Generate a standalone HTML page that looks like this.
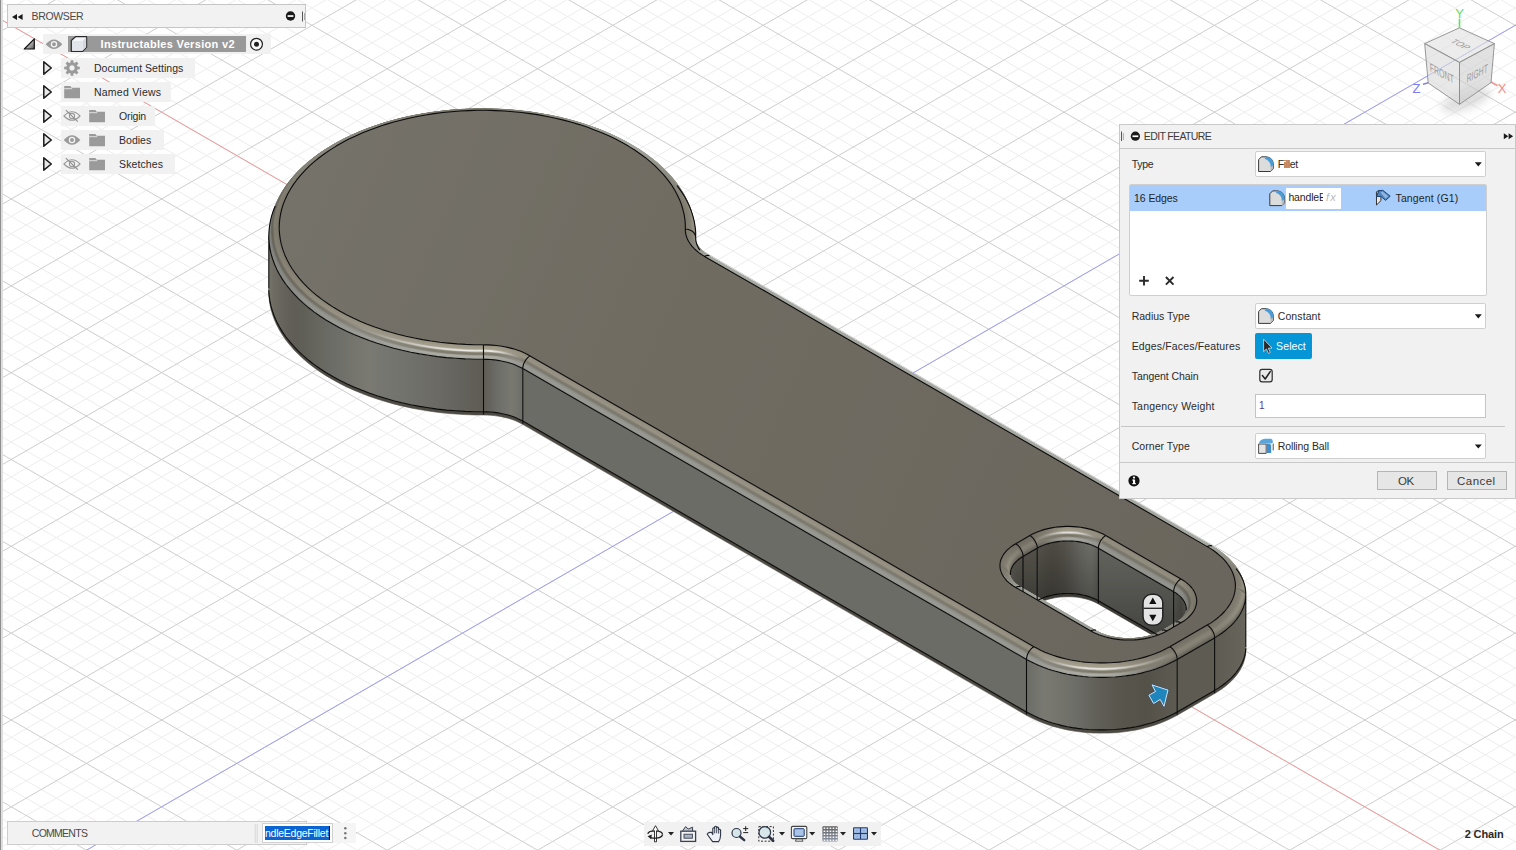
<!DOCTYPE html>
<html><head><meta charset="utf-8"><title>Fusion 360</title>
<style>
html,body{margin:0;padding:0;background:#fff;}
body{width:1516px;height:850px;overflow:hidden;position:relative;font-family:"Liberation Sans",sans-serif;font-size:12px;color:#333;}

.b{position:absolute;box-sizing:border-box;}
.t{position:absolute;white-space:nowrap;font-family:"Liberation Sans",sans-serif;}
svg.ic{position:absolute;left:0;top:0;overflow:visible;}

</style></head><body>
<svg width="1516" height="850" viewBox="0 0 1516 850" style="position:absolute;left:0;top:0"><path d="M-2909.0,579.6L555.1,2579.6M-2909.0,339.4L555.1,-1660.6M-2894.0,570.9L570.1,2570.9M-2894.0,348.1L570.1,-1651.9M-2878.9,562.2L585.2,2562.2M-2878.9,356.8L585.2,-1643.2M-2863.9,553.6L600.2,2553.6M-2863.9,365.4L600.2,-1634.6M-2833.8,536.2L630.3,2536.2M-2833.8,382.8L630.3,-1617.2M-2818.8,527.5L645.3,2527.5M-2818.8,391.5L645.3,-1608.5M-2803.7,518.8L660.4,2518.8M-2803.7,400.2L660.4,-1599.8M-2788.7,510.1L675.4,2510.1M-2788.7,408.9L675.4,-1591.1M-2758.6,492.8L705.5,2492.8M-2758.6,426.2L705.5,-1573.8M-2743.6,484.1L720.5,2484.1M-2743.6,434.9L720.5,-1565.1M-2728.5,475.4L735.6,2475.4M-2728.5,443.6L735.6,-1556.4M-2713.5,466.7L750.6,2466.7M-2713.5,452.3L750.6,-1547.7M-2683.4,449.4L780.7,2449.4M-2683.4,469.6L780.7,-1530.4M-2668.4,440.7L795.7,2440.7M-2668.4,478.3L795.7,-1521.7M-2653.3,432.0L810.8,2432.0M-2653.3,487.0L810.8,-1513.0M-2638.3,423.3L825.8,2423.3M-2638.3,495.7L825.8,-1504.3M-2608.2,405.9L855.9,2405.9M-2608.2,513.1L855.9,-1486.9M-2593.2,397.3L870.9,2397.3M-2593.2,521.7L870.9,-1478.3M-2578.1,388.6L886.0,2388.6M-2578.1,530.4L886.0,-1469.6M-2563.1,379.9L901.0,2379.9M-2563.1,539.1L901.0,-1460.9M-2533.0,362.5L931.1,2362.5M-2533.0,556.5L931.1,-1443.5M-2518.0,353.8L946.1,2353.8M-2518.0,565.2L946.1,-1434.8M-2502.9,345.2L961.2,2345.2M-2502.9,573.8L961.2,-1426.2M-2487.9,336.5L976.2,2336.5M-2487.9,582.5L976.2,-1417.5M-2457.8,319.1L1006.3,2319.1M-2457.8,599.9L1006.3,-1400.1M-2442.8,310.4L1021.3,2310.4M-2442.8,608.6L1021.3,-1391.4M-2427.7,301.8L1036.4,2301.8M-2427.7,617.2L1036.4,-1382.8M-2412.7,293.1L1051.4,2293.1M-2412.7,625.9L1051.4,-1374.1M-2382.6,275.7L1081.5,2275.7M-2382.6,643.3L1081.5,-1356.7M-2367.6,267.0L1096.5,2267.0M-2367.6,652.0L1096.5,-1348.0M-2352.5,258.3L1111.6,2258.3M-2352.5,660.7L1111.6,-1339.3M-2337.5,249.7L1126.6,2249.7M-2337.5,669.3L1126.6,-1330.7M-2307.4,232.3L1156.7,2232.3M-2307.4,686.7L1156.7,-1313.3M-2292.4,223.6L1171.7,2223.6M-2292.4,695.4L1171.7,-1304.6M-2277.3,214.9L1186.8,2214.9M-2277.3,704.1L1186.8,-1295.9M-2262.3,206.2L1201.8,2206.2M-2262.3,712.8L1201.8,-1287.2M-2232.2,188.9L1231.9,2188.9M-2232.2,730.1L1231.9,-1269.9M-2217.2,180.2L1246.9,2180.2M-2217.2,738.8L1246.9,-1261.2M-2202.1,171.5L1262.0,2171.5M-2202.1,747.5L1262.0,-1252.5M-2187.1,162.8L1277.0,2162.8M-2187.1,756.2L1277.0,-1243.8M-2157.0,145.5L1307.1,2145.5M-2157.0,773.5L1307.1,-1226.5M-2142.0,136.8L1322.1,2136.8M-2142.0,782.2L1322.1,-1217.8M-2126.9,128.1L1337.2,2128.1M-2126.9,790.9L1337.2,-1209.1M-2111.9,119.4L1352.2,2119.4M-2111.9,799.6L1352.2,-1200.4M-2081.8,102.0L1382.3,2102.0M-2081.8,817.0L1382.3,-1183.0M-2066.8,93.4L1397.3,2093.4M-2066.8,825.6L1397.3,-1174.4M-2051.7,84.7L1412.4,2084.7M-2051.7,834.3L1412.4,-1165.7M-2036.7,76.0L1427.4,2076.0M-2036.7,843.0L1427.4,-1157.0M-2006.6,58.6L1457.5,2058.6M-2006.6,860.4L1457.5,-1139.6M-1991.6,49.9L1472.5,2049.9M-1991.6,869.1L1472.5,-1130.9M-1976.5,41.3L1487.6,2041.3M-1976.5,877.7L1487.6,-1122.3M-1961.5,32.6L1502.6,2032.6M-1961.5,886.4L1502.6,-1113.6M-1931.4,15.2L1532.7,2015.2M-1931.4,903.8L1532.7,-1096.2M-1916.4,6.5L1547.7,2006.5M-1916.4,912.5L1547.7,-1087.5M-1901.3,-2.2L1562.8,1997.8M-1901.3,921.2L1562.8,-1078.8M-1886.3,-10.8L1577.8,1989.2M-1886.3,929.8L1577.8,-1070.2M-1856.2,-28.2L1607.9,1971.8M-1856.2,947.2L1607.9,-1052.8M-1841.2,-36.9L1622.9,1963.1M-1841.2,955.9L1622.9,-1044.1M-1826.1,-45.6L1638.0,1954.4M-1826.1,964.6L1638.0,-1035.4M-1811.1,-54.3L1653.0,1945.7M-1811.1,973.3L1653.0,-1026.7M-1781.0,-71.6L1683.1,1928.4M-1781.0,990.6L1683.1,-1009.4M-1766.0,-80.3L1698.1,1919.7M-1766.0,999.3L1698.1,-1000.7M-1750.9,-89.0L1713.2,1911.0M-1750.9,1008.0L1713.2,-992.0M-1735.9,-97.7L1728.2,1902.3M-1735.9,1016.7L1728.2,-983.3M-1705.8,-115.0L1758.3,1885.0M-1705.8,1034.0L1758.3,-966.0M-1690.8,-123.7L1773.3,1876.3M-1690.8,1042.7L1773.3,-957.3M-1675.7,-132.4L1788.4,1867.6M-1675.7,1051.4L1788.4,-948.6M-1660.7,-141.1L1803.4,1858.9M-1660.7,1060.1L1803.4,-939.9M-1630.6,-158.4L1833.5,1841.6M-1630.6,1077.4L1833.5,-922.6M-1615.6,-167.1L1848.5,1832.9M-1615.6,1086.1L1848.5,-913.9M-1600.5,-175.8L1863.6,1824.2M-1600.5,1094.8L1863.6,-905.2M-1585.5,-184.5L1878.6,1815.5M-1585.5,1103.5L1878.6,-896.5M-1555.4,-201.9L1908.7,1798.1M-1555.4,1120.9L1908.7,-879.1M-1540.4,-210.5L1923.7,1789.5M-1540.4,1129.5L1923.7,-870.5M-1525.3,-219.2L1938.8,1780.8M-1525.3,1138.2L1938.8,-861.8M-1510.3,-227.9L1953.8,1772.1M-1510.3,1146.9L1953.8,-853.1M-1480.2,-245.3L1983.9,1754.7M-1480.2,1164.3L1983.9,-835.7M-1465.2,-254.0L1998.9,1746.0M-1465.2,1173.0L1998.9,-827.0M-1450.1,-262.6L2014.0,1737.4M-1450.1,1181.6L2014.0,-818.4M-1435.1,-271.3L2029.0,1728.7M-1435.1,1190.3L2029.0,-809.7M-1405.0,-288.7L2059.1,1711.3M-1405.0,1207.7L2059.1,-792.3M-1390.0,-297.4L2074.1,1702.6M-1390.0,1216.4L2074.1,-783.6M-1374.9,-306.1L2089.2,1693.9M-1374.9,1225.1L2089.2,-774.9M-1359.9,-314.7L2104.2,1685.3M-1359.9,1233.7L2104.2,-766.3M-1329.8,-332.1L2134.3,1667.9M-1329.8,1251.1L2134.3,-748.9M-1314.8,-340.8L2149.3,1659.2M-1314.8,1259.8L2149.3,-740.2M-1299.7,-349.5L2164.4,1650.5M-1299.7,1268.5L2164.4,-731.5M-1284.7,-358.2L2179.4,1641.8M-1284.7,1277.2L2179.4,-722.8M-1254.6,-375.5L2209.5,1624.5M-1254.6,1294.5L2209.5,-705.5M-1239.6,-384.2L2224.5,1615.8M-1239.6,1303.2L2224.5,-696.8M-1224.5,-392.9L2239.6,1607.1M-1224.5,1311.9L2239.6,-688.1M-1209.5,-401.6L2254.6,1598.4M-1209.5,1320.6L2254.6,-679.4M-1179.4,-418.9L2284.7,1581.1M-1179.4,1337.9L2284.7,-662.1M-1164.4,-427.6L2299.7,1572.4M-1164.4,1346.6L2299.7,-653.4M-1149.3,-436.3L2314.8,1563.7M-1149.3,1355.3L2314.8,-644.7M-1134.3,-445.0L2329.8,1555.0M-1134.3,1364.0L2329.8,-636.0M-1104.2,-462.4L2359.9,1537.6M-1104.2,1381.4L2359.9,-618.6M-1089.2,-471.0L2374.9,1529.0M-1089.2,1390.0L2374.9,-610.0M-1074.1,-479.7L2390.0,1520.3M-1074.1,1398.7L2390.0,-601.3M-1059.1,-488.4L2405.0,1511.6M-1059.1,1407.4L2405.0,-592.6M-1029.0,-505.8L2435.1,1494.2M-1029.0,1424.8L2435.1,-575.2M-1014.0,-514.5L2450.1,1485.5M-1014.0,1433.5L2450.1,-566.5M-998.9,-523.1L2465.2,1476.9M-998.9,1442.1L2465.2,-557.9M-983.9,-531.8L2480.2,1468.2M-983.9,1450.8L2480.2,-549.2M-953.8,-549.2L2510.3,1450.8M-953.8,1468.2L2510.3,-531.8M-938.8,-557.9L2525.3,1442.1M-938.8,1476.9L2525.3,-523.1M-923.7,-566.5L2540.4,1433.5M-923.7,1485.5L2540.4,-514.5M-908.7,-575.2L2555.4,1424.8M-908.7,1494.2L2555.4,-505.8M-878.6,-592.6L2585.5,1407.4M-878.6,1511.6L2585.5,-488.4M-863.6,-601.3L2600.5,1398.7M-863.6,1520.3L2600.5,-479.7M-848.5,-610.0L2615.6,1390.0M-848.5,1529.0L2615.6,-471.0M-833.5,-618.6L2630.6,1381.4M-833.5,1537.6L2630.6,-462.4M-803.4,-636.0L2660.7,1364.0M-803.4,1555.0L2660.7,-445.0M-788.4,-644.7L2675.7,1355.3M-788.4,1563.7L2675.7,-436.3M-773.3,-653.4L2690.8,1346.6M-773.3,1572.4L2690.8,-427.6M-758.3,-662.1L2705.8,1337.9M-758.3,1581.1L2705.8,-418.9M-728.2,-679.4L2735.9,1320.6M-728.2,1598.4L2735.9,-401.6M-713.2,-688.1L2750.9,1311.9M-713.2,1607.1L2750.9,-392.9M-698.1,-696.8L2766.0,1303.2M-698.1,1615.8L2766.0,-384.2M-683.1,-705.5L2781.0,1294.5M-683.1,1624.5L2781.0,-375.5M-653.0,-722.8L2811.1,1277.2M-653.0,1641.8L2811.1,-358.2M-638.0,-731.5L2826.1,1268.5M-638.0,1650.5L2826.1,-349.5M-622.9,-740.2L2841.2,1259.8M-622.9,1659.2L2841.2,-340.8M-607.9,-748.9L2856.2,1251.1M-607.9,1667.9L2856.2,-332.1M-577.8,-766.3L2886.3,1233.7M-577.8,1685.3L2886.3,-314.7M-562.8,-774.9L2901.3,1225.1M-562.8,1693.9L2901.3,-306.1M-547.7,-783.6L2916.4,1216.4M-547.7,1702.6L2916.4,-297.4M-532.7,-792.3L2931.4,1207.7M-532.7,1711.3L2931.4,-288.7M-502.6,-809.7L2961.5,1190.3M-502.6,1728.7L2961.5,-271.3M-487.6,-818.4L2976.5,1181.6M-487.6,1737.4L2976.5,-262.6M-472.5,-827.0L2991.6,1173.0M-472.5,1746.0L2991.6,-254.0M-457.5,-835.7L3006.6,1164.3M-457.5,1754.7L3006.6,-245.3M-427.4,-853.1L3036.7,1146.9M-427.4,1772.1L3036.7,-227.9M-412.4,-861.8L3051.7,1138.2M-412.4,1780.8L3051.7,-219.2M-397.3,-870.5L3066.8,1129.5M-397.3,1789.5L3066.8,-210.5M-382.3,-879.1L3081.8,1120.9M-382.3,1798.1L3081.8,-201.9M-352.2,-896.5L3111.9,1103.5M-352.2,1815.5L3111.9,-184.5M-337.2,-905.2L3126.9,1094.8M-337.2,1824.2L3126.9,-175.8M-322.1,-913.9L3142.0,1086.1M-322.1,1832.9L3142.0,-167.1M-307.1,-922.6L3157.0,1077.4M-307.1,1841.6L3157.0,-158.4M-277.0,-939.9L3187.1,1060.1M-277.0,1858.9L3187.1,-141.1M-262.0,-948.6L3202.1,1051.4M-262.0,1867.6L3202.1,-132.4M-246.9,-957.3L3217.2,1042.7M-246.9,1876.3L3217.2,-123.7M-231.9,-966.0L3232.2,1034.0M-231.9,1885.0L3232.2,-115.0M-201.8,-983.3L3262.3,1016.7M-201.8,1902.3L3262.3,-97.7M-186.8,-992.0L3277.3,1008.0M-186.8,1911.0L3277.3,-89.0M-171.7,-1000.7L3292.4,999.3M-171.7,1919.7L3292.4,-80.3M-156.7,-1009.4L3307.4,990.6M-156.7,1928.4L3307.4,-71.6M-126.6,-1026.7L3337.5,973.3M-126.6,1945.7L3337.5,-54.3M-111.6,-1035.4L3352.5,964.6M-111.6,1954.4L3352.5,-45.6M-96.5,-1044.1L3367.6,955.9M-96.5,1963.1L3367.6,-36.9M-81.5,-1052.8L3382.6,947.2M-81.5,1971.8L3382.6,-28.2M-51.4,-1070.2L3412.7,929.8M-51.4,1989.2L3412.7,-10.8M-36.4,-1078.8L3427.7,921.2M-36.4,1997.8L3427.7,-2.2M-21.3,-1087.5L3442.8,912.5M-21.3,2006.5L3442.8,6.5M-6.3,-1096.2L3457.8,903.8M-6.3,2015.2L3457.8,15.2M23.8,-1113.6L3487.9,886.4M23.8,2032.6L3487.9,32.6M38.8,-1122.3L3502.9,877.7M38.8,2041.3L3502.9,41.3M53.9,-1130.9L3518.0,869.1M53.9,2049.9L3518.0,49.9M68.9,-1139.6L3533.0,860.4M68.9,2058.6L3533.0,58.6M99.0,-1157.0L3563.1,843.0M99.0,2076.0L3563.1,76.0M114.0,-1165.7L3578.1,834.3M114.0,2084.7L3578.1,84.7M129.1,-1174.4L3593.2,825.6M129.1,2093.4L3593.2,93.4M144.1,-1183.0L3608.2,817.0M144.1,2102.0L3608.2,102.0M174.2,-1200.4L3638.3,799.6M174.2,2119.4L3638.3,119.4M189.2,-1209.1L3653.3,790.9M189.2,2128.1L3653.3,128.1M204.3,-1217.8L3668.4,782.2M204.3,2136.8L3668.4,136.8M219.3,-1226.5L3683.4,773.5M219.3,2145.5L3683.4,145.5M249.4,-1243.8L3713.5,756.2M249.4,2162.8L3713.5,162.8M264.4,-1252.5L3728.5,747.5M264.4,2171.5L3728.5,171.5M279.5,-1261.2L3743.6,738.8M279.5,2180.2L3743.6,180.2M294.5,-1269.9L3758.6,730.1M294.5,2188.9L3758.6,188.9M324.6,-1287.2L3788.7,712.8M324.6,2206.2L3788.7,206.2M339.6,-1295.9L3803.7,704.1M339.6,2214.9L3803.7,214.9M354.7,-1304.6L3818.8,695.4M354.7,2223.6L3818.8,223.6M369.7,-1313.3L3833.8,686.7M369.7,2232.3L3833.8,232.3M399.8,-1330.7L3863.9,669.3M399.8,2249.7L3863.9,249.7M414.8,-1339.3L3878.9,660.7M414.8,2258.3L3878.9,258.3M429.9,-1348.0L3894.0,652.0M429.9,2267.0L3894.0,267.0M444.9,-1356.7L3909.0,643.3M444.9,2275.7L3909.0,275.7M475.0,-1374.1L3939.1,625.9M475.0,2293.1L3939.1,293.1M490.0,-1382.8L3954.1,617.2M490.0,2301.8L3954.1,301.8M505.1,-1391.4L3969.2,608.6M505.1,2310.4L3969.2,310.4M520.1,-1400.1L3984.2,599.9M520.1,2319.1L3984.2,319.1M550.2,-1417.5L4014.3,582.5M550.2,2336.5L4014.3,336.5M565.2,-1426.2L4029.3,573.8M565.2,2345.2L4029.3,345.2M580.3,-1434.8L4044.4,565.2M580.3,2353.8L4044.4,353.8M595.3,-1443.5L4059.4,556.5M595.3,2362.5L4059.4,362.5M625.4,-1460.9L4089.5,539.1M625.4,2379.9L4089.5,379.9M640.4,-1469.6L4104.5,530.4M640.4,2388.6L4104.5,388.6M655.5,-1478.3L4119.6,521.7M655.5,2397.3L4119.6,397.3M670.5,-1486.9L4134.6,513.1M670.5,2405.9L4134.6,405.9M700.6,-1504.3L4164.7,495.7M700.6,2423.3L4164.7,423.3M715.6,-1513.0L4179.7,487.0M715.6,2432.0L4179.7,432.0M730.7,-1521.7L4194.8,478.3M730.7,2440.7L4194.8,440.7M745.7,-1530.4L4209.8,469.6M745.7,2449.4L4209.8,449.4M775.8,-1547.7L4239.9,452.3M775.8,2466.7L4239.9,466.7M790.8,-1556.4L4254.9,443.6M790.8,2475.4L4254.9,475.4M805.9,-1565.1L4270.0,434.9M805.9,2484.1L4270.0,484.1M820.9,-1573.8L4285.0,426.2M820.9,2492.8L4285.0,492.8M851.0,-1591.1L4315.1,408.9M851.0,2510.1L4315.1,510.1M866.0,-1599.8L4330.1,400.2M866.0,2518.8L4330.1,518.8M881.1,-1608.5L4345.2,391.5M881.1,2527.5L4345.2,527.5M896.1,-1617.2L4360.2,382.8M896.1,2536.2L4360.2,536.2M926.2,-1634.6L4390.3,365.4M926.2,2553.6L4390.3,553.6M941.2,-1643.2L4405.3,356.8M941.2,2562.2L4405.3,562.2M956.3,-1651.9L4420.4,348.1M956.3,2570.9L4420.4,570.9M971.3,-1660.6L4435.4,339.4M971.3,2579.6L4435.4,579.6" stroke="#ededed" stroke-width="1" fill="none"/><path d="M-2924.1,588.3L540.1,2588.3M-2924.1,330.7L540.1,-1669.3M-2848.9,544.9L615.3,2544.9M-2848.9,374.1L615.3,-1625.9M-2773.7,501.5L690.5,2501.5M-2773.7,417.5L690.5,-1582.5M-2698.5,458.0L765.7,2458.0M-2698.5,461.0L765.7,-1539.0M-2623.3,414.6L840.9,2414.6M-2623.3,504.4L840.9,-1495.6M-2548.1,371.2L916.1,2371.2M-2548.1,547.8L916.1,-1452.2M-2472.9,327.8L991.3,2327.8M-2472.9,591.2L991.3,-1408.8M-2397.7,284.4L1066.5,2284.4M-2397.7,634.6L1066.5,-1365.4M-2322.5,241.0L1141.7,2241.0M-2322.5,678.0L1141.7,-1322.0M-2247.3,197.6L1216.9,2197.6M-2247.3,721.4L1216.9,-1278.6M-2172.1,154.1L1292.1,2154.1M-2172.1,764.9L1292.1,-1235.1M-2096.9,110.7L1367.3,2110.7M-2096.9,808.3L1367.3,-1191.7M-2021.7,67.3L1442.5,2067.3M-2021.7,851.7L1442.5,-1148.3M-1946.5,23.9L1517.7,2023.9M-1946.5,895.1L1517.7,-1104.9M-1871.3,-19.5L1592.9,1980.5M-1871.3,938.5L1592.9,-1061.5M-1796.1,-62.9L1668.1,1937.1M-1796.1,981.9L1668.1,-1018.1M-1720.9,-106.4L1743.3,1893.7M-1720.9,1025.3L1743.3,-974.6M-1645.7,-149.8L1818.5,1850.2M-1645.7,1068.8L1818.5,-931.2M-1570.5,-193.2L1893.7,1806.8M-1570.5,1112.2L1893.7,-887.8M-1495.3,-236.6L1968.9,1763.4M-1495.3,1155.6L1968.9,-844.4M-1420.1,-280.0L2044.1,1720.0M-1420.1,1199.0L2044.1,-801.0M-1344.9,-323.4L2119.3,1676.6M-1344.9,1242.4L2119.3,-757.6M-1269.7,-366.8L2194.5,1633.2M-1269.7,1285.8L2194.5,-714.2M-1194.5,-410.3L2269.7,1589.7M-1194.5,1329.3L2269.7,-670.7M-1119.3,-453.7L2344.9,1546.3M-1119.3,1372.7L2344.9,-627.3M-1044.1,-497.1L2420.1,1502.9M-1044.1,1416.1L2420.1,-583.9M-968.9,-540.5L2495.3,1459.5M-968.9,1459.5L2495.3,-540.5M-893.7,-583.9L2570.5,1416.1M-893.7,1502.9L2570.5,-497.1M-818.5,-627.3L2645.7,1372.7M-818.5,1546.3L2645.7,-453.7M-743.3,-670.7L2720.9,1329.3M-743.3,1589.7L2720.9,-410.3M-668.1,-714.2L2796.1,1285.8M-668.1,1633.2L2796.1,-366.8M-592.9,-757.6L2871.3,1242.4M-592.9,1676.6L2871.3,-323.4M-517.7,-801.0L2946.5,1199.0M-517.7,1720.0L2946.5,-280.0M-442.5,-844.4L3021.7,1155.6M-442.5,1763.4L3021.7,-236.6M-367.3,-887.8L3096.9,1112.2M-367.3,1806.8L3096.9,-193.2M-292.1,-931.2L3172.1,1068.8M-292.1,1850.2L3172.1,-149.8M-216.9,-974.6L3247.3,1025.3M-216.9,1893.7L3247.3,-106.4M-141.7,-1018.1L3322.5,981.9M-141.7,1937.1L3322.5,-62.9M-66.5,-1061.5L3397.7,938.5M-66.5,1980.5L3397.7,-19.5M8.7,-1104.9L3472.9,895.1M8.7,2023.9L3472.9,23.9M83.9,-1148.3L3548.1,851.7M83.9,2067.3L3548.1,67.3M159.1,-1191.7L3623.3,808.3M159.1,2110.7L3623.3,110.7M234.3,-1235.1L3698.5,764.9M234.3,2154.1L3698.5,154.1M309.5,-1278.6L3773.7,721.4M309.5,2197.6L3773.7,197.6M384.7,-1322.0L3848.9,678.0M384.7,2241.0L3848.9,241.0M459.9,-1365.4L3924.1,634.6M459.9,2284.4L3924.1,284.4M535.1,-1408.8L3999.3,591.2M535.1,2327.8L3999.3,327.8M610.3,-1452.2L4074.5,547.8M610.3,2371.2L4074.5,371.2M685.5,-1495.6L4149.7,504.4M685.5,2414.6L4149.7,414.6M760.7,-1539.0L4224.9,461.0M760.7,2458.0L4224.9,458.0M835.9,-1582.5L4300.1,417.5M835.9,2501.5L4300.1,501.5M911.1,-1625.9L4375.3,374.1M911.1,2544.9L4375.3,544.9M986.3,-1669.3L4450.5,330.7M986.3,2588.3L4450.5,588.3" stroke="#cdcdcd" stroke-width="1" fill="none"/><path d="M-968.9,-540.5L2495.3,1459.5" stroke="#f59c9c" stroke-width="1" fill="none"/><path d="M-968.9,1459.5L2495.3,-540.5" stroke="#a0a0f6" stroke-width="1" fill="none"/><defs><clipPath id="slotclip"><path d="M1105.7,535.5 L1130.8,550.0 L1155.9,564.5 L1181.0,579.0 L1183.5,580.5 L1185.8,582.1 L1187.9,583.9 L1189.8,585.7 L1191.5,587.5 L1193.0,589.5 L1194.2,591.5 L1195.2,593.5 L1195.9,595.6 L1196.4,597.7 L1196.7,599.8 L1196.7,601.9 L1196.4,604.0 L1195.9,606.1 L1195.2,608.2 L1194.2,610.2 L1193.0,612.2 L1191.5,614.2 L1189.8,616.0 L1187.9,617.8 L1185.8,619.6 L1183.5,621.2 L1181.0,622.8 L1166.8,631.0 L1164.1,632.4 L1161.3,633.7 L1158.3,634.9 L1155.2,636.0 L1151.9,637.0 L1148.5,637.9 L1145.1,638.6 L1141.6,639.1 L1138.0,639.6 L1134.3,639.9 L1130.7,640.0 L1127.0,640.0 L1123.4,639.9 L1119.7,639.6 L1116.2,639.1 L1112.6,638.6 L1109.2,637.9 L1105.8,637.0 L1102.6,636.0 L1099.4,634.9 L1096.5,633.7 L1093.6,632.4 L1090.9,631.0 L1065.8,616.5 L1040.8,602.0 L1015.7,587.5 L1013.2,586.0 L1010.9,584.3 L1008.8,582.6 L1006.8,580.8 L1005.2,578.9 L1003.7,577.0 L1002.5,575.0 L1001.5,572.9 L1000.7,570.9 L1000.2,568.8 L1000.0,566.7 L1000.0,564.5 L1000.2,562.4 L1000.7,560.3 L1001.5,558.3 L1002.5,556.2 L1003.7,554.2 L1005.2,552.3 L1006.8,550.4 L1008.8,548.6 L1010.9,546.9 L1013.2,545.2 L1015.7,543.7 L1029.9,535.5 L1032.6,534.1 L1035.4,532.7 L1038.4,531.5 L1041.5,530.4 L1044.8,529.4 L1048.1,528.6 L1051.6,527.9 L1055.1,527.3 L1058.7,526.9 L1062.3,526.6 L1066.0,526.4 L1069.6,526.4 L1073.3,526.6 L1076.9,526.9 L1080.5,527.3 L1084.0,527.9 L1087.5,528.6 L1090.8,529.4 L1094.1,530.4 L1097.2,531.5 L1100.2,532.7 L1103.1,534.1Z"/></clipPath><linearGradient id="topg" gradientUnits="userSpaceOnUse" x1="280" y1="200" x2="1240" y2="620"><stop offset="0" stop-color="#75726a"/><stop offset="0.35" stop-color="#706c62"/><stop offset="1" stop-color="#6b665d"/></linearGradient><linearGradient id="slotsh" x1="0" y1="0" x2="0" y2="1"><stop offset="0" stop-color="#000" stop-opacity="0"/><stop offset="1" stop-color="#000" stop-opacity="0.42"/></linearGradient><linearGradient id="g1" gradientUnits="userSpaceOnUse" x1="268.9" y1="0" x2="695.7" y2="0"><stop offset="0.000" stop-color="#7e7e79"/><stop offset="0.000" stop-color="#7e7e79"/><stop offset="0.003" stop-color="#7d7d79"/><stop offset="0.010" stop-color="#7d7d79"/><stop offset="0.021" stop-color="#7f7f79"/><stop offset="0.035" stop-color="#81807a"/><stop offset="0.053" stop-color="#83827b"/><stop offset="0.074" stop-color="#85847c"/><stop offset="0.098" stop-color="#88867e"/><stop offset="0.125" stop-color="#8a887f"/><stop offset="0.156" stop-color="#8b897f"/><stop offset="0.188" stop-color="#89877d"/><stop offset="0.223" stop-color="#87857b"/><stop offset="0.260" stop-color="#858378"/><stop offset="0.299" stop-color="#838176"/><stop offset="0.340" stop-color="#817f74"/><stop offset="0.382" stop-color="#7f7d71"/><stop offset="0.424" stop-color="#7d7b6f"/><stop offset="0.467" stop-color="#7b796d"/><stop offset="0.511" stop-color="#7b786c"/><stop offset="0.554" stop-color="#807e72"/><stop offset="0.597" stop-color="#858378"/><stop offset="0.639" stop-color="#89897e"/><stop offset="0.680" stop-color="#8e8e84"/><stop offset="0.720" stop-color="#93938a"/><stop offset="0.758" stop-color="#989990"/><stop offset="0.794" stop-color="#9c9e95"/><stop offset="0.828" stop-color="#a1a49b"/><stop offset="0.860" stop-color="#a3a69e"/><stop offset="0.888" stop-color="#9a9b93"/><stop offset="0.914" stop-color="#909189"/><stop offset="0.937" stop-color="#87877e"/><stop offset="0.956" stop-color="#7f7e75"/><stop offset="0.972" stop-color="#77756c"/><stop offset="0.985" stop-color="#706d63"/><stop offset="0.994" stop-color="#6a675d"/><stop offset="0.999" stop-color="#6c695f"/><stop offset="1.000" stop-color="#6e6b60"/></linearGradient><linearGradient id="g2" gradientUnits="userSpaceOnUse" x1="269.2" y1="0" x2="695.3" y2="0"><stop offset="0.000" stop-color="#82827e"/><stop offset="0.000" stop-color="#82827e"/><stop offset="0.003" stop-color="#82827d"/><stop offset="0.010" stop-color="#82827d"/><stop offset="0.021" stop-color="#83827d"/><stop offset="0.035" stop-color="#84837d"/><stop offset="0.053" stop-color="#86857e"/><stop offset="0.074" stop-color="#87867e"/><stop offset="0.098" stop-color="#89877f"/><stop offset="0.125" stop-color="#8b897f"/><stop offset="0.156" stop-color="#8b897f"/><stop offset="0.188" stop-color="#89877d"/><stop offset="0.223" stop-color="#87857b"/><stop offset="0.260" stop-color="#858378"/><stop offset="0.299" stop-color="#838176"/><stop offset="0.340" stop-color="#817f74"/><stop offset="0.382" stop-color="#7f7d71"/><stop offset="0.424" stop-color="#7d7b6f"/><stop offset="0.467" stop-color="#7b796d"/><stop offset="0.511" stop-color="#7b786c"/><stop offset="0.554" stop-color="#807e72"/><stop offset="0.597" stop-color="#858378"/><stop offset="0.639" stop-color="#89897e"/><stop offset="0.680" stop-color="#8e8e84"/><stop offset="0.720" stop-color="#93938a"/><stop offset="0.758" stop-color="#989990"/><stop offset="0.794" stop-color="#9c9e95"/><stop offset="0.828" stop-color="#a1a49b"/><stop offset="0.860" stop-color="#a3a69e"/><stop offset="0.888" stop-color="#9b9d95"/><stop offset="0.914" stop-color="#94958c"/><stop offset="0.937" stop-color="#8c8c83"/><stop offset="0.956" stop-color="#86857b"/><stop offset="0.972" stop-color="#807e74"/><stop offset="0.985" stop-color="#7a786d"/><stop offset="0.994" stop-color="#777368"/><stop offset="0.999" stop-color="#79756a"/><stop offset="1.000" stop-color="#7b776b"/></linearGradient><linearGradient id="g3" gradientUnits="userSpaceOnUse" x1="269.7" y1="0" x2="694.9" y2="0"><stop offset="0.000" stop-color="#83837f"/><stop offset="0.000" stop-color="#83837f"/><stop offset="0.003" stop-color="#82827e"/><stop offset="0.010" stop-color="#82827e"/><stop offset="0.021" stop-color="#83837e"/><stop offset="0.035" stop-color="#85847e"/><stop offset="0.053" stop-color="#86857e"/><stop offset="0.074" stop-color="#87867e"/><stop offset="0.098" stop-color="#89877f"/><stop offset="0.125" stop-color="#8b897f"/><stop offset="0.156" stop-color="#8b897f"/><stop offset="0.188" stop-color="#89877d"/><stop offset="0.223" stop-color="#87857b"/><stop offset="0.260" stop-color="#858378"/><stop offset="0.299" stop-color="#838176"/><stop offset="0.340" stop-color="#817f74"/><stop offset="0.382" stop-color="#7f7d71"/><stop offset="0.424" stop-color="#7d7b6f"/><stop offset="0.467" stop-color="#7b796d"/><stop offset="0.511" stop-color="#7b786c"/><stop offset="0.554" stop-color="#807e72"/><stop offset="0.597" stop-color="#858378"/><stop offset="0.639" stop-color="#89897e"/><stop offset="0.680" stop-color="#8e8e84"/><stop offset="0.720" stop-color="#93938a"/><stop offset="0.758" stop-color="#989990"/><stop offset="0.794" stop-color="#9c9e95"/><stop offset="0.828" stop-color="#a1a49b"/><stop offset="0.860" stop-color="#a4a79e"/><stop offset="0.888" stop-color="#9d9f97"/><stop offset="0.914" stop-color="#97988f"/><stop offset="0.937" stop-color="#919187"/><stop offset="0.956" stop-color="#8c8b81"/><stop offset="0.972" stop-color="#88867b"/><stop offset="0.985" stop-color="#858276"/><stop offset="0.994" stop-color="#837f72"/><stop offset="0.999" stop-color="#858174"/><stop offset="1.000" stop-color="#888376"/></linearGradient><linearGradient id="g4" gradientUnits="userSpaceOnUse" x1="270.0" y1="0" x2="694.5" y2="0"><stop offset="0.000" stop-color="#80807c"/><stop offset="0.000" stop-color="#80807c"/><stop offset="0.003" stop-color="#80807c"/><stop offset="0.010" stop-color="#80807b"/><stop offset="0.021" stop-color="#81817c"/><stop offset="0.035" stop-color="#83827c"/><stop offset="0.053" stop-color="#85847d"/><stop offset="0.074" stop-color="#86857d"/><stop offset="0.098" stop-color="#88877e"/><stop offset="0.125" stop-color="#8a897f"/><stop offset="0.156" stop-color="#8b897f"/><stop offset="0.188" stop-color="#89877d"/><stop offset="0.223" stop-color="#87857b"/><stop offset="0.260" stop-color="#858378"/><stop offset="0.299" stop-color="#838176"/><stop offset="0.340" stop-color="#817f74"/><stop offset="0.382" stop-color="#7f7d71"/><stop offset="0.424" stop-color="#7d7b6f"/><stop offset="0.467" stop-color="#7b796d"/><stop offset="0.511" stop-color="#7b786c"/><stop offset="0.554" stop-color="#807e72"/><stop offset="0.597" stop-color="#858378"/><stop offset="0.639" stop-color="#89897e"/><stop offset="0.680" stop-color="#8e8e84"/><stop offset="0.720" stop-color="#93938a"/><stop offset="0.758" stop-color="#989990"/><stop offset="0.794" stop-color="#9c9e95"/><stop offset="0.828" stop-color="#a1a49b"/><stop offset="0.860" stop-color="#a4a79f"/><stop offset="0.888" stop-color="#9ea097"/><stop offset="0.914" stop-color="#999a90"/><stop offset="0.937" stop-color="#94948a"/><stop offset="0.956" stop-color="#908f84"/><stop offset="0.972" stop-color="#8d8b7f"/><stop offset="0.985" stop-color="#8a877b"/><stop offset="0.994" stop-color="#898578"/><stop offset="0.999" stop-color="#8c887a"/><stop offset="1.000" stop-color="#8e8a7c"/></linearGradient><linearGradient id="g5" gradientUnits="userSpaceOnUse" x1="270.5" y1="0" x2="694.0" y2="0"><stop offset="0.000" stop-color="#7e7e79"/><stop offset="0.000" stop-color="#7d7d79"/><stop offset="0.003" stop-color="#7d7d79"/><stop offset="0.010" stop-color="#7d7d79"/><stop offset="0.021" stop-color="#7f7f79"/><stop offset="0.035" stop-color="#81807a"/><stop offset="0.053" stop-color="#83827b"/><stop offset="0.074" stop-color="#85847c"/><stop offset="0.098" stop-color="#88867e"/><stop offset="0.125" stop-color="#8a887f"/><stop offset="0.156" stop-color="#8b897f"/><stop offset="0.188" stop-color="#89877d"/><stop offset="0.223" stop-color="#87857b"/><stop offset="0.260" stop-color="#858378"/><stop offset="0.299" stop-color="#838176"/><stop offset="0.340" stop-color="#817f74"/><stop offset="0.382" stop-color="#7f7d71"/><stop offset="0.424" stop-color="#7d7b6f"/><stop offset="0.467" stop-color="#7b796d"/><stop offset="0.511" stop-color="#7b786c"/><stop offset="0.554" stop-color="#807e72"/><stop offset="0.597" stop-color="#858378"/><stop offset="0.639" stop-color="#89897e"/><stop offset="0.680" stop-color="#8e8e84"/><stop offset="0.720" stop-color="#93938a"/><stop offset="0.758" stop-color="#989990"/><stop offset="0.794" stop-color="#9c9e95"/><stop offset="0.828" stop-color="#a1a49b"/><stop offset="0.860" stop-color="#a4a79f"/><stop offset="0.888" stop-color="#9fa198"/><stop offset="0.914" stop-color="#9a9b92"/><stop offset="0.937" stop-color="#96968b"/><stop offset="0.956" stop-color="#929186"/><stop offset="0.972" stop-color="#908e82"/><stop offset="0.985" stop-color="#8e8b7e"/><stop offset="0.994" stop-color="#8e897c"/><stop offset="0.999" stop-color="#908c7e"/><stop offset="1.000" stop-color="#938e80"/></linearGradient><linearGradient id="g6" gradientUnits="userSpaceOnUse" x1="271.1" y1="0" x2="693.5" y2="0"><stop offset="0.000" stop-color="#706f67"/><stop offset="0.000" stop-color="#706f67"/><stop offset="0.003" stop-color="#706f67"/><stop offset="0.010" stop-color="#717068"/><stop offset="0.021" stop-color="#74736b"/><stop offset="0.035" stop-color="#78776e"/><stop offset="0.053" stop-color="#7c7b72"/><stop offset="0.074" stop-color="#807f76"/><stop offset="0.098" stop-color="#858379"/><stop offset="0.125" stop-color="#89877d"/><stop offset="0.156" stop-color="#8b897f"/><stop offset="0.188" stop-color="#89877d"/><stop offset="0.223" stop-color="#87857b"/><stop offset="0.260" stop-color="#858378"/><stop offset="0.299" stop-color="#838176"/><stop offset="0.340" stop-color="#817f74"/><stop offset="0.382" stop-color="#7f7d71"/><stop offset="0.424" stop-color="#7d7b6f"/><stop offset="0.467" stop-color="#7b796d"/><stop offset="0.511" stop-color="#7b786c"/><stop offset="0.554" stop-color="#807e72"/><stop offset="0.597" stop-color="#858378"/><stop offset="0.639" stop-color="#89897e"/><stop offset="0.680" stop-color="#8e8e84"/><stop offset="0.720" stop-color="#93938a"/><stop offset="0.758" stop-color="#989990"/><stop offset="0.794" stop-color="#9c9e95"/><stop offset="0.828" stop-color="#a1a49b"/><stop offset="0.860" stop-color="#a4a79f"/><stop offset="0.888" stop-color="#a0a299"/><stop offset="0.914" stop-color="#9b9c93"/><stop offset="0.937" stop-color="#98978d"/><stop offset="0.956" stop-color="#959489"/><stop offset="0.972" stop-color="#939185"/><stop offset="0.985" stop-color="#928f82"/><stop offset="0.994" stop-color="#928e80"/><stop offset="0.999" stop-color="#959082"/><stop offset="1.000" stop-color="#979384"/></linearGradient><linearGradient id="g7" gradientUnits="userSpaceOnUse" x1="271.6" y1="0" x2="693.0" y2="0"><stop offset="0.000" stop-color="#676459"/><stop offset="0.000" stop-color="#676359"/><stop offset="0.003" stop-color="#666359"/><stop offset="0.010" stop-color="#68655a"/><stop offset="0.021" stop-color="#6d6a60"/><stop offset="0.035" stop-color="#726f65"/><stop offset="0.053" stop-color="#77756b"/><stop offset="0.074" stop-color="#7d7a70"/><stop offset="0.098" stop-color="#828076"/><stop offset="0.125" stop-color="#88867c"/><stop offset="0.156" stop-color="#8b897f"/><stop offset="0.188" stop-color="#89877d"/><stop offset="0.223" stop-color="#87857b"/><stop offset="0.260" stop-color="#858378"/><stop offset="0.299" stop-color="#838176"/><stop offset="0.340" stop-color="#817f74"/><stop offset="0.382" stop-color="#7f7d71"/><stop offset="0.424" stop-color="#7d7b6f"/><stop offset="0.467" stop-color="#7b796d"/><stop offset="0.511" stop-color="#7b786c"/><stop offset="0.554" stop-color="#807e72"/><stop offset="0.597" stop-color="#858378"/><stop offset="0.639" stop-color="#89897e"/><stop offset="0.680" stop-color="#8e8e84"/><stop offset="0.720" stop-color="#93938a"/><stop offset="0.758" stop-color="#989990"/><stop offset="0.794" stop-color="#9c9e95"/><stop offset="0.828" stop-color="#a1a49b"/><stop offset="0.860" stop-color="#a4a79f"/><stop offset="0.888" stop-color="#a0a199"/><stop offset="0.914" stop-color="#9b9c92"/><stop offset="0.937" stop-color="#97978d"/><stop offset="0.956" stop-color="#949388"/><stop offset="0.972" stop-color="#929084"/><stop offset="0.985" stop-color="#918e81"/><stop offset="0.994" stop-color="#918d7f"/><stop offset="0.999" stop-color="#948f81"/><stop offset="1.000" stop-color="#969283"/></linearGradient><linearGradient id="g8" gradientUnits="userSpaceOnUse" x1="272.1" y1="0" x2="692.5" y2="0"><stop offset="0.000" stop-color="#676459"/><stop offset="0.000" stop-color="#676359"/><stop offset="0.003" stop-color="#666359"/><stop offset="0.010" stop-color="#68645a"/><stop offset="0.021" stop-color="#6d6a60"/><stop offset="0.035" stop-color="#726f65"/><stop offset="0.053" stop-color="#77756b"/><stop offset="0.074" stop-color="#7d7a70"/><stop offset="0.098" stop-color="#828076"/><stop offset="0.125" stop-color="#88867c"/><stop offset="0.156" stop-color="#8b897f"/><stop offset="0.188" stop-color="#89877d"/><stop offset="0.223" stop-color="#87857b"/><stop offset="0.260" stop-color="#858378"/><stop offset="0.299" stop-color="#838176"/><stop offset="0.340" stop-color="#817f74"/><stop offset="0.382" stop-color="#7f7d71"/><stop offset="0.424" stop-color="#7d7b6f"/><stop offset="0.467" stop-color="#7b796d"/><stop offset="0.511" stop-color="#7b786c"/><stop offset="0.554" stop-color="#807e72"/><stop offset="0.597" stop-color="#858378"/><stop offset="0.639" stop-color="#89897e"/><stop offset="0.680" stop-color="#8e8e84"/><stop offset="0.720" stop-color="#93938a"/><stop offset="0.758" stop-color="#989990"/><stop offset="0.794" stop-color="#9c9e95"/><stop offset="0.828" stop-color="#a1a49b"/><stop offset="0.860" stop-color="#a4a79f"/><stop offset="0.888" stop-color="#9fa198"/><stop offset="0.914" stop-color="#9a9b92"/><stop offset="0.937" stop-color="#96968c"/><stop offset="0.956" stop-color="#939287"/><stop offset="0.972" stop-color="#908e82"/><stop offset="0.985" stop-color="#8f8b7e"/><stop offset="0.994" stop-color="#8e8a7c"/><stop offset="0.999" stop-color="#918c7e"/><stop offset="1.000" stop-color="#938f80"/></linearGradient><linearGradient id="g9" gradientUnits="userSpaceOnUse" x1="272.5" y1="0" x2="692.0" y2="0"><stop offset="0.000" stop-color="#68645a"/><stop offset="0.000" stop-color="#67645a"/><stop offset="0.003" stop-color="#676459"/><stop offset="0.010" stop-color="#68655b"/><stop offset="0.021" stop-color="#6d6a60"/><stop offset="0.035" stop-color="#737065"/><stop offset="0.053" stop-color="#78756b"/><stop offset="0.074" stop-color="#7d7b70"/><stop offset="0.098" stop-color="#828076"/><stop offset="0.125" stop-color="#88867c"/><stop offset="0.156" stop-color="#8b897f"/><stop offset="0.188" stop-color="#89877d"/><stop offset="0.223" stop-color="#87857b"/><stop offset="0.260" stop-color="#858378"/><stop offset="0.299" stop-color="#838176"/><stop offset="0.340" stop-color="#817f74"/><stop offset="0.382" stop-color="#7f7d71"/><stop offset="0.424" stop-color="#7d7b6f"/><stop offset="0.467" stop-color="#7b796d"/><stop offset="0.511" stop-color="#7b786c"/><stop offset="0.554" stop-color="#807e72"/><stop offset="0.597" stop-color="#858378"/><stop offset="0.639" stop-color="#89897e"/><stop offset="0.680" stop-color="#8e8e84"/><stop offset="0.720" stop-color="#93938a"/><stop offset="0.758" stop-color="#989990"/><stop offset="0.794" stop-color="#9c9e95"/><stop offset="0.828" stop-color="#a1a49b"/><stop offset="0.860" stop-color="#a4a79f"/><stop offset="0.888" stop-color="#9fa098"/><stop offset="0.914" stop-color="#9a9a91"/><stop offset="0.937" stop-color="#95958a"/><stop offset="0.956" stop-color="#919085"/><stop offset="0.972" stop-color="#8e8c80"/><stop offset="0.985" stop-color="#8c897c"/><stop offset="0.994" stop-color="#8b877a"/><stop offset="0.999" stop-color="#8e8a7c"/><stop offset="1.000" stop-color="#908c7e"/></linearGradient><linearGradient id="g10" gradientUnits="userSpaceOnUse" x1="273.0" y1="0" x2="691.5" y2="0"><stop offset="0.000" stop-color="#6d695e"/><stop offset="0.000" stop-color="#6c695e"/><stop offset="0.003" stop-color="#6c695e"/><stop offset="0.010" stop-color="#6d6a5f"/><stop offset="0.021" stop-color="#716e64"/><stop offset="0.035" stop-color="#767368"/><stop offset="0.053" stop-color="#7a786d"/><stop offset="0.074" stop-color="#7f7c72"/><stop offset="0.098" stop-color="#848177"/><stop offset="0.125" stop-color="#88867c"/><stop offset="0.156" stop-color="#8b897f"/><stop offset="0.188" stop-color="#89877d"/><stop offset="0.223" stop-color="#87857b"/><stop offset="0.260" stop-color="#858378"/><stop offset="0.299" stop-color="#838176"/><stop offset="0.340" stop-color="#817f74"/><stop offset="0.382" stop-color="#7f7d71"/><stop offset="0.424" stop-color="#7d7b6f"/><stop offset="0.467" stop-color="#7b796d"/><stop offset="0.511" stop-color="#7b786c"/><stop offset="0.554" stop-color="#807e72"/><stop offset="0.597" stop-color="#858378"/><stop offset="0.639" stop-color="#89897e"/><stop offset="0.680" stop-color="#8e8e84"/><stop offset="0.720" stop-color="#93938a"/><stop offset="0.758" stop-color="#989990"/><stop offset="0.794" stop-color="#9c9e95"/><stop offset="0.828" stop-color="#a1a49b"/><stop offset="0.860" stop-color="#a4a79f"/><stop offset="0.888" stop-color="#9ea097"/><stop offset="0.914" stop-color="#999a90"/><stop offset="0.937" stop-color="#949389"/><stop offset="0.956" stop-color="#908e84"/><stop offset="0.972" stop-color="#8c8a7e"/><stop offset="0.985" stop-color="#8a867a"/><stop offset="0.994" stop-color="#898477"/><stop offset="0.999" stop-color="#8b8779"/><stop offset="1.000" stop-color="#8d897b"/></linearGradient><linearGradient id="g11" gradientUnits="userSpaceOnUse" x1="273.6" y1="0" x2="691.0" y2="0"><stop offset="0.000" stop-color="#7a776b"/><stop offset="0.000" stop-color="#7a776a"/><stop offset="0.003" stop-color="#79766a"/><stop offset="0.010" stop-color="#7a776b"/><stop offset="0.021" stop-color="#7c796e"/><stop offset="0.035" stop-color="#7f7c71"/><stop offset="0.053" stop-color="#817f74"/><stop offset="0.074" stop-color="#848177"/><stop offset="0.098" stop-color="#87857a"/><stop offset="0.125" stop-color="#8a887e"/><stop offset="0.156" stop-color="#8b897f"/><stop offset="0.188" stop-color="#89877d"/><stop offset="0.223" stop-color="#87857b"/><stop offset="0.260" stop-color="#858378"/><stop offset="0.299" stop-color="#838176"/><stop offset="0.340" stop-color="#817f74"/><stop offset="0.382" stop-color="#7f7d71"/><stop offset="0.424" stop-color="#7d7b6f"/><stop offset="0.467" stop-color="#7b796d"/><stop offset="0.511" stop-color="#7b786c"/><stop offset="0.554" stop-color="#807e72"/><stop offset="0.597" stop-color="#858378"/><stop offset="0.639" stop-color="#89897e"/><stop offset="0.680" stop-color="#8e8e84"/><stop offset="0.720" stop-color="#93938a"/><stop offset="0.758" stop-color="#989990"/><stop offset="0.794" stop-color="#9c9e95"/><stop offset="0.828" stop-color="#a1a49b"/><stop offset="0.860" stop-color="#a4a79e"/><stop offset="0.888" stop-color="#9ea097"/><stop offset="0.914" stop-color="#98998f"/><stop offset="0.937" stop-color="#929288"/><stop offset="0.956" stop-color="#8e8d82"/><stop offset="0.972" stop-color="#8a887c"/><stop offset="0.985" stop-color="#878477"/><stop offset="0.994" stop-color="#868174"/><stop offset="0.999" stop-color="#888476"/><stop offset="1.000" stop-color="#8a8678"/></linearGradient><linearGradient id="g12" gradientUnits="userSpaceOnUse" x1="274.6" y1="0" x2="690.0" y2="0"><stop offset="0.000" stop-color="#817d70"/><stop offset="0.000" stop-color="#817d70"/><stop offset="0.003" stop-color="#807c70"/><stop offset="0.010" stop-color="#817d70"/><stop offset="0.021" stop-color="#827e72"/><stop offset="0.035" stop-color="#838074"/><stop offset="0.053" stop-color="#858276"/><stop offset="0.074" stop-color="#878479"/><stop offset="0.098" stop-color="#88867b"/><stop offset="0.125" stop-color="#8a887e"/><stop offset="0.156" stop-color="#8b897f"/><stop offset="0.188" stop-color="#89877d"/><stop offset="0.223" stop-color="#87857b"/><stop offset="0.260" stop-color="#858378"/><stop offset="0.299" stop-color="#838176"/><stop offset="0.340" stop-color="#817f74"/><stop offset="0.382" stop-color="#7f7d71"/><stop offset="0.424" stop-color="#7d7b6f"/><stop offset="0.467" stop-color="#7b796d"/><stop offset="0.511" stop-color="#7b786c"/><stop offset="0.554" stop-color="#807e72"/><stop offset="0.597" stop-color="#858378"/><stop offset="0.639" stop-color="#89897e"/><stop offset="0.680" stop-color="#8e8e84"/><stop offset="0.720" stop-color="#93938a"/><stop offset="0.758" stop-color="#989990"/><stop offset="0.794" stop-color="#9c9e95"/><stop offset="0.828" stop-color="#a1a49b"/><stop offset="0.860" stop-color="#a4a69e"/><stop offset="0.888" stop-color="#9d9f96"/><stop offset="0.914" stop-color="#97988e"/><stop offset="0.937" stop-color="#919187"/><stop offset="0.956" stop-color="#8c8b80"/><stop offset="0.972" stop-color="#88857a"/><stop offset="0.985" stop-color="#848175"/><stop offset="0.994" stop-color="#827e71"/><stop offset="0.999" stop-color="#848073"/><stop offset="1.000" stop-color="#868275"/></linearGradient><linearGradient id="g13" gradientUnits="userSpaceOnUse" x1="276.3" y1="0" x2="688.3" y2="0"><stop offset="0.000" stop-color="#7f7b6e"/><stop offset="0.000" stop-color="#7f7b6e"/><stop offset="0.003" stop-color="#7f7a6d"/><stop offset="0.010" stop-color="#7f7b6e"/><stop offset="0.021" stop-color="#807c70"/><stop offset="0.035" stop-color="#827f73"/><stop offset="0.053" stop-color="#848175"/><stop offset="0.074" stop-color="#868378"/><stop offset="0.098" stop-color="#88857b"/><stop offset="0.125" stop-color="#8a887e"/><stop offset="0.156" stop-color="#8b897f"/><stop offset="0.188" stop-color="#89877d"/><stop offset="0.223" stop-color="#87857b"/><stop offset="0.260" stop-color="#858378"/><stop offset="0.299" stop-color="#838176"/><stop offset="0.340" stop-color="#817f74"/><stop offset="0.382" stop-color="#7f7d71"/><stop offset="0.424" stop-color="#7d7b6f"/><stop offset="0.467" stop-color="#7b796d"/><stop offset="0.511" stop-color="#7b786c"/><stop offset="0.554" stop-color="#807e72"/><stop offset="0.597" stop-color="#858378"/><stop offset="0.639" stop-color="#89897e"/><stop offset="0.680" stop-color="#8e8e84"/><stop offset="0.720" stop-color="#93938a"/><stop offset="0.758" stop-color="#989990"/><stop offset="0.794" stop-color="#9c9e95"/><stop offset="0.828" stop-color="#a1a49b"/><stop offset="0.860" stop-color="#a4a69e"/><stop offset="0.888" stop-color="#9d9f96"/><stop offset="0.914" stop-color="#96978e"/><stop offset="0.937" stop-color="#908f86"/><stop offset="0.956" stop-color="#8a897f"/><stop offset="0.972" stop-color="#868379"/><stop offset="0.985" stop-color="#827e73"/><stop offset="0.994" stop-color="#7f7b6f"/><stop offset="0.999" stop-color="#827d71"/><stop offset="1.000" stop-color="#837f73"/></linearGradient><linearGradient id="g14" gradientUnits="userSpaceOnUse" x1="278.3" y1="0" x2="686.3" y2="0"><stop offset="0.000" stop-color="#7b7669"/><stop offset="0.000" stop-color="#7b7669"/><stop offset="0.003" stop-color="#7a7669"/><stop offset="0.010" stop-color="#7a766a"/><stop offset="0.021" stop-color="#7d796d"/><stop offset="0.035" stop-color="#7f7c70"/><stop offset="0.053" stop-color="#827e73"/><stop offset="0.074" stop-color="#848176"/><stop offset="0.098" stop-color="#87847a"/><stop offset="0.125" stop-color="#8a887d"/><stop offset="0.156" stop-color="#8b897f"/><stop offset="0.188" stop-color="#89877d"/><stop offset="0.223" stop-color="#87857b"/><stop offset="0.260" stop-color="#858378"/><stop offset="0.299" stop-color="#838176"/><stop offset="0.340" stop-color="#817f74"/><stop offset="0.382" stop-color="#7f7d71"/><stop offset="0.424" stop-color="#7d7b6f"/><stop offset="0.467" stop-color="#7b796d"/><stop offset="0.511" stop-color="#7b786c"/><stop offset="0.554" stop-color="#807e72"/><stop offset="0.597" stop-color="#858378"/><stop offset="0.639" stop-color="#89897e"/><stop offset="0.680" stop-color="#8e8e84"/><stop offset="0.720" stop-color="#93938a"/><stop offset="0.758" stop-color="#989990"/><stop offset="0.794" stop-color="#9c9e95"/><stop offset="0.828" stop-color="#a1a49b"/><stop offset="0.860" stop-color="#a4a69e"/><stop offset="0.888" stop-color="#9c9e96"/><stop offset="0.914" stop-color="#95968d"/><stop offset="0.937" stop-color="#8e8e85"/><stop offset="0.956" stop-color="#88877e"/><stop offset="0.972" stop-color="#838177"/><stop offset="0.985" stop-color="#7f7b71"/><stop offset="0.994" stop-color="#7c786c"/><stop offset="0.999" stop-color="#7e7a6e"/><stop offset="1.000" stop-color="#807c70"/></linearGradient><linearGradient id="g15" gradientUnits="userSpaceOnUse" x1="268.9" y1="0" x2="483.5" y2="0"><stop offset="0.000" stop-color="#7e7c72"/><stop offset="0.001" stop-color="#79776e"/><stop offset="0.010" stop-color="#727067"/><stop offset="0.026" stop-color="#6d6b62"/><stop offset="0.050" stop-color="#68665e"/><stop offset="0.080" stop-color="#636159"/><stop offset="0.117" stop-color="#5f5d55"/><stop offset="0.161" stop-color="#605f57"/><stop offset="0.212" stop-color="#65645d"/><stop offset="0.268" stop-color="#6a6a64"/><stop offset="0.329" stop-color="#6f6f69"/><stop offset="0.396" stop-color="#75756e"/><stop offset="0.467" stop-color="#7a7a73"/><stop offset="0.542" stop-color="#767670"/><stop offset="0.621" stop-color="#73736d"/><stop offset="0.702" stop-color="#6f6f69"/><stop offset="0.786" stop-color="#6b6a64"/><stop offset="0.871" stop-color="#65645e"/><stop offset="0.957" stop-color="#605e57"/><stop offset="1.000" stop-color="#5f5c55"/></linearGradient><linearGradient id="g16" gradientUnits="userSpaceOnUse" x1="278.2" y1="0" x2="483.4" y2="0"><stop offset="0.000" stop-color="#7b776a"/><stop offset="0.005" stop-color="#7c786b"/><stop offset="0.017" stop-color="#7e796c"/><stop offset="0.037" stop-color="#7f7b6d"/><stop offset="0.064" stop-color="#817c6f"/><stop offset="0.098" stop-color="#847f71"/><stop offset="0.139" stop-color="#868274"/><stop offset="0.186" stop-color="#898476"/><stop offset="0.239" stop-color="#8c8779"/><stop offset="0.298" stop-color="#8f8a7b"/><stop offset="0.362" stop-color="#908b7c"/><stop offset="0.431" stop-color="#918c7d"/><stop offset="0.504" stop-color="#938e7e"/><stop offset="0.581" stop-color="#948f7f"/><stop offset="0.661" stop-color="#969180"/><stop offset="0.744" stop-color="#979281"/><stop offset="0.828" stop-color="#989382"/><stop offset="0.914" stop-color="#999382"/><stop offset="1.000" stop-color="#999382"/></linearGradient><linearGradient id="g17" gradientUnits="userSpaceOnUse" x1="276.3" y1="0" x2="483.4" y2="0"><stop offset="0.000" stop-color="#7f7b6e"/><stop offset="0.005" stop-color="#817d6f"/><stop offset="0.017" stop-color="#827e71"/><stop offset="0.037" stop-color="#847f72"/><stop offset="0.064" stop-color="#868173"/><stop offset="0.098" stop-color="#888476"/><stop offset="0.139" stop-color="#8b8779"/><stop offset="0.186" stop-color="#8e8a7b"/><stop offset="0.239" stop-color="#918c7e"/><stop offset="0.298" stop-color="#948f80"/><stop offset="0.362" stop-color="#959081"/><stop offset="0.431" stop-color="#979282"/><stop offset="0.504" stop-color="#989383"/><stop offset="0.581" stop-color="#9a9484"/><stop offset="0.661" stop-color="#9b9685"/><stop offset="0.744" stop-color="#9d9786"/><stop offset="0.828" stop-color="#9e9887"/><stop offset="0.914" stop-color="#9e9887"/><stop offset="1.000" stop-color="#9e9887"/></linearGradient><linearGradient id="g18" gradientUnits="userSpaceOnUse" x1="274.6" y1="0" x2="483.4" y2="0"><stop offset="0.000" stop-color="#817d70"/><stop offset="0.005" stop-color="#837f72"/><stop offset="0.017" stop-color="#848073"/><stop offset="0.037" stop-color="#868274"/><stop offset="0.064" stop-color="#888376"/><stop offset="0.098" stop-color="#8b8678"/><stop offset="0.139" stop-color="#8d897b"/><stop offset="0.186" stop-color="#908c7e"/><stop offset="0.239" stop-color="#948f80"/><stop offset="0.298" stop-color="#979283"/><stop offset="0.362" stop-color="#989384"/><stop offset="0.431" stop-color="#9a9585"/><stop offset="0.504" stop-color="#9c9687"/><stop offset="0.581" stop-color="#9e9888"/><stop offset="0.661" stop-color="#a09a8a"/><stop offset="0.744" stop-color="#a19b8b"/><stop offset="0.828" stop-color="#a39d8c"/><stop offset="0.914" stop-color="#a39d8c"/><stop offset="1.000" stop-color="#a39d8c"/></linearGradient><linearGradient id="g19" gradientUnits="userSpaceOnUse" x1="273.6" y1="0" x2="483.5" y2="0"><stop offset="0.000" stop-color="#7a776b"/><stop offset="0.005" stop-color="#7c786c"/><stop offset="0.017" stop-color="#7d7a6d"/><stop offset="0.037" stop-color="#7f7b6f"/><stop offset="0.064" stop-color="#807d70"/><stop offset="0.098" stop-color="#837f72"/><stop offset="0.139" stop-color="#868275"/><stop offset="0.186" stop-color="#898577"/><stop offset="0.239" stop-color="#8c887a"/><stop offset="0.298" stop-color="#908c7e"/><stop offset="0.362" stop-color="#938f81"/><stop offset="0.431" stop-color="#979385"/><stop offset="0.504" stop-color="#9c9889"/><stop offset="0.581" stop-color="#a19d8e"/><stop offset="0.661" stop-color="#a7a293"/><stop offset="0.744" stop-color="#aaa697"/><stop offset="0.828" stop-color="#aea99b"/><stop offset="0.914" stop-color="#b0ab9c"/><stop offset="1.000" stop-color="#b0ab9c"/></linearGradient><linearGradient id="g20" gradientUnits="userSpaceOnUse" x1="273.0" y1="0" x2="483.5" y2="0"><stop offset="0.000" stop-color="#6d695f"/><stop offset="0.005" stop-color="#6e6b60"/><stop offset="0.017" stop-color="#6f6c61"/><stop offset="0.037" stop-color="#716d62"/><stop offset="0.064" stop-color="#726e63"/><stop offset="0.098" stop-color="#747165"/><stop offset="0.139" stop-color="#777367"/><stop offset="0.186" stop-color="#7a766a"/><stop offset="0.239" stop-color="#7d796c"/><stop offset="0.298" stop-color="#837f73"/><stop offset="0.362" stop-color="#8b877c"/><stop offset="0.431" stop-color="#979388"/><stop offset="0.504" stop-color="#a39f95"/><stop offset="0.581" stop-color="#b1aea4"/><stop offset="0.661" stop-color="#bebcb3"/><stop offset="0.744" stop-color="#c9c6be"/><stop offset="0.828" stop-color="#d3d0c9"/><stop offset="0.914" stop-color="#d6d4cc"/><stop offset="1.000" stop-color="#d6d4cc"/></linearGradient><linearGradient id="g21" gradientUnits="userSpaceOnUse" x1="272.5" y1="0" x2="483.5" y2="0"><stop offset="0.000" stop-color="#68645a"/><stop offset="0.005" stop-color="#69665b"/><stop offset="0.017" stop-color="#6a675c"/><stop offset="0.037" stop-color="#6b685d"/><stop offset="0.064" stop-color="#6d695e"/><stop offset="0.098" stop-color="#6f6b60"/><stop offset="0.139" stop-color="#726e62"/><stop offset="0.186" stop-color="#747065"/><stop offset="0.239" stop-color="#777367"/><stop offset="0.298" stop-color="#7f7b70"/><stop offset="0.362" stop-color="#8a867b"/><stop offset="0.431" stop-color="#9a968c"/><stop offset="0.504" stop-color="#a9a79d"/><stop offset="0.581" stop-color="#bcbab2"/><stop offset="0.661" stop-color="#cfcdc6"/><stop offset="0.744" stop-color="#dcdbd4"/><stop offset="0.828" stop-color="#eae9e3"/><stop offset="0.914" stop-color="#eeede8"/><stop offset="1.000" stop-color="#eeede8"/></linearGradient><linearGradient id="g22" gradientUnits="userSpaceOnUse" x1="272.0" y1="0" x2="483.5" y2="0"><stop offset="0.000" stop-color="#676459"/><stop offset="0.005" stop-color="#68655a"/><stop offset="0.017" stop-color="#6a665b"/><stop offset="0.037" stop-color="#6b675c"/><stop offset="0.064" stop-color="#6c685e"/><stop offset="0.098" stop-color="#6e6b60"/><stop offset="0.139" stop-color="#716d62"/><stop offset="0.186" stop-color="#736f64"/><stop offset="0.239" stop-color="#767267"/><stop offset="0.298" stop-color="#7e7a6e"/><stop offset="0.362" stop-color="#888479"/><stop offset="0.431" stop-color="#969389"/><stop offset="0.504" stop-color="#a5a299"/><stop offset="0.581" stop-color="#b7b4ab"/><stop offset="0.661" stop-color="#c8c5be"/><stop offset="0.744" stop-color="#d4d2cb"/><stop offset="0.828" stop-color="#e1dfd9"/><stop offset="0.914" stop-color="#e5e3dd"/><stop offset="1.000" stop-color="#e5e3dd"/></linearGradient><linearGradient id="g23" gradientUnits="userSpaceOnUse" x1="271.6" y1="0" x2="483.5" y2="0"><stop offset="0.000" stop-color="#67645a"/><stop offset="0.005" stop-color="#68655b"/><stop offset="0.017" stop-color="#69665c"/><stop offset="0.037" stop-color="#6b675d"/><stop offset="0.064" stop-color="#6c695e"/><stop offset="0.098" stop-color="#6e6b60"/><stop offset="0.139" stop-color="#716d62"/><stop offset="0.186" stop-color="#736f64"/><stop offset="0.239" stop-color="#767266"/><stop offset="0.298" stop-color="#7b776b"/><stop offset="0.362" stop-color="#817d71"/><stop offset="0.431" stop-color="#898579"/><stop offset="0.504" stop-color="#918e82"/><stop offset="0.581" stop-color="#9b988c"/><stop offset="0.661" stop-color="#a5a195"/><stop offset="0.744" stop-color="#aca99c"/><stop offset="0.828" stop-color="#b3b0a4"/><stop offset="0.914" stop-color="#b5b2a6"/><stop offset="1.000" stop-color="#b5b2a6"/></linearGradient><linearGradient id="g24" gradientUnits="userSpaceOnUse" x1="271.1" y1="0" x2="483.5" y2="0"><stop offset="0.000" stop-color="#716f67"/><stop offset="0.005" stop-color="#727169"/><stop offset="0.017" stop-color="#73726a"/><stop offset="0.037" stop-color="#75736b"/><stop offset="0.064" stop-color="#76756c"/><stop offset="0.098" stop-color="#79776f"/><stop offset="0.139" stop-color="#7b7a71"/><stop offset="0.186" stop-color="#7e7d74"/><stop offset="0.239" stop-color="#807f76"/><stop offset="0.298" stop-color="#838278"/><stop offset="0.362" stop-color="#848278"/><stop offset="0.431" stop-color="#848278"/><stop offset="0.504" stop-color="#858378"/><stop offset="0.581" stop-color="#868377"/><stop offset="0.661" stop-color="#878477"/><stop offset="0.744" stop-color="#888477"/><stop offset="0.828" stop-color="#898577"/><stop offset="0.914" stop-color="#898577"/><stop offset="1.000" stop-color="#898577"/></linearGradient><linearGradient id="g25" gradientUnits="userSpaceOnUse" x1="270.5" y1="0" x2="483.5" y2="0"><stop offset="0.000" stop-color="#7e7e79"/><stop offset="0.005" stop-color="#7f7f7b"/><stop offset="0.017" stop-color="#81817c"/><stop offset="0.037" stop-color="#82827e"/><stop offset="0.064" stop-color="#84847f"/><stop offset="0.098" stop-color="#878782"/><stop offset="0.139" stop-color="#8a8a85"/><stop offset="0.186" stop-color="#8d8d88"/><stop offset="0.239" stop-color="#8f8f8a"/><stop offset="0.298" stop-color="#91918b"/><stop offset="0.362" stop-color="#8f8e88"/><stop offset="0.431" stop-color="#8c8b83"/><stop offset="0.504" stop-color="#89887f"/><stop offset="0.581" stop-color="#868479"/><stop offset="0.661" stop-color="#838074"/><stop offset="0.744" stop-color="#807d70"/><stop offset="0.828" stop-color="#7e7a6c"/><stop offset="0.914" stop-color="#7d796b"/><stop offset="1.000" stop-color="#7d796b"/></linearGradient><linearGradient id="g26" gradientUnits="userSpaceOnUse" x1="270.0" y1="0" x2="483.5" y2="0"><stop offset="0.000" stop-color="#81817c"/><stop offset="0.005" stop-color="#82827e"/><stop offset="0.017" stop-color="#84847f"/><stop offset="0.037" stop-color="#858581"/><stop offset="0.064" stop-color="#878782"/><stop offset="0.098" stop-color="#8a8a85"/><stop offset="0.139" stop-color="#8d8d88"/><stop offset="0.186" stop-color="#90908b"/><stop offset="0.239" stop-color="#93938e"/><stop offset="0.298" stop-color="#94948f"/><stop offset="0.362" stop-color="#92928c"/><stop offset="0.431" stop-color="#908f88"/><stop offset="0.504" stop-color="#8d8c84"/><stop offset="0.581" stop-color="#8a887f"/><stop offset="0.661" stop-color="#87857a"/><stop offset="0.744" stop-color="#858276"/><stop offset="0.828" stop-color="#827f73"/><stop offset="0.914" stop-color="#827e71"/><stop offset="1.000" stop-color="#827e71"/></linearGradient><linearGradient id="g27" gradientUnits="userSpaceOnUse" x1="269.6" y1="0" x2="483.5" y2="0"><stop offset="0.000" stop-color="#83837f"/><stop offset="0.005" stop-color="#858581"/><stop offset="0.017" stop-color="#868682"/><stop offset="0.037" stop-color="#888883"/><stop offset="0.064" stop-color="#8a8a85"/><stop offset="0.098" stop-color="#8d8d88"/><stop offset="0.139" stop-color="#90908b"/><stop offset="0.186" stop-color="#93938e"/><stop offset="0.239" stop-color="#969691"/><stop offset="0.298" stop-color="#999994"/><stop offset="0.362" stop-color="#999994"/><stop offset="0.431" stop-color="#9a9a94"/><stop offset="0.504" stop-color="#9b9b95"/><stop offset="0.581" stop-color="#9c9c96"/><stop offset="0.661" stop-color="#9d9d96"/><stop offset="0.744" stop-color="#9e9e97"/><stop offset="0.828" stop-color="#9f9f97"/><stop offset="0.914" stop-color="#9f9f97"/><stop offset="1.000" stop-color="#9f9f97"/></linearGradient><linearGradient id="g28" gradientUnits="userSpaceOnUse" x1="269.2" y1="0" x2="483.5" y2="0"><stop offset="0.000" stop-color="#83837e"/><stop offset="0.005" stop-color="#848480"/><stop offset="0.017" stop-color="#868681"/><stop offset="0.037" stop-color="#878783"/><stop offset="0.064" stop-color="#898984"/><stop offset="0.098" stop-color="#8c8c87"/><stop offset="0.139" stop-color="#8f8f8a"/><stop offset="0.186" stop-color="#92928d"/><stop offset="0.239" stop-color="#959590"/><stop offset="0.298" stop-color="#999994"/><stop offset="0.362" stop-color="#9b9b96"/><stop offset="0.431" stop-color="#9e9e98"/><stop offset="0.504" stop-color="#a1a19b"/><stop offset="0.581" stop-color="#a5a59e"/><stop offset="0.661" stop-color="#a8a8a2"/><stop offset="0.744" stop-color="#ababa4"/><stop offset="0.828" stop-color="#aeaea6"/><stop offset="0.914" stop-color="#aeaea7"/><stop offset="1.000" stop-color="#aeaea7"/></linearGradient><linearGradient id="g29" gradientUnits="userSpaceOnUse" x1="268.9" y1="0" x2="483.5" y2="0"><stop offset="0.000" stop-color="#7e7e7a"/><stop offset="0.005" stop-color="#7f7f7b"/><stop offset="0.017" stop-color="#81817d"/><stop offset="0.037" stop-color="#82827e"/><stop offset="0.064" stop-color="#848480"/><stop offset="0.098" stop-color="#878782"/><stop offset="0.139" stop-color="#8a8a85"/><stop offset="0.186" stop-color="#8d8d88"/><stop offset="0.239" stop-color="#90908b"/><stop offset="0.298" stop-color="#93938e"/><stop offset="0.362" stop-color="#969690"/><stop offset="0.431" stop-color="#989893"/><stop offset="0.504" stop-color="#9b9b96"/><stop offset="0.581" stop-color="#9f9f99"/><stop offset="0.661" stop-color="#a2a29c"/><stop offset="0.744" stop-color="#a5a59e"/><stop offset="0.828" stop-color="#a7a7a1"/><stop offset="0.914" stop-color="#a8a8a1"/><stop offset="1.000" stop-color="#a8a8a1"/></linearGradient><linearGradient id="g30" gradientUnits="userSpaceOnUse" x1="483.5" y1="0" x2="522.8" y2="0"><stop offset="0.000" stop-color="#5f5c55"/><stop offset="0.185" stop-color="#66645e"/><stop offset="0.366" stop-color="#6e6e68"/><stop offset="0.541" stop-color="#73736d"/><stop offset="0.707" stop-color="#797972"/><stop offset="0.861" stop-color="#74746e"/><stop offset="1.000" stop-color="#6c6c66"/></linearGradient><linearGradient id="g31" gradientUnits="userSpaceOnUse" x1="483.4" y1="0" x2="529.4" y2="0"><stop offset="0.000" stop-color="#999382"/><stop offset="0.185" stop-color="#999382"/><stop offset="0.366" stop-color="#979281"/><stop offset="0.541" stop-color="#959080"/><stop offset="0.707" stop-color="#938e7e"/><stop offset="0.861" stop-color="#918c7c"/><stop offset="1.000" stop-color="#8f8a7b"/></linearGradient><linearGradient id="g32" gradientUnits="userSpaceOnUse" x1="483.4" y1="0" x2="528.0" y2="0"><stop offset="0.000" stop-color="#9e9887"/><stop offset="0.185" stop-color="#9e9887"/><stop offset="0.366" stop-color="#9d9786"/><stop offset="0.541" stop-color="#9b9585"/><stop offset="0.707" stop-color="#989383"/><stop offset="0.861" stop-color="#969181"/><stop offset="1.000" stop-color="#948f80"/></linearGradient><linearGradient id="g33" gradientUnits="userSpaceOnUse" x1="483.4" y1="0" x2="526.8" y2="0"><stop offset="0.000" stop-color="#a39d8c"/><stop offset="0.185" stop-color="#a39d8c"/><stop offset="0.366" stop-color="#a19b8b"/><stop offset="0.541" stop-color="#9f9989"/><stop offset="0.707" stop-color="#9b9686"/><stop offset="0.861" stop-color="#999484"/><stop offset="1.000" stop-color="#979283"/></linearGradient><linearGradient id="g34" gradientUnits="userSpaceOnUse" x1="483.5" y1="0" x2="526.1" y2="0"><stop offset="0.000" stop-color="#b0ab9c"/><stop offset="0.185" stop-color="#b0ab9c"/><stop offset="0.366" stop-color="#aaa597"/><stop offset="0.541" stop-color="#a49f91"/><stop offset="0.707" stop-color="#9c9789"/><stop offset="0.861" stop-color="#959182"/><stop offset="1.000" stop-color="#908c7e"/></linearGradient><linearGradient id="g35" gradientUnits="userSpaceOnUse" x1="483.5" y1="0" x2="525.7" y2="0"><stop offset="0.000" stop-color="#d6d4cc"/><stop offset="0.185" stop-color="#d6d4cc"/><stop offset="0.366" stop-color="#c8c6bd"/><stop offset="0.541" stop-color="#b7b4ab"/><stop offset="0.707" stop-color="#a29e94"/><stop offset="0.861" stop-color="#908c81"/><stop offset="1.000" stop-color="#837f72"/></linearGradient><linearGradient id="g36" gradientUnits="userSpaceOnUse" x1="483.5" y1="0" x2="525.4" y2="0"><stop offset="0.000" stop-color="#eeede8"/><stop offset="0.185" stop-color="#eeede8"/><stop offset="0.366" stop-color="#dcdad4"/><stop offset="0.541" stop-color="#c5c2bb"/><stop offset="0.707" stop-color="#a8a59c"/><stop offset="0.861" stop-color="#908d82"/><stop offset="1.000" stop-color="#7e7b6f"/></linearGradient><linearGradient id="g37" gradientUnits="userSpaceOnUse" x1="483.5" y1="0" x2="525.0" y2="0"><stop offset="0.000" stop-color="#e5e3dd"/><stop offset="0.185" stop-color="#e5e3dd"/><stop offset="0.366" stop-color="#d4d2cb"/><stop offset="0.541" stop-color="#bebcb4"/><stop offset="0.707" stop-color="#a4a197"/><stop offset="0.861" stop-color="#8e8a7f"/><stop offset="1.000" stop-color="#7d796e"/></linearGradient><linearGradient id="g38" gradientUnits="userSpaceOnUse" x1="483.5" y1="0" x2="524.7" y2="0"><stop offset="0.000" stop-color="#b5b2a6"/><stop offset="0.185" stop-color="#b5b2a6"/><stop offset="0.366" stop-color="#aba89c"/><stop offset="0.541" stop-color="#9f9c90"/><stop offset="0.707" stop-color="#918d81"/><stop offset="0.861" stop-color="#848074"/><stop offset="1.000" stop-color="#7b776b"/></linearGradient><linearGradient id="g39" gradientUnits="userSpaceOnUse" x1="483.5" y1="0" x2="524.4" y2="0"><stop offset="0.000" stop-color="#898577"/><stop offset="0.185" stop-color="#898577"/><stop offset="0.366" stop-color="#888477"/><stop offset="0.541" stop-color="#878477"/><stop offset="0.707" stop-color="#858378"/><stop offset="0.861" stop-color="#848278"/><stop offset="1.000" stop-color="#838278"/></linearGradient><linearGradient id="g40" gradientUnits="userSpaceOnUse" x1="483.5" y1="0" x2="523.9" y2="0"><stop offset="0.000" stop-color="#7d796b"/><stop offset="0.185" stop-color="#7d796b"/><stop offset="0.366" stop-color="#807d70"/><stop offset="0.541" stop-color="#848277"/><stop offset="0.707" stop-color="#8a887f"/><stop offset="0.861" stop-color="#8e8d86"/><stop offset="1.000" stop-color="#91918b"/></linearGradient><linearGradient id="g41" gradientUnits="userSpaceOnUse" x1="483.5" y1="0" x2="523.6" y2="0"><stop offset="0.000" stop-color="#827e71"/><stop offset="0.185" stop-color="#827e71"/><stop offset="0.366" stop-color="#858276"/><stop offset="0.541" stop-color="#89877c"/><stop offset="0.707" stop-color="#8d8c84"/><stop offset="0.861" stop-color="#91918a"/><stop offset="1.000" stop-color="#94948f"/></linearGradient><linearGradient id="g42" gradientUnits="userSpaceOnUse" x1="483.5" y1="0" x2="523.3" y2="0"><stop offset="0.000" stop-color="#9f9f97"/><stop offset="0.185" stop-color="#9f9f97"/><stop offset="0.366" stop-color="#9e9e97"/><stop offset="0.541" stop-color="#9d9d96"/><stop offset="0.707" stop-color="#9b9b95"/><stop offset="0.861" stop-color="#9a9a94"/><stop offset="1.000" stop-color="#999994"/></linearGradient><linearGradient id="g43" gradientUnits="userSpaceOnUse" x1="483.5" y1="0" x2="523.0" y2="0"><stop offset="0.000" stop-color="#aeaea7"/><stop offset="0.185" stop-color="#aeaea7"/><stop offset="0.366" stop-color="#ababa4"/><stop offset="0.541" stop-color="#a6a6a0"/><stop offset="0.707" stop-color="#a1a19b"/><stop offset="0.861" stop-color="#9c9c97"/><stop offset="1.000" stop-color="#999994"/></linearGradient><linearGradient id="g44" gradientUnits="userSpaceOnUse" x1="483.5" y1="0" x2="522.8" y2="0"><stop offset="0.000" stop-color="#a8a8a1"/><stop offset="0.185" stop-color="#a8a8a1"/><stop offset="0.366" stop-color="#a5a59e"/><stop offset="0.541" stop-color="#a1a19a"/><stop offset="0.707" stop-color="#9b9b95"/><stop offset="0.861" stop-color="#979791"/><stop offset="1.000" stop-color="#93938e"/></linearGradient><linearGradient id="g45" gradientUnits="userSpaceOnUse" x1="522.8" y1="0" x2="1026.5" y2="0"><stop offset="0.000" stop-color="#6c6c66"/><stop offset="0.250" stop-color="#6c6c66"/><stop offset="0.500" stop-color="#6c6c66"/><stop offset="0.750" stop-color="#6c6c66"/><stop offset="1.000" stop-color="#6c6c66"/></linearGradient><linearGradient id="g46" gradientUnits="userSpaceOnUse" x1="529.4" y1="0" x2="1033.2" y2="0"><stop offset="0.000" stop-color="#8f8a7b"/><stop offset="0.250" stop-color="#8f8a7b"/><stop offset="0.500" stop-color="#8f8a7b"/><stop offset="0.750" stop-color="#8f8a7b"/><stop offset="1.000" stop-color="#8f8a7b"/></linearGradient><linearGradient id="g47" gradientUnits="userSpaceOnUse" x1="528.0" y1="0" x2="1031.8" y2="0"><stop offset="0.000" stop-color="#948f80"/><stop offset="0.250" stop-color="#948f80"/><stop offset="0.500" stop-color="#948f80"/><stop offset="0.750" stop-color="#948f80"/><stop offset="1.000" stop-color="#948f80"/></linearGradient><linearGradient id="g48" gradientUnits="userSpaceOnUse" x1="526.8" y1="0" x2="1030.6" y2="0"><stop offset="0.000" stop-color="#979283"/><stop offset="0.250" stop-color="#979283"/><stop offset="0.500" stop-color="#979283"/><stop offset="0.750" stop-color="#979283"/><stop offset="1.000" stop-color="#979283"/></linearGradient><linearGradient id="g49" gradientUnits="userSpaceOnUse" x1="526.1" y1="0" x2="1029.9" y2="0"><stop offset="0.000" stop-color="#908c7e"/><stop offset="0.250" stop-color="#908c7e"/><stop offset="0.500" stop-color="#908c7e"/><stop offset="0.750" stop-color="#908c7e"/><stop offset="1.000" stop-color="#908c7e"/></linearGradient><linearGradient id="g50" gradientUnits="userSpaceOnUse" x1="525.7" y1="0" x2="1029.5" y2="0"><stop offset="0.000" stop-color="#837f72"/><stop offset="0.250" stop-color="#837f72"/><stop offset="0.500" stop-color="#837f72"/><stop offset="0.750" stop-color="#837f72"/><stop offset="1.000" stop-color="#837f72"/></linearGradient><linearGradient id="g51" gradientUnits="userSpaceOnUse" x1="525.4" y1="0" x2="1029.1" y2="0"><stop offset="0.000" stop-color="#7e7b6f"/><stop offset="0.250" stop-color="#7e7b6f"/><stop offset="0.500" stop-color="#7e7b6f"/><stop offset="0.750" stop-color="#7e7b6f"/><stop offset="1.000" stop-color="#7e7b6f"/></linearGradient><linearGradient id="g52" gradientUnits="userSpaceOnUse" x1="525.0" y1="0" x2="1028.8" y2="0"><stop offset="0.000" stop-color="#7d796e"/><stop offset="0.250" stop-color="#7d796e"/><stop offset="0.500" stop-color="#7d796e"/><stop offset="0.750" stop-color="#7d796e"/><stop offset="1.000" stop-color="#7d796e"/></linearGradient><linearGradient id="g53" gradientUnits="userSpaceOnUse" x1="524.7" y1="0" x2="1028.5" y2="0"><stop offset="0.000" stop-color="#7b776b"/><stop offset="0.250" stop-color="#7b776b"/><stop offset="0.500" stop-color="#7b776b"/><stop offset="0.750" stop-color="#7b776b"/><stop offset="1.000" stop-color="#7b776b"/></linearGradient><linearGradient id="g54" gradientUnits="userSpaceOnUse" x1="524.4" y1="0" x2="1028.1" y2="0"><stop offset="0.000" stop-color="#838278"/><stop offset="0.250" stop-color="#838278"/><stop offset="0.500" stop-color="#838278"/><stop offset="0.750" stop-color="#838278"/><stop offset="1.000" stop-color="#838278"/></linearGradient><linearGradient id="g55" gradientUnits="userSpaceOnUse" x1="523.9" y1="0" x2="1027.7" y2="0"><stop offset="0.000" stop-color="#91918b"/><stop offset="0.250" stop-color="#91918b"/><stop offset="0.500" stop-color="#91918b"/><stop offset="0.750" stop-color="#91918b"/><stop offset="1.000" stop-color="#91918b"/></linearGradient><linearGradient id="g56" gradientUnits="userSpaceOnUse" x1="523.6" y1="0" x2="1027.3" y2="0"><stop offset="0.000" stop-color="#94948f"/><stop offset="0.250" stop-color="#94948f"/><stop offset="0.500" stop-color="#94948f"/><stop offset="0.750" stop-color="#94948f"/><stop offset="1.000" stop-color="#94948f"/></linearGradient><linearGradient id="g57" gradientUnits="userSpaceOnUse" x1="523.3" y1="0" x2="1027.1" y2="0"><stop offset="0.000" stop-color="#999994"/><stop offset="0.250" stop-color="#999994"/><stop offset="0.500" stop-color="#999994"/><stop offset="0.750" stop-color="#999994"/><stop offset="1.000" stop-color="#999994"/></linearGradient><linearGradient id="g58" gradientUnits="userSpaceOnUse" x1="523.0" y1="0" x2="1026.8" y2="0"><stop offset="0.000" stop-color="#999994"/><stop offset="0.250" stop-color="#999994"/><stop offset="0.500" stop-color="#999994"/><stop offset="0.750" stop-color="#999994"/><stop offset="1.000" stop-color="#999994"/></linearGradient><linearGradient id="g59" gradientUnits="userSpaceOnUse" x1="522.8" y1="0" x2="1026.5" y2="0"><stop offset="0.000" stop-color="#93938e"/><stop offset="0.250" stop-color="#93938e"/><stop offset="0.500" stop-color="#93938e"/><stop offset="0.750" stop-color="#93938e"/><stop offset="1.000" stop-color="#93938e"/></linearGradient><linearGradient id="g60" gradientUnits="userSpaceOnUse" x1="1026.5" y1="0" x2="1177.2" y2="0"><stop offset="0.000" stop-color="#6c6c66"/><stop offset="0.053" stop-color="#72726c"/><stop offset="0.111" stop-color="#797972"/><stop offset="0.173" stop-color="#777770"/><stop offset="0.238" stop-color="#73736c"/><stop offset="0.305" stop-color="#6f6f69"/><stop offset="0.375" stop-color="#696862"/><stop offset="0.446" stop-color="#62615a"/><stop offset="0.518" stop-color="#5e5c54"/><stop offset="0.589" stop-color="#5a574f"/><stop offset="0.660" stop-color="#57544c"/><stop offset="0.729" stop-color="#56534b"/><stop offset="0.795" stop-color="#545149"/><stop offset="0.859" stop-color="#57544c"/><stop offset="0.919" stop-color="#5a574f"/><stop offset="0.974" stop-color="#5d5a52"/><stop offset="1.000" stop-color="#5e5b53"/></linearGradient><linearGradient id="g61" gradientUnits="userSpaceOnUse" x1="1033.2" y1="0" x2="1170.5" y2="0"><stop offset="0.000" stop-color="#8f8a7b"/><stop offset="0.053" stop-color="#908b7c"/><stop offset="0.111" stop-color="#928d7d"/><stop offset="0.173" stop-color="#938e7e"/><stop offset="0.238" stop-color="#959080"/><stop offset="0.305" stop-color="#979281"/><stop offset="0.375" stop-color="#989382"/><stop offset="0.446" stop-color="#999382"/><stop offset="0.518" stop-color="#999382"/><stop offset="0.589" stop-color="#959080"/><stop offset="0.660" stop-color="#8e897a"/><stop offset="0.729" stop-color="#888375"/><stop offset="0.795" stop-color="#827d70"/><stop offset="0.859" stop-color="#7c786c"/><stop offset="0.919" stop-color="#787469"/><stop offset="0.974" stop-color="#747065"/><stop offset="1.000" stop-color="#736f65"/></linearGradient><linearGradient id="g62" gradientUnits="userSpaceOnUse" x1="1031.8" y1="0" x2="1171.9" y2="0"><stop offset="0.000" stop-color="#948f80"/><stop offset="0.053" stop-color="#969081"/><stop offset="0.111" stop-color="#979282"/><stop offset="0.173" stop-color="#999384"/><stop offset="0.238" stop-color="#9b9585"/><stop offset="0.305" stop-color="#9c9786"/><stop offset="0.375" stop-color="#9e9887"/><stop offset="0.446" stop-color="#9e9887"/><stop offset="0.518" stop-color="#9e9887"/><stop offset="0.589" stop-color="#9a9584"/><stop offset="0.660" stop-color="#938e7e"/><stop offset="0.729" stop-color="#8c8779"/><stop offset="0.795" stop-color="#868173"/><stop offset="0.859" stop-color="#807b6f"/><stop offset="0.919" stop-color="#7b776b"/><stop offset="0.974" stop-color="#777368"/><stop offset="1.000" stop-color="#767267"/></linearGradient><linearGradient id="g63" gradientUnits="userSpaceOnUse" x1="1030.6" y1="0" x2="1173.1" y2="0"><stop offset="0.000" stop-color="#979283"/><stop offset="0.053" stop-color="#989384"/><stop offset="0.111" stop-color="#9a9586"/><stop offset="0.173" stop-color="#9c9787"/><stop offset="0.238" stop-color="#9f9989"/><stop offset="0.305" stop-color="#a19b8a"/><stop offset="0.375" stop-color="#a39d8c"/><stop offset="0.446" stop-color="#a39d8c"/><stop offset="0.518" stop-color="#a39d8c"/><stop offset="0.589" stop-color="#9f9989"/><stop offset="0.660" stop-color="#989282"/><stop offset="0.729" stop-color="#908b7c"/><stop offset="0.795" stop-color="#898476"/><stop offset="0.859" stop-color="#837f71"/><stop offset="0.919" stop-color="#7e7a6e"/><stop offset="0.974" stop-color="#7a766a"/><stop offset="1.000" stop-color="#797569"/></linearGradient><linearGradient id="g64" gradientUnits="userSpaceOnUse" x1="1029.9" y1="0" x2="1173.8" y2="0"><stop offset="0.000" stop-color="#908c7e"/><stop offset="0.053" stop-color="#938f81"/><stop offset="0.111" stop-color="#989486"/><stop offset="0.173" stop-color="#9e9a8b"/><stop offset="0.238" stop-color="#a4a091"/><stop offset="0.305" stop-color="#a9a596"/><stop offset="0.375" stop-color="#aea99a"/><stop offset="0.446" stop-color="#b0ab9c"/><stop offset="0.518" stop-color="#b0ab9c"/><stop offset="0.589" stop-color="#aba697"/><stop offset="0.660" stop-color="#a19d8f"/><stop offset="0.729" stop-color="#999487"/><stop offset="0.795" stop-color="#908c7e"/><stop offset="0.859" stop-color="#898478"/><stop offset="0.919" stop-color="#837f72"/><stop offset="0.974" stop-color="#7d796d"/><stop offset="1.000" stop-color="#7d796c"/></linearGradient><linearGradient id="g65" gradientUnits="userSpaceOnUse" x1="1029.5" y1="0" x2="1174.2" y2="0"><stop offset="0.000" stop-color="#837f72"/><stop offset="0.053" stop-color="#8c887c"/><stop offset="0.111" stop-color="#9a968b"/><stop offset="0.173" stop-color="#a8a59b"/><stop offset="0.238" stop-color="#b9b6ac"/><stop offset="0.305" stop-color="#c6c3bb"/><stop offset="0.375" stop-color="#d2cfc7"/><stop offset="0.446" stop-color="#d6d4cc"/><stop offset="0.518" stop-color="#d6d4cc"/><stop offset="0.589" stop-color="#cecbc3"/><stop offset="0.660" stop-color="#bebbb2"/><stop offset="0.729" stop-color="#b0aca3"/><stop offset="0.795" stop-color="#a19e93"/><stop offset="0.859" stop-color="#949186"/><stop offset="0.919" stop-color="#8b877c"/><stop offset="0.974" stop-color="#827e71"/><stop offset="1.000" stop-color="#807c70"/></linearGradient><linearGradient id="g66" gradientUnits="userSpaceOnUse" x1="1029.1" y1="0" x2="1174.6" y2="0"><stop offset="0.000" stop-color="#7e7b6f"/><stop offset="0.053" stop-color="#8b877c"/><stop offset="0.111" stop-color="#9d9a90"/><stop offset="0.173" stop-color="#b1aea5"/><stop offset="0.238" stop-color="#c7c5bd"/><stop offset="0.305" stop-color="#d9d7d0"/><stop offset="0.375" stop-color="#e9e7e2"/><stop offset="0.446" stop-color="#eeede8"/><stop offset="0.518" stop-color="#eeede8"/><stop offset="0.589" stop-color="#e4e2dc"/><stop offset="0.660" stop-color="#d1cfc7"/><stop offset="0.729" stop-color="#bebcb3"/><stop offset="0.795" stop-color="#aca99f"/><stop offset="0.859" stop-color="#9d998f"/><stop offset="0.919" stop-color="#918d82"/><stop offset="0.974" stop-color="#858175"/><stop offset="1.000" stop-color="#838073"/></linearGradient><linearGradient id="g67" gradientUnits="userSpaceOnUse" x1="1028.8" y1="0" x2="1174.9" y2="0"><stop offset="0.000" stop-color="#7d796e"/><stop offset="0.053" stop-color="#89857a"/><stop offset="0.111" stop-color="#9a968c"/><stop offset="0.173" stop-color="#aca9a0"/><stop offset="0.238" stop-color="#c0beb6"/><stop offset="0.305" stop-color="#d1cfc7"/><stop offset="0.375" stop-color="#e0ded7"/><stop offset="0.446" stop-color="#e5e3dd"/><stop offset="0.518" stop-color="#e5e3dd"/><stop offset="0.589" stop-color="#dcd9d3"/><stop offset="0.660" stop-color="#cbc8c0"/><stop offset="0.729" stop-color="#bab7ae"/><stop offset="0.795" stop-color="#aaa79d"/><stop offset="0.859" stop-color="#9c998e"/><stop offset="0.919" stop-color="#928e82"/><stop offset="0.974" stop-color="#878377"/><stop offset="1.000" stop-color="#868275"/></linearGradient><linearGradient id="g68" gradientUnits="userSpaceOnUse" x1="1028.5" y1="0" x2="1175.2" y2="0"><stop offset="0.000" stop-color="#7b776b"/><stop offset="0.053" stop-color="#817d72"/><stop offset="0.111" stop-color="#8b877b"/><stop offset="0.173" stop-color="#959286"/><stop offset="0.238" stop-color="#a19d91"/><stop offset="0.305" stop-color="#aaa79a"/><stop offset="0.375" stop-color="#b2afa3"/><stop offset="0.446" stop-color="#b5b2a6"/><stop offset="0.518" stop-color="#b5b2a6"/><stop offset="0.589" stop-color="#b1ada1"/><stop offset="0.660" stop-color="#a8a599"/><stop offset="0.729" stop-color="#a09d91"/><stop offset="0.795" stop-color="#999588"/><stop offset="0.859" stop-color="#928e81"/><stop offset="0.919" stop-color="#8d897c"/><stop offset="0.974" stop-color="#888477"/><stop offset="1.000" stop-color="#878376"/></linearGradient><linearGradient id="g69" gradientUnits="userSpaceOnUse" x1="1028.1" y1="0" x2="1175.6" y2="0"><stop offset="0.000" stop-color="#838278"/><stop offset="0.053" stop-color="#848278"/><stop offset="0.111" stop-color="#858278"/><stop offset="0.173" stop-color="#868377"/><stop offset="0.238" stop-color="#878477"/><stop offset="0.305" stop-color="#888477"/><stop offset="0.375" stop-color="#888577"/><stop offset="0.446" stop-color="#898577"/><stop offset="0.518" stop-color="#898577"/><stop offset="0.589" stop-color="#898577"/><stop offset="0.660" stop-color="#888477"/><stop offset="0.729" stop-color="#888476"/><stop offset="0.795" stop-color="#888476"/><stop offset="0.859" stop-color="#878376"/><stop offset="0.919" stop-color="#878376"/><stop offset="0.974" stop-color="#878376"/><stop offset="1.000" stop-color="#878376"/></linearGradient><linearGradient id="g70" gradientUnits="userSpaceOnUse" x1="1027.7" y1="0" x2="1176.0" y2="0"><stop offset="0.000" stop-color="#91918b"/><stop offset="0.053" stop-color="#8f8e88"/><stop offset="0.111" stop-color="#8b8a82"/><stop offset="0.173" stop-color="#88867d"/><stop offset="0.238" stop-color="#848176"/><stop offset="0.305" stop-color="#817e71"/><stop offset="0.375" stop-color="#7e7a6d"/><stop offset="0.446" stop-color="#7d796b"/><stop offset="0.518" stop-color="#7d796b"/><stop offset="0.589" stop-color="#7e7a6c"/><stop offset="0.660" stop-color="#7f7b6d"/><stop offset="0.729" stop-color="#807c6e"/><stop offset="0.795" stop-color="#817d6f"/><stop offset="0.859" stop-color="#817d70"/><stop offset="0.919" stop-color="#827e71"/><stop offset="0.974" stop-color="#837f72"/><stop offset="1.000" stop-color="#837f72"/></linearGradient><linearGradient id="g71" gradientUnits="userSpaceOnUse" x1="1027.3" y1="0" x2="1176.4" y2="0"><stop offset="0.000" stop-color="#94948f"/><stop offset="0.053" stop-color="#92928c"/><stop offset="0.111" stop-color="#8f8e87"/><stop offset="0.173" stop-color="#8c8a82"/><stop offset="0.238" stop-color="#88867c"/><stop offset="0.305" stop-color="#858377"/><stop offset="0.375" stop-color="#838073"/><stop offset="0.446" stop-color="#827e71"/><stop offset="0.518" stop-color="#827e71"/><stop offset="0.589" stop-color="#817e71"/><stop offset="0.660" stop-color="#817e71"/><stop offset="0.729" stop-color="#807d70"/><stop offset="0.795" stop-color="#807c70"/><stop offset="0.859" stop-color="#807c6f"/><stop offset="0.919" stop-color="#7f7b6f"/><stop offset="0.974" stop-color="#7f7b6f"/><stop offset="1.000" stop-color="#7f7b6f"/></linearGradient><linearGradient id="g72" gradientUnits="userSpaceOnUse" x1="1027.1" y1="0" x2="1176.6" y2="0"><stop offset="0.000" stop-color="#999994"/><stop offset="0.053" stop-color="#999994"/><stop offset="0.111" stop-color="#9b9b95"/><stop offset="0.173" stop-color="#9c9c95"/><stop offset="0.238" stop-color="#9d9d96"/><stop offset="0.305" stop-color="#9e9e96"/><stop offset="0.375" stop-color="#9f9f97"/><stop offset="0.446" stop-color="#9f9f97"/><stop offset="0.518" stop-color="#9f9f97"/><stop offset="0.589" stop-color="#9b9b93"/><stop offset="0.660" stop-color="#95948b"/><stop offset="0.729" stop-color="#8e8d83"/><stop offset="0.795" stop-color="#88867c"/><stop offset="0.859" stop-color="#838075"/><stop offset="0.919" stop-color="#7f7b70"/><stop offset="0.974" stop-color="#7b776b"/><stop offset="1.000" stop-color="#7a766b"/></linearGradient><linearGradient id="g73" gradientUnits="userSpaceOnUse" x1="1026.8" y1="0" x2="1176.9" y2="0"><stop offset="0.000" stop-color="#999994"/><stop offset="0.053" stop-color="#9b9b96"/><stop offset="0.111" stop-color="#9f9f99"/><stop offset="0.173" stop-color="#a3a39c"/><stop offset="0.238" stop-color="#a7a7a0"/><stop offset="0.305" stop-color="#aaaaa3"/><stop offset="0.375" stop-color="#adada6"/><stop offset="0.446" stop-color="#aeaea7"/><stop offset="0.518" stop-color="#aeaea7"/><stop offset="0.589" stop-color="#a8a8a0"/><stop offset="0.660" stop-color="#9d9c94"/><stop offset="0.729" stop-color="#929188"/><stop offset="0.795" stop-color="#87857c"/><stop offset="0.859" stop-color="#7e7c72"/><stop offset="0.919" stop-color="#77746a"/><stop offset="0.974" stop-color="#706d63"/><stop offset="1.000" stop-color="#6f6c61"/></linearGradient><linearGradient id="g74" gradientUnits="userSpaceOnUse" x1="1026.5" y1="0" x2="1177.2" y2="0"><stop offset="0.000" stop-color="#93938e"/><stop offset="0.053" stop-color="#969690"/><stop offset="0.111" stop-color="#999993"/><stop offset="0.173" stop-color="#9d9d97"/><stop offset="0.238" stop-color="#a1a19b"/><stop offset="0.305" stop-color="#a4a49e"/><stop offset="0.375" stop-color="#a7a7a0"/><stop offset="0.446" stop-color="#a8a8a1"/><stop offset="0.518" stop-color="#a8a8a1"/><stop offset="0.589" stop-color="#a1a19a"/><stop offset="0.660" stop-color="#95948d"/><stop offset="0.729" stop-color="#8a8880"/><stop offset="0.795" stop-color="#7e7c74"/><stop offset="0.859" stop-color="#747269"/><stop offset="0.919" stop-color="#6d6a61"/><stop offset="0.974" stop-color="#656259"/><stop offset="1.000" stop-color="#646158"/></linearGradient><linearGradient id="g75" gradientUnits="userSpaceOnUse" x1="1177.2" y1="0" x2="1214.6" y2="0"><stop offset="0.000" stop-color="#5e5b53"/><stop offset="1.000" stop-color="#5e5b53"/></linearGradient><linearGradient id="g76" gradientUnits="userSpaceOnUse" x1="1170.5" y1="0" x2="1207.9" y2="0"><stop offset="0.000" stop-color="#736f65"/><stop offset="1.000" stop-color="#736f65"/></linearGradient><linearGradient id="g77" gradientUnits="userSpaceOnUse" x1="1171.9" y1="0" x2="1209.3" y2="0"><stop offset="0.000" stop-color="#767267"/><stop offset="1.000" stop-color="#767267"/></linearGradient><linearGradient id="g78" gradientUnits="userSpaceOnUse" x1="1173.1" y1="0" x2="1210.5" y2="0"><stop offset="0.000" stop-color="#797569"/><stop offset="1.000" stop-color="#797569"/></linearGradient><linearGradient id="g79" gradientUnits="userSpaceOnUse" x1="1173.8" y1="0" x2="1211.2" y2="0"><stop offset="0.000" stop-color="#7d796c"/><stop offset="1.000" stop-color="#7d796c"/></linearGradient><linearGradient id="g80" gradientUnits="userSpaceOnUse" x1="1174.2" y1="0" x2="1211.6" y2="0"><stop offset="0.000" stop-color="#807c70"/><stop offset="1.000" stop-color="#807c70"/></linearGradient><linearGradient id="g81" gradientUnits="userSpaceOnUse" x1="1174.6" y1="0" x2="1212.0" y2="0"><stop offset="0.000" stop-color="#838073"/><stop offset="1.000" stop-color="#838073"/></linearGradient><linearGradient id="g82" gradientUnits="userSpaceOnUse" x1="1174.9" y1="0" x2="1212.3" y2="0"><stop offset="0.000" stop-color="#868275"/><stop offset="1.000" stop-color="#868275"/></linearGradient><linearGradient id="g83" gradientUnits="userSpaceOnUse" x1="1175.2" y1="0" x2="1212.6" y2="0"><stop offset="0.000" stop-color="#878376"/><stop offset="1.000" stop-color="#878376"/></linearGradient><linearGradient id="g84" gradientUnits="userSpaceOnUse" x1="1175.6" y1="0" x2="1213.0" y2="0"><stop offset="0.000" stop-color="#878376"/><stop offset="1.000" stop-color="#878376"/></linearGradient><linearGradient id="g85" gradientUnits="userSpaceOnUse" x1="1176.0" y1="0" x2="1213.4" y2="0"><stop offset="0.000" stop-color="#837f72"/><stop offset="1.000" stop-color="#837f72"/></linearGradient><linearGradient id="g86" gradientUnits="userSpaceOnUse" x1="1176.4" y1="0" x2="1213.8" y2="0"><stop offset="0.000" stop-color="#7f7b6f"/><stop offset="1.000" stop-color="#7f7b6f"/></linearGradient><linearGradient id="g87" gradientUnits="userSpaceOnUse" x1="1176.6" y1="0" x2="1214.0" y2="0"><stop offset="0.000" stop-color="#7a766b"/><stop offset="1.000" stop-color="#7a766b"/></linearGradient><linearGradient id="g88" gradientUnits="userSpaceOnUse" x1="1176.9" y1="0" x2="1214.3" y2="0"><stop offset="0.000" stop-color="#6f6c61"/><stop offset="1.000" stop-color="#6f6c61"/></linearGradient><linearGradient id="g89" gradientUnits="userSpaceOnUse" x1="1177.2" y1="0" x2="1214.6" y2="0"><stop offset="0.000" stop-color="#646158"/><stop offset="1.000" stop-color="#646158"/></linearGradient><linearGradient id="g90" gradientUnits="userSpaceOnUse" x1="1214.6" y1="0" x2="1245.8" y2="0"><stop offset="0.000" stop-color="#5e5b53"/><stop offset="0.232" stop-color="#605d55"/><stop offset="0.437" stop-color="#625f57"/><stop offset="0.613" stop-color="#646159"/><stop offset="0.757" stop-color="#65625a"/><stop offset="0.869" stop-color="#67645c"/><stop offset="0.947" stop-color="#68655d"/><stop offset="0.991" stop-color="#69665e"/><stop offset="1.000" stop-color="#6a675f"/></linearGradient><linearGradient id="g91" gradientUnits="userSpaceOnUse" x1="1207.9" y1="0" x2="1236.4" y2="0"><stop offset="0.000" stop-color="#736f65"/><stop offset="0.232" stop-color="#757166"/><stop offset="0.437" stop-color="#777368"/><stop offset="0.613" stop-color="#79756a"/><stop offset="0.757" stop-color="#7b776c"/><stop offset="0.869" stop-color="#7d786d"/><stop offset="0.947" stop-color="#7e796e"/><stop offset="0.991" stop-color="#7f7b6f"/><stop offset="1.000" stop-color="#807b70"/></linearGradient><linearGradient id="g92" gradientUnits="userSpaceOnUse" x1="1209.3" y1="0" x2="1238.3" y2="0"><stop offset="0.000" stop-color="#767267"/><stop offset="0.232" stop-color="#787468"/><stop offset="0.437" stop-color="#7a766a"/><stop offset="0.613" stop-color="#7c786c"/><stop offset="0.757" stop-color="#7e7a6e"/><stop offset="0.869" stop-color="#807b6f"/><stop offset="0.947" stop-color="#817d70"/><stop offset="0.991" stop-color="#827e72"/><stop offset="1.000" stop-color="#837f72"/></linearGradient><linearGradient id="g93" gradientUnits="userSpaceOnUse" x1="1210.5" y1="0" x2="1240.0" y2="0"><stop offset="0.000" stop-color="#797569"/><stop offset="0.232" stop-color="#7a766a"/><stop offset="0.437" stop-color="#7d786c"/><stop offset="0.613" stop-color="#7f7b6e"/><stop offset="0.757" stop-color="#817d70"/><stop offset="0.869" stop-color="#837e71"/><stop offset="0.947" stop-color="#848073"/><stop offset="0.991" stop-color="#858174"/><stop offset="1.000" stop-color="#868275"/></linearGradient><linearGradient id="g94" gradientUnits="userSpaceOnUse" x1="1211.2" y1="0" x2="1241.0" y2="0"><stop offset="0.000" stop-color="#7d796c"/><stop offset="0.232" stop-color="#7e796d"/><stop offset="0.437" stop-color="#807c6f"/><stop offset="0.613" stop-color="#827e71"/><stop offset="0.757" stop-color="#848073"/><stop offset="0.869" stop-color="#868275"/><stop offset="0.947" stop-color="#888376"/><stop offset="0.991" stop-color="#898577"/><stop offset="1.000" stop-color="#8a8578"/></linearGradient><linearGradient id="g95" gradientUnits="userSpaceOnUse" x1="1211.6" y1="0" x2="1241.6" y2="0"><stop offset="0.000" stop-color="#807c70"/><stop offset="0.232" stop-color="#807c70"/><stop offset="0.437" stop-color="#837f72"/><stop offset="0.613" stop-color="#858174"/><stop offset="0.757" stop-color="#878376"/><stop offset="0.869" stop-color="#898577"/><stop offset="0.947" stop-color="#8b8679"/><stop offset="0.991" stop-color="#8c887a"/><stop offset="1.000" stop-color="#8d887b"/></linearGradient><linearGradient id="g96" gradientUnits="userSpaceOnUse" x1="1212.0" y1="0" x2="1242.1" y2="0"><stop offset="0.000" stop-color="#838073"/><stop offset="0.232" stop-color="#837f72"/><stop offset="0.437" stop-color="#858174"/><stop offset="0.613" stop-color="#888476"/><stop offset="0.757" stop-color="#8a8679"/><stop offset="0.869" stop-color="#8c887a"/><stop offset="0.947" stop-color="#8e897b"/><stop offset="0.991" stop-color="#8f8b7d"/><stop offset="1.000" stop-color="#908b7d"/></linearGradient><linearGradient id="g97" gradientUnits="userSpaceOnUse" x1="1212.3" y1="0" x2="1242.6" y2="0"><stop offset="0.000" stop-color="#868275"/><stop offset="0.232" stop-color="#868275"/><stop offset="0.437" stop-color="#888477"/><stop offset="0.613" stop-color="#8b8679"/><stop offset="0.757" stop-color="#8d897b"/><stop offset="0.869" stop-color="#8f8b7d"/><stop offset="0.947" stop-color="#908c7e"/><stop offset="0.991" stop-color="#928d7f"/><stop offset="1.000" stop-color="#938e80"/></linearGradient><linearGradient id="g98" gradientUnits="userSpaceOnUse" x1="1212.6" y1="0" x2="1243.0" y2="0"><stop offset="0.000" stop-color="#878376"/><stop offset="0.232" stop-color="#888477"/><stop offset="0.437" stop-color="#8b8779"/><stop offset="0.613" stop-color="#8d897c"/><stop offset="0.757" stop-color="#908c7e"/><stop offset="0.869" stop-color="#928d7f"/><stop offset="0.947" stop-color="#938f81"/><stop offset="0.991" stop-color="#959082"/><stop offset="1.000" stop-color="#969183"/></linearGradient><linearGradient id="g99" gradientUnits="userSpaceOnUse" x1="1213.0" y1="0" x2="1243.5" y2="0"><stop offset="0.000" stop-color="#878376"/><stop offset="0.232" stop-color="#898578"/><stop offset="0.437" stop-color="#8c887a"/><stop offset="0.613" stop-color="#8e8a7d"/><stop offset="0.757" stop-color="#918d7f"/><stop offset="0.869" stop-color="#938e80"/><stop offset="0.947" stop-color="#949082"/><stop offset="0.991" stop-color="#969183"/><stop offset="1.000" stop-color="#979284"/></linearGradient><linearGradient id="g100" gradientUnits="userSpaceOnUse" x1="1213.4" y1="0" x2="1244.1" y2="0"><stop offset="0.000" stop-color="#837f72"/><stop offset="0.232" stop-color="#858174"/><stop offset="0.437" stop-color="#888477"/><stop offset="0.613" stop-color="#8a8679"/><stop offset="0.757" stop-color="#8d887b"/><stop offset="0.869" stop-color="#8e8a7c"/><stop offset="0.947" stop-color="#908c7e"/><stop offset="0.991" stop-color="#918d7f"/><stop offset="1.000" stop-color="#928e80"/></linearGradient><linearGradient id="g101" gradientUnits="userSpaceOnUse" x1="1213.8" y1="0" x2="1244.6" y2="0"><stop offset="0.000" stop-color="#7f7b6f"/><stop offset="0.232" stop-color="#817d71"/><stop offset="0.437" stop-color="#847f73"/><stop offset="0.613" stop-color="#868275"/><stop offset="0.757" stop-color="#888477"/><stop offset="0.869" stop-color="#8a8678"/><stop offset="0.947" stop-color="#8b877a"/><stop offset="0.991" stop-color="#8d897b"/><stop offset="1.000" stop-color="#8e897c"/></linearGradient><linearGradient id="g102" gradientUnits="userSpaceOnUse" x1="1214.0" y1="0" x2="1245.0" y2="0"><stop offset="0.000" stop-color="#7a766b"/><stop offset="0.232" stop-color="#7b776b"/><stop offset="0.437" stop-color="#7d7a6d"/><stop offset="0.613" stop-color="#807c6f"/><stop offset="0.757" stop-color="#827e71"/><stop offset="0.869" stop-color="#847f73"/><stop offset="0.947" stop-color="#858174"/><stop offset="0.991" stop-color="#868275"/><stop offset="1.000" stop-color="#878376"/></linearGradient><linearGradient id="g103" gradientUnits="userSpaceOnUse" x1="1214.3" y1="0" x2="1245.4" y2="0"><stop offset="0.000" stop-color="#6f6c61"/><stop offset="0.232" stop-color="#706c61"/><stop offset="0.437" stop-color="#726e63"/><stop offset="0.613" stop-color="#747065"/><stop offset="0.757" stop-color="#767267"/><stop offset="0.869" stop-color="#777468"/><stop offset="0.947" stop-color="#797569"/><stop offset="0.991" stop-color="#7a766a"/><stop offset="1.000" stop-color="#7b776b"/></linearGradient><linearGradient id="g104" gradientUnits="userSpaceOnUse" x1="1214.6" y1="0" x2="1245.7" y2="0"><stop offset="0.000" stop-color="#646158"/><stop offset="0.232" stop-color="#646157"/><stop offset="0.437" stop-color="#666359"/><stop offset="0.613" stop-color="#68655b"/><stop offset="0.757" stop-color="#6a665c"/><stop offset="0.869" stop-color="#6b685d"/><stop offset="0.947" stop-color="#6c695e"/><stop offset="0.991" stop-color="#6d6a5f"/><stop offset="1.000" stop-color="#6e6a60"/></linearGradient><linearGradient id="g105" gradientUnits="userSpaceOnUse" x1="1214.6" y1="0" x2="1245.7" y2="0"><stop offset="0.000" stop-color="#a5a8a0"/><stop offset="0.119" stop-color="#9fa29a"/><stop offset="0.338" stop-color="#94968d"/><stop offset="0.529" stop-color="#898a81"/><stop offset="0.689" stop-color="#7f7f76"/><stop offset="0.817" stop-color="#76756b"/><stop offset="0.913" stop-color="#6e6c62"/><stop offset="0.974" stop-color="#6b685e"/><stop offset="1.000" stop-color="#6e6a60"/></linearGradient><linearGradient id="g106" gradientUnits="userSpaceOnUse" x1="1214.3" y1="0" x2="1245.4" y2="0"><stop offset="0.000" stop-color="#a5a8a0"/><stop offset="0.119" stop-color="#a0a39b"/><stop offset="0.338" stop-color="#979990"/><stop offset="0.529" stop-color="#8e8e85"/><stop offset="0.689" stop-color="#86867c"/><stop offset="0.817" stop-color="#7f7e73"/><stop offset="0.913" stop-color="#79766b"/><stop offset="0.974" stop-color="#787468"/><stop offset="1.000" stop-color="#7a776b"/></linearGradient><linearGradient id="g107" gradientUnits="userSpaceOnUse" x1="1214.0" y1="0" x2="1245.0" y2="0"><stop offset="0.000" stop-color="#a5a8a0"/><stop offset="0.119" stop-color="#a1a49b"/><stop offset="0.338" stop-color="#9a9b92"/><stop offset="0.529" stop-color="#939389"/><stop offset="0.689" stop-color="#8d8c82"/><stop offset="0.817" stop-color="#88867b"/><stop offset="0.913" stop-color="#848175"/><stop offset="0.974" stop-color="#848073"/><stop offset="1.000" stop-color="#878376"/></linearGradient><linearGradient id="g108" gradientUnits="userSpaceOnUse" x1="1213.8" y1="0" x2="1244.6" y2="0"><stop offset="0.000" stop-color="#a5a8a0"/><stop offset="0.119" stop-color="#a2a49c"/><stop offset="0.338" stop-color="#9b9d94"/><stop offset="0.529" stop-color="#95958c"/><stop offset="0.689" stop-color="#908f85"/><stop offset="0.817" stop-color="#8d8a7f"/><stop offset="0.913" stop-color="#8a867a"/><stop offset="0.974" stop-color="#8a8679"/><stop offset="1.000" stop-color="#8d897b"/></linearGradient><linearGradient id="g109" gradientUnits="userSpaceOnUse" x1="1213.4" y1="0" x2="1244.1" y2="0"><stop offset="0.000" stop-color="#a5a8a0"/><stop offset="0.119" stop-color="#a2a49c"/><stop offset="0.338" stop-color="#9c9e94"/><stop offset="0.529" stop-color="#97978d"/><stop offset="0.689" stop-color="#939287"/><stop offset="0.817" stop-color="#908e82"/><stop offset="0.913" stop-color="#8e8a7d"/><stop offset="0.974" stop-color="#8f8a7d"/><stop offset="1.000" stop-color="#928d7f"/></linearGradient><linearGradient id="g110" gradientUnits="userSpaceOnUse" x1="1213.0" y1="0" x2="1243.5" y2="0"><stop offset="0.000" stop-color="#a5a8a0"/><stop offset="0.119" stop-color="#a2a59c"/><stop offset="0.338" stop-color="#9d9f95"/><stop offset="0.529" stop-color="#98998f"/><stop offset="0.689" stop-color="#959489"/><stop offset="0.817" stop-color="#939185"/><stop offset="0.913" stop-color="#928e81"/><stop offset="0.974" stop-color="#938f81"/><stop offset="1.000" stop-color="#969283"/></linearGradient><linearGradient id="g111" gradientUnits="userSpaceOnUse" x1="1212.6" y1="0" x2="1243.0" y2="0"><stop offset="0.000" stop-color="#a5a8a0"/><stop offset="0.119" stop-color="#a2a59c"/><stop offset="0.338" stop-color="#9d9e95"/><stop offset="0.529" stop-color="#98988e"/><stop offset="0.689" stop-color="#959489"/><stop offset="0.817" stop-color="#929084"/><stop offset="0.913" stop-color="#918d80"/><stop offset="0.974" stop-color="#928e80"/><stop offset="1.000" stop-color="#959182"/></linearGradient><linearGradient id="g112" gradientUnits="userSpaceOnUse" x1="1212.3" y1="0" x2="1242.6" y2="0"><stop offset="0.000" stop-color="#a5a8a0"/><stop offset="0.119" stop-color="#a2a59c"/><stop offset="0.338" stop-color="#9c9e95"/><stop offset="0.529" stop-color="#97978d"/><stop offset="0.689" stop-color="#939287"/><stop offset="0.817" stop-color="#908e82"/><stop offset="0.913" stop-color="#8e8b7e"/><stop offset="0.974" stop-color="#8f8b7d"/><stop offset="1.000" stop-color="#928e80"/></linearGradient><linearGradient id="g113" gradientUnits="userSpaceOnUse" x1="1212.0" y1="0" x2="1242.1" y2="0"><stop offset="0.000" stop-color="#a5a8a0"/><stop offset="0.119" stop-color="#a2a49c"/><stop offset="0.338" stop-color="#9c9d94"/><stop offset="0.529" stop-color="#96968c"/><stop offset="0.689" stop-color="#929086"/><stop offset="0.817" stop-color="#8e8c80"/><stop offset="0.913" stop-color="#8c887b"/><stop offset="0.974" stop-color="#8c887a"/><stop offset="1.000" stop-color="#8f8b7d"/></linearGradient><linearGradient id="g114" gradientUnits="userSpaceOnUse" x1="1211.6" y1="0" x2="1241.6" y2="0"><stop offset="0.000" stop-color="#a5a8a0"/><stop offset="0.119" stop-color="#a2a49c"/><stop offset="0.338" stop-color="#9b9c93"/><stop offset="0.529" stop-color="#95958b"/><stop offset="0.689" stop-color="#908f84"/><stop offset="0.817" stop-color="#8c8a7e"/><stop offset="0.913" stop-color="#898679"/><stop offset="0.974" stop-color="#8a8578"/><stop offset="1.000" stop-color="#8c887a"/></linearGradient><linearGradient id="g115" gradientUnits="userSpaceOnUse" x1="1211.2" y1="0" x2="1241.0" y2="0"><stop offset="0.000" stop-color="#a5a8a0"/><stop offset="0.119" stop-color="#a1a49c"/><stop offset="0.338" stop-color="#9a9c93"/><stop offset="0.529" stop-color="#94948a"/><stop offset="0.689" stop-color="#8e8d83"/><stop offset="0.817" stop-color="#8a887c"/><stop offset="0.913" stop-color="#878376"/><stop offset="0.974" stop-color="#868275"/><stop offset="1.000" stop-color="#898577"/></linearGradient><linearGradient id="g116" gradientUnits="userSpaceOnUse" x1="1210.5" y1="0" x2="1240.0" y2="0"><stop offset="0.000" stop-color="#a5a8a0"/><stop offset="0.119" stop-color="#a1a49b"/><stop offset="0.338" stop-color="#9a9b92"/><stop offset="0.529" stop-color="#929289"/><stop offset="0.689" stop-color="#8c8b81"/><stop offset="0.817" stop-color="#87857a"/><stop offset="0.913" stop-color="#838074"/><stop offset="0.974" stop-color="#837f72"/><stop offset="1.000" stop-color="#868174"/></linearGradient><linearGradient id="g117" gradientUnits="userSpaceOnUse" x1="1209.3" y1="0" x2="1238.3" y2="0"><stop offset="0.000" stop-color="#a5a8a0"/><stop offset="0.119" stop-color="#a1a39b"/><stop offset="0.338" stop-color="#999a92"/><stop offset="0.529" stop-color="#919188"/><stop offset="0.689" stop-color="#8b8a80"/><stop offset="0.817" stop-color="#858378"/><stop offset="0.913" stop-color="#817d72"/><stop offset="0.974" stop-color="#807c70"/><stop offset="1.000" stop-color="#837e72"/></linearGradient><linearGradient id="g118" gradientUnits="userSpaceOnUse" x1="1207.9" y1="0" x2="1236.4" y2="0"><stop offset="0.000" stop-color="#a5a8a0"/><stop offset="0.119" stop-color="#a1a39b"/><stop offset="0.338" stop-color="#989a91"/><stop offset="0.529" stop-color="#909087"/><stop offset="0.689" stop-color="#89887e"/><stop offset="0.817" stop-color="#838177"/><stop offset="0.913" stop-color="#7e7a70"/><stop offset="0.974" stop-color="#7d796d"/><stop offset="1.000" stop-color="#807b70"/></linearGradient><linearGradient id="g119" gradientUnits="userSpaceOnUse" x1="709.6" y1="0" x2="1212.3" y2="0"><stop offset="0.000" stop-color="#a5a8a0"/><stop offset="0.250" stop-color="#a5a8a0"/><stop offset="0.500" stop-color="#a5a8a0"/><stop offset="0.750" stop-color="#a5a8a0"/><stop offset="1.000" stop-color="#a5a8a0"/></linearGradient><linearGradient id="g120" gradientUnits="userSpaceOnUse" x1="709.3" y1="0" x2="1212.0" y2="0"><stop offset="0.000" stop-color="#a5a8a0"/><stop offset="0.250" stop-color="#a5a8a0"/><stop offset="0.500" stop-color="#a5a8a0"/><stop offset="0.750" stop-color="#a5a8a0"/><stop offset="1.000" stop-color="#a5a8a0"/></linearGradient><linearGradient id="g121" gradientUnits="userSpaceOnUse" x1="708.9" y1="0" x2="1211.6" y2="0"><stop offset="0.000" stop-color="#a5a8a0"/><stop offset="0.250" stop-color="#a5a8a0"/><stop offset="0.500" stop-color="#a5a8a0"/><stop offset="0.750" stop-color="#a5a8a0"/><stop offset="1.000" stop-color="#a5a8a0"/></linearGradient><linearGradient id="g122" gradientUnits="userSpaceOnUse" x1="708.5" y1="0" x2="1211.2" y2="0"><stop offset="0.000" stop-color="#a5a8a0"/><stop offset="0.250" stop-color="#a5a8a0"/><stop offset="0.500" stop-color="#a5a8a0"/><stop offset="0.750" stop-color="#a5a8a0"/><stop offset="1.000" stop-color="#a5a8a0"/></linearGradient><linearGradient id="g123" gradientUnits="userSpaceOnUse" x1="707.8" y1="0" x2="1210.5" y2="0"><stop offset="0.000" stop-color="#a5a8a0"/><stop offset="0.250" stop-color="#a5a8a0"/><stop offset="0.500" stop-color="#a5a8a0"/><stop offset="0.750" stop-color="#a5a8a0"/><stop offset="1.000" stop-color="#a5a8a0"/></linearGradient><linearGradient id="g124" gradientUnits="userSpaceOnUse" x1="706.6" y1="0" x2="1209.3" y2="0"><stop offset="0.000" stop-color="#a5a8a0"/><stop offset="0.250" stop-color="#a5a8a0"/><stop offset="0.500" stop-color="#a5a8a0"/><stop offset="0.750" stop-color="#a5a8a0"/><stop offset="1.000" stop-color="#a5a8a0"/></linearGradient><linearGradient id="g125" gradientUnits="userSpaceOnUse" x1="705.2" y1="0" x2="1207.9" y2="0"><stop offset="0.000" stop-color="#a5a8a0"/><stop offset="0.250" stop-color="#a5a8a0"/><stop offset="0.500" stop-color="#a5a8a0"/><stop offset="0.750" stop-color="#a5a8a0"/><stop offset="1.000" stop-color="#a5a8a0"/></linearGradient><linearGradient id="g126" gradientUnits="userSpaceOnUse" x1="695.7" y1="0" x2="711.8" y2="0"><stop offset="0.000" stop-color="#6e6b60"/><stop offset="0.023" stop-color="#6b685e"/><stop offset="0.108" stop-color="#706e64"/><stop offset="0.250" stop-color="#7b7a71"/><stop offset="0.449" stop-color="#888880"/><stop offset="0.701" stop-color="#969890"/><stop offset="1.000" stop-color="#a5a8a0"/></linearGradient><linearGradient id="g127" gradientUnits="userSpaceOnUse" x1="695.4" y1="0" x2="711.6" y2="0"><stop offset="0.000" stop-color="#7b776b"/><stop offset="0.023" stop-color="#787469"/><stop offset="0.108" stop-color="#7b786d"/><stop offset="0.250" stop-color="#838278"/><stop offset="0.449" stop-color="#8d8d84"/><stop offset="0.701" stop-color="#999a92"/><stop offset="1.000" stop-color="#a5a8a0"/></linearGradient><linearGradient id="g128" gradientUnits="userSpaceOnUse" x1="695.0" y1="0" x2="711.3" y2="0"><stop offset="0.000" stop-color="#888376"/><stop offset="0.023" stop-color="#848073"/><stop offset="0.108" stop-color="#858276"/><stop offset="0.250" stop-color="#8b897f"/><stop offset="0.449" stop-color="#929288"/><stop offset="0.701" stop-color="#9b9d94"/><stop offset="1.000" stop-color="#a5a8a0"/></linearGradient><linearGradient id="g129" gradientUnits="userSpaceOnUse" x1="694.6" y1="0" x2="711.0" y2="0"><stop offset="0.000" stop-color="#8e8a7c"/><stop offset="0.023" stop-color="#8b8679"/><stop offset="0.108" stop-color="#8b877b"/><stop offset="0.250" stop-color="#8f8d82"/><stop offset="0.449" stop-color="#94948b"/><stop offset="0.701" stop-color="#9d9e95"/><stop offset="1.000" stop-color="#a5a8a0"/></linearGradient><linearGradient id="g130" gradientUnits="userSpaceOnUse" x1="694.1" y1="0" x2="710.7" y2="0"><stop offset="0.000" stop-color="#938e80"/><stop offset="0.023" stop-color="#8f8b7d"/><stop offset="0.108" stop-color="#8e8b7e"/><stop offset="0.250" stop-color="#919085"/><stop offset="0.449" stop-color="#96968c"/><stop offset="0.701" stop-color="#9d9f96"/><stop offset="1.000" stop-color="#a5a8a0"/></linearGradient><linearGradient id="g131" gradientUnits="userSpaceOnUse" x1="693.5" y1="0" x2="710.3" y2="0"><stop offset="0.000" stop-color="#979384"/><stop offset="0.023" stop-color="#938f81"/><stop offset="0.108" stop-color="#928f82"/><stop offset="0.250" stop-color="#949287"/><stop offset="0.449" stop-color="#98988e"/><stop offset="0.701" stop-color="#9ea097"/><stop offset="1.000" stop-color="#a5a8a0"/></linearGradient><linearGradient id="g132" gradientUnits="userSpaceOnUse" x1="693.0" y1="0" x2="709.9" y2="0"><stop offset="0.000" stop-color="#969283"/><stop offset="0.023" stop-color="#928e80"/><stop offset="0.108" stop-color="#918e81"/><stop offset="0.250" stop-color="#939286"/><stop offset="0.449" stop-color="#98978d"/><stop offset="0.701" stop-color="#9ea096"/><stop offset="1.000" stop-color="#a5a8a0"/></linearGradient><linearGradient id="g133" gradientUnits="userSpaceOnUse" x1="692.5" y1="0" x2="709.6" y2="0"><stop offset="0.000" stop-color="#938f80"/><stop offset="0.023" stop-color="#8f8b7d"/><stop offset="0.108" stop-color="#8f8b7f"/><stop offset="0.250" stop-color="#929085"/><stop offset="0.449" stop-color="#96968c"/><stop offset="0.701" stop-color="#9d9f96"/><stop offset="1.000" stop-color="#a5a8a0"/></linearGradient><linearGradient id="g134" gradientUnits="userSpaceOnUse" x1="692.1" y1="0" x2="709.3" y2="0"><stop offset="0.000" stop-color="#908c7e"/><stop offset="0.023" stop-color="#8d887b"/><stop offset="0.108" stop-color="#8c897c"/><stop offset="0.250" stop-color="#908e83"/><stop offset="0.449" stop-color="#95958b"/><stop offset="0.701" stop-color="#9d9e95"/><stop offset="1.000" stop-color="#a5a8a0"/></linearGradient><linearGradient id="g135" gradientUnits="userSpaceOnUse" x1="691.6" y1="0" x2="708.9" y2="0"><stop offset="0.000" stop-color="#8d897b"/><stop offset="0.023" stop-color="#8a8578"/><stop offset="0.108" stop-color="#8a877a"/><stop offset="0.250" stop-color="#8e8c81"/><stop offset="0.449" stop-color="#94948a"/><stop offset="0.701" stop-color="#9c9e95"/><stop offset="1.000" stop-color="#a5a8a0"/></linearGradient><linearGradient id="g136" gradientUnits="userSpaceOnUse" x1="691.0" y1="0" x2="708.5" y2="0"><stop offset="0.000" stop-color="#8a8678"/><stop offset="0.023" stop-color="#878275"/><stop offset="0.108" stop-color="#878478"/><stop offset="0.250" stop-color="#8c8b80"/><stop offset="0.449" stop-color="#939389"/><stop offset="0.701" stop-color="#9c9d94"/><stop offset="1.000" stop-color="#a5a8a0"/></linearGradient><linearGradient id="g137" gradientUnits="userSpaceOnUse" x1="690.0" y1="0" x2="707.8" y2="0"><stop offset="0.000" stop-color="#868275"/><stop offset="0.023" stop-color="#837f72"/><stop offset="0.108" stop-color="#848175"/><stop offset="0.250" stop-color="#8a887e"/><stop offset="0.449" stop-color="#919188"/><stop offset="0.701" stop-color="#9b9d94"/><stop offset="1.000" stop-color="#a5a8a0"/></linearGradient><linearGradient id="g138" gradientUnits="userSpaceOnUse" x1="688.3" y1="0" x2="706.6" y2="0"><stop offset="0.000" stop-color="#837f73"/><stop offset="0.023" stop-color="#807c70"/><stop offset="0.108" stop-color="#827f73"/><stop offset="0.251" stop-color="#88877c"/><stop offset="0.449" stop-color="#909087"/><stop offset="0.701" stop-color="#9a9c93"/><stop offset="1.000" stop-color="#a5a8a0"/></linearGradient><linearGradient id="g139" gradientUnits="userSpaceOnUse" x1="686.3" y1="0" x2="705.2" y2="0"><stop offset="0.000" stop-color="#807c70"/><stop offset="0.023" stop-color="#7d796d"/><stop offset="0.108" stop-color="#7f7c71"/><stop offset="0.251" stop-color="#86857b"/><stop offset="0.449" stop-color="#8f8f86"/><stop offset="0.701" stop-color="#9a9b93"/><stop offset="1.000" stop-color="#a5a8a0"/></linearGradient><linearGradient id="g140" gradientUnits="userSpaceOnUse" x1="1098.4" y1="0" x2="1173.6" y2="0"><stop offset="0.000" stop-color="#63635e"/><stop offset="0.667" stop-color="#63635e"/><stop offset="1.000" stop-color="#63635e"/></linearGradient><linearGradient id="g141" gradientUnits="userSpaceOnUse" x1="1105.0" y1="0" x2="1180.3" y2="0"><stop offset="0.000" stop-color="#8b8677"/><stop offset="0.667" stop-color="#8b8677"/><stop offset="1.000" stop-color="#8b8677"/></linearGradient><linearGradient id="g142" gradientUnits="userSpaceOnUse" x1="1103.7" y1="0" x2="1178.9" y2="0"><stop offset="0.000" stop-color="#908b7c"/><stop offset="0.667" stop-color="#908b7c"/><stop offset="1.000" stop-color="#908b7c"/></linearGradient><linearGradient id="g143" gradientUnits="userSpaceOnUse" x1="1102.5" y1="0" x2="1177.7" y2="0"><stop offset="0.000" stop-color="#928e7f"/><stop offset="0.667" stop-color="#928e7f"/><stop offset="1.000" stop-color="#928e7f"/></linearGradient><linearGradient id="g144" gradientUnits="userSpaceOnUse" x1="1101.7" y1="0" x2="1177.0" y2="0"><stop offset="0.000" stop-color="#8b877a"/><stop offset="0.667" stop-color="#8b877a"/><stop offset="1.000" stop-color="#8b877a"/></linearGradient><linearGradient id="g145" gradientUnits="userSpaceOnUse" x1="1101.3" y1="0" x2="1176.6" y2="0"><stop offset="0.000" stop-color="#7f7b6f"/><stop offset="0.667" stop-color="#7f7b6f"/><stop offset="1.000" stop-color="#7f7b6f"/></linearGradient><linearGradient id="g146" gradientUnits="userSpaceOnUse" x1="1101.0" y1="0" x2="1176.2" y2="0"><stop offset="0.000" stop-color="#7b776c"/><stop offset="0.667" stop-color="#7b776c"/><stop offset="1.000" stop-color="#7b776c"/></linearGradient><linearGradient id="g147" gradientUnits="userSpaceOnUse" x1="1100.7" y1="0" x2="1175.9" y2="0"><stop offset="0.000" stop-color="#79766a"/><stop offset="0.667" stop-color="#79766a"/><stop offset="1.000" stop-color="#79766a"/></linearGradient><linearGradient id="g148" gradientUnits="userSpaceOnUse" x1="1100.3" y1="0" x2="1175.6" y2="0"><stop offset="0.000" stop-color="#777368"/><stop offset="0.667" stop-color="#777368"/><stop offset="1.000" stop-color="#777368"/></linearGradient><linearGradient id="g149" gradientUnits="userSpaceOnUse" x1="1100.0" y1="0" x2="1175.2" y2="0"><stop offset="0.000" stop-color="#7f7e74"/><stop offset="0.667" stop-color="#7f7e74"/><stop offset="1.000" stop-color="#7f7e74"/></linearGradient><linearGradient id="g150" gradientUnits="userSpaceOnUse" x1="1099.6" y1="0" x2="1174.8" y2="0"><stop offset="0.000" stop-color="#8d8c87"/><stop offset="0.667" stop-color="#8d8c87"/><stop offset="1.000" stop-color="#8d8c87"/></linearGradient><linearGradient id="g151" gradientUnits="userSpaceOnUse" x1="1099.2" y1="0" x2="1174.5" y2="0"><stop offset="0.000" stop-color="#90908b"/><stop offset="0.667" stop-color="#90908b"/><stop offset="1.000" stop-color="#90908b"/></linearGradient><linearGradient id="g152" gradientUnits="userSpaceOnUse" x1="1098.9" y1="0" x2="1174.2" y2="0"><stop offset="0.000" stop-color="#94948f"/><stop offset="0.667" stop-color="#94948f"/><stop offset="1.000" stop-color="#94948f"/></linearGradient><linearGradient id="g153" gradientUnits="userSpaceOnUse" x1="1098.6" y1="0" x2="1173.9" y2="0"><stop offset="0.000" stop-color="#94948f"/><stop offset="0.667" stop-color="#94948f"/><stop offset="1.000" stop-color="#94948f"/></linearGradient><linearGradient id="g154" gradientUnits="userSpaceOnUse" x1="1098.4" y1="0" x2="1173.7" y2="0"><stop offset="0.000" stop-color="#8f8f8a"/><stop offset="0.667" stop-color="#8f8f8a"/><stop offset="1.000" stop-color="#8f8f8a"/></linearGradient><linearGradient id="g155" gradientUnits="userSpaceOnUse" x1="1173.6" y1="0" x2="1186.3" y2="0"><stop offset="0.000" stop-color="#63635e"/><stop offset="0.307" stop-color="#5c5b55"/><stop offset="0.563" stop-color="#56544d"/><stop offset="0.763" stop-color="#5d5b53"/><stop offset="0.905" stop-color="#64625a"/><stop offset="0.984" stop-color="#6c6b62"/><stop offset="1.000" stop-color="#747269"/></linearGradient><linearGradient id="g156" gradientUnits="userSpaceOnUse" x1="1180.3" y1="0" x2="1195.7" y2="0"><stop offset="0.000" stop-color="#8b8677"/><stop offset="0.307" stop-color="#868173"/><stop offset="0.563" stop-color="#827d70"/><stop offset="0.763" stop-color="#7d796c"/><stop offset="0.904" stop-color="#7b766a"/><stop offset="0.984" stop-color="#797468"/><stop offset="1.000" stop-color="#777366"/></linearGradient><linearGradient id="g157" gradientUnits="userSpaceOnUse" x1="1178.9" y1="0" x2="1193.7" y2="0"><stop offset="0.000" stop-color="#908b7c"/><stop offset="0.307" stop-color="#8b8678"/><stop offset="0.563" stop-color="#868274"/><stop offset="0.763" stop-color="#827e70"/><stop offset="0.904" stop-color="#7f7b6e"/><stop offset="0.984" stop-color="#7d796c"/><stop offset="1.000" stop-color="#7b776b"/></linearGradient><linearGradient id="g158" gradientUnits="userSpaceOnUse" x1="1177.7" y1="0" x2="1192.0" y2="0"><stop offset="0.000" stop-color="#928e7f"/><stop offset="0.307" stop-color="#8d897b"/><stop offset="0.563" stop-color="#898477"/><stop offset="0.763" stop-color="#848073"/><stop offset="0.905" stop-color="#817d70"/><stop offset="0.984" stop-color="#7f7b6e"/><stop offset="1.000" stop-color="#7d796d"/></linearGradient><linearGradient id="g159" gradientUnits="userSpaceOnUse" x1="1177.0" y1="0" x2="1191.0" y2="0"><stop offset="0.000" stop-color="#8b877a"/><stop offset="0.307" stop-color="#858275"/><stop offset="0.563" stop-color="#817d71"/><stop offset="0.763" stop-color="#7d796d"/><stop offset="0.905" stop-color="#7a776b"/><stop offset="0.984" stop-color="#787569"/><stop offset="1.000" stop-color="#767367"/></linearGradient><linearGradient id="g160" gradientUnits="userSpaceOnUse" x1="1176.6" y1="0" x2="1190.5" y2="0"><stop offset="0.000" stop-color="#7f7b6f"/><stop offset="0.307" stop-color="#777367"/><stop offset="0.563" stop-color="#736f64"/><stop offset="0.763" stop-color="#6f6b60"/><stop offset="0.905" stop-color="#6d695e"/><stop offset="0.984" stop-color="#6b675d"/><stop offset="1.000" stop-color="#69665c"/></linearGradient><linearGradient id="g161" gradientUnits="userSpaceOnUse" x1="1176.2" y1="0" x2="1190.0" y2="0"><stop offset="0.000" stop-color="#7b776c"/><stop offset="0.307" stop-color="#716d62"/><stop offset="0.563" stop-color="#6e6a5f"/><stop offset="0.763" stop-color="#6a665c"/><stop offset="0.905" stop-color="#68645a"/><stop offset="0.984" stop-color="#666358"/><stop offset="1.000" stop-color="#656157"/></linearGradient><linearGradient id="g162" gradientUnits="userSpaceOnUse" x1="1175.9" y1="0" x2="1189.5" y2="0"><stop offset="0.000" stop-color="#79766a"/><stop offset="0.307" stop-color="#706d61"/><stop offset="0.563" stop-color="#6d695e"/><stop offset="0.763" stop-color="#69665b"/><stop offset="0.905" stop-color="#676459"/><stop offset="0.984" stop-color="#656258"/><stop offset="1.000" stop-color="#646157"/></linearGradient><linearGradient id="g163" gradientUnits="userSpaceOnUse" x1="1175.6" y1="0" x2="1189.0" y2="0"><stop offset="0.000" stop-color="#777368"/><stop offset="0.307" stop-color="#706d62"/><stop offset="0.563" stop-color="#6d695f"/><stop offset="0.763" stop-color="#69665b"/><stop offset="0.905" stop-color="#676459"/><stop offset="0.984" stop-color="#656258"/><stop offset="1.000" stop-color="#646157"/></linearGradient><linearGradient id="g164" gradientUnits="userSpaceOnUse" x1="1175.2" y1="0" x2="1188.5" y2="0"><stop offset="0.000" stop-color="#7f7e74"/><stop offset="0.307" stop-color="#7b7a71"/><stop offset="0.563" stop-color="#77766d"/><stop offset="0.763" stop-color="#73726a"/><stop offset="0.905" stop-color="#716f67"/><stop offset="0.984" stop-color="#6f6d66"/><stop offset="1.000" stop-color="#6d6c64"/></linearGradient><linearGradient id="g165" gradientUnits="userSpaceOnUse" x1="1174.8" y1="0" x2="1188.0" y2="0"><stop offset="0.000" stop-color="#8d8c87"/><stop offset="0.307" stop-color="#898984"/><stop offset="0.563" stop-color="#858580"/><stop offset="0.763" stop-color="#80807c"/><stop offset="0.905" stop-color="#7e7e79"/><stop offset="0.984" stop-color="#7b7b77"/><stop offset="1.000" stop-color="#7a7a76"/></linearGradient><linearGradient id="g166" gradientUnits="userSpaceOnUse" x1="1174.5" y1="0" x2="1187.5" y2="0"><stop offset="0.000" stop-color="#90908b"/><stop offset="0.307" stop-color="#8c8c88"/><stop offset="0.563" stop-color="#888883"/><stop offset="0.763" stop-color="#83837f"/><stop offset="0.905" stop-color="#81817c"/><stop offset="0.984" stop-color="#7e7e7a"/><stop offset="1.000" stop-color="#7d7d78"/></linearGradient><linearGradient id="g167" gradientUnits="userSpaceOnUse" x1="1174.2" y1="0" x2="1187.1" y2="0"><stop offset="0.000" stop-color="#94948f"/><stop offset="0.307" stop-color="#8f8f8b"/><stop offset="0.563" stop-color="#8b8b86"/><stop offset="0.763" stop-color="#868682"/><stop offset="0.905" stop-color="#83837f"/><stop offset="0.984" stop-color="#81817d"/><stop offset="1.000" stop-color="#7f7f7b"/></linearGradient><linearGradient id="g168" gradientUnits="userSpaceOnUse" x1="1173.9" y1="0" x2="1186.7" y2="0"><stop offset="0.000" stop-color="#94948f"/><stop offset="0.307" stop-color="#8e8e8a"/><stop offset="0.563" stop-color="#8a8a85"/><stop offset="0.763" stop-color="#858581"/><stop offset="0.905" stop-color="#82827e"/><stop offset="0.984" stop-color="#80807c"/><stop offset="1.000" stop-color="#7e7e7a"/></linearGradient><linearGradient id="g169" gradientUnits="userSpaceOnUse" x1="1173.7" y1="0" x2="1186.3" y2="0"><stop offset="0.000" stop-color="#8f8f8a"/><stop offset="0.307" stop-color="#898985"/><stop offset="0.563" stop-color="#858580"/><stop offset="0.763" stop-color="#81817c"/><stop offset="0.905" stop-color="#7e7e7a"/><stop offset="0.984" stop-color="#7c7c77"/><stop offset="1.000" stop-color="#7a7a76"/></linearGradient><linearGradient id="g170" gradientUnits="userSpaceOnUse" x1="1173.7" y1="0" x2="1186.3" y2="0"><stop offset="0.000" stop-color="#88867c"/><stop offset="0.307" stop-color="#84827a"/><stop offset="0.563" stop-color="#807f78"/><stop offset="0.763" stop-color="#7d7d77"/><stop offset="0.905" stop-color="#7a7a75"/><stop offset="0.984" stop-color="#797975"/><stop offset="1.000" stop-color="#7a7a76"/></linearGradient><linearGradient id="g171" gradientUnits="userSpaceOnUse" x1="1173.9" y1="0" x2="1186.7" y2="0"><stop offset="0.000" stop-color="#88867c"/><stop offset="0.307" stop-color="#85837b"/><stop offset="0.563" stop-color="#82817a"/><stop offset="0.763" stop-color="#807f7a"/><stop offset="0.905" stop-color="#7e7e79"/><stop offset="0.984" stop-color="#7e7e7a"/><stop offset="1.000" stop-color="#7e7e7a"/></linearGradient><linearGradient id="g172" gradientUnits="userSpaceOnUse" x1="1174.2" y1="0" x2="1187.1" y2="0"><stop offset="0.000" stop-color="#88867c"/><stop offset="0.307" stop-color="#85847b"/><stop offset="0.563" stop-color="#83827a"/><stop offset="0.763" stop-color="#81807a"/><stop offset="0.905" stop-color="#7f7f7a"/><stop offset="0.984" stop-color="#7f7f7a"/><stop offset="1.000" stop-color="#7f7f7b"/></linearGradient><linearGradient id="g173" gradientUnits="userSpaceOnUse" x1="1174.5" y1="0" x2="1187.5" y2="0"><stop offset="0.000" stop-color="#88867c"/><stop offset="0.307" stop-color="#84837b"/><stop offset="0.563" stop-color="#828079"/><stop offset="0.763" stop-color="#7f7e78"/><stop offset="0.905" stop-color="#7d7c78"/><stop offset="0.984" stop-color="#7c7c78"/><stop offset="1.000" stop-color="#7d7d78"/></linearGradient><linearGradient id="g174" gradientUnits="userSpaceOnUse" x1="1174.8" y1="0" x2="1188.0" y2="0"><stop offset="0.000" stop-color="#88867c"/><stop offset="0.307" stop-color="#84827a"/><stop offset="0.563" stop-color="#807f78"/><stop offset="0.763" stop-color="#7d7c76"/><stop offset="0.905" stop-color="#7a7a75"/><stop offset="0.984" stop-color="#797975"/><stop offset="1.000" stop-color="#7a7a76"/></linearGradient><linearGradient id="g175" gradientUnits="userSpaceOnUse" x1="1175.2" y1="0" x2="1188.5" y2="0"><stop offset="0.000" stop-color="#88867c"/><stop offset="0.307" stop-color="#817f76"/><stop offset="0.563" stop-color="#7b7970"/><stop offset="0.763" stop-color="#75736b"/><stop offset="0.905" stop-color="#6f6e66"/><stop offset="0.984" stop-color="#6d6b64"/><stop offset="1.000" stop-color="#6d6c64"/></linearGradient><linearGradient id="g176" gradientUnits="userSpaceOnUse" x1="1175.6" y1="0" x2="1189.0" y2="0"><stop offset="0.000" stop-color="#88867c"/><stop offset="0.307" stop-color="#7f7d73"/><stop offset="0.563" stop-color="#77746b"/><stop offset="0.763" stop-color="#6f6c62"/><stop offset="0.905" stop-color="#67645a"/><stop offset="0.984" stop-color="#636056"/><stop offset="1.000" stop-color="#646157"/></linearGradient><linearGradient id="g177" gradientUnits="userSpaceOnUse" x1="1175.9" y1="0" x2="1189.5" y2="0"><stop offset="0.000" stop-color="#88867c"/><stop offset="0.307" stop-color="#7f7d73"/><stop offset="0.563" stop-color="#77746a"/><stop offset="0.763" stop-color="#6f6c62"/><stop offset="0.905" stop-color="#67645a"/><stop offset="0.984" stop-color="#636056"/><stop offset="1.000" stop-color="#646157"/></linearGradient><linearGradient id="g178" gradientUnits="userSpaceOnUse" x1="1176.2" y1="0" x2="1190.0" y2="0"><stop offset="0.000" stop-color="#88867c"/><stop offset="0.307" stop-color="#7f7d73"/><stop offset="0.563" stop-color="#77746b"/><stop offset="0.763" stop-color="#6f6c62"/><stop offset="0.905" stop-color="#67645a"/><stop offset="0.984" stop-color="#646157"/><stop offset="1.000" stop-color="#656157"/></linearGradient><linearGradient id="g179" gradientUnits="userSpaceOnUse" x1="1176.6" y1="0" x2="1190.5" y2="0"><stop offset="0.000" stop-color="#88867c"/><stop offset="0.307" stop-color="#807e74"/><stop offset="0.563" stop-color="#79776d"/><stop offset="0.763" stop-color="#726f65"/><stop offset="0.905" stop-color="#6c685e"/><stop offset="0.984" stop-color="#69665b"/><stop offset="1.000" stop-color="#69665c"/></linearGradient><linearGradient id="g180" gradientUnits="userSpaceOnUse" x1="1177.0" y1="0" x2="1191.0" y2="0"><stop offset="0.000" stop-color="#88867c"/><stop offset="0.307" stop-color="#838177"/><stop offset="0.563" stop-color="#7f7c72"/><stop offset="0.763" stop-color="#7b786d"/><stop offset="0.905" stop-color="#777469"/><stop offset="0.984" stop-color="#767367"/><stop offset="1.000" stop-color="#767367"/></linearGradient><linearGradient id="g181" gradientUnits="userSpaceOnUse" x1="1177.7" y1="0" x2="1192.0" y2="0"><stop offset="0.000" stop-color="#88867c"/><stop offset="0.307" stop-color="#858278"/><stop offset="0.563" stop-color="#827f74"/><stop offset="0.763" stop-color="#7f7c71"/><stop offset="0.905" stop-color="#7d796d"/><stop offset="0.984" stop-color="#7d796c"/><stop offset="1.000" stop-color="#7d796d"/></linearGradient><linearGradient id="g182" gradientUnits="userSpaceOnUse" x1="1178.9" y1="0" x2="1193.7" y2="0"><stop offset="0.000" stop-color="#88867c"/><stop offset="0.307" stop-color="#848278"/><stop offset="0.563" stop-color="#817e73"/><stop offset="0.763" stop-color="#7e7b6f"/><stop offset="0.904" stop-color="#7c786c"/><stop offset="0.984" stop-color="#7b776a"/><stop offset="1.000" stop-color="#7b776b"/></linearGradient><linearGradient id="g183" gradientUnits="userSpaceOnUse" x1="1180.3" y1="0" x2="1195.7" y2="0"><stop offset="0.000" stop-color="#88867c"/><stop offset="0.307" stop-color="#838177"/><stop offset="0.563" stop-color="#7f7c71"/><stop offset="0.763" stop-color="#7b786c"/><stop offset="0.904" stop-color="#787468"/><stop offset="0.984" stop-color="#767266"/><stop offset="1.000" stop-color="#777366"/></linearGradient><linearGradient id="g184" gradientUnits="userSpaceOnUse" x1="1161.7" y1="0" x2="1175.9" y2="0"><stop offset="0.000" stop-color="#88867c"/><stop offset="1.000" stop-color="#88867c"/></linearGradient><linearGradient id="g185" gradientUnits="userSpaceOnUse" x1="1162.0" y1="0" x2="1176.2" y2="0"><stop offset="0.000" stop-color="#88867c"/><stop offset="1.000" stop-color="#88867c"/></linearGradient><linearGradient id="g186" gradientUnits="userSpaceOnUse" x1="1162.4" y1="0" x2="1176.6" y2="0"><stop offset="0.000" stop-color="#88867c"/><stop offset="1.000" stop-color="#88867c"/></linearGradient><linearGradient id="g187" gradientUnits="userSpaceOnUse" x1="1162.8" y1="0" x2="1177.0" y2="0"><stop offset="0.000" stop-color="#88867c"/><stop offset="1.000" stop-color="#88867c"/></linearGradient><linearGradient id="g188" gradientUnits="userSpaceOnUse" x1="1163.5" y1="0" x2="1177.7" y2="0"><stop offset="0.000" stop-color="#88867c"/><stop offset="1.000" stop-color="#88867c"/></linearGradient><linearGradient id="g189" gradientUnits="userSpaceOnUse" x1="1164.7" y1="0" x2="1178.9" y2="0"><stop offset="0.000" stop-color="#88867c"/><stop offset="1.000" stop-color="#88867c"/></linearGradient><linearGradient id="g190" gradientUnits="userSpaceOnUse" x1="1166.1" y1="0" x2="1180.3" y2="0"><stop offset="0.000" stop-color="#88867c"/><stop offset="1.000" stop-color="#88867c"/></linearGradient><linearGradient id="g191" gradientUnits="userSpaceOnUse" x1="1096.0" y1="0" x2="1161.7" y2="0"><stop offset="0.000" stop-color="#a0a39b"/><stop offset="0.035" stop-color="#9c9f97"/><stop offset="0.112" stop-color="#95978e"/><stop offset="0.196" stop-color="#8e8e85"/><stop offset="0.286" stop-color="#87867c"/><stop offset="0.380" stop-color="#7f7e73"/><stop offset="0.476" stop-color="#78756a"/><stop offset="0.572" stop-color="#79766a"/><stop offset="0.667" stop-color="#7c796e"/><stop offset="0.759" stop-color="#7f7c72"/><stop offset="0.847" stop-color="#827f75"/><stop offset="0.927" stop-color="#858379"/><stop offset="1.000" stop-color="#88867c"/></linearGradient><linearGradient id="g192" gradientUnits="userSpaceOnUse" x1="1095.7" y1="0" x2="1162.0" y2="0"><stop offset="0.000" stop-color="#a0a39b"/><stop offset="0.035" stop-color="#9c9f97"/><stop offset="0.112" stop-color="#95978e"/><stop offset="0.196" stop-color="#8e8e85"/><stop offset="0.286" stop-color="#87867c"/><stop offset="0.380" stop-color="#7f7e73"/><stop offset="0.476" stop-color="#78756a"/><stop offset="0.572" stop-color="#79766a"/><stop offset="0.667" stop-color="#7c796e"/><stop offset="0.759" stop-color="#7f7c72"/><stop offset="0.847" stop-color="#827f75"/><stop offset="0.927" stop-color="#858379"/><stop offset="1.000" stop-color="#88867c"/></linearGradient><linearGradient id="g193" gradientUnits="userSpaceOnUse" x1="1095.3" y1="0" x2="1162.4" y2="0"><stop offset="0.000" stop-color="#a0a39b"/><stop offset="0.035" stop-color="#9c9f97"/><stop offset="0.112" stop-color="#95978e"/><stop offset="0.196" stop-color="#8e8e85"/><stop offset="0.286" stop-color="#87867c"/><stop offset="0.380" stop-color="#7f7e73"/><stop offset="0.476" stop-color="#78756a"/><stop offset="0.572" stop-color="#79766a"/><stop offset="0.667" stop-color="#7c796e"/><stop offset="0.759" stop-color="#7f7c72"/><stop offset="0.847" stop-color="#827f75"/><stop offset="0.927" stop-color="#858379"/><stop offset="1.000" stop-color="#88867c"/></linearGradient><linearGradient id="g194" gradientUnits="userSpaceOnUse" x1="1094.9" y1="0" x2="1162.8" y2="0"><stop offset="0.000" stop-color="#a0a39b"/><stop offset="0.035" stop-color="#9c9f97"/><stop offset="0.112" stop-color="#95978e"/><stop offset="0.196" stop-color="#8e8e85"/><stop offset="0.286" stop-color="#87867c"/><stop offset="0.380" stop-color="#7f7e73"/><stop offset="0.476" stop-color="#78756a"/><stop offset="0.572" stop-color="#79766a"/><stop offset="0.667" stop-color="#7c796e"/><stop offset="0.759" stop-color="#7f7c72"/><stop offset="0.847" stop-color="#827f75"/><stop offset="0.927" stop-color="#858379"/><stop offset="1.000" stop-color="#88867c"/></linearGradient><linearGradient id="g195" gradientUnits="userSpaceOnUse" x1="1094.2" y1="0" x2="1163.5" y2="0"><stop offset="0.000" stop-color="#a0a39b"/><stop offset="0.035" stop-color="#9c9f97"/><stop offset="0.112" stop-color="#95978e"/><stop offset="0.196" stop-color="#8e8e85"/><stop offset="0.286" stop-color="#87867c"/><stop offset="0.380" stop-color="#7f7e73"/><stop offset="0.476" stop-color="#78756a"/><stop offset="0.572" stop-color="#79766a"/><stop offset="0.667" stop-color="#7c796e"/><stop offset="0.759" stop-color="#7f7c72"/><stop offset="0.847" stop-color="#827f75"/><stop offset="0.927" stop-color="#858379"/><stop offset="1.000" stop-color="#88867c"/></linearGradient><linearGradient id="g196" gradientUnits="userSpaceOnUse" x1="1093.0" y1="0" x2="1164.7" y2="0"><stop offset="0.000" stop-color="#a0a39b"/><stop offset="0.035" stop-color="#9c9f97"/><stop offset="0.112" stop-color="#95978e"/><stop offset="0.196" stop-color="#8e8e85"/><stop offset="0.286" stop-color="#87867c"/><stop offset="0.380" stop-color="#7f7e73"/><stop offset="0.476" stop-color="#78756a"/><stop offset="0.572" stop-color="#79766a"/><stop offset="0.667" stop-color="#7c796e"/><stop offset="0.759" stop-color="#7f7c72"/><stop offset="0.847" stop-color="#827f75"/><stop offset="0.927" stop-color="#858379"/><stop offset="1.000" stop-color="#88867c"/></linearGradient><linearGradient id="g197" gradientUnits="userSpaceOnUse" x1="1091.6" y1="0" x2="1166.1" y2="0"><stop offset="0.000" stop-color="#a0a39b"/><stop offset="0.035" stop-color="#9c9f97"/><stop offset="0.112" stop-color="#95978e"/><stop offset="0.196" stop-color="#8e8e85"/><stop offset="0.286" stop-color="#87867c"/><stop offset="0.380" stop-color="#7f7e73"/><stop offset="0.476" stop-color="#78756a"/><stop offset="0.572" stop-color="#79766a"/><stop offset="0.667" stop-color="#7c796e"/><stop offset="0.759" stop-color="#7f7c72"/><stop offset="0.847" stop-color="#827f75"/><stop offset="0.927" stop-color="#858379"/><stop offset="1.000" stop-color="#88867c"/></linearGradient><linearGradient id="g198" gradientUnits="userSpaceOnUse" x1="1020.8" y1="0" x2="1096.0" y2="0"><stop offset="0.000" stop-color="#a0a39b"/><stop offset="0.333" stop-color="#a0a39b"/><stop offset="1.000" stop-color="#a0a39b"/></linearGradient><linearGradient id="g199" gradientUnits="userSpaceOnUse" x1="1020.4" y1="0" x2="1095.7" y2="0"><stop offset="0.000" stop-color="#a0a39b"/><stop offset="0.333" stop-color="#a0a39b"/><stop offset="1.000" stop-color="#a0a39b"/></linearGradient><linearGradient id="g200" gradientUnits="userSpaceOnUse" x1="1020.1" y1="0" x2="1095.3" y2="0"><stop offset="0.000" stop-color="#a0a39b"/><stop offset="0.333" stop-color="#a0a39b"/><stop offset="1.000" stop-color="#a0a39b"/></linearGradient><linearGradient id="g201" gradientUnits="userSpaceOnUse" x1="1019.7" y1="0" x2="1094.9" y2="0"><stop offset="0.000" stop-color="#a0a39b"/><stop offset="0.333" stop-color="#a0a39b"/><stop offset="1.000" stop-color="#a0a39b"/></linearGradient><linearGradient id="g202" gradientUnits="userSpaceOnUse" x1="1019.0" y1="0" x2="1094.2" y2="0"><stop offset="0.000" stop-color="#a0a39b"/><stop offset="0.333" stop-color="#a0a39b"/><stop offset="1.000" stop-color="#a0a39b"/></linearGradient><linearGradient id="g203" gradientUnits="userSpaceOnUse" x1="1017.8" y1="0" x2="1093.0" y2="0"><stop offset="0.000" stop-color="#a0a39b"/><stop offset="0.333" stop-color="#a0a39b"/><stop offset="1.000" stop-color="#a0a39b"/></linearGradient><linearGradient id="g204" gradientUnits="userSpaceOnUse" x1="1016.4" y1="0" x2="1091.6" y2="0"><stop offset="0.000" stop-color="#a0a39b"/><stop offset="0.333" stop-color="#a0a39b"/><stop offset="1.000" stop-color="#a0a39b"/></linearGradient><linearGradient id="g205" gradientUnits="userSpaceOnUse" x1="1010.4" y1="0" x2="1023.0" y2="0"><stop offset="0.000" stop-color="#6b685d"/><stop offset="0.016" stop-color="#69655b"/><stop offset="0.095" stop-color="#6c6960"/><stop offset="0.237" stop-color="#77766d"/><stop offset="0.437" stop-color="#83847b"/><stop offset="0.693" stop-color="#91938b"/><stop offset="1.000" stop-color="#a0a39b"/></linearGradient><linearGradient id="g206" gradientUnits="userSpaceOnUse" x1="1010.0" y1="0" x2="1022.8" y2="0"><stop offset="0.000" stop-color="#777468"/><stop offset="0.016" stop-color="#757166"/><stop offset="0.095" stop-color="#767469"/><stop offset="0.237" stop-color="#7f7d73"/><stop offset="0.437" stop-color="#88887f"/><stop offset="0.693" stop-color="#94958d"/><stop offset="1.000" stop-color="#a0a39b"/></linearGradient><linearGradient id="g207" gradientUnits="userSpaceOnUse" x1="1009.6" y1="0" x2="1022.5" y2="0"><stop offset="0.000" stop-color="#837f73"/><stop offset="0.016" stop-color="#817d70"/><stop offset="0.095" stop-color="#817d72"/><stop offset="0.237" stop-color="#86847a"/><stop offset="0.437" stop-color="#8d8d84"/><stop offset="0.693" stop-color="#96988f"/><stop offset="1.000" stop-color="#a0a39b"/></linearGradient><linearGradient id="g208" gradientUnits="userSpaceOnUse" x1="1009.2" y1="0" x2="1022.2" y2="0"><stop offset="0.000" stop-color="#8a8578"/><stop offset="0.016" stop-color="#878376"/><stop offset="0.095" stop-color="#868377"/><stop offset="0.237" stop-color="#8a887e"/><stop offset="0.437" stop-color="#909086"/><stop offset="0.693" stop-color="#989990"/><stop offset="1.000" stop-color="#a0a39b"/></linearGradient><linearGradient id="g209" gradientUnits="userSpaceOnUse" x1="1008.7" y1="0" x2="1021.8" y2="0"><stop offset="0.000" stop-color="#8e8a7c"/><stop offset="0.016" stop-color="#8b877a"/><stop offset="0.095" stop-color="#8a867a"/><stop offset="0.237" stop-color="#8d8b80"/><stop offset="0.437" stop-color="#919188"/><stop offset="0.693" stop-color="#989a91"/><stop offset="1.000" stop-color="#a0a39b"/></linearGradient><linearGradient id="g210" gradientUnits="userSpaceOnUse" x1="1008.1" y1="0" x2="1021.4" y2="0"><stop offset="0.000" stop-color="#938e80"/><stop offset="0.016" stop-color="#8f8b7e"/><stop offset="0.095" stop-color="#8e8a7d"/><stop offset="0.237" stop-color="#8f8e82"/><stop offset="0.437" stop-color="#939389"/><stop offset="0.693" stop-color="#999b92"/><stop offset="1.000" stop-color="#a0a39b"/></linearGradient><linearGradient id="g211" gradientUnits="userSpaceOnUse" x1="1007.6" y1="0" x2="1021.1" y2="0"><stop offset="0.000" stop-color="#928d7f"/><stop offset="0.016" stop-color="#8e8a7d"/><stop offset="0.095" stop-color="#8d897d"/><stop offset="0.237" stop-color="#8f8d82"/><stop offset="0.437" stop-color="#939389"/><stop offset="0.693" stop-color="#999b92"/><stop offset="1.000" stop-color="#a0a39b"/></linearGradient><linearGradient id="g212" gradientUnits="userSpaceOnUse" x1="1007.2" y1="0" x2="1020.8" y2="0"><stop offset="0.000" stop-color="#8f8a7d"/><stop offset="0.016" stop-color="#8c877a"/><stop offset="0.095" stop-color="#8a877a"/><stop offset="0.237" stop-color="#8d8b80"/><stop offset="0.437" stop-color="#929188"/><stop offset="0.693" stop-color="#999a91"/><stop offset="1.000" stop-color="#a0a39b"/></linearGradient><linearGradient id="g213" gradientUnits="userSpaceOnUse" x1="1006.7" y1="0" x2="1020.4" y2="0"><stop offset="0.000" stop-color="#8c877a"/><stop offset="0.016" stop-color="#898577"/><stop offset="0.095" stop-color="#888478"/><stop offset="0.237" stop-color="#8b8a7f"/><stop offset="0.437" stop-color="#909087"/><stop offset="0.693" stop-color="#989991"/><stop offset="1.000" stop-color="#a0a39b"/></linearGradient><linearGradient id="g214" gradientUnits="userSpaceOnUse" x1="1006.2" y1="0" x2="1020.1" y2="0"><stop offset="0.000" stop-color="#898577"/><stop offset="0.016" stop-color="#868275"/><stop offset="0.095" stop-color="#858276"/><stop offset="0.237" stop-color="#89887d"/><stop offset="0.437" stop-color="#8f8f86"/><stop offset="0.693" stop-color="#979990"/><stop offset="1.000" stop-color="#a0a39b"/></linearGradient><linearGradient id="g215" gradientUnits="userSpaceOnUse" x1="1005.7" y1="0" x2="1019.7" y2="0"><stop offset="0.000" stop-color="#868274"/><stop offset="0.016" stop-color="#837f72"/><stop offset="0.095" stop-color="#837f73"/><stop offset="0.237" stop-color="#88867b"/><stop offset="0.437" stop-color="#8e8e84"/><stop offset="0.693" stop-color="#979890"/><stop offset="1.000" stop-color="#a0a39b"/></linearGradient><linearGradient id="g216" gradientUnits="userSpaceOnUse" x1="1004.6" y1="0" x2="1019.0" y2="0"><stop offset="0.000" stop-color="#827e71"/><stop offset="0.016" stop-color="#807b6f"/><stop offset="0.095" stop-color="#807c71"/><stop offset="0.237" stop-color="#858479"/><stop offset="0.437" stop-color="#8d8d83"/><stop offset="0.693" stop-color="#96988f"/><stop offset="1.000" stop-color="#a0a39b"/></linearGradient><linearGradient id="g217" gradientUnits="userSpaceOnUse" x1="1002.9" y1="0" x2="1017.8" y2="0"><stop offset="0.000" stop-color="#807b6f"/><stop offset="0.016" stop-color="#7d796d"/><stop offset="0.096" stop-color="#7d7a6f"/><stop offset="0.237" stop-color="#848278"/><stop offset="0.437" stop-color="#8c8b82"/><stop offset="0.693" stop-color="#96978f"/><stop offset="1.000" stop-color="#a0a39b"/></linearGradient><linearGradient id="g218" gradientUnits="userSpaceOnUse" x1="1001.0" y1="0" x2="1016.4" y2="0"><stop offset="0.000" stop-color="#7c786d"/><stop offset="0.016" stop-color="#7a756a"/><stop offset="0.096" stop-color="#7b776d"/><stop offset="0.237" stop-color="#828076"/><stop offset="0.437" stop-color="#8a8a81"/><stop offset="0.693" stop-color="#95968e"/><stop offset="1.000" stop-color="#a0a39b"/></linearGradient><linearGradient id="g219" gradientUnits="userSpaceOnUse" x1="1010.4" y1="0" x2="1023.0" y2="0"><stop offset="0.000" stop-color="#625f57"/><stop offset="0.016" stop-color="#605e56"/><stop offset="0.095" stop-color="#5f5c55"/><stop offset="0.237" stop-color="#5d5b53"/><stop offset="0.437" stop-color="#5b5851"/><stop offset="0.693" stop-color="#59564f"/><stop offset="1.000" stop-color="#56544c"/></linearGradient><linearGradient id="g220" gradientUnits="userSpaceOnUse" x1="1001.0" y1="0" x2="1016.4" y2="0"><stop offset="0.000" stop-color="#7c786d"/><stop offset="0.016" stop-color="#7b776c"/><stop offset="0.096" stop-color="#79756a"/><stop offset="0.237" stop-color="#777368"/><stop offset="0.437" stop-color="#757166"/><stop offset="0.693" stop-color="#726e64"/><stop offset="1.000" stop-color="#706c62"/></linearGradient><linearGradient id="g221" gradientUnits="userSpaceOnUse" x1="1002.9" y1="0" x2="1017.8" y2="0"><stop offset="0.000" stop-color="#807b6f"/><stop offset="0.016" stop-color="#7e7a6e"/><stop offset="0.096" stop-color="#7c786c"/><stop offset="0.237" stop-color="#7a766b"/><stop offset="0.437" stop-color="#787468"/><stop offset="0.693" stop-color="#757166"/><stop offset="1.000" stop-color="#736f64"/></linearGradient><linearGradient id="g222" gradientUnits="userSpaceOnUse" x1="1004.6" y1="0" x2="1019.0" y2="0"><stop offset="0.000" stop-color="#827e71"/><stop offset="0.016" stop-color="#817d70"/><stop offset="0.095" stop-color="#7f7b6f"/><stop offset="0.237" stop-color="#7d796d"/><stop offset="0.437" stop-color="#7a766a"/><stop offset="0.693" stop-color="#777368"/><stop offset="1.000" stop-color="#767266"/></linearGradient><linearGradient id="g223" gradientUnits="userSpaceOnUse" x1="1005.7" y1="0" x2="1019.7" y2="0"><stop offset="0.000" stop-color="#868274"/><stop offset="0.016" stop-color="#848073"/><stop offset="0.095" stop-color="#837e72"/><stop offset="0.237" stop-color="#817c70"/><stop offset="0.437" stop-color="#7e796d"/><stop offset="0.693" stop-color="#7b776a"/><stop offset="1.000" stop-color="#797569"/></linearGradient><linearGradient id="g224" gradientUnits="userSpaceOnUse" x1="1006.2" y1="0" x2="1020.1" y2="0"><stop offset="0.000" stop-color="#898577"/><stop offset="0.016" stop-color="#888376"/><stop offset="0.095" stop-color="#868174"/><stop offset="0.237" stop-color="#837f72"/><stop offset="0.437" stop-color="#807c70"/><stop offset="0.693" stop-color="#7d796d"/><stop offset="1.000" stop-color="#7c796d"/></linearGradient><linearGradient id="g225" gradientUnits="userSpaceOnUse" x1="1006.7" y1="0" x2="1020.4" y2="0"><stop offset="0.000" stop-color="#8c877a"/><stop offset="0.016" stop-color="#8a8679"/><stop offset="0.095" stop-color="#888477"/><stop offset="0.237" stop-color="#868275"/><stop offset="0.437" stop-color="#837f72"/><stop offset="0.693" stop-color="#807c70"/><stop offset="1.000" stop-color="#7f7c70"/></linearGradient><linearGradient id="g226" gradientUnits="userSpaceOnUse" x1="1007.2" y1="0" x2="1020.8" y2="0"><stop offset="0.000" stop-color="#8f8a7d"/><stop offset="0.016" stop-color="#8d897b"/><stop offset="0.095" stop-color="#8b8779"/><stop offset="0.237" stop-color="#898578"/><stop offset="0.437" stop-color="#868275"/><stop offset="0.693" stop-color="#837f72"/><stop offset="1.000" stop-color="#827e72"/></linearGradient><linearGradient id="g227" gradientUnits="userSpaceOnUse" x1="1007.6" y1="0" x2="1021.1" y2="0"><stop offset="0.000" stop-color="#928d7f"/><stop offset="0.016" stop-color="#908c7e"/><stop offset="0.095" stop-color="#8e8a7c"/><stop offset="0.237" stop-color="#8c887a"/><stop offset="0.437" stop-color="#888477"/><stop offset="0.693" stop-color="#858174"/><stop offset="1.000" stop-color="#837f73"/></linearGradient><linearGradient id="g228" gradientUnits="userSpaceOnUse" x1="1008.1" y1="0" x2="1021.4" y2="0"><stop offset="0.000" stop-color="#938e80"/><stop offset="0.016" stop-color="#918d7f"/><stop offset="0.095" stop-color="#8f8b7d"/><stop offset="0.237" stop-color="#8d897b"/><stop offset="0.437" stop-color="#898578"/><stop offset="0.693" stop-color="#868275"/><stop offset="1.000" stop-color="#837f72"/></linearGradient><linearGradient id="g229" gradientUnits="userSpaceOnUse" x1="1008.7" y1="0" x2="1021.8" y2="0"><stop offset="0.000" stop-color="#8e8a7c"/><stop offset="0.016" stop-color="#8d887b"/><stop offset="0.095" stop-color="#8b8679"/><stop offset="0.237" stop-color="#888477"/><stop offset="0.437" stop-color="#858174"/><stop offset="0.693" stop-color="#827e72"/><stop offset="1.000" stop-color="#7f7b6f"/></linearGradient><linearGradient id="g230" gradientUnits="userSpaceOnUse" x1="1009.2" y1="0" x2="1022.2" y2="0"><stop offset="0.000" stop-color="#8a8578"/><stop offset="0.016" stop-color="#888477"/><stop offset="0.095" stop-color="#868275"/><stop offset="0.237" stop-color="#848073"/><stop offset="0.437" stop-color="#817d71"/><stop offset="0.693" stop-color="#7e7a6e"/><stop offset="1.000" stop-color="#7b776b"/></linearGradient><linearGradient id="g231" gradientUnits="userSpaceOnUse" x1="1009.6" y1="0" x2="1022.5" y2="0"><stop offset="0.000" stop-color="#837f73"/><stop offset="0.016" stop-color="#827e71"/><stop offset="0.095" stop-color="#807c70"/><stop offset="0.237" stop-color="#7e7a6e"/><stop offset="0.437" stop-color="#7b776b"/><stop offset="0.693" stop-color="#787469"/><stop offset="1.000" stop-color="#767367"/></linearGradient><linearGradient id="g232" gradientUnits="userSpaceOnUse" x1="1010.0" y1="0" x2="1022.8" y2="0"><stop offset="0.000" stop-color="#777468"/><stop offset="0.016" stop-color="#767267"/><stop offset="0.095" stop-color="#747165"/><stop offset="0.237" stop-color="#736f64"/><stop offset="0.437" stop-color="#706c61"/><stop offset="0.693" stop-color="#6d6a5f"/><stop offset="1.000" stop-color="#6c695f"/></linearGradient><linearGradient id="g233" gradientUnits="userSpaceOnUse" x1="1010.4" y1="0" x2="1023.0" y2="0"><stop offset="0.000" stop-color="#6b685d"/><stop offset="0.016" stop-color="#6a665c"/><stop offset="0.095" stop-color="#68655b"/><stop offset="0.237" stop-color="#676359"/><stop offset="0.437" stop-color="#646157"/><stop offset="0.693" stop-color="#625f55"/><stop offset="1.000" stop-color="#615e55"/></linearGradient><linearGradient id="g234" gradientUnits="userSpaceOnUse" x1="1023.0" y1="0" x2="1037.2" y2="0"><stop offset="0.000" stop-color="#56544c"/><stop offset="1.000" stop-color="#56544c"/></linearGradient><linearGradient id="g235" gradientUnits="userSpaceOnUse" x1="1016.4" y1="0" x2="1030.6" y2="0"><stop offset="0.000" stop-color="#706c62"/><stop offset="1.000" stop-color="#706c62"/></linearGradient><linearGradient id="g236" gradientUnits="userSpaceOnUse" x1="1017.8" y1="0" x2="1032.0" y2="0"><stop offset="0.000" stop-color="#736f64"/><stop offset="1.000" stop-color="#736f64"/></linearGradient><linearGradient id="g237" gradientUnits="userSpaceOnUse" x1="1019.0" y1="0" x2="1033.2" y2="0"><stop offset="0.000" stop-color="#767266"/><stop offset="1.000" stop-color="#767266"/></linearGradient><linearGradient id="g238" gradientUnits="userSpaceOnUse" x1="1019.7" y1="0" x2="1033.9" y2="0"><stop offset="0.000" stop-color="#797569"/><stop offset="1.000" stop-color="#797569"/></linearGradient><linearGradient id="g239" gradientUnits="userSpaceOnUse" x1="1020.1" y1="0" x2="1034.3" y2="0"><stop offset="0.000" stop-color="#7c796d"/><stop offset="1.000" stop-color="#7c796d"/></linearGradient><linearGradient id="g240" gradientUnits="userSpaceOnUse" x1="1020.4" y1="0" x2="1034.6" y2="0"><stop offset="0.000" stop-color="#7f7c70"/><stop offset="1.000" stop-color="#7f7c70"/></linearGradient><linearGradient id="g241" gradientUnits="userSpaceOnUse" x1="1020.8" y1="0" x2="1035.0" y2="0"><stop offset="0.000" stop-color="#827e72"/><stop offset="1.000" stop-color="#827e72"/></linearGradient><linearGradient id="g242" gradientUnits="userSpaceOnUse" x1="1021.1" y1="0" x2="1035.3" y2="0"><stop offset="0.000" stop-color="#837f73"/><stop offset="1.000" stop-color="#837f73"/></linearGradient><linearGradient id="g243" gradientUnits="userSpaceOnUse" x1="1021.4" y1="0" x2="1035.6" y2="0"><stop offset="0.000" stop-color="#837f72"/><stop offset="1.000" stop-color="#837f72"/></linearGradient><linearGradient id="g244" gradientUnits="userSpaceOnUse" x1="1021.8" y1="0" x2="1036.1" y2="0"><stop offset="0.000" stop-color="#7f7b6f"/><stop offset="1.000" stop-color="#7f7b6f"/></linearGradient><linearGradient id="g245" gradientUnits="userSpaceOnUse" x1="1022.2" y1="0" x2="1036.4" y2="0"><stop offset="0.000" stop-color="#7b776b"/><stop offset="1.000" stop-color="#7b776b"/></linearGradient><linearGradient id="g246" gradientUnits="userSpaceOnUse" x1="1022.5" y1="0" x2="1036.7" y2="0"><stop offset="0.000" stop-color="#767367"/><stop offset="1.000" stop-color="#767367"/></linearGradient><linearGradient id="g247" gradientUnits="userSpaceOnUse" x1="1022.8" y1="0" x2="1037.0" y2="0"><stop offset="0.000" stop-color="#6c695f"/><stop offset="1.000" stop-color="#6c695f"/></linearGradient><linearGradient id="g248" gradientUnits="userSpaceOnUse" x1="1023.0" y1="0" x2="1037.2" y2="0"><stop offset="0.000" stop-color="#615e55"/><stop offset="1.000" stop-color="#615e55"/></linearGradient><linearGradient id="g249" gradientUnits="userSpaceOnUse" x1="1037.2" y1="0" x2="1098.4" y2="0"><stop offset="0.000" stop-color="#56544c"/><stop offset="0.073" stop-color="#535049"/><stop offset="0.153" stop-color="#4f4d45"/><stop offset="0.241" stop-color="#4e4b44"/><stop offset="0.333" stop-color="#504d46"/><stop offset="0.428" stop-color="#54514a"/><stop offset="0.524" stop-color="#595750"/><stop offset="0.620" stop-color="#605f59"/><stop offset="0.714" stop-color="#676761"/><stop offset="0.804" stop-color="#6c6c66"/><stop offset="0.888" stop-color="#6f6f69"/><stop offset="0.965" stop-color="#676761"/><stop offset="1.000" stop-color="#63635e"/></linearGradient><linearGradient id="g250" gradientUnits="userSpaceOnUse" x1="1030.6" y1="0" x2="1105.0" y2="0"><stop offset="0.000" stop-color="#706c62"/><stop offset="0.073" stop-color="#747065"/><stop offset="0.153" stop-color="#797569"/><stop offset="0.241" stop-color="#817d6f"/><stop offset="0.333" stop-color="#898576"/><stop offset="0.428" stop-color="#928d7d"/><stop offset="0.524" stop-color="#948f7f"/><stop offset="0.620" stop-color="#948f7e"/><stop offset="0.714" stop-color="#928d7d"/><stop offset="0.804" stop-color="#908b7b"/><stop offset="0.888" stop-color="#8d8879"/><stop offset="0.965" stop-color="#8b8778"/><stop offset="1.000" stop-color="#8b8677"/></linearGradient><linearGradient id="g251" gradientUnits="userSpaceOnUse" x1="1032.0" y1="0" x2="1103.7" y2="0"><stop offset="0.000" stop-color="#736f64"/><stop offset="0.073" stop-color="#777367"/><stop offset="0.153" stop-color="#7d786c"/><stop offset="0.241" stop-color="#858073"/><stop offset="0.333" stop-color="#8e897a"/><stop offset="0.428" stop-color="#979282"/><stop offset="0.524" stop-color="#9a9483"/><stop offset="0.620" stop-color="#999383"/><stop offset="0.714" stop-color="#979282"/><stop offset="0.804" stop-color="#959080"/><stop offset="0.888" stop-color="#938e7e"/><stop offset="0.965" stop-color="#918c7d"/><stop offset="1.000" stop-color="#908b7c"/></linearGradient><linearGradient id="g252" gradientUnits="userSpaceOnUse" x1="1033.2" y1="0" x2="1102.5" y2="0"><stop offset="0.000" stop-color="#767266"/><stop offset="0.073" stop-color="#7a766a"/><stop offset="0.153" stop-color="#807c6f"/><stop offset="0.241" stop-color="#898476"/><stop offset="0.333" stop-color="#928d7e"/><stop offset="0.428" stop-color="#9c9686"/><stop offset="0.524" stop-color="#9e9988"/><stop offset="0.620" stop-color="#9e9888"/><stop offset="0.714" stop-color="#9b9686"/><stop offset="0.804" stop-color="#999384"/><stop offset="0.888" stop-color="#969182"/><stop offset="0.965" stop-color="#938e80"/><stop offset="1.000" stop-color="#928e7f"/></linearGradient><linearGradient id="g253" gradientUnits="userSpaceOnUse" x1="1033.9" y1="0" x2="1101.7" y2="0"><stop offset="0.000" stop-color="#797569"/><stop offset="0.073" stop-color="#7e7a6e"/><stop offset="0.153" stop-color="#868175"/><stop offset="0.241" stop-color="#908c7f"/><stop offset="0.333" stop-color="#9c978a"/><stop offset="0.428" stop-color="#a8a395"/><stop offset="0.524" stop-color="#aaa697"/><stop offset="0.620" stop-color="#a9a496"/><stop offset="0.714" stop-color="#a39e90"/><stop offset="0.804" stop-color="#9c9789"/><stop offset="0.888" stop-color="#949082"/><stop offset="0.965" stop-color="#8d897c"/><stop offset="1.000" stop-color="#8b877a"/></linearGradient><linearGradient id="g254" gradientUnits="userSpaceOnUse" x1="1034.3" y1="0" x2="1101.3" y2="0"><stop offset="0.000" stop-color="#7c796d"/><stop offset="0.073" stop-color="#858276"/><stop offset="0.153" stop-color="#928e84"/><stop offset="0.241" stop-color="#a4a197"/><stop offset="0.333" stop-color="#b7b4ab"/><stop offset="0.428" stop-color="#cbc9c1"/><stop offset="0.524" stop-color="#d0cdc6"/><stop offset="0.620" stop-color="#cccac2"/><stop offset="0.714" stop-color="#bdbab2"/><stop offset="0.804" stop-color="#a9a69c"/><stop offset="0.888" stop-color="#959287"/><stop offset="0.965" stop-color="#838074"/><stop offset="1.000" stop-color="#7f7b6f"/></linearGradient><linearGradient id="g255" gradientUnits="userSpaceOnUse" x1="1034.6" y1="0" x2="1101.0" y2="0"><stop offset="0.000" stop-color="#7f7c70"/><stop offset="0.073" stop-color="#8b877c"/><stop offset="0.153" stop-color="#9a978d"/><stop offset="0.241" stop-color="#b0aea5"/><stop offset="0.333" stop-color="#c8c6bf"/><stop offset="0.428" stop-color="#e1e0db"/><stop offset="0.524" stop-color="#e7e6e1"/><stop offset="0.620" stop-color="#e3e1dc"/><stop offset="0.714" stop-color="#ceccc5"/><stop offset="0.804" stop-color="#b3b1a9"/><stop offset="0.888" stop-color="#99968c"/><stop offset="0.965" stop-color="#817d72"/><stop offset="1.000" stop-color="#7b776c"/></linearGradient><linearGradient id="g256" gradientUnits="userSpaceOnUse" x1="1035.0" y1="0" x2="1100.7" y2="0"><stop offset="0.000" stop-color="#827e72"/><stop offset="0.073" stop-color="#8c887d"/><stop offset="0.153" stop-color="#99968c"/><stop offset="0.241" stop-color="#adaba1"/><stop offset="0.333" stop-color="#c3c0b9"/><stop offset="0.428" stop-color="#d9d7d1"/><stop offset="0.524" stop-color="#dedcd7"/><stop offset="0.620" stop-color="#dad8d2"/><stop offset="0.714" stop-color="#c6c4bd"/><stop offset="0.804" stop-color="#aeaba3"/><stop offset="0.888" stop-color="#959288"/><stop offset="0.965" stop-color="#7f7c71"/><stop offset="1.000" stop-color="#79766a"/></linearGradient><linearGradient id="g257" gradientUnits="userSpaceOnUse" x1="1035.3" y1="0" x2="1100.3" y2="0"><stop offset="0.000" stop-color="#837f73"/><stop offset="0.073" stop-color="#888478"/><stop offset="0.153" stop-color="#8f8b7f"/><stop offset="0.241" stop-color="#989589"/><stop offset="0.333" stop-color="#a29f93"/><stop offset="0.428" stop-color="#adaa9e"/><stop offset="0.524" stop-color="#b0ada1"/><stop offset="0.620" stop-color="#adaa9f"/><stop offset="0.714" stop-color="#a29f94"/><stop offset="0.804" stop-color="#959186"/><stop offset="0.888" stop-color="#878378"/><stop offset="0.965" stop-color="#7a776b"/><stop offset="1.000" stop-color="#777368"/></linearGradient><linearGradient id="g258" gradientUnits="userSpaceOnUse" x1="1035.6" y1="0" x2="1100.0" y2="0"><stop offset="0.000" stop-color="#837f72"/><stop offset="0.073" stop-color="#837f73"/><stop offset="0.153" stop-color="#837f73"/><stop offset="0.241" stop-color="#848073"/><stop offset="0.333" stop-color="#848073"/><stop offset="0.428" stop-color="#858173"/><stop offset="0.524" stop-color="#858173"/><stop offset="0.620" stop-color="#848173"/><stop offset="0.714" stop-color="#838074"/><stop offset="0.804" stop-color="#827f74"/><stop offset="0.888" stop-color="#817f74"/><stop offset="0.965" stop-color="#7f7e74"/><stop offset="1.000" stop-color="#7f7e74"/></linearGradient><linearGradient id="g259" gradientUnits="userSpaceOnUse" x1="1036.1" y1="0" x2="1099.6" y2="0"><stop offset="0.000" stop-color="#7f7b6f"/><stop offset="0.073" stop-color="#7e7a6e"/><stop offset="0.153" stop-color="#7d796d"/><stop offset="0.241" stop-color="#7c786b"/><stop offset="0.333" stop-color="#7b776a"/><stop offset="0.428" stop-color="#7a7668"/><stop offset="0.524" stop-color="#797568"/><stop offset="0.620" stop-color="#7a7669"/><stop offset="0.714" stop-color="#7e7b6f"/><stop offset="0.804" stop-color="#828077"/><stop offset="0.888" stop-color="#87867e"/><stop offset="0.965" stop-color="#8b8b85"/><stop offset="1.000" stop-color="#8d8c87"/></linearGradient><linearGradient id="g260" gradientUnits="userSpaceOnUse" x1="1036.4" y1="0" x2="1099.2" y2="0"><stop offset="0.000" stop-color="#7b776b"/><stop offset="0.073" stop-color="#7b786c"/><stop offset="0.153" stop-color="#7c786c"/><stop offset="0.241" stop-color="#7c796d"/><stop offset="0.333" stop-color="#7d7a6d"/><stop offset="0.428" stop-color="#7e7b6e"/><stop offset="0.524" stop-color="#7e7b6e"/><stop offset="0.620" stop-color="#7e7c6f"/><stop offset="0.714" stop-color="#828075"/><stop offset="0.804" stop-color="#86857c"/><stop offset="0.888" stop-color="#8b8a83"/><stop offset="0.965" stop-color="#8f8f89"/><stop offset="1.000" stop-color="#90908b"/></linearGradient><linearGradient id="g261" gradientUnits="userSpaceOnUse" x1="1036.7" y1="0" x2="1098.9" y2="0"><stop offset="0.000" stop-color="#767367"/><stop offset="0.073" stop-color="#7a776c"/><stop offset="0.153" stop-color="#807d73"/><stop offset="0.241" stop-color="#87857c"/><stop offset="0.333" stop-color="#908e86"/><stop offset="0.428" stop-color="#989890"/><stop offset="0.524" stop-color="#9a9a93"/><stop offset="0.620" stop-color="#9a9a92"/><stop offset="0.714" stop-color="#999992"/><stop offset="0.804" stop-color="#979791"/><stop offset="0.888" stop-color="#969690"/><stop offset="0.965" stop-color="#95958f"/><stop offset="1.000" stop-color="#94948f"/></linearGradient><linearGradient id="g262" gradientUnits="userSpaceOnUse" x1="1037.0" y1="0" x2="1098.6" y2="0"><stop offset="0.000" stop-color="#6c695f"/><stop offset="0.073" stop-color="#737066"/><stop offset="0.153" stop-color="#7c7970"/><stop offset="0.241" stop-color="#89877e"/><stop offset="0.333" stop-color="#97968e"/><stop offset="0.428" stop-color="#a6a69e"/><stop offset="0.524" stop-color="#a9a9a2"/><stop offset="0.620" stop-color="#a8a8a1"/><stop offset="0.714" stop-color="#a4a49e"/><stop offset="0.804" stop-color="#9f9f99"/><stop offset="0.888" stop-color="#9a9a94"/><stop offset="0.965" stop-color="#959590"/><stop offset="1.000" stop-color="#94948f"/></linearGradient><linearGradient id="g263" gradientUnits="userSpaceOnUse" x1="1037.2" y1="0" x2="1098.4" y2="0"><stop offset="0.000" stop-color="#615e55"/><stop offset="0.073" stop-color="#68665d"/><stop offset="0.153" stop-color="#727067"/><stop offset="0.241" stop-color="#807f77"/><stop offset="0.333" stop-color="#908f87"/><stop offset="0.428" stop-color="#9f9f98"/><stop offset="0.524" stop-color="#a3a39c"/><stop offset="0.620" stop-color="#a2a29c"/><stop offset="0.714" stop-color="#9e9e98"/><stop offset="0.804" stop-color="#9a9a94"/><stop offset="0.888" stop-color="#95958f"/><stop offset="0.965" stop-color="#90908b"/><stop offset="1.000" stop-color="#8f8f8a"/></linearGradient></defs><g fill="#4d4b43" stroke="#4d4b43" stroke-width="0.6"><path d="M695.7,290.2 L695.7,288.6 L695.7,291.8 L695.7,293.4Z"/><path d="M268.9,288.6 L268.8,290.2 L269.2,295.6 L269.9,300.9 L271.0,306.2 L272.6,311.5 L274.5,316.7 L276.8,321.9 L279.5,327.0 L282.6,332.1 L286.0,337.0 L289.9,341.9 L294.1,346.7 L298.6,351.3 L303.5,355.9 L308.7,360.3 L314.3,364.6 L320.2,368.7 L326.3,372.7 L332.8,376.5 L339.6,380.2 L346.6,383.7 L353.9,387.0 L361.4,390.1 L369.1,393.1 L377.1,395.8 L385.3,398.3 L393.6,400.7 L402.1,402.8 L410.8,404.7 L419.6,406.4 L428.5,407.8 L437.5,409.1 L446.6,410.1 L455.8,410.8 L465.0,411.4 L474.2,411.7 L483.5,411.8 L483.5,415.0 L474.2,414.9 L465.0,414.6 L455.8,414.0 L446.6,413.3 L437.5,412.3 L428.5,411.0 L419.6,409.6 L410.8,407.9 L402.1,406.0 L393.6,403.9 L385.3,401.5 L377.1,399.0 L369.1,396.3 L361.4,393.3 L353.9,390.2 L346.6,386.9 L339.6,383.4 L332.8,379.7 L326.3,375.9 L320.2,371.9 L314.3,367.8 L308.7,363.5 L303.5,359.1 L298.6,354.5 L294.1,349.9 L289.9,345.1 L286.0,340.2 L282.6,335.3 L279.5,330.2 L276.8,325.1 L274.5,319.9 L272.6,314.7 L271.0,309.4 L269.9,304.1 L269.2,298.8 L268.8,293.4 L268.9,291.8Z"/><path d="M483.5,411.8 L487.1,411.9 L490.7,412.0 L494.3,412.4 L497.9,412.9 L501.3,413.5 L504.7,414.2 L508.1,415.0 L511.3,416.0 L514.3,417.1 L517.3,418.4 L520.1,419.7 L522.8,421.1 L522.8,424.3 L520.1,422.9 L517.3,421.6 L514.3,420.3 L511.3,419.2 L508.1,418.2 L504.7,417.4 L501.3,416.7 L497.9,416.1 L494.3,415.6 L490.7,415.2 L487.1,415.1 L483.5,415.0Z"/><path d="M522.8,421.1 L585.7,457.5 L648.7,493.8 L711.7,530.2 L774.6,566.5 L837.6,602.9 L900.6,639.2 L963.5,675.6 L1026.5,712.0 L1026.5,715.2 L963.5,678.8 L900.6,642.4 L837.6,606.1 L774.6,569.7 L711.7,533.4 L648.7,497.0 L585.7,460.7 L522.8,424.3Z"/><path d="M1026.5,712.0 L1030.4,714.1 L1034.5,716.1 L1038.8,718.0 L1043.2,719.8 L1047.8,721.5 L1052.5,723.0 L1057.4,724.3 L1062.3,725.6 L1067.4,726.7 L1072.5,727.6 L1077.8,728.4 L1083.0,729.0 L1088.4,729.5 L1093.8,729.8 L1099.1,729.9 L1104.5,729.9 L1109.9,729.8 L1115.3,729.5 L1120.6,729.0 L1125.9,728.4 L1131.2,727.6 L1136.3,726.7 L1141.4,725.6 L1146.3,724.3 L1151.2,723.0 L1155.9,721.5 L1160.5,719.8 L1164.9,718.0 L1169.2,716.1 L1173.3,714.1 L1177.2,712.0 L1177.2,715.2 L1173.3,717.3 L1169.2,719.3 L1164.9,721.2 L1160.5,723.0 L1155.9,724.7 L1151.2,726.2 L1146.3,727.5 L1141.4,728.8 L1136.3,729.9 L1131.2,730.8 L1125.9,731.6 L1120.6,732.2 L1115.3,732.7 L1109.9,733.0 L1104.5,733.1 L1099.1,733.1 L1093.8,733.0 L1088.4,732.7 L1083.0,732.2 L1077.8,731.6 L1072.5,730.8 L1067.4,729.9 L1062.3,728.8 L1057.4,727.5 L1052.5,726.2 L1047.8,724.7 L1043.2,723.0 L1038.8,721.2 L1034.5,719.3 L1030.4,717.3 L1026.5,715.2Z"/><path d="M1177.2,712.0 L1214.6,690.4 L1214.6,693.6 L1177.2,715.2Z"/><path d="M1214.6,690.4 L1218.3,688.1 L1221.8,685.7 L1225.1,683.3 L1228.2,680.7 L1231.1,678.1 L1233.7,675.3 L1236.1,672.5 L1238.2,669.7 L1240.1,666.7 L1241.7,663.8 L1243.1,660.8 L1244.1,657.7 L1245.0,654.6 L1245.5,651.5 L1245.8,648.4 L1245.8,646.9 L1245.8,650.1 L1245.8,651.6 L1245.5,654.7 L1245.0,657.8 L1244.1,660.9 L1243.1,664.0 L1241.7,667.0 L1240.1,669.9 L1238.2,672.9 L1236.1,675.7 L1233.7,678.5 L1231.1,681.3 L1228.2,683.9 L1225.1,686.5 L1221.8,688.9 L1218.3,691.3 L1214.6,693.6Z"/><path d="M695.8,290.6 L695.7,290.2 L695.7,293.4 L695.8,293.8Z"/></g><g><path d="M695.7,237.7 L695.7,236.1 L695.7,288.6 L695.7,290.2Z" fill="#6a675f"/><path d="M268.9,236.1 L268.8,237.7 L269.2,243.1 L269.9,248.4 L271.0,253.7 L272.6,259.0 L274.5,264.2 L276.8,269.4 L279.5,274.5 L282.6,279.6 L286.0,284.5 L289.9,289.4 L294.1,294.2 L298.6,298.8 L303.5,303.4 L308.7,307.8 L314.3,312.1 L320.2,316.2 L326.3,320.2 L332.8,324.0 L339.6,327.7 L346.6,331.2 L353.9,334.5 L361.4,337.6 L369.1,340.6 L377.1,343.3 L385.3,345.8 L393.6,348.2 L402.1,350.3 L410.8,352.2 L419.6,353.9 L428.5,355.3 L437.5,356.6 L446.6,357.6 L455.8,358.3 L465.0,358.9 L474.2,359.2 L483.5,359.3 L483.5,411.8 L474.2,411.7 L465.0,411.4 L455.8,410.8 L446.6,410.1 L437.5,409.1 L428.5,407.8 L419.6,406.4 L410.8,404.7 L402.1,402.8 L393.6,400.7 L385.3,398.3 L377.1,395.8 L369.1,393.1 L361.4,390.1 L353.9,387.0 L346.6,383.7 L339.6,380.2 L332.8,376.5 L326.3,372.7 L320.2,368.7 L314.3,364.6 L308.7,360.3 L303.5,355.9 L298.6,351.3 L294.1,346.7 L289.9,341.9 L286.0,337.0 L282.6,332.1 L279.5,327.0 L276.8,321.9 L274.5,316.7 L272.6,311.5 L271.0,306.2 L269.9,300.9 L269.2,295.6 L268.8,290.2 L268.9,288.6Z" fill="url(#g15)"/><path d="M483.5,359.3 L487.1,359.4 L490.7,359.5 L494.3,359.9 L497.9,360.4 L501.3,361.0 L504.7,361.7 L508.1,362.5 L511.3,363.5 L514.3,364.6 L517.3,365.9 L520.1,367.2 L522.8,368.6 L522.8,421.1 L520.1,419.7 L517.3,418.4 L514.3,417.1 L511.3,416.0 L508.1,415.0 L504.7,414.2 L501.3,413.5 L497.9,412.9 L494.3,412.4 L490.7,412.0 L487.1,411.9 L483.5,411.8Z" fill="url(#g30)"/><path d="M522.8,368.6 L585.7,405.0 L648.7,441.3 L711.7,477.7 L774.6,514.0 L837.6,550.4 L900.6,586.7 L963.5,623.1 L1026.5,659.5 L1026.5,712.0 L963.5,675.6 L900.6,639.2 L837.6,602.9 L774.6,566.5 L711.7,530.2 L648.7,493.8 L585.7,457.5 L522.8,421.1Z" fill="url(#g45)"/><path d="M1026.5,659.5 L1030.4,661.6 L1034.5,663.6 L1038.8,665.5 L1043.2,667.3 L1047.8,669.0 L1052.5,670.5 L1057.4,671.8 L1062.3,673.1 L1067.4,674.2 L1072.5,675.1 L1077.8,675.9 L1083.0,676.5 L1088.4,677.0 L1093.8,677.3 L1099.1,677.4 L1104.5,677.4 L1109.9,677.3 L1115.3,677.0 L1120.6,676.5 L1125.9,675.9 L1131.2,675.1 L1136.3,674.2 L1141.4,673.1 L1146.3,671.8 L1151.2,670.5 L1155.9,669.0 L1160.5,667.3 L1164.9,665.5 L1169.2,663.6 L1173.3,661.6 L1177.2,659.5 L1177.2,712.0 L1173.3,714.1 L1169.2,716.1 L1164.9,718.0 L1160.5,719.8 L1155.9,721.5 L1151.2,723.0 L1146.3,724.3 L1141.4,725.6 L1136.3,726.7 L1131.2,727.6 L1125.9,728.4 L1120.6,729.0 L1115.3,729.5 L1109.9,729.8 L1104.5,729.9 L1099.1,729.9 L1093.8,729.8 L1088.4,729.5 L1083.0,729.0 L1077.8,728.4 L1072.5,727.6 L1067.4,726.7 L1062.3,725.6 L1057.4,724.3 L1052.5,723.0 L1047.8,721.5 L1043.2,719.8 L1038.8,718.0 L1034.5,716.1 L1030.4,714.1 L1026.5,712.0Z" fill="url(#g60)"/><path d="M1177.2,659.5 L1214.6,637.9 L1214.6,690.4 L1177.2,712.0Z" fill="url(#g75)"/><path d="M1214.6,637.9 L1218.3,635.6 L1221.8,633.2 L1225.1,630.8 L1228.2,628.2 L1231.1,625.6 L1233.7,622.8 L1236.1,620.0 L1238.2,617.2 L1240.1,614.2 L1241.7,611.3 L1243.1,608.3 L1244.1,605.2 L1245.0,602.1 L1245.5,599.0 L1245.8,595.9 L1245.8,594.4 L1245.8,646.9 L1245.8,648.4 L1245.5,651.5 L1245.0,654.6 L1244.1,657.7 L1243.1,660.8 L1241.7,663.8 L1240.1,666.7 L1238.2,669.7 L1236.1,672.5 L1233.7,675.3 L1231.1,678.1 L1228.2,680.7 L1225.1,683.3 L1221.8,685.7 L1218.3,688.1 L1214.6,690.4Z" fill="url(#g90)"/><path d="M695.8,238.1 L695.7,237.7 L695.7,290.2 L695.8,290.6Z" fill="#6a675f"/></g><g><path d="M685.3,229.1 L685.3,227.6 L695.7,236.1 L695.7,237.7Z" fill="#807c70"/><path d="M687.3,229.3 L687.3,227.7 L695.7,236.1 L695.7,237.7Z" fill="#837f72"/><path d="M689.2,229.8 L689.2,228.2 L695.7,236.1 L695.7,237.7Z" fill="#868275"/><path d="M690.7,230.4 L690.7,228.8 L695.7,236.1 L695.7,237.7Z" fill="#8a8578"/><path d="M691.3,230.7 L691.3,229.1 L695.7,236.1 L695.7,237.7Z" fill="#8d897b"/><path d="M691.8,231.0 L691.8,229.4 L695.7,236.1 L695.7,237.7Z" fill="#908b7d"/><path d="M692.3,231.3 L692.3,229.7 L695.7,236.1 L695.7,237.7Z" fill="#938e80"/><path d="M692.8,231.7 L692.7,230.1 L695.7,236.1 L695.7,237.7Z" fill="#969183"/><path d="M693.2,232.1 L693.2,230.5 L695.7,236.1 L695.7,237.7Z" fill="#979284"/><path d="M693.8,232.7 L693.7,231.1 L695.7,236.1 L695.7,237.7Z" fill="#928e80"/><path d="M694.3,233.4 L694.3,231.8 L695.7,236.1 L695.7,237.7Z" fill="#8e897c"/><path d="M694.8,234.1 L694.7,232.5 L695.7,236.1 L695.7,237.7Z" fill="#878376"/><path d="M695.1,234.8 L695.1,233.1 L695.7,236.1 L695.7,237.7Z" fill="#7b776b"/><path d="M695.6,236.1 L695.5,234.4 L695.7,236.1 L695.7,237.7Z" fill="#6e6b60"/><path d="M685.3,227.6 L685.3,224.0 L684.8,218.9 L684.0,213.9 L682.7,208.8 L681.2,203.8 L679.2,198.9 L676.8,194.0 L674.1,189.1 L671.1,184.3 L667.6,179.7 L663.9,175.1 L659.7,170.6 L655.3,166.2 L650.5,161.9 L645.4,157.7 L640.0,153.7 L634.3,149.8 L628.3,146.1 L622.1,142.5 L615.6,139.1 L608.8,135.8 L601.8,132.8 L594.5,129.9 L587.1,127.1 L579.4,124.6 L571.6,122.3 L563.6,120.1 L555.5,118.2 L547.2,116.5 L538.8,114.9 L530.3,113.6 L521.6,112.5 L513.0,111.7 L504.2,111.0 L495.4,110.6 L486.6,110.3 L477.8,110.3 L469.0,110.6 L460.2,111.0 L451.5,111.7 L442.8,112.5 L434.2,113.6 L425.7,115.0 L417.3,116.5 L409.0,118.2 L400.9,120.2 L392.9,122.3 L385.0,124.6 L377.4,127.2 L369.9,129.9 L362.7,132.8 L355.7,135.9 L348.9,139.1 L342.4,142.6 L336.2,146.1 L330.2,149.9 L324.5,153.8 L319.1,157.8 L314.0,161.9 L309.2,166.2 L304.8,170.6 L300.7,175.1 L296.9,179.7 L293.5,184.4 L290.4,189.2 L287.7,194.0 L285.4,198.9 L283.4,203.9 L281.8,208.9 L280.6,213.9 L279.8,219.0 L279.3,224.1 L279.3,227.6 L268.9,236.1 L268.9,232.4 L269.4,227.1 L270.3,221.7 L271.5,216.4 L273.2,211.2 L275.3,206.0 L277.7,200.8 L280.6,195.7 L283.8,190.7 L287.4,185.8 L291.4,180.9 L295.7,176.2 L300.4,171.6 L305.4,167.1 L310.7,162.7 L316.4,158.5 L322.4,154.4 L328.7,150.5 L335.2,146.7 L342.1,143.1 L349.2,139.7 L356.6,136.4 L364.2,133.4 L372.0,130.5 L380.1,127.9 L388.3,125.4 L396.7,123.1 L405.3,121.1 L414.0,119.3 L422.8,117.7 L431.8,116.3 L440.8,115.2 L449.9,114.2 L459.1,113.5 L468.3,113.1 L477.6,112.8 L486.9,112.8 L496.1,113.1 L505.4,113.5 L514.5,114.2 L523.7,115.1 L532.7,116.3 L541.7,117.7 L550.5,119.3 L559.2,121.1 L567.8,123.1 L576.2,125.4 L584.4,127.8 L592.5,130.5 L600.3,133.3 L607.9,136.4 L615.3,139.6 L622.4,143.1 L629.3,146.7 L635.8,150.4 L642.1,154.4 L648.1,158.4 L653.8,162.7 L659.1,167.0 L664.2,171.5 L668.8,176.1 L673.2,180.9 L677.1,185.7 L680.7,190.6 L684.0,195.6 L686.8,200.7 L689.3,205.9 L691.3,211.1 L693.0,216.4 L694.3,221.7 L695.2,227.0 L695.7,232.3 L695.7,236.1Z" fill="url(#g1)"/><path d="M685.3,227.6 L685.3,224.0 L684.8,218.9 L684.0,213.9 L682.7,208.8 L681.2,203.8 L679.2,198.9 L676.8,194.0 L674.1,189.1 L671.1,184.3 L667.6,179.7 L663.9,175.1 L659.7,170.6 L655.3,166.2 L650.5,161.9 L645.4,157.7 L640.0,153.7 L634.3,149.8 L628.3,146.1 L622.1,142.5 L615.6,139.1 L608.8,135.8 L601.8,132.8 L594.5,129.9 L587.1,127.1 L579.4,124.6 L571.6,122.3 L563.6,120.1 L555.5,118.2 L547.2,116.5 L538.8,114.9 L530.3,113.6 L521.6,112.5 L513.0,111.7 L504.2,111.0 L495.4,110.6 L486.6,110.3 L477.8,110.3 L469.0,110.6 L460.2,111.0 L451.5,111.7 L442.8,112.5 L434.2,113.6 L425.7,115.0 L417.3,116.5 L409.0,118.2 L400.9,120.2 L392.9,122.3 L385.0,124.6 L377.4,127.2 L369.9,129.9 L362.7,132.8 L355.7,135.9 L348.9,139.1 L342.4,142.6 L336.2,146.1 L330.2,149.9 L324.5,153.8 L319.1,157.8 L314.0,161.9 L309.2,166.2 L304.8,170.6 L300.7,175.1 L296.9,179.7 L293.5,184.4 L290.4,189.2 L287.7,194.0 L285.4,198.9 L283.4,203.9 L281.8,208.9 L280.6,213.9 L279.8,219.0 L279.3,224.1 L279.3,227.6 L269.1,234.4 L269.1,230.8 L269.6,225.4 L270.5,220.1 L271.7,214.8 L273.4,209.6 L275.5,204.4 L277.9,199.2 L280.8,194.1 L284.0,189.1 L287.6,184.2 L291.5,179.4 L295.8,174.6 L300.5,170.0 L305.5,165.5 L310.9,161.2 L316.5,156.9 L322.5,152.9 L328.8,148.9 L335.4,145.2 L342.2,141.6 L349.3,138.1 L356.7,134.9 L364.3,131.9 L372.1,129.0 L380.1,126.3 L388.4,123.9 L396.8,121.6 L405.3,119.6 L414.0,117.8 L422.9,116.2 L431.8,114.8 L440.8,113.6 L450.0,112.7 L459.1,112.0 L468.4,111.6 L477.6,111.3 L486.9,111.3 L496.1,111.5 L505.3,112.0 L514.5,112.7 L523.6,113.6 L532.7,114.8 L541.6,116.1 L550.4,117.7 L559.2,119.6 L567.7,121.6 L576.1,123.8 L584.3,126.3 L592.4,129.0 L600.2,131.8 L607.8,134.9 L615.2,138.1 L622.3,141.5 L629.1,145.1 L635.7,148.9 L642.0,152.8 L648.0,156.9 L653.6,161.1 L659.0,165.5 L664.0,170.0 L668.7,174.6 L673.0,179.3 L677.0,184.1 L680.6,189.1 L683.8,194.1 L686.6,199.1 L689.1,204.3 L691.2,209.5 L692.8,214.8 L694.1,220.1 L695.0,225.4 L695.5,230.7 L695.5,234.4Z" fill="url(#g2)"/><path d="M685.3,227.6 L685.3,224.0 L684.8,218.9 L684.0,213.9 L682.7,208.8 L681.2,203.8 L679.2,198.9 L676.8,194.0 L674.1,189.1 L671.1,184.3 L667.6,179.7 L663.9,175.1 L659.7,170.6 L655.3,166.2 L650.5,161.9 L645.4,157.7 L640.0,153.7 L634.3,149.8 L628.3,146.1 L622.1,142.5 L615.6,139.1 L608.8,135.8 L601.8,132.8 L594.5,129.9 L587.1,127.1 L579.4,124.6 L571.6,122.3 L563.6,120.1 L555.5,118.2 L547.2,116.5 L538.8,114.9 L530.3,113.6 L521.6,112.5 L513.0,111.7 L504.2,111.0 L495.4,110.6 L486.6,110.3 L477.8,110.3 L469.0,110.6 L460.2,111.0 L451.5,111.7 L442.8,112.5 L434.2,113.6 L425.7,115.0 L417.3,116.5 L409.0,118.2 L400.9,120.2 L392.9,122.3 L385.0,124.6 L377.4,127.2 L369.9,129.9 L362.7,132.8 L355.7,135.9 L348.9,139.1 L342.4,142.6 L336.2,146.1 L330.2,149.9 L324.5,153.8 L319.1,157.8 L314.0,161.9 L309.2,166.2 L304.8,170.6 L300.7,175.1 L296.9,179.7 L293.5,184.4 L290.4,189.2 L287.7,194.0 L285.4,198.9 L283.4,203.9 L281.8,208.9 L280.6,213.9 L279.8,219.0 L279.3,224.1 L279.3,227.6 L269.5,233.1 L269.5,229.5 L270.0,224.2 L270.9,218.9 L272.2,213.6 L273.8,208.3 L275.9,203.1 L278.3,198.0 L281.2,192.9 L284.4,187.9 L288.0,183.0 L291.9,178.2 L296.2,173.5 L300.9,168.9 L305.9,164.4 L311.2,160.0 L316.9,155.8 L322.9,151.7 L329.1,147.8 L335.7,144.1 L342.5,140.5 L349.6,137.1 L357.0,133.8 L364.5,130.8 L372.3,127.9 L380.4,125.3 L388.6,122.8 L396.9,120.6 L405.5,118.5 L414.2,116.7 L423.0,115.1 L431.9,113.7 L440.9,112.6 L450.0,111.7 L459.2,111.0 L468.4,110.5 L477.6,110.3 L486.9,110.3 L496.1,110.5 L505.3,111.0 L514.4,111.7 L523.5,112.6 L532.6,113.7 L541.5,115.1 L550.3,116.7 L559.0,118.5 L567.5,120.5 L575.9,122.8 L584.1,125.2 L592.1,127.9 L599.9,130.7 L607.5,133.8 L614.9,137.0 L622.0,140.4 L628.8,144.0 L635.4,147.8 L641.7,151.7 L647.6,155.8 L653.3,160.0 L658.6,164.3 L663.6,168.8 L668.3,173.4 L672.6,178.1 L676.6,182.9 L680.2,187.9 L683.4,192.9 L686.2,197.9 L688.7,203.1 L690.7,208.3 L692.4,213.5 L693.7,218.8 L694.6,224.1 L695.0,229.4 L695.1,233.1Z" fill="url(#g3)"/><path d="M685.3,227.6 L685.3,224.0 L684.8,218.9 L684.0,213.9 L682.7,208.8 L681.2,203.8 L679.2,198.9 L676.8,194.0 L674.1,189.1 L671.1,184.3 L667.6,179.7 L663.9,175.1 L659.7,170.6 L655.3,166.2 L650.5,161.9 L645.4,157.7 L640.0,153.7 L634.3,149.8 L628.3,146.1 L622.1,142.5 L615.6,139.1 L608.8,135.8 L601.8,132.8 L594.5,129.9 L587.1,127.1 L579.4,124.6 L571.6,122.3 L563.6,120.1 L555.5,118.2 L547.2,116.5 L538.8,114.9 L530.3,113.6 L521.6,112.5 L513.0,111.7 L504.2,111.0 L495.4,110.6 L486.6,110.3 L477.8,110.3 L469.0,110.6 L460.2,111.0 L451.5,111.7 L442.8,112.5 L434.2,113.6 L425.7,115.0 L417.3,116.5 L409.0,118.2 L400.9,120.2 L392.9,122.3 L385.0,124.6 L377.4,127.2 L369.9,129.9 L362.7,132.8 L355.7,135.9 L348.9,139.1 L342.4,142.6 L336.2,146.1 L330.2,149.9 L324.5,153.8 L319.1,157.8 L314.0,161.9 L309.2,166.2 L304.8,170.6 L300.7,175.1 L296.9,179.7 L293.5,184.4 L290.4,189.2 L287.7,194.0 L285.4,198.9 L283.4,203.9 L281.8,208.9 L280.6,213.9 L279.8,219.0 L279.3,224.1 L279.3,227.6 L269.8,232.5 L269.9,228.8 L270.4,223.5 L271.2,218.2 L272.5,212.9 L274.2,207.7 L276.2,202.5 L278.7,197.4 L281.5,192.3 L284.7,187.3 L288.3,182.4 L292.2,177.6 L296.5,172.9 L301.2,168.3 L306.2,163.8 L311.5,159.5 L317.2,155.2 L323.1,151.2 L329.4,147.3 L335.9,143.5 L342.7,139.9 L349.8,136.5 L357.2,133.3 L364.7,130.3 L372.5,127.4 L380.5,124.8 L388.7,122.3 L397.1,120.1 L405.6,118.0 L414.3,116.2 L423.1,114.6 L432.0,113.3 L441.0,112.1 L450.1,111.2 L459.2,110.5 L468.4,110.0 L477.6,109.8 L486.8,109.8 L496.1,110.0 L505.2,110.5 L514.4,111.2 L523.5,112.1 L532.5,113.2 L541.4,114.6 L550.2,116.2 L558.9,118.0 L567.4,120.0 L575.8,122.3 L584.0,124.7 L592.0,127.4 L599.8,130.2 L607.3,133.3 L614.7,136.5 L621.8,139.9 L628.6,143.5 L635.1,147.2 L641.4,151.1 L647.4,155.2 L653.0,159.4 L658.3,163.7 L663.3,168.2 L668.0,172.8 L672.3,177.5 L676.2,182.3 L679.8,187.2 L683.0,192.2 L685.9,197.3 L688.3,202.4 L690.4,207.6 L692.1,212.9 L693.3,218.1 L694.2,223.4 L694.7,228.8 L694.7,232.5Z" fill="url(#g4)"/><path d="M685.3,227.6 L685.3,224.0 L684.8,218.9 L684.0,213.9 L682.7,208.8 L681.2,203.8 L679.2,198.9 L676.8,194.0 L674.1,189.1 L671.1,184.3 L667.6,179.7 L663.9,175.1 L659.7,170.6 L655.3,166.2 L650.5,161.9 L645.4,157.7 L640.0,153.7 L634.3,149.8 L628.3,146.1 L622.1,142.5 L615.6,139.1 L608.8,135.8 L601.8,132.8 L594.5,129.9 L587.1,127.1 L579.4,124.6 L571.6,122.3 L563.6,120.1 L555.5,118.2 L547.2,116.5 L538.8,114.9 L530.3,113.6 L521.6,112.5 L513.0,111.7 L504.2,111.0 L495.4,110.6 L486.6,110.3 L477.8,110.3 L469.0,110.6 L460.2,111.0 L451.5,111.7 L442.8,112.5 L434.2,113.6 L425.7,115.0 L417.3,116.5 L409.0,118.2 L400.9,120.2 L392.9,122.3 L385.0,124.6 L377.4,127.2 L369.9,129.9 L362.7,132.8 L355.7,135.9 L348.9,139.1 L342.4,142.6 L336.2,146.1 L330.2,149.9 L324.5,153.8 L319.1,157.8 L314.0,161.9 L309.2,166.2 L304.8,170.6 L300.7,175.1 L296.9,179.7 L293.5,184.4 L290.4,189.2 L287.7,194.0 L285.4,198.9 L283.4,203.9 L281.8,208.9 L280.6,213.9 L279.8,219.0 L279.3,224.1 L279.3,227.6 L270.3,231.8 L270.3,228.2 L270.8,222.9 L271.6,217.6 L272.9,212.3 L274.6,207.1 L276.6,201.9 L279.1,196.8 L281.9,191.7 L285.1,186.7 L288.7,181.8 L292.6,177.0 L296.9,172.3 L301.5,167.7 L306.5,163.3 L311.8,158.9 L317.5,154.7 L323.4,150.7 L329.7,146.8 L336.2,143.0 L343.0,139.5 L350.1,136.1 L357.4,132.8 L365.0,129.8 L372.7,127.0 L380.7,124.3 L388.9,121.9 L397.2,119.6 L405.8,117.6 L414.4,115.8 L423.2,114.2 L432.1,112.8 L441.1,111.7 L450.1,110.8 L459.3,110.1 L468.4,109.6 L477.6,109.4 L486.8,109.4 L496.0,109.6 L505.2,110.1 L514.3,110.8 L523.4,111.7 L532.4,112.8 L541.3,114.2 L550.1,115.8 L558.7,117.6 L567.2,119.6 L575.6,121.8 L583.8,124.3 L591.7,126.9 L599.5,129.8 L607.1,132.8 L614.4,136.0 L621.5,139.4 L628.3,143.0 L634.8,146.7 L641.1,150.6 L647.0,154.7 L652.7,158.9 L658.0,163.2 L663.0,167.7 L667.6,172.3 L671.9,177.0 L675.9,181.8 L679.4,186.7 L682.6,191.7 L685.5,196.7 L687.9,201.8 L690.0,207.0 L691.6,212.2 L692.9,217.5 L693.8,222.8 L694.3,228.1 L694.3,231.8Z" fill="url(#g5)"/><path d="M685.3,227.6 L685.3,224.0 L684.8,218.9 L684.0,213.9 L682.7,208.8 L681.2,203.8 L679.2,198.9 L676.8,194.0 L674.1,189.1 L671.1,184.3 L667.6,179.7 L663.9,175.1 L659.7,170.6 L655.3,166.2 L650.5,161.9 L645.4,157.7 L640.0,153.7 L634.3,149.8 L628.3,146.1 L622.1,142.5 L615.6,139.1 L608.8,135.8 L601.8,132.8 L594.5,129.9 L587.1,127.1 L579.4,124.6 L571.6,122.3 L563.6,120.1 L555.5,118.2 L547.2,116.5 L538.8,114.9 L530.3,113.6 L521.6,112.5 L513.0,111.7 L504.2,111.0 L495.4,110.6 L486.6,110.3 L477.8,110.3 L469.0,110.6 L460.2,111.0 L451.5,111.7 L442.8,112.5 L434.2,113.6 L425.7,115.0 L417.3,116.5 L409.0,118.2 L400.9,120.2 L392.9,122.3 L385.0,124.6 L377.4,127.2 L369.9,129.9 L362.7,132.8 L355.7,135.9 L348.9,139.1 L342.4,142.6 L336.2,146.1 L330.2,149.9 L324.5,153.8 L319.1,157.8 L314.0,161.9 L309.2,166.2 L304.8,170.6 L300.7,175.1 L296.9,179.7 L293.5,184.4 L290.4,189.2 L287.7,194.0 L285.4,198.9 L283.4,203.9 L281.8,208.9 L280.6,213.9 L279.8,219.0 L279.3,224.1 L279.3,227.6 L270.8,231.1 L270.9,227.4 L271.4,222.1 L272.2,216.9 L273.5,211.6 L275.2,206.4 L277.2,201.2 L279.6,196.1 L282.5,191.1 L285.6,186.1 L289.2,181.2 L293.1,176.4 L297.4,171.8 L302.0,167.2 L307.0,162.7 L312.3,158.4 L317.9,154.2 L323.9,150.2 L330.1,146.3 L336.6,142.5 L343.4,139.0 L350.5,135.6 L357.8,132.4 L365.3,129.3 L373.0,126.5 L381.0,123.9 L389.2,121.4 L397.5,119.2 L406.0,117.2 L414.6,115.4 L423.4,113.8 L432.2,112.4 L441.2,111.3 L450.2,110.4 L459.3,109.7 L468.5,109.2 L477.6,109.0 L486.8,109.0 L496.0,109.2 L505.1,109.7 L514.2,110.4 L523.3,111.3 L532.2,112.4 L541.1,113.8 L549.9,115.4 L558.5,117.2 L567.0,119.2 L575.3,121.4 L583.5,123.8 L591.4,126.5 L599.2,129.3 L606.7,132.3 L614.0,135.5 L621.1,138.9 L627.9,142.5 L634.4,146.2 L640.6,150.1 L646.6,154.2 L652.2,158.3 L657.5,162.7 L662.5,167.1 L667.1,171.7 L671.4,176.4 L675.3,181.2 L678.9,186.1 L682.1,191.0 L684.9,196.1 L687.3,201.2 L689.4,206.3 L691.1,211.6 L692.3,216.8 L693.2,222.1 L693.7,227.4 L693.7,231.1Z" fill="url(#g6)"/><path d="M685.3,227.6 L685.3,224.0 L684.8,218.9 L684.0,213.9 L682.7,208.8 L681.2,203.8 L679.2,198.9 L676.8,194.0 L674.1,189.1 L671.1,184.3 L667.6,179.7 L663.9,175.1 L659.7,170.6 L655.3,166.2 L650.5,161.9 L645.4,157.7 L640.0,153.7 L634.3,149.8 L628.3,146.1 L622.1,142.5 L615.6,139.1 L608.8,135.8 L601.8,132.8 L594.5,129.9 L587.1,127.1 L579.4,124.6 L571.6,122.3 L563.6,120.1 L555.5,118.2 L547.2,116.5 L538.8,114.9 L530.3,113.6 L521.6,112.5 L513.0,111.7 L504.2,111.0 L495.4,110.6 L486.6,110.3 L477.8,110.3 L469.0,110.6 L460.2,111.0 L451.5,111.7 L442.8,112.5 L434.2,113.6 L425.7,115.0 L417.3,116.5 L409.0,118.2 L400.9,120.2 L392.9,122.3 L385.0,124.6 L377.4,127.2 L369.9,129.9 L362.7,132.8 L355.7,135.9 L348.9,139.1 L342.4,142.6 L336.2,146.1 L330.2,149.9 L324.5,153.8 L319.1,157.8 L314.0,161.9 L309.2,166.2 L304.8,170.6 L300.7,175.1 L296.9,179.7 L293.5,184.4 L290.4,189.2 L287.7,194.0 L285.4,198.9 L283.4,203.9 L281.8,208.9 L280.6,213.9 L279.8,219.0 L279.3,224.1 L279.3,227.6 L271.4,230.5 L271.5,226.9 L271.9,221.6 L272.8,216.3 L274.1,211.1 L275.7,205.9 L277.8,200.7 L280.2,195.6 L283.0,190.6 L286.2,185.7 L289.7,180.8 L293.6,176.0 L297.9,171.3 L302.5,166.8 L307.5,162.3 L312.8,158.0 L318.4,153.8 L324.3,149.8 L330.5,145.9 L337.0,142.2 L343.8,138.6 L350.8,135.3 L358.1,132.1 L365.6,129.0 L373.3,126.2 L381.3,123.6 L389.4,121.1 L397.7,118.9 L406.2,116.9 L414.8,115.1 L423.5,113.5 L432.4,112.2 L441.3,111.0 L450.3,110.1 L459.4,109.4 L468.5,109.0 L477.7,108.7 L486.8,108.7 L496.0,109.0 L505.1,109.4 L514.2,110.1 L523.2,111.0 L532.1,112.1 L541.0,113.5 L549.7,115.1 L558.3,116.9 L566.8,118.9 L575.1,121.1 L583.2,123.5 L591.1,126.2 L598.9,129.0 L606.4,132.0 L613.7,135.2 L620.7,138.6 L627.5,142.2 L634.0,145.9 L640.2,149.8 L646.1,153.8 L651.7,158.0 L657.0,162.3 L662.0,166.7 L666.6,171.3 L670.9,176.0 L674.8,180.7 L678.4,185.6 L681.6,190.6 L684.4,195.6 L686.8,200.7 L688.8,205.8 L690.5,211.0 L691.8,216.3 L692.6,221.5 L693.1,226.8 L693.2,230.5Z" fill="url(#g7)"/><path d="M685.3,227.6 L685.3,224.0 L684.8,218.9 L684.0,213.9 L682.7,208.8 L681.2,203.8 L679.2,198.9 L676.8,194.0 L674.1,189.1 L671.1,184.3 L667.6,179.7 L663.9,175.1 L659.7,170.6 L655.3,166.2 L650.5,161.9 L645.4,157.7 L640.0,153.7 L634.3,149.8 L628.3,146.1 L622.1,142.5 L615.6,139.1 L608.8,135.8 L601.8,132.8 L594.5,129.9 L587.1,127.1 L579.4,124.6 L571.6,122.3 L563.6,120.1 L555.5,118.2 L547.2,116.5 L538.8,114.9 L530.3,113.6 L521.6,112.5 L513.0,111.7 L504.2,111.0 L495.4,110.6 L486.6,110.3 L477.8,110.3 L469.0,110.6 L460.2,111.0 L451.5,111.7 L442.8,112.5 L434.2,113.6 L425.7,115.0 L417.3,116.5 L409.0,118.2 L400.9,120.2 L392.9,122.3 L385.0,124.6 L377.4,127.2 L369.9,129.9 L362.7,132.8 L355.7,135.9 L348.9,139.1 L342.4,142.6 L336.2,146.1 L330.2,149.9 L324.5,153.8 L319.1,157.8 L314.0,161.9 L309.2,166.2 L304.8,170.6 L300.7,175.1 L296.9,179.7 L293.5,184.4 L290.4,189.2 L287.7,194.0 L285.4,198.9 L283.4,203.9 L281.8,208.9 L280.6,213.9 L279.8,219.0 L279.3,224.1 L279.3,227.6 L271.8,230.1 L271.9,226.5 L272.4,221.2 L273.2,216.0 L274.5,210.7 L276.1,205.6 L278.2,200.4 L280.6,195.3 L283.4,190.3 L286.6,185.4 L290.1,180.5 L294.0,175.7 L298.3,171.1 L302.9,166.5 L307.8,162.1 L313.1,157.8 L318.7,153.6 L324.6,149.6 L330.8,145.7 L337.3,142.0 L344.1,138.4 L351.1,135.1 L358.3,131.9 L365.8,128.9 L373.6,126.0 L381.5,123.4 L389.6,121.0 L397.9,118.8 L406.3,116.8 L414.9,115.0 L423.6,113.4 L432.5,112.0 L441.4,110.9 L450.4,110.0 L459.4,109.3 L468.5,108.8 L477.7,108.6 L486.8,108.6 L495.9,108.8 L505.0,109.3 L514.1,110.0 L523.1,110.9 L532.0,112.0 L540.8,113.4 L549.6,114.9 L558.1,116.7 L566.6,118.7 L574.9,121.0 L583.0,123.4 L590.9,126.0 L598.6,128.8 L606.1,131.8 L613.4,135.0 L620.4,138.4 L627.2,142.0 L633.7,145.7 L639.9,149.5 L645.8,153.6 L651.4,157.7 L656.7,162.0 L661.6,166.5 L666.2,171.0 L670.5,175.7 L674.4,180.4 L678.0,185.3 L681.1,190.3 L684.0,195.3 L686.4,200.4 L688.4,205.5 L690.1,210.7 L691.3,215.9 L692.2,221.2 L692.7,226.4 L692.7,230.1Z" fill="url(#g8)"/><path d="M685.3,227.6 L685.3,224.0 L684.8,218.9 L684.0,213.9 L682.7,208.8 L681.2,203.8 L679.2,198.9 L676.8,194.0 L674.1,189.1 L671.1,184.3 L667.6,179.7 L663.9,175.1 L659.7,170.6 L655.3,166.2 L650.5,161.9 L645.4,157.7 L640.0,153.7 L634.3,149.8 L628.3,146.1 L622.1,142.5 L615.6,139.1 L608.8,135.8 L601.8,132.8 L594.5,129.9 L587.1,127.1 L579.4,124.6 L571.6,122.3 L563.6,120.1 L555.5,118.2 L547.2,116.5 L538.8,114.9 L530.3,113.6 L521.6,112.5 L513.0,111.7 L504.2,111.0 L495.4,110.6 L486.6,110.3 L477.8,110.3 L469.0,110.6 L460.2,111.0 L451.5,111.7 L442.8,112.5 L434.2,113.6 L425.7,115.0 L417.3,116.5 L409.0,118.2 L400.9,120.2 L392.9,122.3 L385.0,124.6 L377.4,127.2 L369.9,129.9 L362.7,132.8 L355.7,135.9 L348.9,139.1 L342.4,142.6 L336.2,146.1 L330.2,149.9 L324.5,153.8 L319.1,157.8 L314.0,161.9 L309.2,166.2 L304.8,170.6 L300.7,175.1 L296.9,179.7 L293.5,184.4 L290.4,189.2 L287.7,194.0 L285.4,198.9 L283.4,203.9 L281.8,208.9 L280.6,213.9 L279.8,219.0 L279.3,224.1 L279.3,227.6 L272.3,229.7 L272.4,226.1 L272.8,220.9 L273.7,215.6 L274.9,210.4 L276.6,205.3 L278.6,200.1 L281.0,195.1 L283.8,190.0 L287.0,185.1 L290.5,180.3 L294.4,175.5 L298.7,170.8 L303.3,166.3 L308.2,161.9 L313.5,157.6 L319.1,153.4 L325.0,149.4 L331.1,145.5 L337.6,141.8 L344.4,138.3 L351.4,134.9 L358.6,131.7 L366.1,128.7 L373.8,125.9 L381.7,123.3 L389.8,120.9 L398.1,118.6 L406.5,116.6 L415.1,114.9 L423.8,113.3 L432.6,111.9 L441.5,110.8 L450.5,109.9 L459.5,109.2 L468.6,108.7 L477.7,108.5 L486.8,108.5 L495.9,108.7 L505.0,109.2 L514.0,109.9 L523.0,110.8 L531.9,111.9 L540.7,113.3 L549.4,114.8 L558.0,116.6 L566.4,118.6 L574.7,120.8 L582.8,123.3 L590.7,125.9 L598.4,128.7 L605.9,131.7 L613.1,134.9 L620.1,138.2 L626.9,141.8 L633.4,145.5 L639.5,149.4 L645.4,153.4 L651.0,157.5 L656.3,161.8 L661.2,166.2 L665.8,170.8 L670.1,175.4 L674.0,180.2 L677.5,185.0 L680.7,190.0 L683.5,195.0 L685.9,200.1 L688.0,205.2 L689.6,210.4 L690.9,215.6 L691.8,220.8 L692.2,226.1 L692.3,229.7Z" fill="url(#g9)"/><path d="M685.3,227.6 L685.3,224.0 L684.8,218.9 L684.0,213.9 L682.7,208.8 L681.2,203.8 L679.2,198.9 L676.8,194.0 L674.1,189.1 L671.1,184.3 L667.6,179.7 L663.9,175.1 L659.7,170.6 L655.3,166.2 L650.5,161.9 L645.4,157.7 L640.0,153.7 L634.3,149.8 L628.3,146.1 L622.1,142.5 L615.6,139.1 L608.8,135.8 L601.8,132.8 L594.5,129.9 L587.1,127.1 L579.4,124.6 L571.6,122.3 L563.6,120.1 L555.5,118.2 L547.2,116.5 L538.8,114.9 L530.3,113.6 L521.6,112.5 L513.0,111.7 L504.2,111.0 L495.4,110.6 L486.6,110.3 L477.8,110.3 L469.0,110.6 L460.2,111.0 L451.5,111.7 L442.8,112.5 L434.2,113.6 L425.7,115.0 L417.3,116.5 L409.0,118.2 L400.9,120.2 L392.9,122.3 L385.0,124.6 L377.4,127.2 L369.9,129.9 L362.7,132.8 L355.7,135.9 L348.9,139.1 L342.4,142.6 L336.2,146.1 L330.2,149.9 L324.5,153.8 L319.1,157.8 L314.0,161.9 L309.2,166.2 L304.8,170.6 L300.7,175.1 L296.9,179.7 L293.5,184.4 L290.4,189.2 L287.7,194.0 L285.4,198.9 L283.4,203.9 L281.8,208.9 L280.6,213.9 L279.8,219.0 L279.3,224.1 L279.3,227.6 L272.8,229.4 L272.8,225.8 L273.3,220.6 L274.2,215.3 L275.4,210.1 L277.1,205.0 L279.1,199.9 L281.5,194.8 L284.3,189.8 L287.5,184.9 L291.0,180.0 L294.9,175.3 L299.1,170.6 L303.7,166.1 L308.6,161.7 L313.9,157.4 L319.4,153.3 L325.3,149.3 L331.5,145.4 L338.0,141.7 L344.7,138.2 L351.7,134.8 L358.9,131.6 L366.4,128.6 L374.0,125.8 L381.9,123.2 L390.0,120.8 L398.3,118.6 L406.7,116.6 L415.2,114.8 L423.9,113.2 L432.7,111.9 L441.6,110.7 L450.5,109.8 L459.5,109.1 L468.6,108.7 L477.7,108.4 L486.8,108.4 L495.9,108.7 L504.9,109.1 L513.9,109.8 L522.9,110.7 L531.8,111.8 L540.6,113.2 L549.3,114.8 L557.8,116.5 L566.2,118.5 L574.5,120.8 L582.5,123.2 L590.4,125.8 L598.1,128.6 L605.6,131.6 L612.8,134.8 L619.8,138.1 L626.5,141.7 L633.0,145.3 L639.2,149.2 L645.1,153.2 L650.6,157.4 L655.9,161.6 L660.8,166.1 L665.4,170.6 L669.7,175.2 L673.6,180.0 L677.1,184.8 L680.3,189.7 L683.0,194.7 L685.5,199.8 L687.5,204.9 L689.1,210.1 L690.4,215.3 L691.3,220.5 L691.7,225.8 L691.8,229.4Z" fill="url(#g10)"/><path d="M685.3,227.6 L685.3,224.0 L684.8,218.9 L684.0,213.9 L682.7,208.8 L681.2,203.8 L679.2,198.9 L676.8,194.0 L674.1,189.1 L671.1,184.3 L667.6,179.7 L663.9,175.1 L659.7,170.6 L655.3,166.2 L650.5,161.9 L645.4,157.7 L640.0,153.7 L634.3,149.8 L628.3,146.1 L622.1,142.5 L615.6,139.1 L608.8,135.8 L601.8,132.8 L594.5,129.9 L587.1,127.1 L579.4,124.6 L571.6,122.3 L563.6,120.1 L555.5,118.2 L547.2,116.5 L538.8,114.9 L530.3,113.6 L521.6,112.5 L513.0,111.7 L504.2,111.0 L495.4,110.6 L486.6,110.3 L477.8,110.3 L469.0,110.6 L460.2,111.0 L451.5,111.7 L442.8,112.5 L434.2,113.6 L425.7,115.0 L417.3,116.5 L409.0,118.2 L400.9,120.2 L392.9,122.3 L385.0,124.6 L377.4,127.2 L369.9,129.9 L362.7,132.8 L355.7,135.9 L348.9,139.1 L342.4,142.6 L336.2,146.1 L330.2,149.9 L324.5,153.8 L319.1,157.8 L314.0,161.9 L309.2,166.2 L304.8,170.6 L300.7,175.1 L296.9,179.7 L293.5,184.4 L290.4,189.2 L287.7,194.0 L285.4,198.9 L283.4,203.9 L281.8,208.9 L280.6,213.9 L279.8,219.0 L279.3,224.1 L279.3,227.6 L273.3,229.1 L273.3,225.5 L273.8,220.3 L274.7,215.1 L275.9,209.9 L277.6,204.7 L279.6,199.6 L282.0,194.6 L284.8,189.6 L287.9,184.7 L291.4,179.8 L295.3,175.1 L299.6,170.5 L304.1,166.0 L309.1,161.6 L314.3,157.3 L319.8,153.1 L325.7,149.1 L331.9,145.3 L338.3,141.6 L345.0,138.1 L352.0,134.7 L359.2,131.5 L366.6,128.6 L374.3,125.8 L382.2,123.1 L390.2,120.7 L398.5,118.5 L406.9,116.5 L415.4,114.8 L424.0,113.2 L432.8,111.8 L441.7,110.7 L450.6,109.8 L459.6,109.1 L468.6,108.7 L477.7,108.4 L486.8,108.4 L495.8,108.7 L504.9,109.1 L513.9,109.8 L522.8,110.7 L531.7,111.8 L540.4,113.2 L549.1,114.7 L557.6,116.5 L566.0,118.5 L574.2,120.7 L582.3,123.1 L590.2,125.7 L597.8,128.5 L605.3,131.5 L612.5,134.7 L619.5,138.0 L626.2,141.6 L632.6,145.2 L638.8,149.1 L644.7,153.1 L650.2,157.2 L655.5,161.5 L660.4,165.9 L665.0,170.4 L669.2,175.1 L673.1,179.8 L676.6,184.6 L679.8,189.5 L682.6,194.5 L685.0,199.6 L687.0,204.7 L688.6,209.8 L689.9,215.0 L690.8,220.2 L691.2,225.4 L691.3,229.1Z" fill="url(#g11)"/><path d="M685.3,227.6 L685.3,224.0 L684.8,218.9 L684.0,213.9 L682.7,208.8 L681.2,203.8 L679.2,198.9 L676.8,194.0 L674.1,189.1 L671.1,184.3 L667.6,179.7 L663.9,175.1 L659.7,170.6 L655.3,166.2 L650.5,161.9 L645.4,157.7 L640.0,153.7 L634.3,149.8 L628.3,146.1 L622.1,142.5 L615.6,139.1 L608.8,135.8 L601.8,132.8 L594.5,129.9 L587.1,127.1 L579.4,124.6 L571.6,122.3 L563.6,120.1 L555.5,118.2 L547.2,116.5 L538.8,114.9 L530.3,113.6 L521.6,112.5 L513.0,111.7 L504.2,111.0 L495.4,110.6 L486.6,110.3 L477.8,110.3 L469.0,110.6 L460.2,111.0 L451.5,111.7 L442.8,112.5 L434.2,113.6 L425.7,115.0 L417.3,116.5 L409.0,118.2 L400.9,120.2 L392.9,122.3 L385.0,124.6 L377.4,127.2 L369.9,129.9 L362.7,132.8 L355.7,135.9 L348.9,139.1 L342.4,142.6 L336.2,146.1 L330.2,149.9 L324.5,153.8 L319.1,157.8 L314.0,161.9 L309.2,166.2 L304.8,170.6 L300.7,175.1 L296.9,179.7 L293.5,184.4 L290.4,189.2 L287.7,194.0 L285.4,198.9 L283.4,203.9 L281.8,208.9 L280.6,213.9 L279.8,219.0 L279.3,224.1 L279.3,227.6 L273.9,228.8 L274.0,225.2 L274.4,220.0 L275.3,214.8 L276.5,209.6 L278.2,204.5 L280.2,199.4 L282.6,194.3 L285.3,189.4 L288.5,184.5 L292.0,179.7 L295.9,174.9 L300.1,170.3 L304.7,165.8 L309.6,161.4 L314.8,157.2 L320.3,153.0 L326.2,149.0 L332.3,145.2 L338.7,141.5 L345.4,138.0 L352.4,134.7 L359.6,131.5 L367.0,128.5 L374.6,125.7 L382.5,123.1 L390.5,120.7 L398.7,118.5 L407.1,116.5 L415.6,114.8 L424.2,113.2 L433.0,111.9 L441.8,110.7 L450.7,109.8 L459.7,109.1 L468.7,108.7 L477.7,108.5 L486.8,108.5 L495.8,108.7 L504.8,109.1 L513.8,109.8 L522.7,110.7 L531.5,111.8 L540.3,113.2 L548.9,114.7 L557.4,116.5 L565.8,118.5 L574.0,120.7 L582.0,123.1 L589.9,125.7 L597.5,128.5 L604.9,131.5 L612.1,134.6 L619.1,138.0 L625.8,141.5 L632.2,145.2 L638.3,149.0 L644.2,153.0 L649.7,157.1 L655.0,161.4 L659.9,165.8 L664.4,170.3 L668.7,174.9 L672.5,179.6 L676.0,184.4 L679.2,189.3 L682.0,194.3 L684.4,199.3 L686.4,204.4 L688.0,209.5 L689.3,214.7 L690.2,219.9 L690.6,225.1 L690.7,228.8Z" fill="url(#g12)"/><path d="M685.3,227.6 L685.3,224.0 L684.8,218.9 L684.0,213.9 L682.7,208.8 L681.2,203.8 L679.2,198.9 L676.8,194.0 L674.1,189.1 L671.1,184.3 L667.6,179.7 L663.9,175.1 L659.7,170.6 L655.3,166.2 L650.5,161.9 L645.4,157.7 L640.0,153.7 L634.3,149.8 L628.3,146.1 L622.1,142.5 L615.6,139.1 L608.8,135.8 L601.8,132.8 L594.5,129.9 L587.1,127.1 L579.4,124.6 L571.6,122.3 L563.6,120.1 L555.5,118.2 L547.2,116.5 L538.8,114.9 L530.3,113.6 L521.6,112.5 L513.0,111.7 L504.2,111.0 L495.4,110.6 L486.6,110.3 L477.8,110.3 L469.0,110.6 L460.2,111.0 L451.5,111.7 L442.8,112.5 L434.2,113.6 L425.7,115.0 L417.3,116.5 L409.0,118.2 L400.9,120.2 L392.9,122.3 L385.0,124.6 L377.4,127.2 L369.9,129.9 L362.7,132.8 L355.7,135.9 L348.9,139.1 L342.4,142.6 L336.2,146.1 L330.2,149.9 L324.5,153.8 L319.1,157.8 L314.0,161.9 L309.2,166.2 L304.8,170.6 L300.7,175.1 L296.9,179.7 L293.5,184.4 L290.4,189.2 L287.7,194.0 L285.4,198.9 L283.4,203.9 L281.8,208.9 L280.6,213.9 L279.8,219.0 L279.3,224.1 L279.3,227.6 L275.4,228.2 L275.4,224.6 L275.9,219.4 L276.7,214.3 L278.0,209.1 L279.6,204.0 L281.6,199.0 L284.0,194.0 L286.7,189.1 L289.9,184.2 L293.3,179.4 L297.2,174.7 L301.4,170.1 L305.9,165.7 L310.8,161.3 L316.0,157.1 L321.5,153.0 L327.3,149.0 L333.4,145.2 L339.7,141.5 L346.4,138.1 L353.3,134.7 L360.4,131.6 L367.8,128.6 L375.4,125.9 L383.2,123.3 L391.1,120.9 L399.3,118.7 L407.6,116.7 L416.0,115.0 L424.6,113.4 L433.3,112.1 L442.1,111.0 L450.9,110.1 L459.8,109.4 L468.8,108.9 L477.7,108.7 L486.7,108.7 L495.7,108.9 L504.7,109.4 L513.6,110.1 L522.4,110.9 L531.2,112.1 L539.9,113.4 L548.4,114.9 L556.9,116.7 L565.2,118.7 L573.3,120.9 L581.3,123.2 L589.1,125.8 L596.7,128.6 L604.1,131.6 L611.2,134.7 L618.1,138.0 L624.8,141.5 L631.2,145.2 L637.2,149.0 L643.1,152.9 L648.6,157.0 L653.8,161.3 L658.6,165.6 L663.2,170.1 L667.4,174.7 L671.2,179.4 L674.7,184.1 L677.8,189.0 L680.6,193.9 L683.0,198.9 L685.0,204.0 L686.6,209.1 L687.8,214.2 L688.7,219.4 L689.2,224.6 L689.2,228.2Z" fill="url(#g13)"/><path d="M685.3,227.6 L685.3,224.0 L684.8,218.9 L684.0,213.9 L682.7,208.8 L681.2,203.8 L679.2,198.9 L676.8,194.0 L674.1,189.1 L671.1,184.3 L667.6,179.7 L663.9,175.1 L659.7,170.6 L655.3,166.2 L650.5,161.9 L645.4,157.7 L640.0,153.7 L634.3,149.8 L628.3,146.1 L622.1,142.5 L615.6,139.1 L608.8,135.8 L601.8,132.8 L594.5,129.9 L587.1,127.1 L579.4,124.6 L571.6,122.3 L563.6,120.1 L555.5,118.2 L547.2,116.5 L538.8,114.9 L530.3,113.6 L521.6,112.5 L513.0,111.7 L504.2,111.0 L495.4,110.6 L486.6,110.3 L477.8,110.3 L469.0,110.6 L460.2,111.0 L451.5,111.7 L442.8,112.5 L434.2,113.6 L425.7,115.0 L417.3,116.5 L409.0,118.2 L400.9,120.2 L392.9,122.3 L385.0,124.6 L377.4,127.2 L369.9,129.9 L362.7,132.8 L355.7,135.9 L348.9,139.1 L342.4,142.6 L336.2,146.1 L330.2,149.9 L324.5,153.8 L319.1,157.8 L314.0,161.9 L309.2,166.2 L304.8,170.6 L300.7,175.1 L296.9,179.7 L293.5,184.4 L290.4,189.2 L287.7,194.0 L285.4,198.9 L283.4,203.9 L281.8,208.9 L280.6,213.9 L279.8,219.0 L279.3,224.1 L279.3,227.6 L277.3,227.7 L277.3,224.2 L277.8,219.1 L278.6,214.0 L279.9,208.9 L281.5,203.8 L283.4,198.8 L285.8,193.8 L288.5,189.0 L291.6,184.1 L295.1,179.4 L298.9,174.8 L303.0,170.2 L307.5,165.8 L312.4,161.5 L317.5,157.3 L322.9,153.2 L328.7,149.3 L334.7,145.5 L341.0,141.9 L347.6,138.4 L354.5,135.1 L361.5,132.0 L368.8,129.1 L376.4,126.3 L384.1,123.8 L392.0,121.4 L400.1,119.3 L408.3,117.3 L416.7,115.5 L425.2,114.0 L433.7,112.7 L442.4,111.6 L451.2,110.7 L460.0,110.0 L468.9,109.6 L477.8,109.3 L486.7,109.3 L495.6,109.6 L504.4,110.0 L513.3,110.7 L522.0,111.6 L530.7,112.7 L539.3,114.0 L547.8,115.5 L556.2,117.3 L564.4,119.2 L572.5,121.4 L580.4,123.8 L588.1,126.3 L595.6,129.1 L602.9,132.0 L610.0,135.1 L616.9,138.4 L623.5,141.8 L629.8,145.5 L635.8,149.2 L641.6,153.2 L647.0,157.2 L652.2,161.4 L657.0,165.7 L661.5,170.2 L665.6,174.7 L669.5,179.3 L672.9,184.1 L676.0,188.9 L678.7,193.8 L681.1,198.7 L683.1,203.7 L684.7,208.8 L685.9,213.9 L686.8,219.0 L687.2,224.1 L687.3,227.7Z" fill="url(#g14)"/><path d="M279.3,227.6 L279.2,229.2 L279.6,234.3 L269.2,243.1 L268.8,237.7 L268.9,236.1Z" fill="#7b7669"/><path d="M279.2,229.2 L279.6,234.3 L280.3,239.3 L281.3,244.4 L282.8,249.4 L284.6,254.4 L286.8,259.3 L289.4,264.2 L292.3,269.0 L295.6,273.7 L299.3,278.3 L303.2,282.9 L307.6,287.3 L312.2,291.6 L317.2,295.8 L322.5,299.9 L328.1,303.8 L333.9,307.6 L340.1,311.2 L346.5,314.7 L353.2,318.1 L360.1,321.2 L367.3,324.2 L374.7,327.0 L382.2,329.6 L390.0,332.0 L397.9,334.2 L406.0,336.2 L414.3,338.0 L422.6,339.6 L431.1,341.0 L439.7,342.2 L448.3,343.1 L457.0,343.9 L465.8,344.4 L474.6,344.7 L483.4,344.8 L483.5,359.3 L474.2,359.2 L465.0,358.9 L455.8,358.3 L446.6,357.6 L437.5,356.6 L428.5,355.3 L419.6,353.9 L410.8,352.2 L402.1,350.3 L393.6,348.2 L385.3,345.8 L377.1,343.3 L369.1,340.6 L361.4,337.6 L353.9,334.5 L346.6,331.2 L339.6,327.7 L332.8,324.0 L326.3,320.2 L320.2,316.2 L314.3,312.1 L308.7,307.8 L303.5,303.4 L298.6,298.8 L294.1,294.2 L289.9,289.4 L286.0,284.5 L282.6,279.6 L279.5,274.5 L276.8,269.4 L274.5,264.2 L272.6,259.0 L271.0,253.7 L269.9,248.4 L269.2,243.1 L268.8,237.7Z" fill="url(#g16)"/><path d="M277.3,227.7 L277.3,229.3 L277.6,234.5 L269.2,243.1 L268.8,237.7 L268.9,236.1Z" fill="#7f7b6e"/><path d="M277.3,229.3 L277.6,234.5 L278.3,239.6 L279.4,244.7 L280.8,249.8 L282.7,254.8 L284.9,259.8 L287.5,264.7 L290.5,269.5 L293.8,274.3 L297.5,279.0 L301.5,283.6 L305.9,288.0 L310.6,292.4 L315.6,296.6 L320.9,300.7 L326.6,304.7 L332.5,308.5 L338.7,312.2 L345.2,315.7 L351.9,319.1 L358.9,322.3 L366.2,325.3 L373.6,328.1 L381.2,330.7 L389.1,333.2 L397.1,335.4 L405.3,337.4 L413.6,339.2 L422.0,340.9 L430.6,342.3 L439.3,343.5 L448.0,344.4 L456.8,345.2 L465.7,345.7 L474.5,346.0 L483.4,346.1 L483.5,359.3 L474.2,359.2 L465.0,358.9 L455.8,358.3 L446.6,357.6 L437.5,356.6 L428.5,355.3 L419.6,353.9 L410.8,352.2 L402.1,350.3 L393.6,348.2 L385.3,345.8 L377.1,343.3 L369.1,340.6 L361.4,337.6 L353.9,334.5 L346.6,331.2 L339.6,327.7 L332.8,324.0 L326.3,320.2 L320.2,316.2 L314.3,312.1 L308.7,307.8 L303.5,303.4 L298.6,298.8 L294.1,294.2 L289.9,289.4 L286.0,284.5 L282.6,279.6 L279.5,274.5 L276.8,269.4 L274.5,264.2 L272.6,259.0 L271.0,253.7 L269.9,248.4 L269.2,243.1 L268.8,237.7Z" fill="url(#g17)"/><path d="M275.4,228.2 L275.3,229.8 L275.7,235.0 L269.2,243.1 L268.8,237.7 L268.9,236.1Z" fill="#817d70"/><path d="M275.3,229.8 L275.7,235.0 L276.4,240.2 L277.5,245.3 L279.0,250.4 L280.8,255.5 L283.1,260.5 L285.7,265.5 L288.7,270.4 L292.0,275.2 L295.7,279.9 L299.8,284.5 L304.2,289.1 L309.0,293.5 L314.0,297.7 L319.4,301.9 L325.1,305.9 L331.1,309.8 L337.4,313.5 L343.9,317.0 L350.7,320.4 L357.8,323.6 L365.1,326.6 L372.6,329.5 L380.3,332.1 L388.2,334.6 L396.3,336.9 L404.6,338.9 L412.9,340.8 L421.5,342.4 L430.1,343.8 L438.9,345.0 L447.7,346.0 L456.6,346.7 L465.5,347.3 L474.5,347.6 L483.4,347.7 L483.5,359.3 L474.2,359.2 L465.0,358.9 L455.8,358.3 L446.6,357.6 L437.5,356.6 L428.5,355.3 L419.6,353.9 L410.8,352.2 L402.1,350.3 L393.6,348.2 L385.3,345.8 L377.1,343.3 L369.1,340.6 L361.4,337.6 L353.9,334.5 L346.6,331.2 L339.6,327.7 L332.8,324.0 L326.3,320.2 L320.2,316.2 L314.3,312.1 L308.7,307.8 L303.5,303.4 L298.6,298.8 L294.1,294.2 L289.9,289.4 L286.0,284.5 L282.6,279.6 L279.5,274.5 L276.8,269.4 L274.5,264.2 L272.6,259.0 L271.0,253.7 L269.9,248.4 L269.2,243.1 L268.8,237.7Z" fill="url(#g18)"/><path d="M273.9,228.8 L273.9,230.4 L274.2,235.6 L269.2,243.1 L268.8,237.7 L268.9,236.1Z" fill="#7a776b"/><path d="M273.9,230.4 L274.2,235.6 L274.9,240.8 L276.0,246.0 L277.5,251.2 L279.4,256.3 L281.7,261.3 L284.3,266.3 L287.3,271.3 L290.7,276.1 L294.4,280.9 L298.5,285.5 L303.0,290.1 L307.7,294.5 L312.8,298.8 L318.3,303.0 L324.0,307.0 L330.0,310.9 L336.3,314.7 L342.9,318.2 L349.8,321.7 L356.9,324.9 L364.2,327.9 L371.8,330.8 L379.6,333.5 L387.5,335.9 L395.7,338.2 L404.0,340.3 L412.5,342.1 L421.0,343.8 L429.7,345.2 L438.5,346.4 L447.4,347.4 L456.4,348.2 L465.4,348.7 L474.4,349.0 L483.5,349.1 L483.5,359.3 L474.2,359.2 L465.0,358.9 L455.8,358.3 L446.6,357.6 L437.5,356.6 L428.5,355.3 L419.6,353.9 L410.8,352.2 L402.1,350.3 L393.6,348.2 L385.3,345.8 L377.1,343.3 L369.1,340.6 L361.4,337.6 L353.9,334.5 L346.6,331.2 L339.6,327.7 L332.8,324.0 L326.3,320.2 L320.2,316.2 L314.3,312.1 L308.7,307.8 L303.5,303.4 L298.6,298.8 L294.1,294.2 L289.9,289.4 L286.0,284.5 L282.6,279.6 L279.5,274.5 L276.8,269.4 L274.5,264.2 L272.6,259.0 L271.0,253.7 L269.9,248.4 L269.2,243.1 L268.8,237.7Z" fill="url(#g19)"/><path d="M273.3,229.1 L273.3,230.7 L273.6,236.0 L269.2,243.1 L268.8,237.7 L268.9,236.1Z" fill="#6d695e"/><path d="M273.3,230.7 L273.6,236.0 L274.3,241.2 L275.4,246.4 L276.9,251.6 L278.8,256.7 L281.1,261.8 L283.7,266.8 L286.7,271.7 L290.1,276.6 L293.9,281.3 L298.0,286.0 L302.4,290.6 L307.2,295.0 L312.3,299.4 L317.8,303.5 L323.5,307.6 L329.6,311.5 L335.9,315.2 L342.5,318.8 L349.4,322.2 L356.5,325.5 L363.9,328.6 L371.5,331.4 L379.3,334.1 L387.3,336.6 L395.4,338.9 L403.8,340.9 L412.3,342.8 L420.9,344.4 L429.6,345.9 L438.4,347.1 L447.3,348.1 L456.3,348.8 L465.3,349.4 L474.4,349.7 L483.5,349.8 L483.5,359.3 L474.2,359.2 L465.0,358.9 L455.8,358.3 L446.6,357.6 L437.5,356.6 L428.5,355.3 L419.6,353.9 L410.8,352.2 L402.1,350.3 L393.6,348.2 L385.3,345.8 L377.1,343.3 L369.1,340.6 L361.4,337.6 L353.9,334.5 L346.6,331.2 L339.6,327.7 L332.8,324.0 L326.3,320.2 L320.2,316.2 L314.3,312.1 L308.7,307.8 L303.5,303.4 L298.6,298.8 L294.1,294.2 L289.9,289.4 L286.0,284.5 L282.6,279.6 L279.5,274.5 L276.8,269.4 L274.5,264.2 L272.6,259.0 L271.0,253.7 L269.9,248.4 L269.2,243.1 L268.8,237.7Z" fill="url(#g20)"/><path d="M272.8,229.4 L272.8,231.1 L273.1,236.3 L269.2,243.1 L268.8,237.7 L268.9,236.1Z" fill="#68645a"/><path d="M272.8,231.1 L273.1,236.3 L273.8,241.5 L274.9,246.8 L276.4,251.9 L278.3,257.1 L280.6,262.2 L283.2,267.2 L286.3,272.1 L289.7,277.0 L293.4,281.8 L297.5,286.5 L302.0,291.0 L306.8,295.5 L311.9,299.8 L317.4,304.0 L323.1,308.1 L329.2,312.0 L335.6,315.8 L342.2,319.4 L349.1,322.8 L356.2,326.0 L363.6,329.1 L371.2,332.0 L379.0,334.7 L387.0,337.2 L395.2,339.4 L403.6,341.5 L412.1,343.4 L420.7,345.0 L429.5,346.5 L438.3,347.7 L447.2,348.7 L456.2,349.4 L465.3,350.0 L474.4,350.3 L483.5,350.4 L483.5,359.3 L474.2,359.2 L465.0,358.9 L455.8,358.3 L446.6,357.6 L437.5,356.6 L428.5,355.3 L419.6,353.9 L410.8,352.2 L402.1,350.3 L393.6,348.2 L385.3,345.8 L377.1,343.3 L369.1,340.6 L361.4,337.6 L353.9,334.5 L346.6,331.2 L339.6,327.7 L332.8,324.0 L326.3,320.2 L320.2,316.2 L314.3,312.1 L308.7,307.8 L303.5,303.4 L298.6,298.8 L294.1,294.2 L289.9,289.4 L286.0,284.5 L282.6,279.6 L279.5,274.5 L276.8,269.4 L274.5,264.2 L272.6,259.0 L271.0,253.7 L269.9,248.4 L269.2,243.1 L268.8,237.7Z" fill="url(#g21)"/><path d="M272.3,229.7 L272.3,231.4 L272.6,236.7 L269.2,243.1 L268.8,237.7 L268.9,236.1Z" fill="#676459"/><path d="M272.3,231.4 L272.6,236.7 L273.3,241.9 L274.4,247.1 L275.9,252.3 L277.8,257.5 L280.1,262.6 L282.8,267.6 L285.8,272.6 L289.2,277.4 L293.0,282.2 L297.1,286.9 L301.6,291.5 L306.4,296.0 L311.5,300.3 L317.0,304.5 L322.8,308.6 L328.9,312.5 L335.2,316.3 L341.9,319.9 L348.8,323.3 L355.9,326.6 L363.3,329.7 L371.0,332.6 L378.8,335.2 L386.8,337.7 L395.0,340.0 L403.4,342.1 L411.9,344.0 L420.6,345.6 L429.3,347.1 L438.2,348.3 L447.2,349.3 L456.2,350.1 L465.2,350.6 L474.3,350.9 L483.5,351.0 L483.5,359.3 L474.2,359.2 L465.0,358.9 L455.8,358.3 L446.6,357.6 L437.5,356.6 L428.5,355.3 L419.6,353.9 L410.8,352.2 L402.1,350.3 L393.6,348.2 L385.3,345.8 L377.1,343.3 L369.1,340.6 L361.4,337.6 L353.9,334.5 L346.6,331.2 L339.6,327.7 L332.8,324.0 L326.3,320.2 L320.2,316.2 L314.3,312.1 L308.7,307.8 L303.5,303.4 L298.6,298.8 L294.1,294.2 L289.9,289.4 L286.0,284.5 L282.6,279.6 L279.5,274.5 L276.8,269.4 L274.5,264.2 L272.6,259.0 L271.0,253.7 L269.9,248.4 L269.2,243.1 L268.8,237.7Z" fill="url(#g22)"/><path d="M271.8,230.1 L271.8,231.8 L272.1,237.0 L269.2,243.1 L268.8,237.7 L268.9,236.1Z" fill="#676459"/><path d="M271.8,231.8 L272.1,237.0 L272.9,242.3 L274.0,247.5 L275.5,252.7 L277.4,257.9 L279.7,263.0 L282.3,268.0 L285.4,273.0 L288.8,277.9 L292.6,282.7 L296.7,287.4 L301.2,292.0 L306.0,296.5 L311.2,300.8 L316.6,305.1 L322.4,309.1 L328.5,313.1 L334.9,316.9 L341.6,320.5 L348.5,323.9 L355.7,327.2 L363.1,330.2 L370.7,333.1 L378.6,335.8 L386.6,338.3 L394.8,340.6 L403.2,342.7 L411.8,344.6 L420.4,346.3 L429.2,347.7 L438.1,348.9 L447.1,349.9 L456.1,350.7 L465.2,351.2 L474.3,351.5 L483.5,351.6 L483.5,359.3 L474.2,359.2 L465.0,358.9 L455.8,358.3 L446.6,357.6 L437.5,356.6 L428.5,355.3 L419.6,353.9 L410.8,352.2 L402.1,350.3 L393.6,348.2 L385.3,345.8 L377.1,343.3 L369.1,340.6 L361.4,337.6 L353.9,334.5 L346.6,331.2 L339.6,327.7 L332.8,324.0 L326.3,320.2 L320.2,316.2 L314.3,312.1 L308.7,307.8 L303.5,303.4 L298.6,298.8 L294.1,294.2 L289.9,289.4 L286.0,284.5 L282.6,279.6 L279.5,274.5 L276.8,269.4 L274.5,264.2 L272.6,259.0 L271.0,253.7 L269.9,248.4 L269.2,243.1 L268.8,237.7Z" fill="url(#g23)"/><path d="M271.4,230.5 L271.4,232.2 L271.7,237.4 L269.2,243.1 L268.8,237.7 L268.9,236.1Z" fill="#706f67"/><path d="M271.4,232.2 L271.7,237.4 L272.4,242.7 L273.6,247.9 L275.1,253.2 L277.0,258.3 L279.3,263.4 L281.9,268.5 L285.0,273.5 L288.4,278.4 L292.2,283.2 L296.3,287.9 L300.8,292.5 L305.6,297.0 L310.8,301.4 L316.3,305.6 L322.1,309.7 L328.2,313.6 L334.6,317.4 L341.3,321.0 L348.2,324.5 L355.4,327.7 L362.8,330.8 L370.5,333.7 L378.4,336.4 L386.4,338.9 L394.7,341.2 L403.1,343.3 L411.6,345.2 L420.3,346.9 L429.1,348.3 L438.0,349.5 L447.0,350.5 L456.1,351.3 L465.2,351.8 L474.3,352.2 L483.5,352.2 L483.5,359.3 L474.2,359.2 L465.0,358.9 L455.8,358.3 L446.6,357.6 L437.5,356.6 L428.5,355.3 L419.6,353.9 L410.8,352.2 L402.1,350.3 L393.6,348.2 L385.3,345.8 L377.1,343.3 L369.1,340.6 L361.4,337.6 L353.9,334.5 L346.6,331.2 L339.6,327.7 L332.8,324.0 L326.3,320.2 L320.2,316.2 L314.3,312.1 L308.7,307.8 L303.5,303.4 L298.6,298.8 L294.1,294.2 L289.9,289.4 L286.0,284.5 L282.6,279.6 L279.5,274.5 L276.8,269.4 L274.5,264.2 L272.6,259.0 L271.0,253.7 L269.9,248.4 L269.2,243.1 L268.8,237.7Z" fill="url(#g24)"/><path d="M270.8,231.1 L270.8,232.7 L271.2,238.0 L269.2,243.1 L268.8,237.7 L268.9,236.1Z" fill="#7e7e79"/><path d="M270.8,232.7 L271.2,238.0 L271.9,243.3 L273.0,248.6 L274.5,253.8 L276.4,259.0 L278.7,264.1 L281.4,269.2 L284.4,274.2 L287.9,279.1 L291.7,283.9 L295.8,288.7 L300.3,293.3 L305.2,297.8 L310.3,302.1 L315.9,306.4 L321.7,310.5 L327.8,314.4 L334.2,318.2 L340.9,321.9 L347.9,325.3 L355.1,328.6 L362.5,331.7 L370.2,334.6 L378.1,337.3 L386.2,339.8 L394.4,342.1 L402.9,344.2 L411.4,346.1 L420.1,347.8 L429.0,349.2 L437.9,350.4 L446.9,351.4 L456.0,352.2 L465.1,352.8 L474.3,353.1 L483.5,353.2 L483.5,359.3 L474.2,359.2 L465.0,358.9 L455.8,358.3 L446.6,357.6 L437.5,356.6 L428.5,355.3 L419.6,353.9 L410.8,352.2 L402.1,350.3 L393.6,348.2 L385.3,345.8 L377.1,343.3 L369.1,340.6 L361.4,337.6 L353.9,334.5 L346.6,331.2 L339.6,327.7 L332.8,324.0 L326.3,320.2 L320.2,316.2 L314.3,312.1 L308.7,307.8 L303.5,303.4 L298.6,298.8 L294.1,294.2 L289.9,289.4 L286.0,284.5 L282.6,279.6 L279.5,274.5 L276.8,269.4 L274.5,264.2 L272.6,259.0 L271.0,253.7 L269.9,248.4 L269.2,243.1 L268.8,237.7Z" fill="url(#g25)"/><path d="M270.3,231.8 L270.2,233.5 L270.6,238.8 L269.2,243.1 L268.8,237.7 L268.9,236.1Z" fill="#80807c"/><path d="M270.2,233.5 L270.6,238.8 L271.3,244.1 L272.4,249.4 L273.9,254.6 L275.8,259.8 L278.1,265.0 L280.8,270.0 L283.9,275.1 L287.3,280.0 L291.1,284.8 L295.3,289.6 L299.8,294.2 L304.7,298.7 L309.9,303.1 L315.4,307.3 L321.2,311.5 L327.4,315.4 L333.8,319.2 L340.5,322.9 L347.5,326.3 L354.7,329.6 L362.2,332.7 L369.9,335.6 L377.8,338.3 L385.9,340.9 L394.2,343.2 L402.6,345.3 L411.2,347.2 L420.0,348.8 L428.8,350.3 L437.8,351.5 L446.8,352.5 L455.9,353.3 L465.1,353.8 L474.3,354.2 L483.5,354.2 L483.5,359.3 L474.2,359.2 L465.0,358.9 L455.8,358.3 L446.6,357.6 L437.5,356.6 L428.5,355.3 L419.6,353.9 L410.8,352.2 L402.1,350.3 L393.6,348.2 L385.3,345.8 L377.1,343.3 L369.1,340.6 L361.4,337.6 L353.9,334.5 L346.6,331.2 L339.6,327.7 L332.8,324.0 L326.3,320.2 L320.2,316.2 L314.3,312.1 L308.7,307.8 L303.5,303.4 L298.6,298.8 L294.1,294.2 L289.9,289.4 L286.0,284.5 L282.6,279.6 L279.5,274.5 L276.8,269.4 L274.5,264.2 L272.6,259.0 L271.0,253.7 L269.9,248.4 L269.2,243.1 L268.8,237.7Z" fill="url(#g26)"/><path d="M269.8,232.5 L269.8,234.1 L270.1,239.5 L269.2,243.1 L268.8,237.7 L268.9,236.1Z" fill="#83837f"/><path d="M269.8,234.1 L270.1,239.5 L270.9,244.8 L272.0,250.1 L273.5,255.3 L275.4,260.5 L277.7,265.7 L280.4,270.8 L283.5,275.8 L286.9,280.7 L290.7,285.6 L294.9,290.3 L299.4,295.0 L304.3,299.5 L309.5,303.9 L315.1,308.1 L320.9,312.3 L327.0,316.2 L333.5,320.0 L340.2,323.7 L347.2,327.2 L354.5,330.5 L361.9,333.6 L369.6,336.5 L377.6,339.2 L385.7,341.7 L394.0,344.1 L402.5,346.2 L411.1,348.1 L419.8,349.7 L428.7,351.2 L437.7,352.4 L446.7,353.4 L455.9,354.2 L465.0,354.7 L474.3,355.1 L483.5,355.1 L483.5,359.3 L474.2,359.2 L465.0,358.9 L455.8,358.3 L446.6,357.6 L437.5,356.6 L428.5,355.3 L419.6,353.9 L410.8,352.2 L402.1,350.3 L393.6,348.2 L385.3,345.8 L377.1,343.3 L369.1,340.6 L361.4,337.6 L353.9,334.5 L346.6,331.2 L339.6,327.7 L332.8,324.0 L326.3,320.2 L320.2,316.2 L314.3,312.1 L308.7,307.8 L303.5,303.4 L298.6,298.8 L294.1,294.2 L289.9,289.4 L286.0,284.5 L282.6,279.6 L279.5,274.5 L276.8,269.4 L274.5,264.2 L272.6,259.0 L271.0,253.7 L269.9,248.4 L269.2,243.1 L268.8,237.7Z" fill="url(#g27)"/><path d="M269.5,233.1 L269.5,234.8 L269.8,240.2 L269.2,243.1 L268.8,237.7 L268.9,236.1Z" fill="#82827e"/><path d="M269.5,234.8 L269.8,240.2 L270.5,245.5 L271.6,250.8 L273.2,256.0 L275.1,261.3 L277.4,266.4 L280.1,271.5 L283.2,276.5 L286.6,281.5 L290.4,286.4 L294.6,291.1 L299.1,295.8 L304.0,300.3 L309.2,304.7 L314.8,309.0 L320.6,313.1 L326.8,317.1 L333.2,320.9 L340.0,324.5 L347.0,328.0 L354.2,331.3 L361.7,334.4 L369.5,337.3 L377.4,340.1 L385.5,342.6 L393.9,344.9 L402.3,347.0 L411.0,348.9 L419.7,350.6 L428.6,352.1 L437.6,353.3 L446.7,354.3 L455.8,355.1 L465.0,355.6 L474.2,355.9 L483.5,356.0 L483.5,359.3 L474.2,359.2 L465.0,358.9 L455.8,358.3 L446.6,357.6 L437.5,356.6 L428.5,355.3 L419.6,353.9 L410.8,352.2 L402.1,350.3 L393.6,348.2 L385.3,345.8 L377.1,343.3 L369.1,340.6 L361.4,337.6 L353.9,334.5 L346.6,331.2 L339.6,327.7 L332.8,324.0 L326.3,320.2 L320.2,316.2 L314.3,312.1 L308.7,307.8 L303.5,303.4 L298.6,298.8 L294.1,294.2 L289.9,289.4 L286.0,284.5 L282.6,279.6 L279.5,274.5 L276.8,269.4 L274.5,264.2 L272.6,259.0 L271.0,253.7 L269.9,248.4 L269.2,243.1 L268.8,237.7Z" fill="url(#g28)"/><path d="M269.1,234.4 L269.0,236.1 L269.4,241.5 L269.2,243.1 L268.8,237.7 L268.9,236.1Z" fill="#7e7e79"/><path d="M269.0,236.1 L269.4,241.5 L270.1,246.8 L271.2,252.1 L272.7,257.4 L274.7,262.6 L277.0,267.8 L279.7,272.9 L282.8,277.9 L286.2,282.9 L290.0,287.7 L294.2,292.5 L298.8,297.2 L303.7,301.7 L308.9,306.1 L314.4,310.4 L320.3,314.5 L326.5,318.5 L332.9,322.3 L339.7,326.0 L346.7,329.5 L354.0,332.8 L361.5,335.9 L369.2,338.8 L377.2,341.6 L385.3,344.1 L393.7,346.4 L402.2,348.5 L410.8,350.4 L419.6,352.1 L428.5,353.6 L437.5,354.8 L446.6,355.8 L455.8,356.6 L465.0,357.2 L474.2,357.5 L483.5,357.6 L483.5,359.3 L474.2,359.2 L465.0,358.9 L455.8,358.3 L446.6,357.6 L437.5,356.6 L428.5,355.3 L419.6,353.9 L410.8,352.2 L402.1,350.3 L393.6,348.2 L385.3,345.8 L377.1,343.3 L369.1,340.6 L361.4,337.6 L353.9,334.5 L346.6,331.2 L339.6,327.7 L332.8,324.0 L326.3,320.2 L320.2,316.2 L314.3,312.1 L308.7,307.8 L303.5,303.4 L298.6,298.8 L294.1,294.2 L289.9,289.4 L286.0,284.5 L282.6,279.6 L279.5,274.5 L276.8,269.4 L274.5,264.2 L272.6,259.0 L271.0,253.7 L269.9,248.4 L269.2,243.1 L268.8,237.7Z" fill="url(#g29)"/><path d="M483.4,344.8 L487.7,344.9 L492.0,345.1 L496.3,345.5 L500.5,346.0 L504.6,346.8 L508.7,347.6 L512.6,348.6 L516.4,349.8 L520.1,351.1 L523.6,352.6 L527.0,354.2 L530.1,355.9 L522.8,368.6 L520.1,367.2 L517.3,365.9 L514.3,364.6 L511.3,363.5 L508.1,362.5 L504.7,361.7 L501.3,361.0 L497.9,360.4 L494.3,359.9 L490.7,359.5 L487.1,359.4 L483.5,359.3Z" fill="url(#g31)"/><path d="M483.4,346.1 L487.6,346.2 L491.8,346.4 L495.9,346.8 L500.0,347.3 L504.0,348.0 L507.9,348.8 L511.8,349.8 L515.5,351.0 L519.0,352.2 L522.4,353.6 L525.7,355.2 L528.7,356.8 L522.8,368.6 L520.1,367.2 L517.3,365.9 L514.3,364.6 L511.3,363.5 L508.1,362.5 L504.7,361.7 L501.3,361.0 L497.9,360.4 L494.3,359.9 L490.7,359.5 L487.1,359.4 L483.5,359.3Z" fill="url(#g32)"/><path d="M483.4,347.7 L487.5,347.7 L491.5,347.9 L495.6,348.3 L499.5,348.8 L503.4,349.5 L507.2,350.3 L510.9,351.3 L514.5,352.4 L518.0,353.6 L521.3,355.0 L524.4,356.5 L527.4,358.1 L522.8,368.6 L520.1,367.2 L517.3,365.9 L514.3,364.6 L511.3,363.5 L508.1,362.5 L504.7,361.7 L501.3,361.0 L497.9,360.4 L494.3,359.9 L490.7,359.5 L487.1,359.4 L483.5,359.3Z" fill="url(#g33)"/><path d="M483.5,349.1 L487.4,349.2 L491.4,349.4 L495.3,349.7 L499.1,350.2 L502.9,350.9 L506.7,351.7 L510.3,352.6 L513.8,353.7 L517.1,354.9 L520.4,356.3 L523.4,357.7 L526.3,359.3 L522.8,368.6 L520.1,367.2 L517.3,365.9 L514.3,364.6 L511.3,363.5 L508.1,362.5 L504.7,361.7 L501.3,361.0 L497.9,360.4 L494.3,359.9 L490.7,359.5 L487.1,359.4 L483.5,359.3Z" fill="url(#g34)"/><path d="M483.5,349.8 L487.4,349.8 L491.3,350.0 L495.2,350.4 L499.0,350.9 L502.7,351.6 L506.4,352.4 L510.0,353.3 L513.5,354.3 L516.8,355.5 L520.0,356.9 L523.0,358.3 L525.9,359.8 L522.8,368.6 L520.1,367.2 L517.3,365.9 L514.3,364.6 L511.3,363.5 L508.1,362.5 L504.7,361.7 L501.3,361.0 L497.9,360.4 L494.3,359.9 L490.7,359.5 L487.1,359.4 L483.5,359.3Z" fill="url(#g35)"/><path d="M483.5,350.4 L487.3,350.4 L491.2,350.6 L495.1,351.0 L498.9,351.5 L502.6,352.1 L506.2,352.9 L509.8,353.9 L513.2,354.9 L516.5,356.1 L519.7,357.4 L522.7,358.8 L525.5,360.4 L522.8,368.6 L520.1,367.2 L517.3,365.9 L514.3,364.6 L511.3,363.5 L508.1,362.5 L504.7,361.7 L501.3,361.0 L497.9,360.4 L494.3,359.9 L490.7,359.5 L487.1,359.4 L483.5,359.3Z" fill="url(#g36)"/><path d="M483.5,351.0 L487.3,351.1 L491.2,351.3 L495.0,351.6 L498.7,352.1 L502.4,352.7 L506.0,353.5 L509.6,354.4 L513.0,355.5 L516.3,356.7 L519.4,358.0 L522.4,359.4 L525.2,360.9 L522.8,368.6 L520.1,367.2 L517.3,365.9 L514.3,364.6 L511.3,363.5 L508.1,362.5 L504.7,361.7 L501.3,361.0 L497.9,360.4 L494.3,359.9 L490.7,359.5 L487.1,359.4 L483.5,359.3Z" fill="url(#g37)"/><path d="M483.5,351.6 L487.3,351.7 L491.1,351.9 L494.9,352.2 L498.6,352.7 L502.3,353.4 L505.9,354.1 L509.4,355.0 L512.7,356.1 L516.0,357.2 L519.1,358.5 L522.1,359.9 L524.9,361.4 L522.8,368.6 L520.1,367.2 L517.3,365.9 L514.3,364.6 L511.3,363.5 L508.1,362.5 L504.7,361.7 L501.3,361.0 L497.9,360.4 L494.3,359.9 L490.7,359.5 L487.1,359.4 L483.5,359.3Z" fill="url(#g38)"/><path d="M483.5,352.2 L487.3,352.3 L491.1,352.5 L494.8,352.9 L498.5,353.3 L502.1,354.0 L505.7,354.7 L509.2,355.6 L512.5,356.7 L515.8,357.8 L518.9,359.1 L521.8,360.5 L524.6,362.0 L522.8,368.6 L520.1,367.2 L517.3,365.9 L514.3,364.6 L511.3,363.5 L508.1,362.5 L504.7,361.7 L501.3,361.0 L497.9,360.4 L494.3,359.9 L490.7,359.5 L487.1,359.4 L483.5,359.3Z" fill="url(#g39)"/><path d="M483.5,353.2 L487.2,353.2 L491.0,353.4 L494.7,353.8 L498.4,354.2 L502.0,354.9 L505.5,355.6 L508.9,356.5 L512.2,357.5 L515.4,358.7 L518.5,359.9 L521.4,361.3 L524.2,362.8 L522.8,368.6 L520.1,367.2 L517.3,365.9 L514.3,364.6 L511.3,363.5 L508.1,362.5 L504.7,361.7 L501.3,361.0 L497.9,360.4 L494.3,359.9 L490.7,359.5 L487.1,359.4 L483.5,359.3Z" fill="url(#g40)"/><path d="M483.5,354.2 L487.2,354.3 L490.9,354.5 L494.6,354.8 L498.2,355.3 L501.8,355.9 L505.3,356.7 L508.7,357.6 L512.0,358.6 L515.1,359.7 L518.1,361.0 L521.0,362.3 L523.7,363.8 L522.8,368.6 L520.1,367.2 L517.3,365.9 L514.3,364.6 L511.3,363.5 L508.1,362.5 L504.7,361.7 L501.3,361.0 L497.9,360.4 L494.3,359.9 L490.7,359.5 L487.1,359.4 L483.5,359.3Z" fill="url(#g41)"/><path d="M483.5,355.1 L487.2,355.2 L490.9,355.4 L494.5,355.7 L498.1,356.2 L501.6,356.8 L505.1,357.6 L508.5,358.4 L511.7,359.4 L514.9,360.6 L517.9,361.8 L520.8,363.2 L523.5,364.6 L522.8,368.6 L520.1,367.2 L517.3,365.9 L514.3,364.6 L511.3,363.5 L508.1,362.5 L504.7,361.7 L501.3,361.0 L497.9,360.4 L494.3,359.9 L490.7,359.5 L487.1,359.4 L483.5,359.3Z" fill="url(#g42)"/><path d="M483.5,356.0 L487.2,356.1 L490.8,356.3 L494.4,356.6 L498.0,357.1 L501.5,357.7 L505.0,358.4 L508.3,359.3 L511.6,360.3 L514.7,361.4 L517.7,362.7 L520.5,364.0 L523.2,365.5 L522.8,368.6 L520.1,367.2 L517.3,365.9 L514.3,364.6 L511.3,363.5 L508.1,362.5 L504.7,361.7 L501.3,361.0 L497.9,360.4 L494.3,359.9 L490.7,359.5 L487.1,359.4 L483.5,359.3Z" fill="url(#g43)"/><path d="M483.5,357.6 L487.1,357.6 L490.8,357.8 L494.4,358.2 L497.9,358.6 L501.4,359.2 L504.8,360.0 L508.1,360.8 L511.4,361.8 L514.5,362.9 L517.4,364.1 L520.2,365.5 L522.9,366.9 L522.8,368.6 L520.1,367.2 L517.3,365.9 L514.3,364.6 L511.3,363.5 L508.1,362.5 L504.7,361.7 L501.3,361.0 L497.9,360.4 L494.3,359.9 L490.7,359.5 L487.1,359.4 L483.5,359.3Z" fill="url(#g44)"/><path d="M530.1,355.9 L593.1,392.2 L656.1,428.6 L719.0,464.9 L782.0,501.3 L845.0,537.6 L907.9,574.0 L970.9,610.3 L1033.9,646.7 L1026.5,659.5 L963.5,623.1 L900.6,586.7 L837.6,550.4 L774.6,514.0 L711.7,477.7 L648.7,441.3 L585.7,405.0 L522.8,368.6Z" fill="url(#g46)"/><path d="M528.7,356.8 L591.7,393.2 L654.7,429.5 L717.6,465.9 L780.6,502.3 L843.6,538.6 L906.5,575.0 L969.5,611.3 L1032.5,647.7 L1026.5,659.5 L963.5,623.1 L900.6,586.7 L837.6,550.4 L774.6,514.0 L711.7,477.7 L648.7,441.3 L585.7,405.0 L522.8,368.6Z" fill="url(#g47)"/><path d="M527.4,358.1 L590.3,394.4 L653.3,430.8 L716.3,467.1 L779.2,503.5 L842.2,539.8 L905.2,576.2 L968.1,612.6 L1031.1,648.9 L1026.5,659.5 L963.5,623.1 L900.6,586.7 L837.6,550.4 L774.6,514.0 L711.7,477.7 L648.7,441.3 L585.7,405.0 L522.8,368.6Z" fill="url(#g48)"/><path d="M526.3,359.3 L589.3,395.6 L652.3,432.0 L715.2,468.3 L778.2,504.7 L841.2,541.0 L904.1,577.4 L967.1,613.7 L1030.1,650.1 L1026.5,659.5 L963.5,623.1 L900.6,586.7 L837.6,550.4 L774.6,514.0 L711.7,477.7 L648.7,441.3 L585.7,405.0 L522.8,368.6Z" fill="url(#g49)"/><path d="M525.9,359.8 L588.9,396.2 L651.8,432.5 L714.8,468.9 L777.8,505.3 L840.7,541.6 L903.7,578.0 L966.7,614.3 L1029.6,650.7 L1026.5,659.5 L963.5,623.1 L900.6,586.7 L837.6,550.4 L774.6,514.0 L711.7,477.7 L648.7,441.3 L585.7,405.0 L522.8,368.6Z" fill="url(#g50)"/><path d="M525.5,360.4 L588.5,396.7 L651.5,433.1 L714.4,469.4 L777.4,505.8 L840.4,542.1 L903.3,578.5 L966.3,614.8 L1029.3,651.2 L1026.5,659.5 L963.5,623.1 L900.6,586.7 L837.6,550.4 L774.6,514.0 L711.7,477.7 L648.7,441.3 L585.7,405.0 L522.8,368.6Z" fill="url(#g51)"/><path d="M525.2,360.9 L588.2,397.2 L651.1,433.6 L714.1,470.0 L777.1,506.3 L840.0,542.7 L903.0,579.0 L966.0,615.4 L1028.9,651.7 L1026.5,659.5 L963.5,623.1 L900.6,586.7 L837.6,550.4 L774.6,514.0 L711.7,477.7 L648.7,441.3 L585.7,405.0 L522.8,368.6Z" fill="url(#g52)"/><path d="M524.9,361.4 L587.8,397.8 L650.8,434.1 L713.8,470.5 L776.7,506.9 L839.7,543.2 L902.7,579.6 L965.6,615.9 L1028.6,652.3 L1026.5,659.5 L963.5,623.1 L900.6,586.7 L837.6,550.4 L774.6,514.0 L711.7,477.7 L648.7,441.3 L585.7,405.0 L522.8,368.6Z" fill="url(#g53)"/><path d="M524.6,362.0 L587.5,398.4 L650.5,434.7 L713.5,471.1 L776.4,507.4 L839.4,543.8 L902.4,580.1 L965.3,616.5 L1028.3,652.8 L1026.5,659.5 L963.5,623.1 L900.6,586.7 L837.6,550.4 L774.6,514.0 L711.7,477.7 L648.7,441.3 L585.7,405.0 L522.8,368.6Z" fill="url(#g54)"/><path d="M524.2,362.8 L587.1,399.2 L650.1,435.5 L713.1,471.9 L776.0,508.2 L839.0,544.6 L902.0,580.9 L964.9,617.3 L1027.9,653.6 L1026.5,659.5 L963.5,623.1 L900.6,586.7 L837.6,550.4 L774.6,514.0 L711.7,477.7 L648.7,441.3 L585.7,405.0 L522.8,368.6Z" fill="url(#g55)"/><path d="M523.7,363.8 L586.7,400.2 L649.7,436.5 L712.6,472.9 L775.6,509.2 L838.6,545.6 L901.6,581.9 L964.5,618.3 L1027.5,654.6 L1026.5,659.5 L963.5,623.1 L900.6,586.7 L837.6,550.4 L774.6,514.0 L711.7,477.7 L648.7,441.3 L585.7,405.0 L522.8,368.6Z" fill="url(#g56)"/><path d="M523.5,364.6 L586.4,401.0 L649.4,437.3 L712.4,473.7 L775.3,510.0 L838.3,546.4 L901.3,582.8 L964.2,619.1 L1027.2,655.5 L1026.5,659.5 L963.5,623.1 L900.6,586.7 L837.6,550.4 L774.6,514.0 L711.7,477.7 L648.7,441.3 L585.7,405.0 L522.8,368.6Z" fill="url(#g57)"/><path d="M523.2,365.5 L586.2,401.8 L649.1,438.2 L712.1,474.5 L775.1,510.9 L838.0,547.2 L901.0,583.6 L964.0,619.9 L1026.9,656.3 L1026.5,659.5 L963.5,623.1 L900.6,586.7 L837.6,550.4 L774.6,514.0 L711.7,477.7 L648.7,441.3 L585.7,405.0 L522.8,368.6Z" fill="url(#g58)"/><path d="M522.9,366.9 L585.9,403.3 L648.8,439.6 L711.8,476.0 L774.8,512.3 L837.7,548.7 L900.7,585.0 L963.7,621.4 L1026.6,657.8 L1026.5,659.5 L963.5,623.1 L900.6,586.7 L837.6,550.4 L774.6,514.0 L711.7,477.7 L648.7,441.3 L585.7,405.0 L522.8,368.6Z" fill="url(#g59)"/><path d="M1033.9,646.7 L1037.4,648.6 L1041.1,650.5 L1044.9,652.2 L1048.9,653.8 L1053.1,655.3 L1057.3,656.6 L1061.7,657.9 L1066.2,659.0 L1070.7,660.0 L1075.4,660.8 L1080.1,661.5 L1084.9,662.1 L1089.7,662.5 L1094.5,662.8 L1099.4,662.9 L1104.3,662.9 L1109.1,662.8 L1114.0,662.5 L1118.8,662.1 L1123.6,661.5 L1128.3,660.8 L1132.9,660.0 L1137.5,659.0 L1142.0,657.9 L1146.4,656.6 L1150.6,655.3 L1154.8,653.8 L1158.7,652.2 L1162.6,650.5 L1166.3,648.6 L1169.8,646.7 L1177.2,659.5 L1173.3,661.6 L1169.2,663.6 L1164.9,665.5 L1160.5,667.3 L1155.9,669.0 L1151.2,670.5 L1146.3,671.8 L1141.4,673.1 L1136.3,674.2 L1131.2,675.1 L1125.9,675.9 L1120.6,676.5 L1115.3,677.0 L1109.9,677.3 L1104.5,677.4 L1099.1,677.4 L1093.8,677.3 L1088.4,677.0 L1083.0,676.5 L1077.8,675.9 L1072.5,675.1 L1067.4,674.2 L1062.3,673.1 L1057.4,671.8 L1052.5,670.5 L1047.8,669.0 L1043.2,667.3 L1038.8,665.5 L1034.5,663.6 L1030.4,661.6 L1026.5,659.5Z" fill="url(#g61)"/><path d="M1032.5,647.7 L1036.1,649.6 L1039.8,651.5 L1043.8,653.3 L1047.8,654.9 L1052.1,656.4 L1056.4,657.8 L1060.9,659.1 L1065.4,660.2 L1070.1,661.2 L1074.8,662.1 L1079.7,662.8 L1084.5,663.4 L1089.4,663.8 L1094.4,664.1 L1099.4,664.2 L1104.3,664.2 L1109.3,664.1 L1114.2,663.8 L1119.2,663.4 L1124.0,662.8 L1128.8,662.1 L1133.6,661.2 L1138.2,660.2 L1142.8,659.1 L1147.3,657.8 L1151.6,656.4 L1155.8,654.9 L1159.9,653.3 L1163.9,651.5 L1167.6,649.6 L1171.2,647.7 L1177.2,659.5 L1173.3,661.6 L1169.2,663.6 L1164.9,665.5 L1160.5,667.3 L1155.9,669.0 L1151.2,670.5 L1146.3,671.8 L1141.4,673.1 L1136.3,674.2 L1131.2,675.1 L1125.9,675.9 L1120.6,676.5 L1115.3,677.0 L1109.9,677.3 L1104.5,677.4 L1099.1,677.4 L1093.8,677.3 L1088.4,677.0 L1083.0,676.5 L1077.8,675.9 L1072.5,675.1 L1067.4,674.2 L1062.3,673.1 L1057.4,671.8 L1052.5,670.5 L1047.8,669.0 L1043.2,667.3 L1038.8,665.5 L1034.5,663.6 L1030.4,661.6 L1026.5,659.5Z" fill="url(#g62)"/><path d="M1031.1,648.9 L1034.8,650.9 L1038.6,652.8 L1042.6,654.6 L1046.8,656.3 L1051.1,657.8 L1055.5,659.3 L1060.1,660.6 L1064.7,661.7 L1069.5,662.7 L1074.3,663.6 L1079.2,664.3 L1084.2,664.9 L1089.2,665.4 L1094.2,665.7 L1099.3,665.8 L1104.4,665.8 L1109.4,665.7 L1114.5,665.4 L1119.5,664.9 L1124.5,664.3 L1129.4,663.6 L1134.2,662.7 L1139.0,661.7 L1143.6,660.6 L1148.2,659.3 L1152.6,657.8 L1156.9,656.3 L1161.1,654.6 L1165.1,652.8 L1168.9,650.9 L1172.6,648.9 L1177.2,659.5 L1173.3,661.6 L1169.2,663.6 L1164.9,665.5 L1160.5,667.3 L1155.9,669.0 L1151.2,670.5 L1146.3,671.8 L1141.4,673.1 L1136.3,674.2 L1131.2,675.1 L1125.9,675.9 L1120.6,676.5 L1115.3,677.0 L1109.9,677.3 L1104.5,677.4 L1099.1,677.4 L1093.8,677.3 L1088.4,677.0 L1083.0,676.5 L1077.8,675.9 L1072.5,675.1 L1067.4,674.2 L1062.3,673.1 L1057.4,671.8 L1052.5,670.5 L1047.8,669.0 L1043.2,667.3 L1038.8,665.5 L1034.5,663.6 L1030.4,661.6 L1026.5,659.5Z" fill="url(#g63)"/><path d="M1030.1,650.1 L1033.8,652.1 L1037.7,654.1 L1041.8,655.9 L1046.0,657.6 L1050.4,659.2 L1054.8,660.6 L1059.5,661.9 L1064.2,663.1 L1069.0,664.1 L1073.9,665.0 L1078.9,665.8 L1083.9,666.3 L1089.0,666.8 L1094.1,667.1 L1099.3,667.2 L1104.4,667.2 L1109.6,667.1 L1114.7,666.8 L1119.8,666.3 L1124.8,665.8 L1129.8,665.0 L1134.7,664.1 L1139.5,663.1 L1144.2,661.9 L1148.8,660.6 L1153.3,659.2 L1157.7,657.6 L1161.9,655.9 L1166.0,654.1 L1169.9,652.1 L1173.6,650.1 L1177.2,659.5 L1173.3,661.6 L1169.2,663.6 L1164.9,665.5 L1160.5,667.3 L1155.9,669.0 L1151.2,670.5 L1146.3,671.8 L1141.4,673.1 L1136.3,674.2 L1131.2,675.1 L1125.9,675.9 L1120.6,676.5 L1115.3,677.0 L1109.9,677.3 L1104.5,677.4 L1099.1,677.4 L1093.8,677.3 L1088.4,677.0 L1083.0,676.5 L1077.8,675.9 L1072.5,675.1 L1067.4,674.2 L1062.3,673.1 L1057.4,671.8 L1052.5,670.5 L1047.8,669.0 L1043.2,667.3 L1038.8,665.5 L1034.5,663.6 L1030.4,661.6 L1026.5,659.5Z" fill="url(#g64)"/><path d="M1029.6,650.7 L1033.4,652.7 L1037.3,654.7 L1041.4,656.5 L1045.7,658.2 L1050.0,659.8 L1054.6,661.2 L1059.2,662.6 L1064.0,663.7 L1068.8,664.8 L1073.8,665.7 L1078.8,666.4 L1083.8,667.0 L1088.9,667.5 L1094.1,667.8 L1099.3,667.9 L1104.4,667.9 L1109.6,667.8 L1114.7,667.5 L1119.9,667.0 L1124.9,666.4 L1129.9,665.7 L1134.9,664.8 L1139.7,663.7 L1144.5,662.6 L1149.1,661.2 L1153.6,659.8 L1158.0,658.2 L1162.3,656.5 L1166.4,654.7 L1170.3,652.7 L1174.0,650.7 L1177.2,659.5 L1173.3,661.6 L1169.2,663.6 L1164.9,665.5 L1160.5,667.3 L1155.9,669.0 L1151.2,670.5 L1146.3,671.8 L1141.4,673.1 L1136.3,674.2 L1131.2,675.1 L1125.9,675.9 L1120.6,676.5 L1115.3,677.0 L1109.9,677.3 L1104.5,677.4 L1099.1,677.4 L1093.8,677.3 L1088.4,677.0 L1083.0,676.5 L1077.8,675.9 L1072.5,675.1 L1067.4,674.2 L1062.3,673.1 L1057.4,671.8 L1052.5,670.5 L1047.8,669.0 L1043.2,667.3 L1038.8,665.5 L1034.5,663.6 L1030.4,661.6 L1026.5,659.5Z" fill="url(#g65)"/><path d="M1029.3,651.2 L1033.0,653.3 L1037.0,655.2 L1041.1,657.1 L1045.4,658.8 L1049.8,660.4 L1054.3,661.8 L1059.0,663.1 L1063.8,664.3 L1068.7,665.4 L1073.6,666.3 L1078.6,667.0 L1083.7,667.6 L1088.9,668.1 L1094.1,668.4 L1099.2,668.5 L1104.4,668.5 L1109.6,668.4 L1114.8,668.1 L1119.9,667.6 L1125.0,667.0 L1130.1,666.3 L1135.0,665.4 L1139.9,664.3 L1144.7,663.1 L1149.4,661.8 L1153.9,660.4 L1158.3,658.8 L1162.6,657.1 L1166.7,655.2 L1170.6,653.3 L1174.4,651.2 L1177.2,659.5 L1173.3,661.6 L1169.2,663.6 L1164.9,665.5 L1160.5,667.3 L1155.9,669.0 L1151.2,670.5 L1146.3,671.8 L1141.4,673.1 L1136.3,674.2 L1131.2,675.1 L1125.9,675.9 L1120.6,676.5 L1115.3,677.0 L1109.9,677.3 L1104.5,677.4 L1099.1,677.4 L1093.8,677.3 L1088.4,677.0 L1083.0,676.5 L1077.8,675.9 L1072.5,675.1 L1067.4,674.2 L1062.3,673.1 L1057.4,671.8 L1052.5,670.5 L1047.8,669.0 L1043.2,667.3 L1038.8,665.5 L1034.5,663.6 L1030.4,661.6 L1026.5,659.5Z" fill="url(#g66)"/><path d="M1028.9,651.7 L1032.7,653.8 L1036.7,655.8 L1040.8,657.6 L1045.1,659.3 L1049.5,660.9 L1054.1,662.4 L1058.8,663.7 L1063.6,664.9 L1068.5,666.0 L1073.5,666.9 L1078.5,667.6 L1083.7,668.2 L1088.8,668.7 L1094.0,669.0 L1099.2,669.1 L1104.5,669.1 L1109.7,669.0 L1114.9,668.7 L1120.0,668.2 L1125.2,667.6 L1130.2,666.9 L1135.2,666.0 L1140.1,664.9 L1144.9,663.7 L1149.6,662.4 L1154.2,660.9 L1158.6,659.3 L1162.9,657.6 L1167.0,655.8 L1171.0,653.8 L1174.8,651.7 L1177.2,659.5 L1173.3,661.6 L1169.2,663.6 L1164.9,665.5 L1160.5,667.3 L1155.9,669.0 L1151.2,670.5 L1146.3,671.8 L1141.4,673.1 L1136.3,674.2 L1131.2,675.1 L1125.9,675.9 L1120.6,676.5 L1115.3,677.0 L1109.9,677.3 L1104.5,677.4 L1099.1,677.4 L1093.8,677.3 L1088.4,677.0 L1083.0,676.5 L1077.8,675.9 L1072.5,675.1 L1067.4,674.2 L1062.3,673.1 L1057.4,671.8 L1052.5,670.5 L1047.8,669.0 L1043.2,667.3 L1038.8,665.5 L1034.5,663.6 L1030.4,661.6 L1026.5,659.5Z" fill="url(#g67)"/><path d="M1028.6,652.3 L1032.4,654.4 L1036.4,656.3 L1040.5,658.2 L1044.9,659.9 L1049.3,661.5 L1053.9,663.0 L1058.6,664.3 L1063.4,665.5 L1068.3,666.6 L1073.4,667.5 L1078.4,668.2 L1083.6,668.8 L1088.8,669.3 L1094.0,669.6 L1099.2,669.8 L1104.5,669.8 L1109.7,669.6 L1114.9,669.3 L1120.1,668.8 L1125.3,668.2 L1130.3,667.5 L1135.3,666.6 L1140.3,665.5 L1145.1,664.3 L1149.8,663.0 L1154.4,661.5 L1158.8,659.9 L1163.1,658.2 L1167.3,656.3 L1171.3,654.4 L1175.1,652.3 L1177.2,659.5 L1173.3,661.6 L1169.2,663.6 L1164.9,665.5 L1160.5,667.3 L1155.9,669.0 L1151.2,670.5 L1146.3,671.8 L1141.4,673.1 L1136.3,674.2 L1131.2,675.1 L1125.9,675.9 L1120.6,676.5 L1115.3,677.0 L1109.9,677.3 L1104.5,677.4 L1099.1,677.4 L1093.8,677.3 L1088.4,677.0 L1083.0,676.5 L1077.8,675.9 L1072.5,675.1 L1067.4,674.2 L1062.3,673.1 L1057.4,671.8 L1052.5,670.5 L1047.8,669.0 L1043.2,667.3 L1038.8,665.5 L1034.5,663.6 L1030.4,661.6 L1026.5,659.5Z" fill="url(#g68)"/><path d="M1028.3,652.8 L1032.1,654.9 L1036.1,656.9 L1040.3,658.8 L1044.6,660.5 L1049.1,662.1 L1053.7,663.6 L1058.4,664.9 L1063.3,666.1 L1068.2,667.2 L1073.2,668.1 L1078.3,668.9 L1083.5,669.5 L1088.7,669.9 L1093.9,670.2 L1099.2,670.4 L1104.5,670.4 L1109.7,670.2 L1115.0,669.9 L1120.2,669.5 L1125.4,668.9 L1130.5,668.1 L1135.5,667.2 L1140.4,666.1 L1145.3,664.9 L1150.0,663.6 L1154.6,662.1 L1159.1,660.5 L1163.4,658.8 L1167.6,656.9 L1171.6,654.9 L1175.4,652.8 L1177.2,659.5 L1173.3,661.6 L1169.2,663.6 L1164.9,665.5 L1160.5,667.3 L1155.9,669.0 L1151.2,670.5 L1146.3,671.8 L1141.4,673.1 L1136.3,674.2 L1131.2,675.1 L1125.9,675.9 L1120.6,676.5 L1115.3,677.0 L1109.9,677.3 L1104.5,677.4 L1099.1,677.4 L1093.8,677.3 L1088.4,677.0 L1083.0,676.5 L1077.8,675.9 L1072.5,675.1 L1067.4,674.2 L1062.3,673.1 L1057.4,671.8 L1052.5,670.5 L1047.8,669.0 L1043.2,667.3 L1038.8,665.5 L1034.5,663.6 L1030.4,661.6 L1026.5,659.5Z" fill="url(#g69)"/><path d="M1027.9,653.6 L1031.7,655.7 L1035.8,657.7 L1040.0,659.6 L1044.3,661.4 L1048.8,663.0 L1053.4,664.5 L1058.2,665.8 L1063.1,667.0 L1068.0,668.1 L1073.1,669.0 L1078.2,669.8 L1083.4,670.4 L1088.6,670.8 L1093.9,671.1 L1099.2,671.3 L1104.5,671.3 L1109.8,671.1 L1115.1,670.8 L1120.3,670.4 L1125.5,669.8 L1130.6,669.0 L1135.7,668.1 L1140.6,667.0 L1145.5,665.8 L1150.3,664.5 L1154.9,663.0 L1159.4,661.4 L1163.7,659.6 L1167.9,657.7 L1171.9,655.7 L1175.8,653.6 L1177.2,659.5 L1173.3,661.6 L1169.2,663.6 L1164.9,665.5 L1160.5,667.3 L1155.9,669.0 L1151.2,670.5 L1146.3,671.8 L1141.4,673.1 L1136.3,674.2 L1131.2,675.1 L1125.9,675.9 L1120.6,676.5 L1115.3,677.0 L1109.9,677.3 L1104.5,677.4 L1099.1,677.4 L1093.8,677.3 L1088.4,677.0 L1083.0,676.5 L1077.8,675.9 L1072.5,675.1 L1067.4,674.2 L1062.3,673.1 L1057.4,671.8 L1052.5,670.5 L1047.8,669.0 L1043.2,667.3 L1038.8,665.5 L1034.5,663.6 L1030.4,661.6 L1026.5,659.5Z" fill="url(#g70)"/><path d="M1027.5,654.6 L1031.3,656.7 L1035.4,658.8 L1039.6,660.6 L1044.0,662.4 L1048.5,664.0 L1053.2,665.5 L1057.9,666.9 L1062.8,668.1 L1067.8,669.1 L1072.9,670.1 L1078.1,670.8 L1083.3,671.5 L1088.6,671.9 L1093.9,672.2 L1099.2,672.4 L1104.5,672.4 L1109.8,672.2 L1115.1,671.9 L1120.4,671.5 L1125.6,670.8 L1130.8,670.1 L1135.9,669.1 L1140.9,668.1 L1145.7,666.9 L1150.5,665.5 L1155.2,664.0 L1159.7,662.4 L1164.1,660.6 L1168.3,658.8 L1172.3,656.7 L1176.2,654.6 L1177.2,659.5 L1173.3,661.6 L1169.2,663.6 L1164.9,665.5 L1160.5,667.3 L1155.9,669.0 L1151.2,670.5 L1146.3,671.8 L1141.4,673.1 L1136.3,674.2 L1131.2,675.1 L1125.9,675.9 L1120.6,676.5 L1115.3,677.0 L1109.9,677.3 L1104.5,677.4 L1099.1,677.4 L1093.8,677.3 L1088.4,677.0 L1083.0,676.5 L1077.8,675.9 L1072.5,675.1 L1067.4,674.2 L1062.3,673.1 L1057.4,671.8 L1052.5,670.5 L1047.8,669.0 L1043.2,667.3 L1038.8,665.5 L1034.5,663.6 L1030.4,661.6 L1026.5,659.5Z" fill="url(#g71)"/><path d="M1027.2,655.5 L1031.1,657.6 L1035.1,659.6 L1039.4,661.5 L1043.7,663.3 L1048.3,664.9 L1053.0,666.4 L1057.8,667.7 L1062.7,669.0 L1067.7,670.0 L1072.8,671.0 L1078.0,671.7 L1083.2,672.4 L1088.5,672.8 L1093.8,673.1 L1099.2,673.3 L1104.5,673.3 L1109.9,673.1 L1115.2,672.8 L1120.5,672.4 L1125.7,671.7 L1130.9,671.0 L1136.0,670.0 L1141.0,669.0 L1145.9,667.7 L1150.7,666.4 L1155.4,664.9 L1159.9,663.3 L1164.3,661.5 L1168.6,659.6 L1172.6,657.6 L1176.5,655.5 L1177.2,659.5 L1173.3,661.6 L1169.2,663.6 L1164.9,665.5 L1160.5,667.3 L1155.9,669.0 L1151.2,670.5 L1146.3,671.8 L1141.4,673.1 L1136.3,674.2 L1131.2,675.1 L1125.9,675.9 L1120.6,676.5 L1115.3,677.0 L1109.9,677.3 L1104.5,677.4 L1099.1,677.4 L1093.8,677.3 L1088.4,677.0 L1083.0,676.5 L1077.8,675.9 L1072.5,675.1 L1067.4,674.2 L1062.3,673.1 L1057.4,671.8 L1052.5,670.5 L1047.8,669.0 L1043.2,667.3 L1038.8,665.5 L1034.5,663.6 L1030.4,661.6 L1026.5,659.5Z" fill="url(#g72)"/><path d="M1026.9,656.3 L1030.8,658.4 L1034.9,660.4 L1039.1,662.3 L1043.6,664.1 L1048.1,665.7 L1052.8,667.2 L1057.6,668.6 L1062.6,669.8 L1067.6,670.9 L1072.7,671.8 L1077.9,672.6 L1083.2,673.2 L1088.5,673.7 L1093.8,674.0 L1099.2,674.2 L1104.5,674.2 L1109.9,674.0 L1115.2,673.7 L1120.5,673.2 L1125.8,672.6 L1131.0,671.8 L1136.1,670.9 L1141.1,669.8 L1146.1,668.6 L1150.9,667.2 L1155.6,665.7 L1160.1,664.1 L1164.5,662.3 L1168.8,660.4 L1172.9,658.4 L1176.7,656.3 L1177.2,659.5 L1173.3,661.6 L1169.2,663.6 L1164.9,665.5 L1160.5,667.3 L1155.9,669.0 L1151.2,670.5 L1146.3,671.8 L1141.4,673.1 L1136.3,674.2 L1131.2,675.1 L1125.9,675.9 L1120.6,676.5 L1115.3,677.0 L1109.9,677.3 L1104.5,677.4 L1099.1,677.4 L1093.8,677.3 L1088.4,677.0 L1083.0,676.5 L1077.8,675.9 L1072.5,675.1 L1067.4,674.2 L1062.3,673.1 L1057.4,671.8 L1052.5,670.5 L1047.8,669.0 L1043.2,667.3 L1038.8,665.5 L1034.5,663.6 L1030.4,661.6 L1026.5,659.5Z" fill="url(#g73)"/><path d="M1026.6,657.8 L1030.5,659.9 L1034.6,661.9 L1038.9,663.8 L1043.3,665.6 L1047.9,667.2 L1052.6,668.8 L1057.4,670.1 L1062.4,671.4 L1067.4,672.4 L1072.6,673.4 L1077.8,674.1 L1083.1,674.8 L1088.4,675.2 L1093.8,675.6 L1099.1,675.7 L1104.5,675.7 L1109.9,675.6 L1115.3,675.2 L1120.6,674.8 L1125.9,674.1 L1131.1,673.4 L1136.2,672.4 L1141.3,671.4 L1146.3,670.1 L1151.1,668.8 L1155.8,667.2 L1160.4,665.6 L1164.8,663.8 L1169.1,661.9 L1173.1,659.9 L1177.1,657.8 L1177.2,659.5 L1173.3,661.6 L1169.2,663.6 L1164.9,665.5 L1160.5,667.3 L1155.9,669.0 L1151.2,670.5 L1146.3,671.8 L1141.4,673.1 L1136.3,674.2 L1131.2,675.1 L1125.9,675.9 L1120.6,676.5 L1115.3,677.0 L1109.9,677.3 L1104.5,677.4 L1099.1,677.4 L1093.8,677.3 L1088.4,677.0 L1083.0,676.5 L1077.8,675.9 L1072.5,675.1 L1067.4,674.2 L1062.3,673.1 L1057.4,671.8 L1052.5,670.5 L1047.8,669.0 L1043.2,667.3 L1038.8,665.5 L1034.5,663.6 L1030.4,661.6 L1026.5,659.5Z" fill="url(#g74)"/><path d="M1169.8,646.7 L1207.2,625.1 L1214.6,637.9 L1177.2,659.5Z" fill="url(#g76)"/><path d="M1171.2,647.7 L1208.6,626.1 L1214.6,637.9 L1177.2,659.5Z" fill="url(#g77)"/><path d="M1172.6,648.9 L1210.0,627.3 L1214.6,637.9 L1177.2,659.5Z" fill="url(#g78)"/><path d="M1173.6,650.1 L1211.0,628.5 L1214.6,637.9 L1177.2,659.5Z" fill="url(#g79)"/><path d="M1174.0,650.7 L1211.5,629.1 L1214.6,637.9 L1177.2,659.5Z" fill="url(#g80)"/><path d="M1174.4,651.2 L1211.8,629.6 L1214.6,637.9 L1177.2,659.5Z" fill="url(#g81)"/><path d="M1174.8,651.7 L1212.2,630.1 L1214.6,637.9 L1177.2,659.5Z" fill="url(#g82)"/><path d="M1175.1,652.3 L1212.5,630.7 L1214.6,637.9 L1177.2,659.5Z" fill="url(#g83)"/><path d="M1175.4,652.8 L1212.8,631.2 L1214.6,637.9 L1177.2,659.5Z" fill="url(#g84)"/><path d="M1175.8,653.6 L1213.2,632.0 L1214.6,637.9 L1177.2,659.5Z" fill="url(#g85)"/><path d="M1176.2,654.6 L1213.6,633.0 L1214.6,637.9 L1177.2,659.5Z" fill="url(#g86)"/><path d="M1176.5,655.5 L1213.9,633.9 L1214.6,637.9 L1177.2,659.5Z" fill="url(#g87)"/><path d="M1176.7,656.3 L1214.2,634.7 L1214.6,637.9 L1177.2,659.5Z" fill="url(#g88)"/><path d="M1177.1,657.8 L1214.5,636.2 L1214.6,637.9 L1177.2,659.5Z" fill="url(#g89)"/><path d="M1207.2,625.1 L1210.6,623.1 L1213.8,620.9 L1216.7,618.7 L1219.5,616.4 L1222.1,614.0 L1224.5,611.5 L1226.6,609.0 L1228.5,606.4 L1230.2,603.8 L1231.7,601.1 L1232.9,598.4 L1233.9,595.6 L1234.6,592.9 L1235.1,590.1 L1235.4,587.3 L1235.4,585.9 L1245.8,594.4 L1245.8,595.9 L1245.5,599.0 L1245.0,602.1 L1244.1,605.2 L1243.1,608.3 L1241.7,611.3 L1240.1,614.2 L1238.2,617.2 L1236.1,620.0 L1233.7,622.8 L1231.1,625.6 L1228.2,628.2 L1225.1,630.8 L1221.8,633.2 L1218.3,635.6 L1214.6,637.9Z" fill="url(#g91)"/><path d="M1235.4,587.3 L1235.4,585.9 L1245.8,594.4 L1245.8,595.9Z" fill="#807b70"/><path d="M1208.6,626.1 L1212.1,624.0 L1215.3,621.8 L1218.4,619.5 L1221.2,617.2 L1223.8,614.7 L1226.2,612.2 L1228.4,609.7 L1230.4,607.0 L1232.1,604.3 L1233.6,601.6 L1234.8,598.8 L1235.8,596.0 L1236.6,593.2 L1237.1,590.3 L1237.4,587.4 L1237.4,586.0 L1245.8,594.4 L1245.8,595.9 L1245.5,599.0 L1245.0,602.1 L1244.1,605.2 L1243.1,608.3 L1241.7,611.3 L1240.1,614.2 L1238.2,617.2 L1236.1,620.0 L1233.7,622.8 L1231.1,625.6 L1228.2,628.2 L1225.1,630.8 L1221.8,633.2 L1218.3,635.6 L1214.6,637.9Z" fill="url(#g92)"/><path d="M1237.4,587.4 L1237.4,586.0 L1245.8,594.4 L1245.8,595.9Z" fill="#837f72"/><path d="M1210.0,627.3 L1213.5,625.2 L1216.8,623.0 L1219.9,620.7 L1222.8,618.3 L1225.5,615.8 L1227.9,613.2 L1230.2,610.6 L1232.2,607.9 L1233.9,605.2 L1235.4,602.4 L1236.7,599.5 L1237.7,596.7 L1238.5,593.8 L1239.0,590.9 L1239.3,587.9 L1239.3,586.5 L1245.8,594.4 L1245.8,595.9 L1245.5,599.0 L1245.0,602.1 L1244.1,605.2 L1243.1,608.3 L1241.7,611.3 L1240.1,614.2 L1238.2,617.2 L1236.1,620.0 L1233.7,622.8 L1231.1,625.6 L1228.2,628.2 L1225.1,630.8 L1221.8,633.2 L1218.3,635.6 L1214.6,637.9Z" fill="url(#g93)"/><path d="M1239.3,587.9 L1239.3,586.5 L1245.8,594.4 L1245.8,595.9Z" fill="#868275"/><path d="M1211.0,628.5 L1214.6,626.4 L1217.9,624.1 L1221.1,621.8 L1224.0,619.3 L1226.7,616.8 L1229.2,614.2 L1231.5,611.5 L1233.5,608.8 L1235.3,606.0 L1236.8,603.2 L1238.1,600.3 L1239.2,597.4 L1239.9,594.5 L1240.5,591.5 L1240.7,588.5 L1240.7,587.1 L1245.8,594.4 L1245.8,595.9 L1245.5,599.0 L1245.0,602.1 L1244.1,605.2 L1243.1,608.3 L1241.7,611.3 L1240.1,614.2 L1238.2,617.2 L1236.1,620.0 L1233.7,622.8 L1231.1,625.6 L1228.2,628.2 L1225.1,630.8 L1221.8,633.2 L1218.3,635.6 L1214.6,637.9Z" fill="url(#g94)"/><path d="M1240.7,588.5 L1240.7,587.1 L1245.8,594.4 L1245.8,595.9Z" fill="#8a8578"/><path d="M1211.5,629.1 L1215.0,626.9 L1218.4,624.6 L1221.6,622.3 L1224.5,619.8 L1227.3,617.3 L1229.8,614.7 L1232.0,612.0 L1234.1,609.3 L1235.9,606.5 L1237.4,603.6 L1238.7,600.7 L1239.8,597.8 L1240.6,594.8 L1241.1,591.9 L1241.3,588.9 L1241.3,587.4 L1245.8,594.4 L1245.8,595.9 L1245.5,599.0 L1245.0,602.1 L1244.1,605.2 L1243.1,608.3 L1241.7,611.3 L1240.1,614.2 L1238.2,617.2 L1236.1,620.0 L1233.7,622.8 L1231.1,625.6 L1228.2,628.2 L1225.1,630.8 L1221.8,633.2 L1218.3,635.6 L1214.6,637.9Z" fill="url(#g95)"/><path d="M1241.3,588.9 L1241.3,587.4 L1245.8,594.4 L1245.8,595.9Z" fill="#8d887b"/><path d="M1211.8,629.6 L1215.4,627.4 L1218.8,625.1 L1222.0,622.8 L1224.9,620.3 L1227.7,617.8 L1230.2,615.1 L1232.5,612.4 L1234.6,609.7 L1236.4,606.9 L1237.9,604.0 L1239.2,601.1 L1240.3,598.2 L1241.1,595.2 L1241.6,592.2 L1241.8,589.2 L1241.8,587.7 L1245.8,594.4 L1245.8,595.9 L1245.5,599.0 L1245.0,602.1 L1244.1,605.2 L1243.1,608.3 L1241.7,611.3 L1240.1,614.2 L1238.2,617.2 L1236.1,620.0 L1233.7,622.8 L1231.1,625.6 L1228.2,628.2 L1225.1,630.8 L1221.8,633.2 L1218.3,635.6 L1214.6,637.9Z" fill="url(#g96)"/><path d="M1241.8,589.2 L1241.8,587.7 L1245.8,594.4 L1245.8,595.9Z" fill="#908b7d"/><path d="M1212.2,630.1 L1215.8,627.9 L1219.2,625.7 L1222.4,623.3 L1225.3,620.8 L1228.1,618.2 L1230.6,615.6 L1232.9,612.9 L1235.0,610.1 L1236.8,607.3 L1238.4,604.4 L1239.7,601.5 L1240.7,598.5 L1241.5,595.6 L1242.1,592.6 L1242.3,589.5 L1242.3,588.0 L1245.8,594.4 L1245.8,595.9 L1245.5,599.0 L1245.0,602.1 L1244.1,605.2 L1243.1,608.3 L1241.7,611.3 L1240.1,614.2 L1238.2,617.2 L1236.1,620.0 L1233.7,622.8 L1231.1,625.6 L1228.2,628.2 L1225.1,630.8 L1221.8,633.2 L1218.3,635.6 L1214.6,637.9Z" fill="url(#g97)"/><path d="M1242.3,589.5 L1242.3,588.0 L1245.8,594.4 L1245.8,595.9Z" fill="#938e80"/><path d="M1212.5,630.7 L1216.1,628.5 L1219.5,626.2 L1222.7,623.8 L1225.7,621.3 L1228.5,618.7 L1231.1,616.1 L1233.4,613.4 L1235.4,610.6 L1237.3,607.7 L1238.8,604.8 L1240.1,601.9 L1241.2,598.9 L1242.0,595.9 L1242.5,592.9 L1242.8,589.9 L1242.8,588.4 L1245.8,594.4 L1245.8,595.9 L1245.5,599.0 L1245.0,602.1 L1244.1,605.2 L1243.1,608.3 L1241.7,611.3 L1240.1,614.2 L1238.2,617.2 L1236.1,620.0 L1233.7,622.8 L1231.1,625.6 L1228.2,628.2 L1225.1,630.8 L1221.8,633.2 L1218.3,635.6 L1214.6,637.9Z" fill="url(#g98)"/><path d="M1242.8,589.9 L1242.8,588.4 L1245.8,594.4 L1245.8,595.9Z" fill="#969183"/><path d="M1212.8,631.2 L1216.4,629.0 L1219.9,626.7 L1223.1,624.3 L1226.1,621.8 L1228.9,619.2 L1231.4,616.6 L1233.8,613.8 L1235.8,611.0 L1237.7,608.2 L1239.2,605.3 L1240.6,602.3 L1241.6,599.4 L1242.4,596.4 L1243.0,593.3 L1243.2,590.3 L1243.2,588.8 L1245.8,594.4 L1245.8,595.9 L1245.5,599.0 L1245.0,602.1 L1244.1,605.2 L1243.1,608.3 L1241.7,611.3 L1240.1,614.2 L1238.2,617.2 L1236.1,620.0 L1233.7,622.8 L1231.1,625.6 L1228.2,628.2 L1225.1,630.8 L1221.8,633.2 L1218.3,635.6 L1214.6,637.9Z" fill="url(#g99)"/><path d="M1243.2,590.3 L1243.2,588.8 L1245.8,594.4 L1245.8,595.9Z" fill="#979284"/><path d="M1213.2,632.0 L1216.8,629.8 L1220.3,627.5 L1223.5,625.1 L1226.6,622.6 L1229.4,620.0 L1231.9,617.3 L1234.3,614.6 L1236.4,611.7 L1238.2,608.9 L1239.8,606.0 L1241.1,603.0 L1242.2,600.0 L1243.0,597.0 L1243.5,593.9 L1243.8,590.9 L1243.8,589.4 L1245.8,594.4 L1245.8,595.9 L1245.5,599.0 L1245.0,602.1 L1244.1,605.2 L1243.1,608.3 L1241.7,611.3 L1240.1,614.2 L1238.2,617.2 L1236.1,620.0 L1233.7,622.8 L1231.1,625.6 L1228.2,628.2 L1225.1,630.8 L1221.8,633.2 L1218.3,635.6 L1214.6,637.9Z" fill="url(#g100)"/><path d="M1243.8,590.9 L1243.8,589.4 L1245.8,594.4 L1245.8,595.9Z" fill="#928e80"/><path d="M1213.6,633.0 L1217.3,630.8 L1220.8,628.5 L1224.0,626.0 L1227.1,623.5 L1229.9,620.9 L1232.5,618.2 L1234.8,615.4 L1236.9,612.6 L1238.8,609.7 L1240.4,606.8 L1241.7,603.8 L1242.8,600.8 L1243.6,597.8 L1244.1,594.7 L1244.4,591.6 L1244.4,590.1 L1245.8,594.4 L1245.8,595.9 L1245.5,599.0 L1245.0,602.1 L1244.1,605.2 L1243.1,608.3 L1241.7,611.3 L1240.1,614.2 L1238.2,617.2 L1236.1,620.0 L1233.7,622.8 L1231.1,625.6 L1228.2,628.2 L1225.1,630.8 L1221.8,633.2 L1218.3,635.6 L1214.6,637.9Z" fill="url(#g101)"/><path d="M1244.4,591.6 L1244.4,590.1 L1245.8,594.4 L1245.8,595.9Z" fill="#8e897c"/><path d="M1213.9,633.9 L1217.6,631.6 L1221.1,629.3 L1224.4,626.8 L1227.4,624.3 L1230.2,621.7 L1232.8,619.0 L1235.2,616.2 L1237.3,613.4 L1239.2,610.5 L1240.8,607.5 L1242.1,604.5 L1243.2,601.5 L1244.0,598.5 L1244.5,595.4 L1244.8,592.3 L1244.8,590.8 L1245.8,594.4 L1245.8,595.9 L1245.5,599.0 L1245.0,602.1 L1244.1,605.2 L1243.1,608.3 L1241.7,611.3 L1240.1,614.2 L1238.2,617.2 L1236.1,620.0 L1233.7,622.8 L1231.1,625.6 L1228.2,628.2 L1225.1,630.8 L1221.8,633.2 L1218.3,635.6 L1214.6,637.9Z" fill="url(#g102)"/><path d="M1244.8,592.3 L1244.8,590.8 L1245.8,594.4 L1245.8,595.9Z" fill="#878376"/><path d="M1214.2,634.7 L1217.9,632.4 L1221.3,630.1 L1224.6,627.6 L1227.7,625.1 L1230.5,622.5 L1233.1,619.8 L1235.5,617.0 L1237.6,614.1 L1239.5,611.2 L1241.1,608.3 L1242.4,605.3 L1243.5,602.2 L1244.3,599.2 L1244.9,596.1 L1245.1,593.0 L1245.1,591.4 L1245.8,594.4 L1245.8,595.9 L1245.5,599.0 L1245.0,602.1 L1244.1,605.2 L1243.1,608.3 L1241.7,611.3 L1240.1,614.2 L1238.2,617.2 L1236.1,620.0 L1233.7,622.8 L1231.1,625.6 L1228.2,628.2 L1225.1,630.8 L1221.8,633.2 L1218.3,635.6 L1214.6,637.9Z" fill="url(#g103)"/><path d="M1245.1,593.0 L1245.1,591.4 L1245.8,594.4 L1245.8,595.9Z" fill="#7b776b"/><path d="M1214.5,636.2 L1218.2,633.9 L1221.7,631.5 L1225.0,629.1 L1228.1,626.5 L1230.9,623.9 L1233.5,621.2 L1235.9,618.4 L1238.0,615.5 L1239.9,612.6 L1241.5,609.6 L1242.9,606.6 L1243.9,603.6 L1244.8,600.5 L1245.3,597.4 L1245.6,594.3 L1245.6,592.7 L1245.8,594.4 L1245.8,595.9 L1245.5,599.0 L1245.0,602.1 L1244.1,605.2 L1243.1,608.3 L1241.7,611.3 L1240.1,614.2 L1238.2,617.2 L1236.1,620.0 L1233.7,622.8 L1231.1,625.6 L1228.2,628.2 L1225.1,630.8 L1221.8,633.2 L1218.3,635.6 L1214.6,637.9Z" fill="url(#g104)"/><path d="M1245.6,594.3 L1245.6,592.7 L1245.8,594.4 L1245.8,595.9Z" fill="#6e6a60"/><path d="M1235.4,585.9 L1235.4,584.4 L1235.1,581.6 L1245.5,589.7 L1245.8,592.8 L1245.8,594.4Z" fill="#6e6a60"/><path d="M1235.4,584.4 L1235.1,581.6 L1234.6,578.8 L1233.9,576.1 L1232.9,573.3 L1231.7,570.6 L1230.2,567.9 L1228.5,565.3 L1226.6,562.7 L1224.5,560.2 L1222.1,557.7 L1219.5,555.3 L1216.7,553.0 L1213.8,550.8 L1210.6,548.6 L1207.2,546.6 L1214.6,550.9 L1218.3,553.1 L1221.8,555.5 L1225.1,557.9 L1228.2,560.5 L1231.1,563.1 L1233.7,565.9 L1236.1,568.7 L1238.2,571.5 L1240.1,574.5 L1241.7,577.4 L1243.1,580.4 L1244.1,583.5 L1245.0,586.6 L1245.5,589.7 L1245.8,592.8Z" fill="url(#g105)"/><path d="M1235.4,585.9 L1235.4,584.4 L1235.1,581.6 L1245.3,588.1 L1245.6,591.2 L1245.6,592.7Z" fill="#7a776b"/><path d="M1235.4,584.4 L1235.1,581.6 L1234.6,578.8 L1233.9,576.1 L1232.9,573.3 L1231.7,570.6 L1230.2,567.9 L1228.5,565.3 L1226.6,562.7 L1224.5,560.2 L1222.1,557.7 L1219.5,555.3 L1216.7,553.0 L1213.8,550.8 L1210.6,548.6 L1207.2,546.6 L1214.5,549.3 L1218.2,551.6 L1221.7,553.9 L1225.0,556.4 L1228.1,558.9 L1230.9,561.6 L1233.5,564.3 L1235.9,567.1 L1238.0,569.9 L1239.9,572.9 L1241.5,575.8 L1242.9,578.8 L1243.9,581.9 L1244.8,585.0 L1245.3,588.1 L1245.6,591.2Z" fill="url(#g106)"/><path d="M1235.4,585.9 L1235.4,584.4 L1235.1,581.6 L1244.9,586.8 L1245.1,589.9 L1245.1,591.4Z" fill="#878376"/><path d="M1235.4,584.4 L1235.1,581.6 L1234.6,578.8 L1233.9,576.1 L1232.9,573.3 L1231.7,570.6 L1230.2,567.9 L1228.5,565.3 L1226.6,562.7 L1224.5,560.2 L1222.1,557.7 L1219.5,555.3 L1216.7,553.0 L1213.8,550.8 L1210.6,548.6 L1207.2,546.6 L1214.2,548.2 L1217.9,550.4 L1221.3,552.8 L1224.6,555.2 L1227.7,557.8 L1230.5,560.4 L1233.1,563.1 L1235.5,565.9 L1237.6,568.8 L1239.5,571.7 L1241.1,574.6 L1242.4,577.6 L1243.5,580.7 L1244.3,583.7 L1244.9,586.8 L1245.1,589.9Z" fill="url(#g107)"/><path d="M1235.4,585.9 L1235.4,584.4 L1235.1,581.6 L1244.5,586.1 L1244.8,589.2 L1244.8,590.8Z" fill="#8d897b"/><path d="M1235.4,584.4 L1235.1,581.6 L1234.6,578.8 L1233.9,576.1 L1232.9,573.3 L1231.7,570.6 L1230.2,567.9 L1228.5,565.3 L1226.6,562.7 L1224.5,560.2 L1222.1,557.7 L1219.5,555.3 L1216.7,553.0 L1213.8,550.8 L1210.6,548.6 L1207.2,546.6 L1213.9,547.7 L1217.6,549.9 L1221.1,552.2 L1224.4,554.7 L1227.4,557.2 L1230.2,559.8 L1232.8,562.5 L1235.2,565.3 L1237.3,568.1 L1239.2,571.0 L1240.8,574.0 L1242.1,577.0 L1243.2,580.0 L1244.0,583.1 L1244.5,586.1 L1244.8,589.2Z" fill="url(#g108)"/><path d="M1235.4,585.9 L1235.4,584.4 L1235.1,581.6 L1244.1,585.5 L1244.4,588.6 L1244.4,590.1Z" fill="#928d7f"/><path d="M1235.4,584.4 L1235.1,581.6 L1234.6,578.8 L1233.9,576.1 L1232.9,573.3 L1231.7,570.6 L1230.2,567.9 L1228.5,565.3 L1226.6,562.7 L1224.5,560.2 L1222.1,557.7 L1219.5,555.3 L1216.7,553.0 L1213.8,550.8 L1210.6,548.6 L1207.2,546.6 L1213.6,547.2 L1217.3,549.4 L1220.8,551.7 L1224.0,554.2 L1227.1,556.7 L1229.9,559.3 L1232.5,562.0 L1234.8,564.8 L1236.9,567.6 L1238.8,570.5 L1240.4,573.4 L1241.7,576.4 L1242.8,579.4 L1243.6,582.4 L1244.1,585.5 L1244.4,588.6Z" fill="url(#g109)"/><path d="M1235.4,585.9 L1235.4,584.4 L1235.1,581.6 L1243.5,584.8 L1243.8,587.8 L1243.8,589.4Z" fill="#969283"/><path d="M1235.4,584.4 L1235.1,581.6 L1234.6,578.8 L1233.9,576.1 L1232.9,573.3 L1231.7,570.6 L1230.2,567.9 L1228.5,565.3 L1226.6,562.7 L1224.5,560.2 L1222.1,557.7 L1219.5,555.3 L1216.7,553.0 L1213.8,550.8 L1210.6,548.6 L1207.2,546.6 L1213.2,546.7 L1216.8,548.9 L1220.3,551.2 L1223.5,553.6 L1226.6,556.1 L1229.4,558.7 L1231.9,561.4 L1234.3,564.1 L1236.4,567.0 L1238.2,569.8 L1239.8,572.7 L1241.1,575.7 L1242.2,578.7 L1243.0,581.7 L1243.5,584.8 L1243.8,587.8Z" fill="url(#g110)"/><path d="M1235.4,585.9 L1235.4,584.4 L1235.1,581.6 L1243.0,584.2 L1243.2,587.3 L1243.2,588.8Z" fill="#959182"/><path d="M1235.4,584.4 L1235.1,581.6 L1234.6,578.8 L1233.9,576.1 L1232.9,573.3 L1231.7,570.6 L1230.2,567.9 L1228.5,565.3 L1226.6,562.7 L1224.5,560.2 L1222.1,557.7 L1219.5,555.3 L1216.7,553.0 L1213.8,550.8 L1210.6,548.6 L1207.2,546.6 L1212.8,546.3 L1216.4,548.5 L1219.9,550.8 L1223.1,553.2 L1226.1,555.7 L1228.9,558.3 L1231.4,561.0 L1233.8,563.7 L1235.8,566.5 L1237.7,569.4 L1239.2,572.3 L1240.6,575.2 L1241.6,578.2 L1242.4,581.2 L1243.0,584.2 L1243.2,587.3Z" fill="url(#g111)"/><path d="M1235.4,585.9 L1235.4,584.4 L1235.1,581.6 L1242.5,583.9 L1242.8,586.9 L1242.8,588.4Z" fill="#928e80"/><path d="M1235.4,584.4 L1235.1,581.6 L1234.6,578.8 L1233.9,576.1 L1232.9,573.3 L1231.7,570.6 L1230.2,567.9 L1228.5,565.3 L1226.6,562.7 L1224.5,560.2 L1222.1,557.7 L1219.5,555.3 L1216.7,553.0 L1213.8,550.8 L1210.6,548.6 L1207.2,546.6 L1212.5,546.1 L1216.1,548.3 L1219.5,550.6 L1222.7,553.0 L1225.7,555.5 L1228.5,558.1 L1231.1,560.7 L1233.4,563.4 L1235.4,566.2 L1237.3,569.1 L1238.8,571.9 L1240.1,574.9 L1241.2,577.8 L1242.0,580.8 L1242.5,583.9 L1242.8,586.9Z" fill="url(#g112)"/><path d="M1235.4,585.9 L1235.4,584.4 L1235.1,581.6 L1242.1,583.5 L1242.3,586.5 L1242.3,588.0Z" fill="#8f8b7d"/><path d="M1235.4,584.4 L1235.1,581.6 L1234.6,578.8 L1233.9,576.1 L1232.9,573.3 L1231.7,570.6 L1230.2,567.9 L1228.5,565.3 L1226.6,562.7 L1224.5,560.2 L1222.1,557.7 L1219.5,555.3 L1216.7,553.0 L1213.8,550.8 L1210.6,548.6 L1207.2,546.6 L1212.2,545.9 L1215.8,548.1 L1219.2,550.4 L1222.4,552.8 L1225.3,555.3 L1228.1,557.8 L1230.6,560.5 L1232.9,563.2 L1235.0,566.0 L1236.8,568.8 L1238.4,571.7 L1239.7,574.6 L1240.7,577.5 L1241.5,580.5 L1242.1,583.5 L1242.3,586.5Z" fill="url(#g113)"/><path d="M1235.4,585.9 L1235.4,584.4 L1235.1,581.6 L1241.6,583.2 L1241.8,586.2 L1241.8,587.7Z" fill="#8c887a"/><path d="M1235.4,584.4 L1235.1,581.6 L1234.6,578.8 L1233.9,576.1 L1232.9,573.3 L1231.7,570.6 L1230.2,567.9 L1228.5,565.3 L1226.6,562.7 L1224.5,560.2 L1222.1,557.7 L1219.5,555.3 L1216.7,553.0 L1213.8,550.8 L1210.6,548.6 L1207.2,546.6 L1211.8,545.8 L1215.4,548.0 L1218.8,550.3 L1222.0,552.6 L1224.9,555.1 L1227.7,557.6 L1230.2,560.3 L1232.5,563.0 L1234.6,565.7 L1236.4,568.5 L1237.9,571.4 L1239.2,574.3 L1240.3,577.2 L1241.1,580.2 L1241.6,583.2 L1241.8,586.2Z" fill="url(#g114)"/><path d="M1235.4,585.9 L1235.4,584.4 L1235.1,581.6 L1241.1,582.9 L1241.3,585.9 L1241.3,587.4Z" fill="#898577"/><path d="M1235.4,584.4 L1235.1,581.6 L1234.6,578.8 L1233.9,576.1 L1232.9,573.3 L1231.7,570.6 L1230.2,567.9 L1228.5,565.3 L1226.6,562.7 L1224.5,560.2 L1222.1,557.7 L1219.5,555.3 L1216.7,553.0 L1213.8,550.8 L1210.6,548.6 L1207.2,546.6 L1211.5,545.7 L1215.0,547.9 L1218.4,550.1 L1221.6,552.5 L1224.5,554.9 L1227.3,557.5 L1229.8,560.1 L1232.0,562.8 L1234.1,565.5 L1235.9,568.3 L1237.4,571.2 L1238.7,574.1 L1239.8,577.0 L1240.6,579.9 L1241.1,582.9 L1241.3,585.9Z" fill="url(#g115)"/><path d="M1235.4,585.9 L1235.4,584.4 L1235.1,581.6 L1240.5,582.6 L1240.7,585.6 L1240.7,587.1Z" fill="#868174"/><path d="M1235.4,584.4 L1235.1,581.6 L1234.6,578.8 L1233.9,576.1 L1232.9,573.3 L1231.7,570.6 L1230.2,567.9 L1228.5,565.3 L1226.6,562.7 L1224.5,560.2 L1222.1,557.7 L1219.5,555.3 L1216.7,553.0 L1213.8,550.8 L1210.6,548.6 L1207.2,546.6 L1211.0,545.6 L1214.6,547.8 L1217.9,550.0 L1221.1,552.4 L1224.0,554.8 L1226.7,557.3 L1229.2,559.9 L1231.5,562.6 L1233.5,565.3 L1235.3,568.1 L1236.8,570.9 L1238.1,573.8 L1239.2,576.7 L1239.9,579.7 L1240.5,582.6 L1240.7,585.6Z" fill="url(#g116)"/><path d="M1235.4,585.9 L1235.4,584.4 L1235.1,581.6 L1239.0,582.1 L1239.3,585.0 L1239.3,586.5Z" fill="#837e72"/><path d="M1235.4,584.4 L1235.1,581.6 L1234.6,578.8 L1233.9,576.1 L1232.9,573.3 L1231.7,570.6 L1230.2,567.9 L1228.5,565.3 L1226.6,562.7 L1224.5,560.2 L1222.1,557.7 L1219.5,555.3 L1216.7,553.0 L1213.8,550.8 L1210.6,548.6 L1207.2,546.6 L1210.0,545.6 L1213.5,547.7 L1216.8,550.0 L1219.9,552.3 L1222.8,554.7 L1225.5,557.2 L1227.9,559.7 L1230.2,562.4 L1232.2,565.0 L1233.9,567.8 L1235.4,570.6 L1236.7,573.4 L1237.7,576.3 L1238.5,579.2 L1239.0,582.1 L1239.3,585.0Z" fill="url(#g117)"/><path d="M1235.4,585.9 L1235.4,584.4 L1235.1,581.6 L1237.1,581.7 L1237.4,584.6 L1237.4,586.0Z" fill="#807b70"/><path d="M1235.4,584.4 L1235.1,581.6 L1234.6,578.8 L1233.9,576.1 L1232.9,573.3 L1231.7,570.6 L1230.2,567.9 L1228.5,565.3 L1226.6,562.7 L1224.5,560.2 L1222.1,557.7 L1219.5,555.3 L1216.7,553.0 L1213.8,550.8 L1210.6,548.6 L1207.2,546.6 L1208.6,545.9 L1212.1,548.0 L1215.3,550.2 L1218.4,552.5 L1221.2,554.8 L1223.8,557.3 L1226.2,559.8 L1228.4,562.4 L1230.4,565.0 L1232.1,567.7 L1233.6,570.4 L1234.8,573.2 L1235.8,576.0 L1236.6,578.8 L1237.1,581.7 L1237.4,584.6Z" fill="url(#g118)"/><path d="M1207.2,546.6 L1144.4,510.3 L1081.6,474.0 L1018.7,437.8 L955.9,401.5 L893.0,365.2 L830.2,328.9 L767.4,292.6 L704.5,256.4 L709.8,255.9 L772.6,292.1 L835.5,328.4 L898.3,364.7 L961.1,401.0 L1024.0,437.3 L1086.8,473.5 L1149.6,509.8 L1212.5,546.1Z" fill="url(#g119)"/><path d="M1207.2,546.6 L1144.4,510.3 L1081.6,474.0 L1018.7,437.8 L955.9,401.5 L893.0,365.2 L830.2,328.9 L767.4,292.6 L704.5,256.4 L709.4,255.7 L772.3,292.0 L835.1,328.3 L898.0,364.5 L960.8,400.8 L1023.6,437.1 L1086.5,473.4 L1149.3,509.7 L1212.2,545.9Z" fill="url(#g120)"/><path d="M1207.2,546.6 L1144.4,510.3 L1081.6,474.0 L1018.7,437.8 L955.9,401.5 L893.0,365.2 L830.2,328.9 L767.4,292.6 L704.5,256.4 L709.1,255.6 L771.9,291.8 L834.8,328.1 L897.6,364.4 L960.5,400.7 L1023.3,437.0 L1086.1,473.2 L1149.0,509.5 L1211.8,545.8Z" fill="url(#g121)"/><path d="M1207.2,546.6 L1144.4,510.3 L1081.6,474.0 L1018.7,437.8 L955.9,401.5 L893.0,365.2 L830.2,328.9 L767.4,292.6 L704.5,256.4 L708.7,255.5 L771.6,291.7 L834.4,328.0 L897.3,364.3 L960.1,400.6 L1022.9,436.9 L1085.8,473.1 L1148.6,509.4 L1211.5,545.7Z" fill="url(#g122)"/><path d="M1207.2,546.6 L1144.4,510.3 L1081.6,474.0 L1018.7,437.8 L955.9,401.5 L893.0,365.2 L830.2,328.9 L767.4,292.6 L704.5,256.4 L708.3,255.4 L771.2,291.7 L834.0,327.9 L896.8,364.2 L959.7,400.5 L1022.5,436.8 L1085.4,473.1 L1148.2,509.3 L1211.0,545.6Z" fill="url(#g123)"/><path d="M1207.2,546.6 L1144.4,510.3 L1081.6,474.0 L1018.7,437.8 L955.9,401.5 L893.0,365.2 L830.2,328.9 L767.4,292.6 L704.5,256.4 L707.3,255.4 L770.1,291.7 L833.0,327.9 L895.8,364.2 L958.6,400.5 L1021.5,436.8 L1084.3,473.1 L1147.2,509.3 L1210.0,545.6Z" fill="url(#g124)"/><path d="M1207.2,546.6 L1144.4,510.3 L1081.6,474.0 L1018.7,437.8 L955.9,401.5 L893.0,365.2 L830.2,328.9 L767.4,292.6 L704.5,256.4 L705.9,255.7 L768.8,292.0 L831.6,328.3 L894.4,364.5 L957.3,400.8 L1020.1,437.1 L1083.0,473.4 L1145.8,509.7 L1208.6,545.9Z" fill="url(#g125)"/><path d="M704.5,256.4 L701.5,254.5 L698.8,252.6 L696.3,250.5 L694.0,248.4 L691.9,246.1 L690.2,243.8 L688.6,241.5 L687.4,239.1 L686.5,236.6 L685.8,234.1 L685.4,231.6 L685.3,229.6 L695.8,238.1 L695.8,239.8 L696.1,241.9 L696.7,244.0 L697.5,246.1 L698.5,248.1 L699.8,250.1 L701.3,252.0 L703.0,253.9 L704.9,255.7 L707.1,257.4 L709.4,259.1 L711.9,260.6Z" fill="url(#g126)"/><path d="M704.5,256.4 L701.5,254.5 L698.8,252.6 L696.3,250.5 L694.0,248.4 L691.9,246.1 L690.2,243.8 L688.6,241.5 L687.4,239.1 L686.5,236.6 L685.8,234.1 L685.4,231.6 L685.3,229.6 L695.6,236.5 L695.6,238.2 L695.9,240.3 L696.5,242.4 L697.3,244.5 L698.3,246.5 L699.6,248.5 L701.1,250.4 L702.8,252.3 L704.8,254.1 L706.9,255.9 L709.2,257.5 L711.7,259.1Z" fill="url(#g127)"/><path d="M704.5,256.4 L701.5,254.5 L698.8,252.6 L696.3,250.5 L694.0,248.4 L691.9,246.1 L690.2,243.8 L688.6,241.5 L687.4,239.1 L686.5,236.6 L685.8,234.1 L685.4,231.6 L685.3,229.6 L695.1,235.2 L695.2,236.9 L695.5,239.0 L696.1,241.2 L696.9,243.3 L697.9,245.3 L699.2,247.3 L700.7,249.3 L702.5,251.2 L704.4,253.0 L706.6,254.7 L708.9,256.4 L711.4,258.0Z" fill="url(#g128)"/><path d="M704.5,256.4 L701.5,254.5 L698.8,252.6 L696.3,250.5 L694.0,248.4 L691.9,246.1 L690.2,243.8 L688.6,241.5 L687.4,239.1 L686.5,236.6 L685.8,234.1 L685.4,231.6 L685.3,229.6 L694.8,234.5 L694.8,236.2 L695.2,238.4 L695.7,240.5 L696.5,242.6 L697.6,244.7 L698.9,246.7 L700.4,248.7 L702.2,250.6 L704.1,252.4 L706.3,254.2 L708.6,255.8 L711.2,257.4Z" fill="url(#g129)"/><path d="M704.5,256.4 L701.5,254.5 L698.8,252.6 L696.3,250.5 L694.0,248.4 L691.9,246.1 L690.2,243.8 L688.6,241.5 L687.4,239.1 L686.5,236.6 L685.8,234.1 L685.4,231.6 L685.3,229.6 L694.4,233.9 L694.4,235.6 L694.7,237.8 L695.3,239.9 L696.1,242.0 L697.2,244.1 L698.5,246.1 L700.0,248.1 L701.8,250.0 L703.8,251.9 L705.9,253.7 L708.3,255.3 L710.9,256.9Z" fill="url(#g130)"/><path d="M704.5,256.4 L701.5,254.5 L698.8,252.6 L696.3,250.5 L694.0,248.4 L691.9,246.1 L690.2,243.8 L688.6,241.5 L687.4,239.1 L686.5,236.6 L685.8,234.1 L685.4,231.6 L685.3,229.6 L693.8,233.1 L693.8,234.9 L694.2,237.1 L694.7,239.2 L695.6,241.4 L696.6,243.5 L698.0,245.5 L699.5,247.5 L701.3,249.5 L703.3,251.3 L705.5,253.1 L707.9,254.8 L710.5,256.4Z" fill="url(#g131)"/><path d="M704.5,256.4 L701.5,254.5 L698.8,252.6 L696.3,250.5 L694.0,248.4 L691.9,246.1 L690.2,243.8 L688.6,241.5 L687.4,239.1 L686.5,236.6 L685.8,234.1 L685.4,231.6 L685.3,229.6 L693.2,232.5 L693.3,234.3 L693.6,236.5 L694.2,238.7 L695.0,240.9 L696.1,243.0 L697.4,245.1 L699.0,247.1 L700.8,249.0 L702.8,250.9 L705.0,252.7 L707.5,254.5 L710.1,256.1Z" fill="url(#g132)"/><path d="M704.5,256.4 L701.5,254.5 L698.8,252.6 L696.3,250.5 L694.0,248.4 L691.9,246.1 L690.2,243.8 L688.6,241.5 L687.4,239.1 L686.5,236.6 L685.8,234.1 L685.4,231.6 L685.3,229.6 L692.8,232.1 L692.8,233.9 L693.2,236.2 L693.8,238.4 L694.6,240.5 L695.7,242.7 L697.0,244.8 L698.6,246.8 L700.4,248.8 L702.4,250.7 L704.7,252.5 L707.1,254.2 L709.8,255.9Z" fill="url(#g133)"/><path d="M704.5,256.4 L701.5,254.5 L698.8,252.6 L696.3,250.5 L694.0,248.4 L691.9,246.1 L690.2,243.8 L688.6,241.5 L687.4,239.1 L686.5,236.6 L685.8,234.1 L685.4,231.6 L685.3,229.6 L692.3,231.8 L692.4,233.6 L692.7,235.8 L693.3,238.1 L694.2,240.2 L695.3,242.4 L696.6,244.5 L698.2,246.6 L700.0,248.6 L702.1,250.5 L704.3,252.3 L706.8,254.1 L709.4,255.7Z" fill="url(#g134)"/><path d="M704.5,256.4 L701.5,254.5 L698.8,252.6 L696.3,250.5 L694.0,248.4 L691.9,246.1 L690.2,243.8 L688.6,241.5 L687.4,239.1 L686.5,236.6 L685.8,234.1 L685.4,231.6 L685.3,229.6 L691.8,231.5 L691.9,233.3 L692.2,235.5 L692.8,237.8 L693.7,240.0 L694.8,242.2 L696.2,244.3 L697.8,246.4 L699.6,248.4 L701.7,250.3 L703.9,252.1 L706.4,253.9 L709.1,255.6Z" fill="url(#g135)"/><path d="M704.5,256.4 L701.5,254.5 L698.8,252.6 L696.3,250.5 L694.0,248.4 L691.9,246.1 L690.2,243.8 L688.6,241.5 L687.4,239.1 L686.5,236.6 L685.8,234.1 L685.4,231.6 L685.3,229.6 L691.3,231.1 L691.4,233.0 L691.7,235.3 L692.3,237.5 L693.2,239.7 L694.3,241.9 L695.7,244.1 L697.3,246.2 L699.1,248.2 L701.2,250.1 L703.5,252.0 L706.0,253.8 L708.7,255.5Z" fill="url(#g136)"/><path d="M704.5,256.4 L701.5,254.5 L698.8,252.6 L696.3,250.5 L694.0,248.4 L691.9,246.1 L690.2,243.8 L688.6,241.5 L687.4,239.1 L686.5,236.6 L685.8,234.1 L685.4,231.6 L685.3,229.6 L690.7,230.8 L690.8,232.7 L691.1,235.0 L691.7,237.3 L692.6,239.5 L693.7,241.7 L695.1,243.9 L696.7,246.0 L698.6,248.1 L700.7,250.0 L703.0,251.9 L705.6,253.7 L708.3,255.4Z" fill="url(#g137)"/><path d="M704.5,256.4 L701.5,254.5 L698.8,252.6 L696.3,250.5 L694.0,248.4 L691.9,246.1 L690.2,243.8 L688.6,241.5 L687.4,239.1 L686.5,236.6 L685.8,234.1 L685.4,231.6 L685.3,229.6 L689.2,230.2 L689.3,232.1 L689.7,234.5 L690.3,236.8 L691.2,239.1 L692.3,241.4 L693.8,243.6 L695.4,245.8 L697.3,247.9 L699.5,249.9 L701.9,251.8 L704.5,253.7 L707.3,255.4Z" fill="url(#g138)"/><path d="M704.5,256.4 L701.5,254.5 L698.8,252.6 L696.3,250.5 L694.0,248.4 L691.9,246.1 L690.2,243.8 L688.6,241.5 L687.4,239.1 L686.5,236.6 L685.8,234.1 L685.4,231.6 L685.3,229.6 L687.3,229.8 L687.4,231.7 L687.8,234.1 L688.4,236.6 L689.3,238.9 L690.5,241.3 L692.0,243.6 L693.7,245.8 L695.7,248.0 L697.9,250.0 L700.4,252.0 L703.0,253.9 L705.9,255.7Z" fill="url(#g139)"/><path d="M685.3,229.6 L685.3,229.1 L695.7,237.7 L695.8,238.1Z" fill="#807c70"/><path d="M687.3,229.8 L687.3,229.3 L695.7,237.7 L695.8,238.1Z" fill="#837f73"/><path d="M689.2,230.2 L689.2,229.8 L695.7,237.7 L695.8,238.1Z" fill="#868275"/><path d="M690.7,230.8 L690.7,230.4 L695.7,237.7 L695.8,238.1Z" fill="#8a8678"/><path d="M691.3,231.1 L691.3,230.7 L695.7,237.7 L695.8,238.1Z" fill="#8d897b"/><path d="M691.8,231.5 L691.8,231.0 L695.7,237.7 L695.8,238.1Z" fill="#908c7e"/><path d="M692.3,231.8 L692.3,231.3 L695.7,237.7 L695.8,238.1Z" fill="#938f80"/><path d="M692.8,232.1 L692.8,231.7 L695.7,237.7 L695.8,238.1Z" fill="#969283"/><path d="M693.2,232.5 L693.2,232.1 L695.7,237.7 L695.8,238.1Z" fill="#979384"/><path d="M693.8,233.1 L693.8,232.7 L695.7,237.7 L695.8,238.1Z" fill="#938e80"/><path d="M694.4,233.9 L694.3,233.4 L695.7,237.7 L695.8,238.1Z" fill="#8e8a7c"/><path d="M694.8,234.5 L694.8,234.1 L695.7,237.7 L695.8,238.1Z" fill="#888376"/><path d="M695.1,235.2 L695.1,234.8 L695.7,237.7 L695.8,238.1Z" fill="#7b776b"/><path d="M695.6,236.5 L695.6,236.1 L695.7,237.7 L695.8,238.1Z" fill="#6e6b60"/></g><path d="M685.3,229.1 L685.3,224.0 L684.8,218.9 L684.0,213.9 L682.7,208.8 L681.2,203.8 L679.2,198.9 L676.8,194.0 L674.1,189.1 L671.1,184.3 L667.6,179.7 L663.9,175.1 L659.7,170.6 L655.3,166.2 L650.5,161.9 L645.4,157.7 L640.0,153.7 L634.3,149.8 L628.3,146.1 L622.1,142.5 L615.6,139.1 L608.8,135.8 L601.8,132.8 L594.5,129.9 L587.1,127.1 L579.4,124.6 L571.6,122.3 L563.6,120.1 L555.5,118.2 L547.2,116.5 L538.8,114.9 L530.3,113.6 L521.6,112.5 L513.0,111.7 L504.2,111.0 L495.4,110.6 L486.6,110.3 L477.8,110.3 L469.0,110.6 L460.2,111.0 L451.5,111.7 L442.8,112.5 L434.2,113.6 L425.7,115.0 L417.3,116.5 L409.0,118.2 L400.9,120.2 L392.9,122.3 L385.0,124.6 L377.4,127.2 L369.9,129.9 L362.7,132.8 L355.7,135.9 L348.9,139.1 L342.4,142.6 L336.2,146.1 L330.2,149.9 L324.5,153.8 L319.1,157.8 L314.0,161.9 L309.2,166.2 L304.8,170.6 L300.7,175.1 L296.9,179.7 L293.5,184.4 L290.4,189.2 L287.7,194.0 L285.4,198.9 L283.4,203.9 L281.8,208.9 L280.6,213.9 L279.8,219.0 L279.3,224.1 L279.2,229.2 L279.6,234.3 L280.3,239.3 L281.3,244.4 L282.8,249.4 L284.6,254.4 L286.8,259.3 L289.4,264.2 L292.3,269.0 L295.6,273.7 L299.3,278.3 L303.2,282.9 L307.6,287.3 L312.2,291.6 L317.2,295.8 L322.5,299.9 L328.1,303.8 L333.9,307.6 L340.1,311.2 L346.5,314.7 L353.2,318.1 L360.1,321.2 L367.3,324.2 L374.7,327.0 L382.2,329.6 L390.0,332.0 L397.9,334.2 L406.0,336.2 L414.3,338.0 L422.6,339.6 L431.1,341.0 L439.7,342.2 L448.3,343.1 L457.0,343.9 L465.8,344.4 L474.6,344.7 L483.4,344.8 L487.7,344.9 L492.0,345.1 L496.3,345.5 L500.5,346.0 L504.6,346.8 L508.7,347.6 L512.6,348.6 L516.4,349.8 L520.1,351.1 L523.6,352.6 L527.0,354.2 L530.1,355.9 L593.1,392.2 L656.1,428.6 L719.0,464.9 L782.0,501.3 L845.0,537.6 L907.9,574.0 L970.9,610.3 L1033.9,646.7 L1037.4,648.6 L1041.1,650.5 L1044.9,652.2 L1048.9,653.8 L1053.1,655.3 L1057.3,656.6 L1061.7,657.9 L1066.2,659.0 L1070.7,660.0 L1075.4,660.8 L1080.1,661.5 L1084.9,662.1 L1089.7,662.5 L1094.5,662.8 L1099.4,662.9 L1104.3,662.9 L1109.1,662.8 L1114.0,662.5 L1118.8,662.1 L1123.6,661.5 L1128.3,660.8 L1132.9,660.0 L1137.5,659.0 L1142.0,657.9 L1146.4,656.6 L1150.6,655.3 L1154.8,653.8 L1158.7,652.2 L1162.6,650.5 L1166.3,648.6 L1169.8,646.7 L1207.2,625.1 L1210.6,623.1 L1213.8,620.9 L1216.7,618.7 L1219.5,616.4 L1222.1,614.0 L1224.5,611.5 L1226.6,609.0 L1228.5,606.4 L1230.2,603.8 L1231.7,601.1 L1232.9,598.4 L1233.9,595.6 L1234.6,592.9 L1235.1,590.1 L1235.4,587.3 L1235.4,584.4 L1235.1,581.6 L1234.6,578.8 L1233.9,576.1 L1232.9,573.3 L1231.7,570.6 L1230.2,567.9 L1228.5,565.3 L1226.6,562.7 L1224.5,560.2 L1222.1,557.7 L1219.5,555.3 L1216.7,553.0 L1213.8,550.8 L1210.6,548.6 L1207.2,546.6 L1144.4,510.3 L1081.6,474.0 L1018.7,437.8 L955.9,401.5 L893.0,365.2 L830.2,328.9 L767.4,292.6 L704.5,256.4 L701.5,254.5 L698.8,252.6 L696.3,250.5 L694.0,248.4 L691.9,246.1 L690.2,243.8 L688.6,241.5 L687.4,239.1 L686.5,236.6 L685.8,234.1 L685.4,231.6Z M1105.7,535.5 L1130.8,550.0 L1155.9,564.5 L1181.0,579.0 L1183.5,580.5 L1185.8,582.1 L1187.9,583.9 L1189.8,585.7 L1191.5,587.5 L1193.0,589.5 L1194.2,591.5 L1195.2,593.5 L1195.9,595.6 L1196.4,597.7 L1196.7,599.8 L1196.7,601.9 L1196.4,604.0 L1195.9,606.1 L1195.2,608.2 L1194.2,610.2 L1193.0,612.2 L1191.5,614.2 L1189.8,616.0 L1187.9,617.8 L1185.8,619.6 L1183.5,621.2 L1181.0,622.8 L1166.8,631.0 L1164.1,632.4 L1161.3,633.7 L1158.3,634.9 L1155.2,636.0 L1151.9,637.0 L1148.5,637.9 L1145.1,638.6 L1141.6,639.1 L1138.0,639.6 L1134.3,639.9 L1130.7,640.0 L1127.0,640.0 L1123.4,639.9 L1119.7,639.6 L1116.2,639.1 L1112.6,638.6 L1109.2,637.9 L1105.8,637.0 L1102.6,636.0 L1099.4,634.9 L1096.5,633.7 L1093.6,632.4 L1090.9,631.0 L1065.8,616.5 L1040.8,602.0 L1015.7,587.5 L1013.2,586.0 L1010.9,584.3 L1008.8,582.6 L1006.8,580.8 L1005.2,578.9 L1003.7,577.0 L1002.5,575.0 L1001.5,572.9 L1000.7,570.9 L1000.2,568.8 L1000.0,566.7 L1000.0,564.5 L1000.2,562.4 L1000.7,560.3 L1001.5,558.3 L1002.5,556.2 L1003.7,554.2 L1005.2,552.3 L1006.8,550.4 L1008.8,548.6 L1010.9,546.9 L1013.2,545.2 L1015.7,543.7 L1029.9,535.5 L1032.6,534.1 L1035.4,532.7 L1038.4,531.5 L1041.5,530.4 L1044.8,529.4 L1048.1,528.6 L1051.6,527.9 L1055.1,527.3 L1058.7,526.9 L1062.3,526.6 L1066.0,526.4 L1069.6,526.4 L1073.3,526.6 L1076.9,526.9 L1080.5,527.3 L1084.0,527.9 L1087.5,528.6 L1090.8,529.4 L1094.1,530.4 L1097.2,531.5 L1100.2,532.7 L1103.1,534.1Z" fill="url(#topg)" fill-rule="evenodd"/><g clip-path="url(#slotclip)"><g fill="#3f3d37" stroke="#3f3d37" stroke-width="0.6"><path d="M1098.4,600.8 L1123.5,615.2 L1148.6,629.7 L1173.6,644.2 L1173.6,647.4 L1148.6,632.9 L1123.5,618.4 L1098.4,604.0Z"/><path d="M1173.6,644.2 L1175.7,645.4 L1177.5,646.8 L1179.2,648.2 L1180.8,649.6 L1182.1,651.1 L1183.3,652.7 L1184.3,654.3 L1185.1,655.9 L1185.7,657.6 L1186.1,659.3 L1186.3,661.0 L1186.3,661.9 L1186.3,665.1 L1186.3,664.2 L1186.1,662.5 L1185.7,660.8 L1185.1,659.1 L1184.3,657.5 L1183.3,655.9 L1182.1,654.3 L1180.8,652.8 L1179.2,651.4 L1177.5,650.0 L1175.7,648.6 L1173.6,647.4Z"/><path d="M1010.4,626.6 L1010.4,625.7 L1010.6,624.0 L1011.0,622.4 L1011.6,620.7 L1012.4,619.0 L1013.4,617.4 L1014.6,615.9 L1015.9,614.4 L1017.5,612.9 L1019.2,611.5 L1021.0,610.2 L1023.0,609.0 L1023.0,612.2 L1021.0,613.4 L1019.2,614.7 L1017.5,616.1 L1015.9,617.6 L1014.6,619.1 L1013.4,620.6 L1012.4,622.2 L1011.6,623.9 L1011.0,625.6 L1010.6,627.2 L1010.4,628.9 L1010.4,629.8Z"/><path d="M1023.0,609.0 L1037.2,600.8 L1037.2,604.0 L1023.0,612.2Z"/><path d="M1037.2,600.8 L1039.4,599.6 L1041.7,598.5 L1044.1,597.5 L1046.6,596.6 L1049.2,595.9 L1051.9,595.2 L1054.7,594.6 L1057.6,594.1 L1060.5,593.8 L1063.4,593.6 L1066.3,593.5 L1069.3,593.5 L1072.2,593.6 L1075.2,593.8 L1078.0,594.1 L1080.9,594.6 L1083.7,595.2 L1086.4,595.9 L1089.0,596.6 L1091.5,597.5 L1093.9,598.5 L1096.2,599.6 L1098.4,600.8 L1098.4,604.0 L1096.2,602.8 L1093.9,601.7 L1091.5,600.7 L1089.0,599.8 L1086.4,599.1 L1083.7,598.4 L1080.9,597.8 L1078.0,597.3 L1075.2,597.0 L1072.2,596.8 L1069.3,596.7 L1066.3,596.7 L1063.4,596.8 L1060.5,597.0 L1057.6,597.3 L1054.7,597.8 L1051.9,598.4 L1049.2,599.1 L1046.6,599.8 L1044.1,600.7 L1041.7,601.7 L1039.4,602.8 L1037.2,604.0Z"/></g><g><path d="M1098.4,548.2 L1123.5,562.7 L1148.6,577.2 L1173.6,591.7 L1173.6,644.2 L1148.6,629.7 L1123.5,615.2 L1098.4,600.8Z" fill="url(#g140)"/><path d="M1173.6,591.7 L1175.7,592.9 L1177.5,594.3 L1179.2,595.7 L1180.8,597.1 L1182.1,598.6 L1183.3,600.2 L1184.3,601.8 L1185.1,603.4 L1185.7,605.1 L1186.1,606.8 L1186.3,608.5 L1186.3,609.4 L1186.3,661.9 L1186.3,661.0 L1186.1,659.3 L1185.7,657.6 L1185.1,655.9 L1184.3,654.3 L1183.3,652.7 L1182.1,651.1 L1180.8,649.6 L1179.2,648.2 L1177.5,646.8 L1175.7,645.4 L1173.6,644.2Z" fill="url(#g155)"/><path d="M1010.4,574.1 L1010.4,573.2 L1010.6,571.5 L1011.0,569.9 L1011.6,568.2 L1012.4,566.5 L1013.4,564.9 L1014.6,563.4 L1015.9,561.9 L1017.5,560.4 L1019.2,559.0 L1021.0,557.7 L1023.0,556.5 L1023.0,609.0 L1021.0,610.2 L1019.2,611.5 L1017.5,612.9 L1015.9,614.4 L1014.6,615.9 L1013.4,617.4 L1012.4,619.0 L1011.6,620.7 L1011.0,622.4 L1010.6,624.0 L1010.4,625.7 L1010.4,626.6Z" fill="url(#g219)"/><path d="M1023.0,556.5 L1037.2,548.2 L1037.2,600.8 L1023.0,609.0Z" fill="url(#g234)"/><path d="M1037.2,548.2 L1039.4,547.1 L1041.7,546.0 L1044.1,545.0 L1046.6,544.1 L1049.2,543.4 L1051.9,542.7 L1054.7,542.1 L1057.6,541.6 L1060.5,541.3 L1063.4,541.1 L1066.3,541.0 L1069.3,541.0 L1072.2,541.1 L1075.2,541.3 L1078.0,541.6 L1080.9,542.1 L1083.7,542.7 L1086.4,543.4 L1089.0,544.1 L1091.5,545.0 L1093.9,546.0 L1096.2,547.1 L1098.4,548.2 L1098.4,600.8 L1096.2,599.6 L1093.9,598.5 L1091.5,597.5 L1089.0,596.6 L1086.4,595.9 L1083.7,595.2 L1080.9,594.6 L1078.0,594.1 L1075.2,593.8 L1072.2,593.6 L1069.3,593.5 L1066.3,593.5 L1063.4,593.6 L1060.5,593.8 L1057.6,594.1 L1054.7,594.6 L1051.9,595.2 L1049.2,595.9 L1046.6,596.6 L1044.1,597.5 L1041.7,598.5 L1039.4,599.6 L1037.2,600.8Z" fill="url(#g249)"/></g><path d="M1098.4,548.2 L1123.5,562.7 L1148.6,577.2 L1173.6,591.7 L1175.7,592.9 L1177.5,594.3 L1179.2,595.7 L1180.8,597.1 L1182.1,598.6 L1183.3,600.2 L1184.3,601.8 L1185.1,603.4 L1185.7,605.1 L1186.1,606.8 L1186.3,608.5 L1186.3,610.2 L1186.3,662.7 L1186.3,661.0 L1186.1,659.3 L1185.7,657.6 L1185.1,655.9 L1184.3,654.3 L1183.3,652.7 L1182.1,651.1 L1180.8,649.6 L1179.2,648.2 L1177.5,646.8 L1175.7,645.4 L1173.6,644.2 L1148.6,629.7 L1123.5,615.2 L1098.4,600.8Z" fill="url(#slotsh)"/><path d="M1010.4,575.0 L1010.4,573.2 L1010.6,571.5 L1011.0,569.9 L1011.6,568.2 L1012.4,566.5 L1013.4,564.9 L1014.6,563.4 L1015.9,561.9 L1017.5,560.4 L1019.2,559.0 L1021.0,557.7 L1023.0,556.5 L1037.2,548.2 L1039.4,547.1 L1041.7,546.0 L1044.1,545.0 L1046.6,544.1 L1049.2,543.4 L1051.9,542.7 L1054.7,542.1 L1057.6,541.6 L1060.5,541.3 L1063.4,541.1 L1066.3,541.0 L1069.3,541.0 L1072.2,541.1 L1075.2,541.3 L1078.0,541.6 L1080.9,542.1 L1083.7,542.7 L1086.4,543.4 L1089.0,544.1 L1091.5,545.0 L1093.9,546.0 L1096.2,547.1 L1098.4,548.2 L1098.4,600.8 L1096.2,599.6 L1093.9,598.5 L1091.5,597.5 L1089.0,596.6 L1086.4,595.9 L1083.7,595.2 L1080.9,594.6 L1078.0,594.1 L1075.2,593.8 L1072.2,593.6 L1069.3,593.5 L1066.3,593.5 L1063.4,593.6 L1060.5,593.8 L1057.6,594.1 L1054.7,594.6 L1051.9,595.2 L1049.2,595.9 L1046.6,596.6 L1044.1,597.5 L1041.7,598.5 L1039.4,599.6 L1037.2,600.8 L1023.0,609.0 L1021.0,610.2 L1019.2,611.5 L1017.5,612.9 L1015.9,614.4 L1014.6,615.9 L1013.4,617.4 L1012.4,619.0 L1011.6,620.7 L1011.0,622.4 L1010.6,624.0 L1010.4,625.7 L1010.4,627.5Z" fill="url(#slotsh)"/></g><g><path d="M1105.7,535.5 L1130.8,550.0 L1155.9,564.5 L1181.0,579.0 L1173.6,591.7 L1148.6,577.2 L1123.5,562.7 L1098.4,548.2Z" fill="url(#g141)"/><path d="M1104.3,536.5 L1129.4,551.0 L1154.5,565.4 L1179.6,579.9 L1173.6,591.7 L1148.6,577.2 L1123.5,562.7 L1098.4,548.2Z" fill="url(#g142)"/><path d="M1103.0,537.7 L1128.1,552.2 L1153.2,566.7 L1178.2,581.2 L1173.6,591.7 L1148.6,577.2 L1123.5,562.7 L1098.4,548.2Z" fill="url(#g143)"/><path d="M1101.9,538.9 L1127.0,553.4 L1152.1,567.9 L1177.2,582.4 L1173.6,591.7 L1148.6,577.2 L1123.5,562.7 L1098.4,548.2Z" fill="url(#g144)"/><path d="M1101.5,539.5 L1126.6,554.0 L1151.7,568.4 L1176.8,582.9 L1173.6,591.7 L1148.6,577.2 L1123.5,562.7 L1098.4,548.2Z" fill="url(#g145)"/><path d="M1101.2,540.0 L1126.2,554.5 L1151.3,569.0 L1176.4,583.4 L1173.6,591.7 L1148.6,577.2 L1123.5,562.7 L1098.4,548.2Z" fill="url(#g146)"/><path d="M1100.8,540.5 L1125.9,555.0 L1151.0,569.5 L1176.1,584.0 L1173.6,591.7 L1148.6,577.2 L1123.5,562.7 L1098.4,548.2Z" fill="url(#g147)"/><path d="M1100.5,541.1 L1125.6,555.6 L1150.7,570.0 L1175.7,584.5 L1173.6,591.7 L1148.6,577.2 L1123.5,562.7 L1098.4,548.2Z" fill="url(#g148)"/><path d="M1100.2,541.6 L1125.3,556.1 L1150.4,570.6 L1175.4,585.1 L1173.6,591.7 L1148.6,577.2 L1123.5,562.7 L1098.4,548.2Z" fill="url(#g149)"/><path d="M1099.8,542.4 L1124.9,556.9 L1150.0,571.4 L1175.0,585.9 L1173.6,591.7 L1148.6,577.2 L1123.5,562.7 L1098.4,548.2Z" fill="url(#g150)"/><path d="M1099.4,543.4 L1124.5,557.9 L1149.5,572.4 L1174.6,586.9 L1173.6,591.7 L1148.6,577.2 L1123.5,562.7 L1098.4,548.2Z" fill="url(#g151)"/><path d="M1099.1,544.3 L1124.2,558.7 L1149.2,573.2 L1174.3,587.7 L1173.6,591.7 L1148.6,577.2 L1123.5,562.7 L1098.4,548.2Z" fill="url(#g152)"/><path d="M1098.8,545.1 L1123.9,559.6 L1149.0,574.1 L1174.1,588.5 L1173.6,591.7 L1148.6,577.2 L1123.5,562.7 L1098.4,548.2Z" fill="url(#g153)"/><path d="M1098.5,546.6 L1123.6,561.0 L1148.7,575.5 L1173.8,590.0 L1173.6,591.7 L1148.6,577.2 L1123.5,562.7 L1098.4,548.2Z" fill="url(#g154)"/><path d="M1181.0,579.0 L1183.5,580.5 L1185.8,582.1 L1187.9,583.9 L1189.8,585.7 L1191.5,587.5 L1193.0,589.5 L1194.2,591.5 L1195.2,593.5 L1195.9,595.6 L1196.4,597.7 L1196.7,599.8 L1196.7,600.9 L1186.3,609.4 L1186.3,608.5 L1186.1,606.8 L1185.7,605.1 L1185.1,603.4 L1184.3,601.8 L1183.3,600.2 L1182.1,598.6 L1180.8,597.1 L1179.2,595.7 L1177.5,594.3 L1175.7,592.9 L1173.6,591.7Z" fill="url(#g156)"/><path d="M1179.6,579.9 L1182.0,581.4 L1184.2,583.0 L1186.3,584.6 L1188.1,586.4 L1189.7,588.2 L1191.1,590.1 L1192.3,592.0 L1193.3,593.9 L1194.0,595.9 L1194.5,598.0 L1194.7,600.0 L1194.7,601.0 L1186.3,609.4 L1186.3,608.5 L1186.1,606.8 L1185.7,605.1 L1185.1,603.4 L1184.3,601.8 L1183.3,600.2 L1182.1,598.6 L1180.8,597.1 L1179.2,595.7 L1177.5,594.3 L1175.7,592.9 L1173.6,591.7Z" fill="url(#g157)"/><path d="M1178.2,581.2 L1180.6,582.6 L1182.7,584.1 L1184.7,585.7 L1186.4,587.4 L1188.0,589.1 L1189.3,590.9 L1190.5,592.8 L1191.4,594.7 L1192.1,596.6 L1192.6,598.5 L1192.8,600.5 L1192.8,601.5 L1186.3,609.4 L1186.3,608.5 L1186.1,606.8 L1185.7,605.1 L1185.1,603.4 L1184.3,601.8 L1183.3,600.2 L1182.1,598.6 L1180.8,597.1 L1179.2,595.7 L1177.5,594.3 L1175.7,592.9 L1173.6,591.7Z" fill="url(#g158)"/><path d="M1177.2,582.4 L1179.5,583.7 L1181.5,585.2 L1183.4,586.8 L1185.2,588.4 L1186.7,590.1 L1188.0,591.8 L1189.1,593.6 L1190.0,595.5 L1190.6,597.3 L1191.1,599.2 L1191.3,601.1 L1191.3,602.1 L1186.3,609.4 L1186.3,608.5 L1186.1,606.8 L1185.7,605.1 L1185.1,603.4 L1184.3,601.8 L1183.3,600.2 L1182.1,598.6 L1180.8,597.1 L1179.2,595.7 L1177.5,594.3 L1175.7,592.9 L1173.6,591.7Z" fill="url(#g159)"/><path d="M1176.8,582.9 L1179.0,584.3 L1181.1,585.8 L1182.9,587.3 L1184.6,588.9 L1186.1,590.6 L1187.4,592.3 L1188.5,594.1 L1189.4,595.9 L1190.0,597.7 L1190.5,599.6 L1190.7,601.4 L1190.7,602.4 L1186.3,609.4 L1186.3,608.5 L1186.1,606.8 L1185.7,605.1 L1185.1,603.4 L1184.3,601.8 L1183.3,600.2 L1182.1,598.6 L1180.8,597.1 L1179.2,595.7 L1177.5,594.3 L1175.7,592.9 L1173.6,591.7Z" fill="url(#g160)"/><path d="M1176.4,583.4 L1178.6,584.8 L1180.6,586.2 L1182.5,587.8 L1184.2,589.4 L1185.7,591.0 L1186.9,592.7 L1188.0,594.5 L1188.9,596.3 L1189.5,598.1 L1190.0,599.9 L1190.2,601.8 L1190.2,602.7 L1186.3,609.4 L1186.3,608.5 L1186.1,606.8 L1185.7,605.1 L1185.1,603.4 L1184.3,601.8 L1183.3,600.2 L1182.1,598.6 L1180.8,597.1 L1179.2,595.7 L1177.5,594.3 L1175.7,592.9 L1173.6,591.7Z" fill="url(#g161)"/><path d="M1176.1,584.0 L1178.2,585.3 L1180.3,586.7 L1182.1,588.3 L1183.8,589.8 L1185.2,591.5 L1186.5,593.1 L1187.6,594.9 L1188.4,596.7 L1189.1,598.5 L1189.5,600.3 L1189.7,602.1 L1189.7,603.0 L1186.3,609.4 L1186.3,608.5 L1186.1,606.8 L1185.7,605.1 L1185.1,603.4 L1184.3,601.8 L1183.3,600.2 L1182.1,598.6 L1180.8,597.1 L1179.2,595.7 L1177.5,594.3 L1175.7,592.9 L1173.6,591.7Z" fill="url(#g162)"/><path d="M1175.7,584.5 L1177.9,585.9 L1179.9,587.3 L1181.7,588.8 L1183.4,590.3 L1184.8,591.9 L1186.1,593.6 L1187.1,595.3 L1188.0,597.1 L1188.6,598.9 L1189.0,600.7 L1189.3,602.5 L1189.3,603.4 L1186.3,609.4 L1186.3,608.5 L1186.1,606.8 L1185.7,605.1 L1185.1,603.4 L1184.3,601.8 L1183.3,600.2 L1182.1,598.6 L1180.8,597.1 L1179.2,595.7 L1177.5,594.3 L1175.7,592.9 L1173.6,591.7Z" fill="url(#g163)"/><path d="M1175.4,585.1 L1177.6,586.4 L1179.6,587.8 L1181.4,589.3 L1183.0,590.8 L1184.4,592.4 L1185.7,594.1 L1186.7,595.8 L1187.6,597.5 L1188.2,599.3 L1188.6,601.1 L1188.8,602.9 L1188.8,603.8 L1186.3,609.4 L1186.3,608.5 L1186.1,606.8 L1185.7,605.1 L1185.1,603.4 L1184.3,601.8 L1183.3,600.2 L1182.1,598.6 L1180.8,597.1 L1179.2,595.7 L1177.5,594.3 L1175.7,592.9 L1173.6,591.7Z" fill="url(#g164)"/><path d="M1175.0,585.9 L1177.2,587.2 L1179.1,588.6 L1180.9,590.0 L1182.5,591.6 L1183.9,593.1 L1185.1,594.8 L1186.2,596.5 L1187.0,598.2 L1187.6,599.9 L1188.1,601.7 L1188.3,603.5 L1188.3,604.4 L1186.3,609.4 L1186.3,608.5 L1186.1,606.8 L1185.7,605.1 L1185.1,603.4 L1184.3,601.8 L1183.3,600.2 L1182.1,598.6 L1180.8,597.1 L1179.2,595.7 L1177.5,594.3 L1175.7,592.9 L1173.6,591.7Z" fill="url(#g165)"/><path d="M1174.6,586.9 L1176.7,588.2 L1178.6,589.5 L1180.4,591.0 L1182.0,592.5 L1183.4,594.0 L1184.6,595.6 L1185.6,597.3 L1186.4,599.0 L1187.0,600.7 L1187.5,602.5 L1187.7,604.2 L1187.7,605.1 L1186.3,609.4 L1186.3,608.5 L1186.1,606.8 L1185.7,605.1 L1185.1,603.4 L1184.3,601.8 L1183.3,600.2 L1182.1,598.6 L1180.8,597.1 L1179.2,595.7 L1177.5,594.3 L1175.7,592.9 L1173.6,591.7Z" fill="url(#g166)"/><path d="M1174.3,587.7 L1176.4,589.0 L1178.3,590.3 L1180.0,591.8 L1181.6,593.2 L1183.0,594.8 L1184.2,596.4 L1185.2,598.0 L1186.0,599.7 L1186.6,601.4 L1187.0,603.1 L1187.3,604.9 L1187.3,605.8 L1186.3,609.4 L1186.3,608.5 L1186.1,606.8 L1185.7,605.1 L1185.1,603.4 L1184.3,601.8 L1183.3,600.2 L1182.1,598.6 L1180.8,597.1 L1179.2,595.7 L1177.5,594.3 L1175.7,592.9 L1173.6,591.7Z" fill="url(#g167)"/><path d="M1174.1,588.5 L1176.1,589.8 L1178.0,591.1 L1179.7,592.6 L1181.3,594.0 L1182.7,595.6 L1183.9,597.2 L1184.9,598.8 L1185.7,600.4 L1186.3,602.1 L1186.7,603.9 L1186.9,605.6 L1186.9,606.4 L1186.3,609.4 L1186.3,608.5 L1186.1,606.8 L1185.7,605.1 L1185.1,603.4 L1184.3,601.8 L1183.3,600.2 L1182.1,598.6 L1180.8,597.1 L1179.2,595.7 L1177.5,594.3 L1175.7,592.9 L1173.6,591.7Z" fill="url(#g168)"/><path d="M1173.8,590.0 L1175.8,591.3 L1177.7,592.6 L1179.4,594.0 L1180.9,595.4 L1182.3,597.0 L1183.5,598.5 L1184.5,600.1 L1185.3,601.8 L1185.9,603.5 L1186.3,605.2 L1186.5,606.9 L1186.5,607.7 L1186.3,609.4 L1186.3,608.5 L1186.1,606.8 L1185.7,605.1 L1185.1,603.4 L1184.3,601.8 L1183.3,600.2 L1182.1,598.6 L1180.8,597.1 L1179.2,595.7 L1177.5,594.3 L1175.7,592.9 L1173.6,591.7Z" fill="url(#g169)"/><path d="M1196.7,600.9 L1196.7,601.9 L1196.4,604.0 L1195.9,606.1 L1195.2,608.2 L1194.2,610.2 L1193.0,612.2 L1191.5,614.2 L1189.8,616.0 L1187.9,617.8 L1185.8,619.6 L1183.5,621.2 L1181.0,622.8 L1173.6,627.0 L1175.7,625.8 L1177.5,624.4 L1179.2,623.0 L1180.8,621.6 L1182.1,620.1 L1183.3,618.5 L1184.3,616.9 L1185.1,615.3 L1185.7,613.6 L1186.1,611.9 L1186.3,610.2 L1186.3,609.4Z" fill="url(#g170)"/><path d="M1196.7,600.9 L1196.7,601.9 L1196.4,604.0 L1195.9,606.1 L1195.2,608.2 L1194.2,610.2 L1193.0,612.2 L1191.5,614.2 L1189.8,616.0 L1187.9,617.8 L1185.8,619.6 L1183.5,621.2 L1181.0,622.8 L1173.8,625.5 L1175.8,624.2 L1177.7,622.9 L1179.4,621.5 L1180.9,620.0 L1182.3,618.5 L1183.5,616.9 L1184.5,615.3 L1185.3,613.7 L1185.9,612.0 L1186.3,610.3 L1186.5,608.6 L1186.5,607.7Z" fill="url(#g171)"/><path d="M1196.7,600.9 L1196.7,601.9 L1196.4,604.0 L1195.9,606.1 L1195.2,608.2 L1194.2,610.2 L1193.0,612.2 L1191.5,614.2 L1189.8,616.0 L1187.9,617.8 L1185.8,619.6 L1183.5,621.2 L1181.0,622.8 L1174.1,624.3 L1176.1,623.1 L1178.0,621.7 L1179.7,620.3 L1181.3,618.9 L1182.7,617.3 L1183.9,615.7 L1184.9,614.1 L1185.7,612.4 L1186.3,610.7 L1186.7,609.0 L1186.9,607.3 L1186.9,606.4Z" fill="url(#g172)"/><path d="M1196.7,600.9 L1196.7,601.9 L1196.4,604.0 L1195.9,606.1 L1195.2,608.2 L1194.2,610.2 L1193.0,612.2 L1191.5,614.2 L1189.8,616.0 L1187.9,617.8 L1185.8,619.6 L1183.5,621.2 L1181.0,622.8 L1174.3,623.8 L1176.4,622.5 L1178.3,621.2 L1180.0,619.8 L1181.6,618.3 L1183.0,616.7 L1184.2,615.1 L1185.2,613.5 L1186.0,611.8 L1186.6,610.1 L1187.0,608.4 L1187.3,606.6 L1187.3,605.8Z" fill="url(#g173)"/><path d="M1196.7,600.9 L1196.7,601.9 L1196.4,604.0 L1195.9,606.1 L1195.2,608.2 L1194.2,610.2 L1193.0,612.2 L1191.5,614.2 L1189.8,616.0 L1187.9,617.8 L1185.8,619.6 L1183.5,621.2 L1181.0,622.8 L1174.6,623.3 L1176.7,622.0 L1178.6,620.7 L1180.4,619.2 L1182.0,617.7 L1183.4,616.2 L1184.6,614.6 L1185.6,612.9 L1186.4,611.2 L1187.0,609.5 L1187.5,607.7 L1187.7,606.0 L1187.7,605.1Z" fill="url(#g174)"/><path d="M1196.7,600.9 L1196.7,601.9 L1196.4,604.0 L1195.9,606.1 L1195.2,608.2 L1194.2,610.2 L1193.0,612.2 L1191.5,614.2 L1189.8,616.0 L1187.9,617.8 L1185.8,619.6 L1183.5,621.2 L1181.0,622.8 L1175.0,622.8 L1177.2,621.5 L1179.1,620.1 L1180.9,618.7 L1182.5,617.1 L1183.9,615.6 L1185.1,613.9 L1186.2,612.3 L1187.0,610.5 L1187.6,608.8 L1188.1,607.0 L1188.3,605.2 L1188.3,604.4Z" fill="url(#g175)"/><path d="M1196.7,600.9 L1196.7,601.9 L1196.4,604.0 L1195.9,606.1 L1195.2,608.2 L1194.2,610.2 L1193.0,612.2 L1191.5,614.2 L1189.8,616.0 L1187.9,617.8 L1185.8,619.6 L1183.5,621.2 L1181.0,622.8 L1175.4,622.5 L1177.6,621.1 L1179.6,619.7 L1181.4,618.3 L1183.0,616.7 L1184.4,615.1 L1185.7,613.5 L1186.7,611.8 L1187.6,610.0 L1188.2,608.3 L1188.6,606.5 L1188.8,604.7 L1188.8,603.8Z" fill="url(#g176)"/><path d="M1196.7,600.9 L1196.7,601.9 L1196.4,604.0 L1195.9,606.1 L1195.2,608.2 L1194.2,610.2 L1193.0,612.2 L1191.5,614.2 L1189.8,616.0 L1187.9,617.8 L1185.8,619.6 L1183.5,621.2 L1181.0,622.8 L1175.7,622.3 L1177.9,620.9 L1179.9,619.5 L1181.7,618.0 L1183.4,616.5 L1184.8,614.9 L1186.1,613.2 L1187.1,611.5 L1188.0,609.7 L1188.6,607.9 L1189.0,606.1 L1189.3,604.3 L1189.3,603.4Z" fill="url(#g177)"/><path d="M1196.7,600.9 L1196.7,601.9 L1196.4,604.0 L1195.9,606.1 L1195.2,608.2 L1194.2,610.2 L1193.0,612.2 L1191.5,614.2 L1189.8,616.0 L1187.9,617.8 L1185.8,619.6 L1183.5,621.2 L1181.0,622.8 L1176.1,622.1 L1178.2,620.7 L1180.3,619.3 L1182.1,617.8 L1183.8,616.2 L1185.2,614.6 L1186.5,612.9 L1187.6,611.2 L1188.4,609.4 L1189.1,607.6 L1189.5,605.8 L1189.7,604.0 L1189.7,603.0Z" fill="url(#g178)"/><path d="M1196.7,600.9 L1196.7,601.9 L1196.4,604.0 L1195.9,606.1 L1195.2,608.2 L1194.2,610.2 L1193.0,612.2 L1191.5,614.2 L1189.8,616.0 L1187.9,617.8 L1185.8,619.6 L1183.5,621.2 L1181.0,622.8 L1176.4,622.0 L1178.6,620.6 L1180.6,619.2 L1182.5,617.6 L1184.2,616.0 L1185.7,614.4 L1186.9,612.7 L1188.0,610.9 L1188.9,609.1 L1189.5,607.3 L1190.0,605.5 L1190.2,603.6 L1190.2,602.7Z" fill="url(#g179)"/><path d="M1196.7,600.9 L1196.7,601.9 L1196.4,604.0 L1195.9,606.1 L1195.2,608.2 L1194.2,610.2 L1193.0,612.2 L1191.5,614.2 L1189.8,616.0 L1187.9,617.8 L1185.8,619.6 L1183.5,621.2 L1181.0,622.8 L1176.8,621.8 L1179.0,620.5 L1181.1,619.0 L1182.9,617.5 L1184.6,615.9 L1186.1,614.2 L1187.4,612.5 L1188.5,610.7 L1189.4,608.9 L1190.0,607.1 L1190.5,605.2 L1190.7,603.3 L1190.7,602.4Z" fill="url(#g180)"/><path d="M1196.7,600.9 L1196.7,601.9 L1196.4,604.0 L1195.9,606.1 L1195.2,608.2 L1194.2,610.2 L1193.0,612.2 L1191.5,614.2 L1189.8,616.0 L1187.9,617.8 L1185.8,619.6 L1183.5,621.2 L1181.0,622.8 L1177.2,621.8 L1179.5,620.4 L1181.5,618.9 L1183.4,617.4 L1185.2,615.7 L1186.7,614.0 L1188.0,612.3 L1189.1,610.5 L1190.0,608.7 L1190.6,606.8 L1191.1,604.9 L1191.3,603.0 L1191.3,602.1Z" fill="url(#g181)"/><path d="M1196.7,600.9 L1196.7,601.9 L1196.4,604.0 L1195.9,606.1 L1195.2,608.2 L1194.2,610.2 L1193.0,612.2 L1191.5,614.2 L1189.8,616.0 L1187.9,617.8 L1185.8,619.6 L1183.5,621.2 L1181.0,622.8 L1178.2,621.8 L1180.6,620.3 L1182.7,618.8 L1184.7,617.2 L1186.4,615.5 L1188.0,613.8 L1189.3,612.0 L1190.5,610.2 L1191.4,608.3 L1192.1,606.3 L1192.6,604.4 L1192.8,602.4 L1192.8,601.5Z" fill="url(#g182)"/><path d="M1196.7,600.9 L1196.7,601.9 L1196.4,604.0 L1195.9,606.1 L1195.2,608.2 L1194.2,610.2 L1193.0,612.2 L1191.5,614.2 L1189.8,616.0 L1187.9,617.8 L1185.8,619.6 L1183.5,621.2 L1181.0,622.8 L1179.6,622.1 L1182.0,620.6 L1184.2,619.0 L1186.3,617.4 L1188.1,615.6 L1189.7,613.8 L1191.1,611.9 L1192.3,610.0 L1193.3,608.1 L1194.0,606.1 L1194.5,604.1 L1194.7,602.0 L1194.7,601.0Z" fill="url(#g183)"/><path d="M1181.0,622.8 L1166.8,631.0 L1161.5,630.5 L1175.7,622.3Z" fill="url(#g184)"/><path d="M1181.0,622.8 L1166.8,631.0 L1161.9,630.3 L1176.1,622.1Z" fill="url(#g185)"/><path d="M1181.0,622.8 L1166.8,631.0 L1162.2,630.2 L1176.4,622.0Z" fill="url(#g186)"/><path d="M1181.0,622.8 L1166.8,631.0 L1162.6,630.0 L1176.8,621.8Z" fill="url(#g187)"/><path d="M1181.0,622.8 L1166.8,631.0 L1163.0,630.0 L1177.2,621.8Z" fill="url(#g188)"/><path d="M1181.0,622.8 L1166.8,631.0 L1164.0,630.0 L1178.2,621.8Z" fill="url(#g189)"/><path d="M1181.0,622.8 L1166.8,631.0 L1165.4,630.3 L1179.6,622.1Z" fill="url(#g190)"/><path d="M1166.8,631.0 L1164.1,632.4 L1161.3,633.7 L1158.3,634.9 L1155.2,636.0 L1151.9,637.0 L1148.5,637.9 L1145.1,638.6 L1141.6,639.1 L1138.0,639.6 L1134.3,639.9 L1130.7,640.0 L1127.0,640.0 L1123.4,639.9 L1119.7,639.6 L1116.2,639.1 L1112.6,638.6 L1109.2,637.9 L1105.8,637.0 L1102.6,636.0 L1099.4,634.9 L1096.5,633.7 L1093.6,632.4 L1090.9,631.0 L1096.2,630.5 L1098.5,631.7 L1100.9,632.9 L1103.5,633.9 L1106.2,634.9 L1109.0,635.7 L1111.9,636.4 L1114.9,637.0 L1117.9,637.5 L1121.0,637.9 L1124.1,638.1 L1127.3,638.3 L1130.4,638.3 L1133.6,638.1 L1136.7,637.9 L1139.8,637.5 L1142.8,637.0 L1145.8,636.4 L1148.7,635.7 L1151.5,634.9 L1154.2,633.9 L1156.8,632.9 L1159.2,631.7 L1161.5,630.5Z" fill="url(#g191)"/><path d="M1166.8,631.0 L1164.1,632.4 L1161.3,633.7 L1158.3,634.9 L1155.2,636.0 L1151.9,637.0 L1148.5,637.9 L1145.1,638.6 L1141.6,639.1 L1138.0,639.6 L1134.3,639.9 L1130.7,640.0 L1127.0,640.0 L1123.4,639.9 L1119.7,639.6 L1116.2,639.1 L1112.6,638.6 L1109.2,637.9 L1105.8,637.0 L1102.6,636.0 L1099.4,634.9 L1096.5,633.7 L1093.6,632.4 L1090.9,631.0 L1095.9,630.3 L1098.2,631.5 L1100.7,632.7 L1103.3,633.8 L1106.0,634.7 L1108.8,635.6 L1111.7,636.3 L1114.7,636.9 L1117.8,637.4 L1120.9,637.8 L1124.1,638.0 L1127.3,638.2 L1130.5,638.2 L1133.6,638.0 L1136.8,637.8 L1139.9,637.4 L1143.0,636.9 L1146.0,636.3 L1148.9,635.6 L1151.7,634.7 L1154.5,633.8 L1157.1,632.7 L1159.5,631.5 L1161.9,630.3Z" fill="url(#g192)"/><path d="M1166.8,631.0 L1164.1,632.4 L1161.3,633.7 L1158.3,634.9 L1155.2,636.0 L1151.9,637.0 L1148.5,637.9 L1145.1,638.6 L1141.6,639.1 L1138.0,639.6 L1134.3,639.9 L1130.7,640.0 L1127.0,640.0 L1123.4,639.9 L1119.7,639.6 L1116.2,639.1 L1112.6,638.6 L1109.2,637.9 L1105.8,637.0 L1102.6,636.0 L1099.4,634.9 L1096.5,633.7 L1093.6,632.4 L1090.9,631.0 L1095.5,630.2 L1097.9,631.4 L1100.4,632.6 L1103.0,633.7 L1105.7,634.6 L1108.6,635.5 L1111.6,636.2 L1114.6,636.9 L1117.7,637.4 L1120.9,637.7 L1124.0,638.0 L1127.3,638.1 L1130.5,638.1 L1133.7,638.0 L1136.9,637.7 L1140.0,637.4 L1143.1,636.9 L1146.2,636.2 L1149.1,635.5 L1152.0,634.6 L1154.7,633.7 L1157.4,632.6 L1159.9,631.4 L1162.2,630.2Z" fill="url(#g193)"/><path d="M1166.8,631.0 L1164.1,632.4 L1161.3,633.7 L1158.3,634.9 L1155.2,636.0 L1151.9,637.0 L1148.5,637.9 L1145.1,638.6 L1141.6,639.1 L1138.0,639.6 L1134.3,639.9 L1130.7,640.0 L1127.0,640.0 L1123.4,639.9 L1119.7,639.6 L1116.2,639.1 L1112.6,638.6 L1109.2,637.9 L1105.8,637.0 L1102.6,636.0 L1099.4,634.9 L1096.5,633.7 L1093.6,632.4 L1090.9,631.0 L1095.2,630.0 L1097.5,631.3 L1100.1,632.5 L1102.7,633.6 L1105.5,634.6 L1108.4,635.4 L1111.4,636.2 L1114.4,636.8 L1117.6,637.3 L1120.8,637.7 L1124.0,638.0 L1127.2,638.1 L1130.5,638.1 L1133.7,638.0 L1137.0,637.7 L1140.2,637.3 L1143.3,636.8 L1146.4,636.2 L1149.3,635.4 L1152.2,634.6 L1155.0,633.6 L1157.7,632.5 L1160.2,631.3 L1162.6,630.0Z" fill="url(#g194)"/><path d="M1166.8,631.0 L1164.1,632.4 L1161.3,633.7 L1158.3,634.9 L1155.2,636.0 L1151.9,637.0 L1148.5,637.9 L1145.1,638.6 L1141.6,639.1 L1138.0,639.6 L1134.3,639.9 L1130.7,640.0 L1127.0,640.0 L1123.4,639.9 L1119.7,639.6 L1116.2,639.1 L1112.6,638.6 L1109.2,637.9 L1105.8,637.0 L1102.6,636.0 L1099.4,634.9 L1096.5,633.7 L1093.6,632.4 L1090.9,631.0 L1094.7,630.0 L1097.1,631.3 L1099.7,632.5 L1102.4,633.6 L1105.2,634.6 L1108.1,635.4 L1111.2,636.2 L1114.3,636.8 L1117.4,637.3 L1120.7,637.7 L1123.9,638.0 L1127.2,638.1 L1130.5,638.1 L1133.8,638.0 L1137.1,637.7 L1140.3,637.3 L1143.5,636.8 L1146.6,636.2 L1149.6,635.4 L1152.5,634.6 L1155.3,633.6 L1158.0,632.5 L1160.6,631.3 L1163.0,630.0Z" fill="url(#g195)"/><path d="M1166.8,631.0 L1164.1,632.4 L1161.3,633.7 L1158.3,634.9 L1155.2,636.0 L1151.9,637.0 L1148.5,637.9 L1145.1,638.6 L1141.6,639.1 L1138.0,639.6 L1134.3,639.9 L1130.7,640.0 L1127.0,640.0 L1123.4,639.9 L1119.7,639.6 L1116.2,639.1 L1112.6,638.6 L1109.2,637.9 L1105.8,637.0 L1102.6,636.0 L1099.4,634.9 L1096.5,633.7 L1093.6,632.4 L1090.9,631.0 L1093.7,630.0 L1096.2,631.3 L1098.8,632.6 L1101.6,633.7 L1104.5,634.7 L1107.5,635.6 L1110.6,636.4 L1113.8,637.0 L1117.1,637.6 L1120.4,638.0 L1123.8,638.2 L1127.2,638.4 L1130.6,638.4 L1134.0,638.2 L1137.3,638.0 L1140.6,637.6 L1143.9,637.0 L1147.1,636.4 L1150.2,635.6 L1153.2,634.7 L1156.1,633.7 L1158.9,632.6 L1161.6,631.3 L1164.0,630.0Z" fill="url(#g196)"/><path d="M1166.8,631.0 L1164.1,632.4 L1161.3,633.7 L1158.3,634.9 L1155.2,636.0 L1151.9,637.0 L1148.5,637.9 L1145.1,638.6 L1141.6,639.1 L1138.0,639.6 L1134.3,639.9 L1130.7,640.0 L1127.0,640.0 L1123.4,639.9 L1119.7,639.6 L1116.2,639.1 L1112.6,638.6 L1109.2,637.9 L1105.8,637.0 L1102.6,636.0 L1099.4,634.9 L1096.5,633.7 L1093.6,632.4 L1090.9,631.0 L1092.3,630.3 L1094.9,631.7 L1097.7,633.0 L1100.5,634.1 L1103.5,635.2 L1106.7,636.1 L1109.9,637.0 L1113.2,637.6 L1116.6,638.2 L1120.1,638.6 L1123.6,638.9 L1127.1,639.0 L1130.6,639.0 L1134.1,638.9 L1137.6,638.6 L1141.1,638.2 L1144.5,637.6 L1147.8,637.0 L1151.1,636.1 L1154.2,635.2 L1157.2,634.1 L1160.1,633.0 L1162.8,631.7 L1165.4,630.3Z" fill="url(#g197)"/><path d="M1090.9,631.0 L1065.8,616.5 L1040.8,602.0 L1015.7,587.5 L1020.9,587.0 L1046.0,601.5 L1071.1,616.0 L1096.2,630.5Z" fill="url(#g198)"/><path d="M1090.9,631.0 L1065.8,616.5 L1040.8,602.0 L1015.7,587.5 L1020.6,586.8 L1045.7,601.3 L1070.8,615.8 L1095.9,630.3Z" fill="url(#g199)"/><path d="M1090.9,631.0 L1065.8,616.5 L1040.8,602.0 L1015.7,587.5 L1020.3,586.7 L1045.3,601.2 L1070.4,615.7 L1095.5,630.2Z" fill="url(#g200)"/><path d="M1090.9,631.0 L1065.8,616.5 L1040.8,602.0 L1015.7,587.5 L1019.9,586.6 L1045.0,601.1 L1070.1,615.6 L1095.2,630.0Z" fill="url(#g201)"/><path d="M1090.9,631.0 L1065.8,616.5 L1040.8,602.0 L1015.7,587.5 L1019.5,586.5 L1044.6,601.0 L1069.6,615.5 L1094.7,630.0Z" fill="url(#g202)"/><path d="M1090.9,631.0 L1065.8,616.5 L1040.8,602.0 L1015.7,587.5 L1018.4,586.5 L1043.5,601.0 L1068.6,615.5 L1093.7,630.0Z" fill="url(#g203)"/><path d="M1090.9,631.0 L1065.8,616.5 L1040.8,602.0 L1015.7,587.5 L1017.1,586.8 L1042.2,601.3 L1067.3,615.8 L1092.3,630.3Z" fill="url(#g204)"/><path d="M1015.7,587.5 L1013.2,586.0 L1010.9,584.3 L1008.8,582.6 L1006.8,580.8 L1005.2,578.9 L1003.7,577.0 L1002.5,575.0 L1001.5,572.9 L1000.7,570.9 L1000.2,568.8 L1000.0,566.7 L1000.0,565.6 L1010.4,574.1 L1010.4,575.0 L1010.6,576.7 L1011.0,578.3 L1011.6,580.0 L1012.4,581.7 L1013.4,583.3 L1014.6,584.8 L1015.9,586.3 L1017.5,587.8 L1019.2,589.2 L1021.0,590.5 L1023.0,591.8Z" fill="url(#g205)"/><path d="M1015.7,587.5 L1013.2,586.0 L1010.9,584.3 L1008.8,582.6 L1006.8,580.8 L1005.2,578.9 L1003.7,577.0 L1002.5,575.0 L1001.5,572.9 L1000.7,570.9 L1000.2,568.8 L1000.0,566.7 L1000.0,565.6 L1010.2,572.5 L1010.2,573.3 L1010.4,575.0 L1010.8,576.7 L1011.4,578.4 L1012.2,580.1 L1013.2,581.7 L1014.4,583.2 L1015.8,584.8 L1017.3,586.2 L1019.0,587.6 L1020.9,589.0 L1022.9,590.2Z" fill="url(#g206)"/><path d="M1015.7,587.5 L1013.2,586.0 L1010.9,584.3 L1008.8,582.6 L1006.8,580.8 L1005.2,578.9 L1003.7,577.0 L1002.5,575.0 L1001.5,572.9 L1000.7,570.9 L1000.2,568.8 L1000.0,566.7 L1000.0,565.6 L1009.8,571.2 L1009.8,572.1 L1010.0,573.8 L1010.4,575.5 L1011.0,577.2 L1011.8,578.9 L1012.8,580.5 L1014.0,582.1 L1015.4,583.6 L1016.9,585.1 L1018.7,586.5 L1020.5,587.8 L1022.6,589.1Z" fill="url(#g207)"/><path d="M1015.7,587.5 L1013.2,586.0 L1010.9,584.3 L1008.8,582.6 L1006.8,580.8 L1005.2,578.9 L1003.7,577.0 L1002.5,575.0 L1001.5,572.9 L1000.7,570.9 L1000.2,568.8 L1000.0,566.7 L1000.0,565.6 L1009.4,570.5 L1009.4,571.4 L1009.6,573.1 L1010.0,574.8 L1010.7,576.6 L1011.5,578.2 L1012.5,579.9 L1013.7,581.5 L1015.1,583.0 L1016.6,584.5 L1018.4,585.9 L1020.3,587.3 L1022.3,588.6Z" fill="url(#g208)"/><path d="M1015.7,587.5 L1013.2,586.0 L1010.9,584.3 L1008.8,582.6 L1006.8,580.8 L1005.2,578.9 L1003.7,577.0 L1002.5,575.0 L1001.5,572.9 L1000.7,570.9 L1000.2,568.8 L1000.0,566.7 L1000.0,565.6 L1009.0,569.9 L1009.0,570.7 L1009.2,572.5 L1009.6,574.2 L1010.2,576.0 L1011.1,577.6 L1012.1,579.3 L1013.3,580.9 L1014.7,582.5 L1016.3,584.0 L1018.0,585.4 L1020.0,586.8 L1022.0,588.1Z" fill="url(#g209)"/><path d="M1015.7,587.5 L1013.2,586.0 L1010.9,584.3 L1008.8,582.6 L1006.8,580.8 L1005.2,578.9 L1003.7,577.0 L1002.5,575.0 L1001.5,572.9 L1000.7,570.9 L1000.2,568.8 L1000.0,566.7 L1000.0,565.6 L1008.4,569.1 L1008.4,570.0 L1008.6,571.8 L1009.0,573.5 L1009.7,575.3 L1010.5,577.0 L1011.5,578.7 L1012.8,580.3 L1014.2,581.9 L1015.8,583.4 L1017.6,584.9 L1019.5,586.3 L1021.6,587.6Z" fill="url(#g210)"/><path d="M1015.7,587.5 L1013.2,586.0 L1010.9,584.3 L1008.8,582.6 L1006.8,580.8 L1005.2,578.9 L1003.7,577.0 L1002.5,575.0 L1001.5,572.9 L1000.7,570.9 L1000.2,568.8 L1000.0,566.7 L1000.0,565.6 L1007.8,568.5 L1007.8,569.4 L1008.1,571.2 L1008.5,573.0 L1009.1,574.8 L1010.0,576.5 L1011.0,578.2 L1012.3,579.9 L1013.7,581.5 L1015.3,583.0 L1017.1,584.5 L1019.1,585.9 L1021.2,587.2Z" fill="url(#g211)"/><path d="M1015.7,587.5 L1013.2,586.0 L1010.9,584.3 L1008.8,582.6 L1006.8,580.8 L1005.2,578.9 L1003.7,577.0 L1002.5,575.0 L1001.5,572.9 L1000.7,570.9 L1000.2,568.8 L1000.0,566.7 L1000.0,565.6 L1007.4,568.1 L1007.4,569.1 L1007.6,570.9 L1008.1,572.7 L1008.7,574.5 L1009.6,576.2 L1010.6,577.9 L1011.9,579.6 L1013.3,581.2 L1015.0,582.8 L1016.8,584.3 L1018.8,585.7 L1020.9,587.0Z" fill="url(#g212)"/><path d="M1015.7,587.5 L1013.2,586.0 L1010.9,584.3 L1008.8,582.6 L1006.8,580.8 L1005.2,578.9 L1003.7,577.0 L1002.5,575.0 L1001.5,572.9 L1000.7,570.9 L1000.2,568.8 L1000.0,566.7 L1000.0,565.6 L1007.0,567.8 L1007.0,568.7 L1007.2,570.5 L1007.6,572.4 L1008.3,574.2 L1009.1,575.9 L1010.2,577.7 L1011.5,579.4 L1012.9,581.0 L1014.6,582.6 L1016.4,584.1 L1018.4,585.5 L1020.6,586.8Z" fill="url(#g213)"/><path d="M1015.7,587.5 L1013.2,586.0 L1010.9,584.3 L1008.8,582.6 L1006.8,580.8 L1005.2,578.9 L1003.7,577.0 L1002.5,575.0 L1001.5,572.9 L1000.7,570.9 L1000.2,568.8 L1000.0,566.7 L1000.0,565.6 L1006.5,567.4 L1006.5,568.4 L1006.7,570.2 L1007.1,572.1 L1007.8,573.9 L1008.7,575.7 L1009.7,577.4 L1011.0,579.1 L1012.5,580.8 L1014.2,582.4 L1016.0,583.9 L1018.1,585.3 L1020.3,586.7Z" fill="url(#g214)"/><path d="M1015.7,587.5 L1013.2,586.0 L1010.9,584.3 L1008.8,582.6 L1006.8,580.8 L1005.2,578.9 L1003.7,577.0 L1002.5,575.0 L1001.5,572.9 L1000.7,570.9 L1000.2,568.8 L1000.0,566.7 L1000.0,565.6 L1006.0,567.1 L1006.0,568.1 L1006.2,570.0 L1006.6,571.8 L1007.3,573.7 L1008.2,575.5 L1009.3,577.2 L1010.6,579.0 L1012.1,580.6 L1013.7,582.2 L1015.6,583.8 L1017.7,585.2 L1019.9,586.6Z" fill="url(#g215)"/><path d="M1015.7,587.5 L1013.2,586.0 L1010.9,584.3 L1008.8,582.6 L1006.8,580.8 L1005.2,578.9 L1003.7,577.0 L1002.5,575.0 L1001.5,572.9 L1000.7,570.9 L1000.2,568.8 L1000.0,566.7 L1000.0,565.6 L1005.3,566.8 L1005.4,567.8 L1005.6,569.7 L1006.0,571.6 L1006.7,573.4 L1007.6,575.2 L1008.7,577.0 L1010.0,578.8 L1011.5,580.5 L1013.2,582.1 L1015.1,583.7 L1017.2,585.1 L1019.5,586.5Z" fill="url(#g216)"/><path d="M1015.7,587.5 L1013.2,586.0 L1010.9,584.3 L1008.8,582.6 L1006.8,580.8 L1005.2,578.9 L1003.7,577.0 L1002.5,575.0 L1001.5,572.9 L1000.7,570.9 L1000.2,568.8 L1000.0,566.7 L1000.0,565.6 L1003.9,566.2 L1003.9,567.2 L1004.1,569.2 L1004.6,571.1 L1005.3,573.0 L1006.2,574.9 L1007.3,576.8 L1008.7,578.6 L1010.2,580.3 L1012.0,582.0 L1014.0,583.6 L1016.1,585.1 L1018.4,586.5Z" fill="url(#g217)"/><path d="M1015.7,587.5 L1013.2,586.0 L1010.9,584.3 L1008.8,582.6 L1006.8,580.8 L1005.2,578.9 L1003.7,577.0 L1002.5,575.0 L1001.5,572.9 L1000.7,570.9 L1000.2,568.8 L1000.0,566.7 L1000.0,565.6 L1002.0,565.8 L1002.0,566.8 L1002.2,568.8 L1002.7,570.8 L1003.4,572.8 L1004.4,574.8 L1005.6,576.7 L1007.0,578.6 L1008.6,580.4 L1010.4,582.1 L1012.4,583.8 L1014.7,585.4 L1017.1,586.8Z" fill="url(#g218)"/><path d="M1000.0,565.6 L1000.0,564.5 L1000.2,562.4 L1000.7,560.3 L1001.5,558.3 L1002.5,556.2 L1003.7,554.2 L1005.2,552.3 L1006.8,550.4 L1008.8,548.6 L1010.9,546.9 L1013.2,545.2 L1015.7,543.7 L1023.0,556.5 L1021.0,557.7 L1019.2,559.0 L1017.5,560.4 L1015.9,561.9 L1014.6,563.4 L1013.4,564.9 L1012.4,566.5 L1011.6,568.2 L1011.0,569.9 L1010.6,571.5 L1010.4,573.2 L1010.4,574.1Z" fill="url(#g220)"/><path d="M1002.0,565.8 L1002.0,564.7 L1002.2,562.7 L1002.7,560.7 L1003.4,558.7 L1004.4,556.7 L1005.6,554.8 L1007.0,552.9 L1008.6,551.1 L1010.4,549.4 L1012.4,547.7 L1014.7,546.2 L1017.1,544.7 L1023.0,556.5 L1021.0,557.7 L1019.2,559.0 L1017.5,560.4 L1015.9,561.9 L1014.6,563.4 L1013.4,564.9 L1012.4,566.5 L1011.6,568.2 L1011.0,569.9 L1010.6,571.5 L1010.4,573.2 L1010.4,574.1Z" fill="url(#g221)"/><path d="M1003.9,566.2 L1003.9,565.2 L1004.1,563.3 L1004.6,561.3 L1005.3,559.4 L1006.2,557.5 L1007.3,555.7 L1008.7,553.9 L1010.2,552.1 L1012.0,550.5 L1014.0,548.9 L1016.1,547.3 L1018.4,545.9 L1023.0,556.5 L1021.0,557.7 L1019.2,559.0 L1017.5,560.4 L1015.9,561.9 L1014.6,563.4 L1013.4,564.9 L1012.4,566.5 L1011.6,568.2 L1011.0,569.9 L1010.6,571.5 L1010.4,573.2 L1010.4,574.1Z" fill="url(#g222)"/><path d="M1005.3,566.8 L1005.4,565.9 L1005.6,564.0 L1006.0,562.1 L1006.7,560.2 L1007.6,558.4 L1008.7,556.6 L1010.0,554.8 L1011.5,553.2 L1013.2,551.5 L1015.1,550.0 L1017.2,548.5 L1019.5,547.1 L1023.0,556.5 L1021.0,557.7 L1019.2,559.0 L1017.5,560.4 L1015.9,561.9 L1014.6,563.4 L1013.4,564.9 L1012.4,566.5 L1011.6,568.2 L1011.0,569.9 L1010.6,571.5 L1010.4,573.2 L1010.4,574.1Z" fill="url(#g223)"/><path d="M1006.0,567.1 L1006.0,566.2 L1006.2,564.3 L1006.6,562.5 L1007.3,560.6 L1008.2,558.8 L1009.3,557.0 L1010.6,555.3 L1012.1,553.6 L1013.7,552.0 L1015.6,550.5 L1017.7,549.0 L1019.9,547.7 L1023.0,556.5 L1021.0,557.7 L1019.2,559.0 L1017.5,560.4 L1015.9,561.9 L1014.6,563.4 L1013.4,564.9 L1012.4,566.5 L1011.6,568.2 L1011.0,569.9 L1010.6,571.5 L1010.4,573.2 L1010.4,574.1Z" fill="url(#g224)"/><path d="M1006.5,567.4 L1006.5,566.5 L1006.7,564.7 L1007.1,562.8 L1007.8,561.0 L1008.7,559.2 L1009.7,557.5 L1011.0,555.8 L1012.5,554.1 L1014.2,552.5 L1016.0,551.0 L1018.1,549.6 L1020.3,548.2 L1023.0,556.5 L1021.0,557.7 L1019.2,559.0 L1017.5,560.4 L1015.9,561.9 L1014.6,563.4 L1013.4,564.9 L1012.4,566.5 L1011.6,568.2 L1011.0,569.9 L1010.6,571.5 L1010.4,573.2 L1010.4,574.1Z" fill="url(#g225)"/><path d="M1007.0,567.8 L1007.0,566.9 L1007.2,565.0 L1007.6,563.2 L1008.3,561.4 L1009.1,559.6 L1010.2,557.9 L1011.5,556.2 L1012.9,554.6 L1014.6,553.0 L1016.4,551.5 L1018.4,550.1 L1020.6,548.7 L1023.0,556.5 L1021.0,557.7 L1019.2,559.0 L1017.5,560.4 L1015.9,561.9 L1014.6,563.4 L1013.4,564.9 L1012.4,566.5 L1011.6,568.2 L1011.0,569.9 L1010.6,571.5 L1010.4,573.2 L1010.4,574.1Z" fill="url(#g226)"/><path d="M1007.4,568.1 L1007.4,567.2 L1007.6,565.4 L1008.1,563.6 L1008.7,561.8 L1009.6,560.1 L1010.6,558.4 L1011.9,556.7 L1013.3,555.1 L1015.0,553.5 L1016.8,552.0 L1018.8,550.6 L1020.9,549.3 L1023.0,556.5 L1021.0,557.7 L1019.2,559.0 L1017.5,560.4 L1015.9,561.9 L1014.6,563.4 L1013.4,564.9 L1012.4,566.5 L1011.6,568.2 L1011.0,569.9 L1010.6,571.5 L1010.4,573.2 L1010.4,574.1Z" fill="url(#g227)"/><path d="M1007.8,568.5 L1007.8,567.6 L1008.1,565.8 L1008.5,564.0 L1009.1,562.3 L1010.0,560.5 L1011.0,558.8 L1012.3,557.2 L1013.7,555.6 L1015.3,554.0 L1017.1,552.6 L1019.1,551.2 L1021.2,549.8 L1023.0,556.5 L1021.0,557.7 L1019.2,559.0 L1017.5,560.4 L1015.9,561.9 L1014.6,563.4 L1013.4,564.9 L1012.4,566.5 L1011.6,568.2 L1011.0,569.9 L1010.6,571.5 L1010.4,573.2 L1010.4,574.1Z" fill="url(#g228)"/><path d="M1008.4,569.1 L1008.4,568.2 L1008.6,566.4 L1009.0,564.7 L1009.7,562.9 L1010.5,561.2 L1011.5,559.5 L1012.8,557.9 L1014.2,556.3 L1015.8,554.8 L1017.6,553.3 L1019.5,551.9 L1021.6,550.6 L1023.0,556.5 L1021.0,557.7 L1019.2,559.0 L1017.5,560.4 L1015.9,561.9 L1014.6,563.4 L1013.4,564.9 L1012.4,566.5 L1011.6,568.2 L1011.0,569.9 L1010.6,571.5 L1010.4,573.2 L1010.4,574.1Z" fill="url(#g229)"/><path d="M1009.0,569.9 L1009.0,569.0 L1009.2,567.2 L1009.6,565.5 L1010.2,563.7 L1011.1,562.1 L1012.1,560.4 L1013.3,558.8 L1014.7,557.2 L1016.3,555.7 L1018.0,554.3 L1020.0,552.9 L1022.0,551.6 L1023.0,556.5 L1021.0,557.7 L1019.2,559.0 L1017.5,560.4 L1015.9,561.9 L1014.6,563.4 L1013.4,564.9 L1012.4,566.5 L1011.6,568.2 L1011.0,569.9 L1010.6,571.5 L1010.4,573.2 L1010.4,574.1Z" fill="url(#g230)"/><path d="M1009.4,570.5 L1009.4,569.6 L1009.6,567.9 L1010.0,566.2 L1010.7,564.5 L1011.5,562.8 L1012.5,561.1 L1013.7,559.5 L1015.1,558.0 L1016.6,556.5 L1018.4,555.1 L1020.3,553.7 L1022.3,552.5 L1023.0,556.5 L1021.0,557.7 L1019.2,559.0 L1017.5,560.4 L1015.9,561.9 L1014.6,563.4 L1013.4,564.9 L1012.4,566.5 L1011.6,568.2 L1011.0,569.9 L1010.6,571.5 L1010.4,573.2 L1010.4,574.1Z" fill="url(#g231)"/><path d="M1009.8,571.2 L1009.8,570.3 L1010.0,568.6 L1010.4,566.9 L1011.0,565.2 L1011.8,563.5 L1012.8,561.9 L1014.0,560.3 L1015.4,558.8 L1016.9,557.3 L1018.7,555.9 L1020.5,554.6 L1022.6,553.3 L1023.0,556.5 L1021.0,557.7 L1019.2,559.0 L1017.5,560.4 L1015.9,561.9 L1014.6,563.4 L1013.4,564.9 L1012.4,566.5 L1011.6,568.2 L1011.0,569.9 L1010.6,571.5 L1010.4,573.2 L1010.4,574.1Z" fill="url(#g232)"/><path d="M1010.2,572.5 L1010.2,571.6 L1010.4,569.9 L1010.8,568.2 L1011.4,566.5 L1012.2,564.9 L1013.2,563.3 L1014.4,561.7 L1015.8,560.2 L1017.3,558.7 L1019.0,557.3 L1020.9,556.0 L1022.9,554.8 L1023.0,556.5 L1021.0,557.7 L1019.2,559.0 L1017.5,560.4 L1015.9,561.9 L1014.6,563.4 L1013.4,564.9 L1012.4,566.5 L1011.6,568.2 L1011.0,569.9 L1010.6,571.5 L1010.4,573.2 L1010.4,574.1Z" fill="url(#g233)"/><path d="M1015.7,543.7 L1029.9,535.5 L1037.2,548.2 L1023.0,556.5Z" fill="url(#g235)"/><path d="M1017.1,544.7 L1031.3,536.5 L1037.2,548.2 L1023.0,556.5Z" fill="url(#g236)"/><path d="M1018.4,545.9 L1032.6,537.7 L1037.2,548.2 L1023.0,556.5Z" fill="url(#g237)"/><path d="M1019.5,547.1 L1033.7,538.9 L1037.2,548.2 L1023.0,556.5Z" fill="url(#g238)"/><path d="M1019.9,547.7 L1034.1,539.5 L1037.2,548.2 L1023.0,556.5Z" fill="url(#g239)"/><path d="M1020.3,548.2 L1034.5,540.0 L1037.2,548.2 L1023.0,556.5Z" fill="url(#g240)"/><path d="M1020.6,548.7 L1034.8,540.5 L1037.2,548.2 L1023.0,556.5Z" fill="url(#g241)"/><path d="M1020.9,549.3 L1035.1,541.1 L1037.2,548.2 L1023.0,556.5Z" fill="url(#g242)"/><path d="M1021.2,549.8 L1035.4,541.6 L1037.2,548.2 L1023.0,556.5Z" fill="url(#g243)"/><path d="M1021.6,550.6 L1035.8,542.4 L1037.2,548.2 L1023.0,556.5Z" fill="url(#g244)"/><path d="M1022.0,551.6 L1036.3,543.4 L1037.2,548.2 L1023.0,556.5Z" fill="url(#g245)"/><path d="M1022.3,552.5 L1036.5,544.3 L1037.2,548.2 L1023.0,556.5Z" fill="url(#g246)"/><path d="M1022.6,553.3 L1036.8,545.1 L1037.2,548.2 L1023.0,556.5Z" fill="url(#g247)"/><path d="M1022.9,554.8 L1037.1,546.6 L1037.2,548.2 L1023.0,556.5Z" fill="url(#g248)"/><path d="M1029.9,535.5 L1032.6,534.1 L1035.4,532.7 L1038.4,531.5 L1041.5,530.4 L1044.8,529.4 L1048.1,528.6 L1051.6,527.9 L1055.1,527.3 L1058.7,526.9 L1062.3,526.6 L1066.0,526.4 L1069.6,526.4 L1073.3,526.6 L1076.9,526.9 L1080.5,527.3 L1084.0,527.9 L1087.5,528.6 L1090.8,529.4 L1094.1,530.4 L1097.2,531.5 L1100.2,532.7 L1103.1,534.1 L1105.7,535.5 L1098.4,548.2 L1096.2,547.1 L1093.9,546.0 L1091.5,545.0 L1089.0,544.1 L1086.4,543.4 L1083.7,542.7 L1080.9,542.1 L1078.0,541.6 L1075.2,541.3 L1072.2,541.1 L1069.3,541.0 L1066.3,541.0 L1063.4,541.1 L1060.5,541.3 L1057.6,541.6 L1054.7,542.1 L1051.9,542.7 L1049.2,543.4 L1046.6,544.1 L1044.1,545.0 L1041.7,546.0 L1039.4,547.1 L1037.2,548.2Z" fill="url(#g250)"/><path d="M1031.3,536.5 L1033.9,535.1 L1036.6,533.8 L1039.5,532.6 L1042.5,531.6 L1045.6,530.6 L1048.9,529.8 L1052.2,529.1 L1055.6,528.6 L1059.0,528.2 L1062.5,527.9 L1066.0,527.7 L1069.6,527.7 L1073.1,527.9 L1076.6,528.2 L1080.0,528.6 L1083.4,529.1 L1086.8,529.8 L1090.0,530.6 L1093.1,531.6 L1096.1,532.6 L1099.0,533.8 L1101.8,535.1 L1104.3,536.5 L1098.4,548.2 L1096.2,547.1 L1093.9,546.0 L1091.5,545.0 L1089.0,544.1 L1086.4,543.4 L1083.7,542.7 L1080.9,542.1 L1078.0,541.6 L1075.2,541.3 L1072.2,541.1 L1069.3,541.0 L1066.3,541.0 L1063.4,541.1 L1060.5,541.3 L1057.6,541.6 L1054.7,542.1 L1051.9,542.7 L1049.2,543.4 L1046.6,544.1 L1044.1,545.0 L1041.7,546.0 L1039.4,547.1 L1037.2,548.2Z" fill="url(#g251)"/><path d="M1032.6,537.7 L1035.1,536.4 L1037.8,535.1 L1040.5,534.0 L1043.4,533.0 L1046.4,532.1 L1049.6,531.3 L1052.8,530.6 L1056.0,530.1 L1059.4,529.7 L1062.7,529.4 L1066.1,529.3 L1069.5,529.3 L1072.9,529.4 L1076.3,529.7 L1079.6,530.1 L1082.9,530.6 L1086.1,531.3 L1089.2,532.1 L1092.2,533.0 L1095.1,534.0 L1097.9,535.1 L1100.5,536.4 L1103.0,537.7 L1098.4,548.2 L1096.2,547.1 L1093.9,546.0 L1091.5,545.0 L1089.0,544.1 L1086.4,543.4 L1083.7,542.7 L1080.9,542.1 L1078.0,541.6 L1075.2,541.3 L1072.2,541.1 L1069.3,541.0 L1066.3,541.0 L1063.4,541.1 L1060.5,541.3 L1057.6,541.6 L1054.7,542.1 L1051.9,542.7 L1049.2,543.4 L1046.6,544.1 L1044.1,545.0 L1041.7,546.0 L1039.4,547.1 L1037.2,548.2Z" fill="url(#g252)"/><path d="M1033.7,538.9 L1036.1,537.6 L1038.6,536.4 L1041.3,535.3 L1044.1,534.3 L1047.1,533.4 L1050.1,532.7 L1053.2,532.0 L1056.4,531.5 L1059.6,531.1 L1062.9,530.9 L1066.2,530.8 L1069.5,530.8 L1072.7,530.9 L1076.0,531.1 L1079.2,531.5 L1082.4,532.0 L1085.5,532.7 L1088.5,533.4 L1091.5,534.3 L1094.3,535.3 L1097.0,536.4 L1099.5,537.6 L1101.9,538.9 L1098.4,548.2 L1096.2,547.1 L1093.9,546.0 L1091.5,545.0 L1089.0,544.1 L1086.4,543.4 L1083.7,542.7 L1080.9,542.1 L1078.0,541.6 L1075.2,541.3 L1072.2,541.1 L1069.3,541.0 L1066.3,541.0 L1063.4,541.1 L1060.5,541.3 L1057.6,541.6 L1054.7,542.1 L1051.9,542.7 L1049.2,543.4 L1046.6,544.1 L1044.1,545.0 L1041.7,546.0 L1039.4,547.1 L1037.2,548.2Z" fill="url(#g253)"/><path d="M1034.1,539.5 L1036.5,538.2 L1039.0,537.0 L1041.7,535.9 L1044.4,534.9 L1047.3,534.1 L1050.3,533.3 L1053.4,532.7 L1056.5,532.2 L1059.7,531.8 L1062.9,531.6 L1066.2,531.4 L1069.4,531.4 L1072.7,531.6 L1075.9,531.8 L1079.1,532.2 L1082.2,532.7 L1085.3,533.3 L1088.3,534.1 L1091.2,534.9 L1094.0,535.9 L1096.6,537.0 L1099.1,538.2 L1101.5,539.5 L1098.4,548.2 L1096.2,547.1 L1093.9,546.0 L1091.5,545.0 L1089.0,544.1 L1086.4,543.4 L1083.7,542.7 L1080.9,542.1 L1078.0,541.6 L1075.2,541.3 L1072.2,541.1 L1069.3,541.0 L1066.3,541.0 L1063.4,541.1 L1060.5,541.3 L1057.6,541.6 L1054.7,542.1 L1051.9,542.7 L1049.2,543.4 L1046.6,544.1 L1044.1,545.0 L1041.7,546.0 L1039.4,547.1 L1037.2,548.2Z" fill="url(#g254)"/><path d="M1034.5,540.0 L1036.8,538.7 L1039.3,537.6 L1041.9,536.5 L1044.7,535.5 L1047.6,534.7 L1050.5,533.9 L1053.5,533.3 L1056.6,532.8 L1059.8,532.4 L1063.0,532.2 L1066.2,532.0 L1069.4,532.0 L1072.6,532.2 L1075.8,532.4 L1079.0,532.8 L1082.1,533.3 L1085.1,533.9 L1088.1,534.7 L1090.9,535.5 L1093.7,536.5 L1096.3,537.6 L1098.8,538.7 L1101.2,540.0 L1098.4,548.2 L1096.2,547.1 L1093.9,546.0 L1091.5,545.0 L1089.0,544.1 L1086.4,543.4 L1083.7,542.7 L1080.9,542.1 L1078.0,541.6 L1075.2,541.3 L1072.2,541.1 L1069.3,541.0 L1066.3,541.0 L1063.4,541.1 L1060.5,541.3 L1057.6,541.6 L1054.7,542.1 L1051.9,542.7 L1049.2,543.4 L1046.6,544.1 L1044.1,545.0 L1041.7,546.0 L1039.4,547.1 L1037.2,548.2Z" fill="url(#g255)"/><path d="M1034.8,540.5 L1037.1,539.3 L1039.6,538.1 L1042.2,537.0 L1044.9,536.1 L1047.8,535.2 L1050.7,534.5 L1053.7,533.9 L1056.8,533.4 L1059.9,533.0 L1063.0,532.8 L1066.2,532.6 L1069.4,532.6 L1072.6,532.8 L1075.7,533.0 L1078.9,533.4 L1081.9,533.9 L1084.9,534.5 L1087.9,535.2 L1090.7,536.1 L1093.4,537.0 L1096.0,538.1 L1098.5,539.3 L1100.8,540.5 L1098.4,548.2 L1096.2,547.1 L1093.9,546.0 L1091.5,545.0 L1089.0,544.1 L1086.4,543.4 L1083.7,542.7 L1080.9,542.1 L1078.0,541.6 L1075.2,541.3 L1072.2,541.1 L1069.3,541.0 L1066.3,541.0 L1063.4,541.1 L1060.5,541.3 L1057.6,541.6 L1054.7,542.1 L1051.9,542.7 L1049.2,543.4 L1046.6,544.1 L1044.1,545.0 L1041.7,546.0 L1039.4,547.1 L1037.2,548.2Z" fill="url(#g256)"/><path d="M1035.1,541.1 L1037.4,539.8 L1039.9,538.7 L1042.5,537.6 L1045.2,536.7 L1048.0,535.8 L1050.9,535.1 L1053.8,534.5 L1056.9,534.0 L1060.0,533.6 L1063.1,533.4 L1066.2,533.3 L1069.4,533.3 L1072.5,533.4 L1075.7,533.6 L1078.8,534.0 L1081.8,534.5 L1084.8,535.1 L1087.7,535.8 L1090.5,536.7 L1093.2,537.6 L1095.7,538.7 L1098.2,539.8 L1100.5,541.1 L1098.4,548.2 L1096.2,547.1 L1093.9,546.0 L1091.5,545.0 L1089.0,544.1 L1086.4,543.4 L1083.7,542.7 L1080.9,542.1 L1078.0,541.6 L1075.2,541.3 L1072.2,541.1 L1069.3,541.0 L1066.3,541.0 L1063.4,541.1 L1060.5,541.3 L1057.6,541.6 L1054.7,542.1 L1051.9,542.7 L1049.2,543.4 L1046.6,544.1 L1044.1,545.0 L1041.7,546.0 L1039.4,547.1 L1037.2,548.2Z" fill="url(#g257)"/><path d="M1035.4,541.6 L1037.7,540.4 L1040.1,539.3 L1042.7,538.2 L1045.4,537.3 L1048.1,536.5 L1051.0,535.7 L1054.0,535.1 L1057.0,534.6 L1060.0,534.3 L1063.1,534.0 L1066.2,533.9 L1069.4,533.9 L1072.5,534.0 L1075.6,534.3 L1078.7,534.6 L1081.7,535.1 L1084.6,535.7 L1087.5,536.5 L1090.3,537.3 L1092.9,538.2 L1095.5,539.3 L1097.9,540.4 L1100.2,541.6 L1098.4,548.2 L1096.2,547.1 L1093.9,546.0 L1091.5,545.0 L1089.0,544.1 L1086.4,543.4 L1083.7,542.7 L1080.9,542.1 L1078.0,541.6 L1075.2,541.3 L1072.2,541.1 L1069.3,541.0 L1066.3,541.0 L1063.4,541.1 L1060.5,541.3 L1057.6,541.6 L1054.7,542.1 L1051.9,542.7 L1049.2,543.4 L1046.6,544.1 L1044.1,545.0 L1041.7,546.0 L1039.4,547.1 L1037.2,548.2Z" fill="url(#g258)"/><path d="M1035.8,542.4 L1038.1,541.2 L1040.5,540.1 L1043.0,539.1 L1045.6,538.1 L1048.4,537.3 L1051.2,536.6 L1054.1,536.0 L1057.1,535.5 L1060.1,535.2 L1063.2,534.9 L1066.3,534.8 L1069.4,534.8 L1072.4,534.9 L1075.5,535.2 L1078.5,535.5 L1081.5,536.0 L1084.4,536.6 L1087.2,537.3 L1090.0,538.1 L1092.6,539.1 L1095.1,540.1 L1097.5,541.2 L1099.8,542.4 L1098.4,548.2 L1096.2,547.1 L1093.9,546.0 L1091.5,545.0 L1089.0,544.1 L1086.4,543.4 L1083.7,542.7 L1080.9,542.1 L1078.0,541.6 L1075.2,541.3 L1072.2,541.1 L1069.3,541.0 L1066.3,541.0 L1063.4,541.1 L1060.5,541.3 L1057.6,541.6 L1054.7,542.1 L1051.9,542.7 L1049.2,543.4 L1046.6,544.1 L1044.1,545.0 L1041.7,546.0 L1039.4,547.1 L1037.2,548.2Z" fill="url(#g259)"/><path d="M1036.3,543.4 L1038.5,542.2 L1040.8,541.1 L1043.3,540.1 L1045.9,539.2 L1048.6,538.4 L1051.4,537.7 L1054.3,537.1 L1057.2,536.6 L1060.2,536.3 L1063.2,536.0 L1066.3,535.9 L1069.3,535.9 L1072.4,536.0 L1075.4,536.3 L1078.4,536.6 L1081.3,537.1 L1084.2,537.7 L1087.0,538.4 L1089.7,539.2 L1092.3,540.1 L1094.8,541.1 L1097.1,542.2 L1099.4,543.4 L1098.4,548.2 L1096.2,547.1 L1093.9,546.0 L1091.5,545.0 L1089.0,544.1 L1086.4,543.4 L1083.7,542.7 L1080.9,542.1 L1078.0,541.6 L1075.2,541.3 L1072.2,541.1 L1069.3,541.0 L1066.3,541.0 L1063.4,541.1 L1060.5,541.3 L1057.6,541.6 L1054.7,542.1 L1051.9,542.7 L1049.2,543.4 L1046.6,544.1 L1044.1,545.0 L1041.7,546.0 L1039.4,547.1 L1037.2,548.2Z" fill="url(#g260)"/><path d="M1036.5,544.3 L1038.8,543.1 L1041.1,542.0 L1043.6,541.0 L1046.1,540.1 L1048.8,539.3 L1051.6,538.6 L1054.4,538.0 L1057.3,537.5 L1060.3,537.2 L1063.3,536.9 L1066.3,536.8 L1069.3,536.8 L1072.3,536.9 L1075.3,537.2 L1078.3,537.5 L1081.2,538.0 L1084.0,538.6 L1086.8,539.3 L1089.5,540.1 L1092.1,541.0 L1094.5,542.0 L1096.9,543.1 L1099.1,544.3 L1098.4,548.2 L1096.2,547.1 L1093.9,546.0 L1091.5,545.0 L1089.0,544.1 L1086.4,543.4 L1083.7,542.7 L1080.9,542.1 L1078.0,541.6 L1075.2,541.3 L1072.2,541.1 L1069.3,541.0 L1066.3,541.0 L1063.4,541.1 L1060.5,541.3 L1057.6,541.6 L1054.7,542.1 L1051.9,542.7 L1049.2,543.4 L1046.6,544.1 L1044.1,545.0 L1041.7,546.0 L1039.4,547.1 L1037.2,548.2Z" fill="url(#g261)"/><path d="M1036.8,545.1 L1039.0,543.9 L1041.3,542.8 L1043.8,541.8 L1046.3,540.9 L1049.0,540.1 L1051.7,539.4 L1054.5,538.9 L1057.4,538.4 L1060.4,538.0 L1063.3,537.8 L1066.3,537.7 L1069.3,537.7 L1072.3,537.8 L1075.3,538.0 L1078.2,538.4 L1081.1,538.9 L1083.9,539.4 L1086.6,540.1 L1089.3,540.9 L1091.9,541.8 L1094.3,542.8 L1096.6,543.9 L1098.8,545.1 L1098.4,548.2 L1096.2,547.1 L1093.9,546.0 L1091.5,545.0 L1089.0,544.1 L1086.4,543.4 L1083.7,542.7 L1080.9,542.1 L1078.0,541.6 L1075.2,541.3 L1072.2,541.1 L1069.3,541.0 L1066.3,541.0 L1063.4,541.1 L1060.5,541.3 L1057.6,541.6 L1054.7,542.1 L1051.9,542.7 L1049.2,543.4 L1046.6,544.1 L1044.1,545.0 L1041.7,546.0 L1039.4,547.1 L1037.2,548.2Z" fill="url(#g262)"/><path d="M1037.1,546.6 L1039.3,545.4 L1041.6,544.3 L1044.0,543.3 L1046.5,542.4 L1049.2,541.6 L1051.9,541.0 L1054.7,540.4 L1057.5,539.9 L1060.4,539.6 L1063.4,539.3 L1066.3,539.2 L1069.3,539.2 L1072.3,539.3 L1075.2,539.6 L1078.1,539.9 L1080.9,540.4 L1083.7,541.0 L1086.5,541.6 L1089.1,542.4 L1091.6,543.3 L1094.0,544.3 L1096.3,545.4 L1098.5,546.6 L1098.4,548.2 L1096.2,547.1 L1093.9,546.0 L1091.5,545.0 L1089.0,544.1 L1086.4,543.4 L1083.7,542.7 L1080.9,542.1 L1078.0,541.6 L1075.2,541.3 L1072.2,541.1 L1069.3,541.0 L1066.3,541.0 L1063.4,541.1 L1060.5,541.3 L1057.6,541.6 L1054.7,542.1 L1051.9,542.7 L1049.2,543.4 L1046.6,544.1 L1044.1,545.0 L1041.7,546.0 L1039.4,547.1 L1037.2,548.2Z" fill="url(#g263)"/></g><g clip-path="url(#slotclip)"><path d="M1098.4,600.8 L1123.5,615.2 L1148.6,629.7 L1173.6,644.2 L1175.7,645.4 L1177.5,646.8 L1179.2,648.2 L1180.8,649.6 L1182.1,651.1 L1183.3,652.7 L1184.3,654.3 L1185.1,655.9 L1185.7,657.6 L1186.1,659.3 L1186.3,661.0 L1186.3,662.7 M1010.4,627.5 L1010.4,625.7 L1010.6,624.0 L1011.0,622.4 L1011.6,620.7 L1012.4,619.0 L1013.4,617.4 L1014.6,615.9 L1015.9,614.4 L1017.5,612.9 L1019.2,611.5 L1021.0,610.2 L1023.0,609.0 L1037.2,600.8 L1039.4,599.6 L1041.7,598.5 L1044.1,597.5 L1046.6,596.6 L1049.2,595.9 L1051.9,595.2 L1054.7,594.6 L1057.6,594.1 L1060.5,593.8 L1063.4,593.6 L1066.3,593.5 L1069.3,593.5 L1072.2,593.6 L1075.2,593.8 L1078.0,594.1 L1080.9,594.6 L1083.7,595.2 L1086.4,595.9 L1089.0,596.6 L1091.5,597.5 L1093.9,598.5 L1096.2,599.6 L1098.4,600.8 M1098.4,548.2 L1123.5,562.7 L1148.6,577.2 L1173.6,591.7 L1175.7,592.9 L1177.5,594.3 L1179.2,595.7 L1180.8,597.1 L1182.1,598.6 L1183.3,600.2 L1184.3,601.8 L1185.1,603.4 L1185.7,605.1 L1186.1,606.8 L1186.3,608.5 L1186.3,610.2 M1010.4,575.0 L1010.4,573.2 L1010.6,571.5 L1011.0,569.9 L1011.6,568.2 L1012.4,566.5 L1013.4,564.9 L1014.6,563.4 L1015.9,561.9 L1017.5,560.4 L1019.2,559.0 L1021.0,557.7 L1023.0,556.5 L1037.2,548.2 L1039.4,547.1 L1041.7,546.0 L1044.1,545.0 L1046.6,544.1 L1049.2,543.4 L1051.9,542.7 L1054.7,542.1 L1057.6,541.6 L1060.5,541.3 L1063.4,541.1 L1066.3,541.0 L1069.3,541.0 L1072.2,541.1 L1075.2,541.3 L1078.0,541.6 L1080.9,542.1 L1083.7,542.7 L1086.4,543.4 L1089.0,544.1 L1091.5,545.0 L1093.9,546.0 L1096.2,547.1 L1098.4,548.2 M1105.7,535.5 L1105.0,536.0 L1104.2,536.6 L1103.5,537.2 L1102.7,538.0 L1102.1,538.8 L1101.4,539.6 L1100.8,540.5 L1100.3,541.5 L1099.8,542.4 L1099.4,543.4 L1099.0,544.4 L1098.7,545.4 L1098.5,546.4 L1098.4,547.3 L1098.4,548.2 M1098.4,548.2 L1098.4,603.3 M1181.0,579.0 L1180.2,579.4 L1179.5,580.0 L1178.7,580.7 L1178.0,581.4 L1177.3,582.2 L1176.7,583.1 L1176.1,584.0 L1175.5,584.9 L1175.0,585.9 L1174.6,586.9 L1174.3,587.9 L1174.0,588.9 L1173.8,589.8 L1173.7,590.8 L1173.6,591.7 M1173.6,591.7 L1173.6,646.8 M1181.0,622.8 L1180.2,622.4 L1179.5,622.1 L1178.7,621.9 L1178.0,621.8 L1177.3,621.8 L1176.7,621.9 L1176.1,622.1 M1166.8,631.0 L1166.0,630.6 L1165.3,630.3 L1164.5,630.1 L1163.8,630.0 L1163.1,630.0 L1162.5,630.1 L1161.9,630.3 M1090.9,631.0 L1091.7,630.6 L1092.5,630.3 L1093.2,630.1 L1093.9,630.0 L1094.6,630.0 L1095.3,630.1 L1095.9,630.3 M1015.7,587.5 L1016.4,587.1 L1017.2,586.8 L1017.9,586.6 L1018.7,586.5 L1019.4,586.5 L1020.0,586.6 L1020.6,586.8 M1015.7,543.7 L1016.4,544.2 L1017.2,544.8 L1017.9,545.4 L1018.7,546.2 L1019.4,547.0 L1020.0,547.8 L1020.6,548.7 L1021.1,549.7 L1021.6,550.6 L1022.0,551.6 L1022.4,552.6 L1022.7,553.6 L1022.9,554.6 L1023.0,555.5 L1023.0,556.5 M1023.0,556.5 L1023.0,611.5 M1029.9,535.5 L1030.6,536.0 L1031.4,536.6 L1032.2,537.2 L1032.9,538.0 L1033.6,538.8 L1034.2,539.6 L1034.8,540.5 L1035.3,541.5 L1035.8,542.4 L1036.3,543.4 L1036.6,544.4 L1036.9,545.4 L1037.1,546.4 L1037.2,547.3 L1037.2,548.2 M1037.2,548.2 L1037.2,603.3" fill="none" stroke="#0b0b0b" stroke-width="1.1" stroke-linejoin="round"/></g><path d="M685.3,229.1 L685.3,224.0 L684.8,218.9 L684.0,213.9 L682.7,208.8 L681.2,203.8 L679.2,198.9 L676.8,194.0 L674.1,189.1 L671.1,184.3 L667.6,179.7 L663.9,175.1 L659.7,170.6 L655.3,166.2 L650.5,161.9 L645.4,157.7 L640.0,153.7 L634.3,149.8 L628.3,146.1 L622.1,142.5 L615.6,139.1 L608.8,135.8 L601.8,132.8 L594.5,129.9 L587.1,127.1 L579.4,124.6 L571.6,122.3 L563.6,120.1 L555.5,118.2 L547.2,116.5 L538.8,114.9 L530.3,113.6 L521.6,112.5 L513.0,111.7 L504.2,111.0 L495.4,110.6 L486.6,110.3 L477.8,110.3 L469.0,110.6 L460.2,111.0 L451.5,111.7 L442.8,112.5 L434.2,113.6 L425.7,115.0 L417.3,116.5 L409.0,118.2 L400.9,120.2 L392.9,122.3 L385.0,124.6 L377.4,127.2 L369.9,129.9 L362.7,132.8 L355.7,135.9 L348.9,139.1 L342.4,142.6 L336.2,146.1 L330.2,149.9 L324.5,153.8 L319.1,157.8 L314.0,161.9 L309.2,166.2 L304.8,170.6 L300.7,175.1 L296.9,179.7 L293.5,184.4 L290.4,189.2 L287.7,194.0 L285.4,198.9 L283.4,203.9 L281.8,208.9 L280.6,213.9 L279.8,219.0 L279.3,224.1 L279.2,229.2 L279.6,234.3 L280.3,239.3 L281.3,244.4 L282.8,249.4 L284.6,254.4 L286.8,259.3 L289.4,264.2 L292.3,269.0 L295.6,273.7 L299.3,278.3 L303.2,282.9 L307.6,287.3 L312.2,291.6 L317.2,295.8 L322.5,299.9 L328.1,303.8 L333.9,307.6 L340.1,311.2 L346.5,314.7 L353.2,318.1 L360.1,321.2 L367.3,324.2 L374.7,327.0 L382.2,329.6 L390.0,332.0 L397.9,334.2 L406.0,336.2 L414.3,338.0 L422.6,339.6 L431.1,341.0 L439.7,342.2 L448.3,343.1 L457.0,343.9 L465.8,344.4 L474.6,344.7 L483.4,344.8 L487.7,344.9 L492.0,345.1 L496.3,345.5 L500.5,346.0 L504.6,346.8 L508.7,347.6 L512.6,348.6 L516.4,349.8 L520.1,351.1 L523.6,352.6 L527.0,354.2 L530.1,355.9 L593.1,392.2 L656.1,428.6 L719.0,464.9 L782.0,501.3 L845.0,537.6 L907.9,574.0 L970.9,610.3 L1033.9,646.7 L1037.4,648.6 L1041.1,650.5 L1044.9,652.2 L1048.9,653.8 L1053.1,655.3 L1057.3,656.6 L1061.7,657.9 L1066.2,659.0 L1070.7,660.0 L1075.4,660.8 L1080.1,661.5 L1084.9,662.1 L1089.7,662.5 L1094.5,662.8 L1099.4,662.9 L1104.3,662.9 L1109.1,662.8 L1114.0,662.5 L1118.8,662.1 L1123.6,661.5 L1128.3,660.8 L1132.9,660.0 L1137.5,659.0 L1142.0,657.9 L1146.4,656.6 L1150.6,655.3 L1154.8,653.8 L1158.7,652.2 L1162.6,650.5 L1166.3,648.6 L1169.8,646.7 L1207.2,625.1 L1210.6,623.1 L1213.8,620.9 L1216.7,618.7 L1219.5,616.4 L1222.1,614.0 L1224.5,611.5 L1226.6,609.0 L1228.5,606.4 L1230.2,603.8 L1231.7,601.1 L1232.9,598.4 L1233.9,595.6 L1234.6,592.9 L1235.1,590.1 L1235.4,587.3 L1235.4,584.4 L1235.1,581.6 L1234.6,578.8 L1233.9,576.1 L1232.9,573.3 L1231.7,570.6 L1230.2,567.9 L1228.5,565.3 L1226.6,562.7 L1224.5,560.2 L1222.1,557.7 L1219.5,555.3 L1216.7,553.0 L1213.8,550.8 L1210.6,548.6 L1207.2,546.6 L1144.4,510.3 L1081.6,474.0 L1018.7,437.8 L955.9,401.5 L893.0,365.2 L830.2,328.9 L767.4,292.6 L704.5,256.4 L701.5,254.5 L698.8,252.6 L696.3,250.5 L694.0,248.4 L691.9,246.1 L690.2,243.8 L688.6,241.5 L687.4,239.1 L686.5,236.6 L685.8,234.1 L685.4,231.6Z M1105.7,535.5 L1130.8,550.0 L1155.9,564.5 L1181.0,579.0 L1183.5,580.5 L1185.8,582.1 L1187.9,583.9 L1189.8,585.7 L1191.5,587.5 L1193.0,589.5 L1194.2,591.5 L1195.2,593.5 L1195.9,595.6 L1196.4,597.7 L1196.7,599.8 L1196.7,601.9 L1196.4,604.0 L1195.9,606.1 L1195.2,608.2 L1194.2,610.2 L1193.0,612.2 L1191.5,614.2 L1189.8,616.0 L1187.9,617.8 L1185.8,619.6 L1183.5,621.2 L1181.0,622.8 L1166.8,631.0 L1164.1,632.4 L1161.3,633.7 L1158.3,634.9 L1155.2,636.0 L1151.9,637.0 L1148.5,637.9 L1145.1,638.6 L1141.6,639.1 L1138.0,639.6 L1134.3,639.9 L1130.7,640.0 L1127.0,640.0 L1123.4,639.9 L1119.7,639.6 L1116.2,639.1 L1112.6,638.6 L1109.2,637.9 L1105.8,637.0 L1102.6,636.0 L1099.4,634.9 L1096.5,633.7 L1093.6,632.4 L1090.9,631.0 L1065.8,616.5 L1040.8,602.0 L1015.7,587.5 L1013.2,586.0 L1010.9,584.3 L1008.8,582.6 L1006.8,580.8 L1005.2,578.9 L1003.7,577.0 L1002.5,575.0 L1001.5,572.9 L1000.7,570.9 L1000.2,568.8 L1000.0,566.7 L1000.0,564.5 L1000.2,562.4 L1000.7,560.3 L1001.5,558.3 L1002.5,556.2 L1003.7,554.2 L1005.2,552.3 L1006.8,550.4 L1008.8,548.6 L1010.9,546.9 L1013.2,545.2 L1015.7,543.7 L1029.9,535.5 L1032.6,534.1 L1035.4,532.7 L1038.4,531.5 L1041.5,530.4 L1044.8,529.4 L1048.1,528.6 L1051.6,527.9 L1055.1,527.3 L1058.7,526.9 L1062.3,526.6 L1066.0,526.4 L1069.6,526.4 L1073.3,526.6 L1076.9,526.9 L1080.5,527.3 L1084.0,527.9 L1087.5,528.6 L1090.8,529.4 L1094.1,530.4 L1097.2,531.5 L1100.2,532.7 L1103.1,534.1Z M268.8,290.2 L269.2,295.6 L269.9,300.9 L271.0,306.2 L272.6,311.5 L274.5,316.7 L276.8,321.9 L279.5,327.0 L282.6,332.1 L286.0,337.0 L289.9,341.9 L294.1,346.7 L298.6,351.3 L303.5,355.9 L308.7,360.3 L314.3,364.6 L320.2,368.7 L326.3,372.7 L332.8,376.5 L339.6,380.2 L346.6,383.7 L353.9,387.0 L361.4,390.1 L369.1,393.1 L377.1,395.8 L385.3,398.3 L393.6,400.7 L402.1,402.8 L410.8,404.7 L419.6,406.4 L428.5,407.8 L437.5,409.1 L446.6,410.1 L455.8,410.8 L465.0,411.4 L474.2,411.7 L483.5,411.8 L487.1,411.9 L490.7,412.0 L494.3,412.4 L497.9,412.9 L501.3,413.5 L504.7,414.2 L508.1,415.0 L511.3,416.0 L514.3,417.1 L517.3,418.4 L520.1,419.7 L522.8,421.1 L585.7,457.5 L648.7,493.8 L711.7,530.2 L774.6,566.5 L837.6,602.9 L900.6,639.2 L963.5,675.6 L1026.5,712.0 L1030.4,714.1 L1034.5,716.1 L1038.8,718.0 L1043.2,719.8 L1047.8,721.5 L1052.5,723.0 L1057.4,724.3 L1062.3,725.6 L1067.4,726.7 L1072.5,727.6 L1077.8,728.4 L1083.0,729.0 L1088.4,729.5 L1093.8,729.8 L1099.1,729.9 L1104.5,729.9 L1109.9,729.8 L1115.3,729.5 L1120.6,729.0 L1125.9,728.4 L1131.2,727.6 L1136.3,726.7 L1141.4,725.6 L1146.3,724.3 L1151.2,723.0 L1155.9,721.5 L1160.5,719.8 L1164.9,718.0 L1169.2,716.1 L1173.3,714.1 L1177.2,712.0 L1214.6,690.4 L1218.3,688.1 L1221.8,685.7 L1225.1,683.3 L1228.2,680.7 L1231.1,678.1 L1233.7,675.3 L1236.1,672.5 L1238.2,669.7 L1240.1,666.7 L1241.7,663.8 L1243.1,660.8 L1244.1,657.7 L1245.0,654.6 L1245.5,651.5 L1245.8,648.4 M695.7,237.7 L695.7,232.3 L695.2,227.0 L694.3,221.7 L693.0,216.4 L691.3,211.1 L689.3,205.9 L686.8,200.7 L684.0,195.6 L680.7,190.6 L677.1,185.7 M275.3,206.0 L273.2,211.2 L271.5,216.4 L270.3,221.7 L269.4,227.1 L268.9,232.4 L268.8,237.7 L269.2,243.1 L269.9,248.4 L271.0,253.7 L272.6,259.0 L274.5,264.2 L276.8,269.4 L279.5,274.5 L282.6,279.6 L286.0,284.5 L289.9,289.4 L294.1,294.2 L298.6,298.8 L303.5,303.4 L308.7,307.8 L314.3,312.1 L320.2,316.2 L326.3,320.2 L332.8,324.0 L339.6,327.7 L346.6,331.2 L353.9,334.5 L361.4,337.6 L369.1,340.6 L377.1,343.3 L385.3,345.8 L393.6,348.2 L402.1,350.3 L410.8,352.2 L419.6,353.9 L428.5,355.3 L437.5,356.6 L446.6,357.6 L455.8,358.3 L465.0,358.9 L474.2,359.2 L483.5,359.3 L487.1,359.4 L490.7,359.5 L494.3,359.9 L497.9,360.4 L501.3,361.0 L504.7,361.7 L508.1,362.5 L511.3,363.5 L514.3,364.6 L517.3,365.9 L520.1,367.2 L522.8,368.6 L585.7,405.0 L648.7,441.3 L711.7,477.7 L774.6,514.0 L837.6,550.4 L900.6,586.7 L963.5,623.1 L1026.5,659.5 L1030.4,661.6 L1034.5,663.6 L1038.8,665.5 L1043.2,667.3 L1047.8,669.0 L1052.5,670.5 L1057.4,671.8 L1062.3,673.1 L1067.4,674.2 L1072.5,675.1 L1077.8,675.9 L1083.0,676.5 L1088.4,677.0 L1093.8,677.3 L1099.1,677.4 L1104.5,677.4 L1109.9,677.3 L1115.3,677.0 L1120.6,676.5 L1125.9,675.9 L1131.2,675.1 L1136.3,674.2 L1141.4,673.1 L1146.3,671.8 L1151.2,670.5 L1155.9,669.0 L1160.5,667.3 L1164.9,665.5 L1169.2,663.6 L1173.3,661.6 L1177.2,659.5 L1214.6,637.9 L1218.3,635.6 L1221.8,633.2 L1225.1,630.8 L1228.2,628.2 L1231.1,625.6 L1233.7,622.8 L1236.1,620.0 L1238.2,617.2 L1240.1,614.2 L1241.7,611.3 L1243.1,608.3 L1244.1,605.2 L1245.0,602.1 L1245.5,599.0 L1245.8,595.9 L1245.8,592.8 L1245.5,589.7 L1245.0,586.6 L1244.1,583.5 L1243.1,580.4 L1241.7,577.4 L1240.1,574.5 L1238.2,571.5 L1236.1,568.7 M699.8,250.1 L698.5,248.1 L697.5,246.1 L696.7,244.0 L696.1,241.9 L695.8,239.8 L695.7,237.7 M685.3,229.1 L686.4,229.2 L687.5,229.3 L688.6,229.5 L689.6,229.9 L690.5,230.3 L691.5,230.8 L692.3,231.3 L693.1,232.0 L693.8,232.7 L694.3,233.4 L694.8,234.2 L695.2,235.1 L695.5,235.9 L695.7,236.8 L695.7,237.7 M483.4,344.8 L483.4,345.5 L483.4,346.2 L483.4,347.1 L483.4,348.0 L483.5,348.9 L483.5,349.9 L483.5,351.0 L483.5,352.1 L483.5,353.2 L483.5,354.2 L483.5,355.3 L483.5,356.4 L483.5,357.4 L483.5,358.4 L483.5,359.3 M483.5,359.3 L483.5,414.4 M530.1,355.9 L529.4,356.4 L528.6,356.9 L527.8,357.6 L527.1,358.3 L526.4,359.1 L525.8,360.0 L525.2,360.9 L524.7,361.8 L524.2,362.8 L523.7,363.8 L523.4,364.8 L523.1,365.8 L522.9,366.8 L522.8,367.7 L522.8,368.6 M522.8,368.6 L522.8,423.7 M1033.9,646.7 L1033.1,647.2 L1032.3,647.8 L1031.6,648.4 L1030.9,649.2 L1030.2,650.0 L1029.5,650.8 L1028.9,651.7 L1028.4,652.7 L1027.9,653.6 L1027.5,654.6 L1027.1,655.6 L1026.9,656.6 L1026.7,657.6 L1026.5,658.5 L1026.5,659.5 M1026.5,659.5 L1026.5,714.5 M1169.8,646.7 L1170.6,647.2 L1171.4,647.8 L1172.1,648.4 L1172.8,649.2 L1173.5,650.0 L1174.2,650.8 L1174.8,651.7 L1175.3,652.7 L1175.8,653.6 L1176.2,654.6 L1176.6,655.6 L1176.8,656.6 L1177.0,657.6 L1177.1,658.5 L1177.2,659.5 M1177.2,659.5 L1177.2,714.5 M1207.2,625.1 L1208.0,625.6 L1208.8,626.2 L1209.5,626.8 L1210.2,627.6 L1210.9,628.4 L1211.6,629.2 L1212.2,630.1 L1212.7,631.1 L1213.2,632.0 L1213.6,633.0 L1214.0,634.0 L1214.2,635.0 L1214.4,636.0 L1214.6,636.9 L1214.6,637.9 M1214.6,637.9 L1214.6,692.9 M1207.2,546.6 L1208.0,546.2 L1208.8,545.9 L1209.5,545.7 L1210.2,545.6 L1210.9,545.6 L1211.6,545.7 L1212.2,545.9 M704.5,256.4 L705.3,256.0 L706.1,255.7 L706.8,255.5 L707.5,255.4 L708.2,255.4 L708.8,255.5 L709.4,255.7 M268.8,236.0 L268.8,288.6 M1245.8,594.4 L1245.8,646.9" fill="none" stroke="#0b0b0b" stroke-width="1.1" stroke-linejoin="round"/><defs><filter id="blur1" x="-50%" y="-50%" width="200%" height="200%"><feGaussianBlur stdDeviation="4"/></filter></defs><ellipse cx="1466" cy="100" rx="26" ry="9" fill="#888" opacity="0.28" filter="url(#blur1)" transform="rotate(-20 1466 100)"/><path d="M1459.5,18.6V27.6" stroke="#5fe05f" stroke-width="1.6"/><path d="M1423,84.3 L1428.4,82.8" stroke="#7f7ff2" stroke-width="1.6"/><path d="M1490.8,82 L1497.6,85.8" stroke="#f29a9a" stroke-width="1.8"/><polygon points="1459.5,27.8 1494.4,43.6 1459.5,62.4 1424.7,43.6" fill="rgba(224,224,224,0.62)" stroke="#8c8c8c" stroke-width="0.9" stroke-linejoin="round"/><polygon points="1424.7,43.6 1459.5,62.4 1459.5,104.3 1428.2,83.0" fill="rgba(218,218,218,0.62)" stroke="#8c8c8c" stroke-width="0.9" stroke-linejoin="round"/><polygon points="1459.5,62.4 1494.4,43.6 1491.0,82.6 1459.5,104.3" fill="rgba(206,206,206,0.62)" stroke="#8c8c8c" stroke-width="0.9" stroke-linejoin="round"/><text transform="matrix(0.72,0.37,-0.77,0.39,1457.6,45.8)" font-size="11" font-family="Liberation Sans, sans-serif" fill="#9b9b9b" text-anchor="middle">TOP</text><text transform="matrix(0.634,0.342,0.06,1.07,1442.0,77.4)" font-size="11" font-family="Liberation Sans, sans-serif" fill="#9b9b9b" text-anchor="middle">FRONT</text><text transform="matrix(0.62,-0.33,-0.06,1.07,1477.0,77.4)" font-size="11" font-family="Liberation Sans, sans-serif" fill="#9b9b9b" text-anchor="middle">RIGHT</text><text x="1459.5" y="18" font-size="13" font-family="Liberation Sans, sans-serif" fill="#66e066" text-anchor="middle">Y</text><text x="1416.6" y="93.4" font-size="13" font-family="Liberation Sans, sans-serif" fill="#7c7cf4" text-anchor="middle">Z</text><text x="1502" y="93.4" font-size="13" font-family="Liberation Sans, sans-serif" fill="#f48a8a" text-anchor="middle">X</text><rect x="1143" y="594.2" width="19.8" height="31" rx="8.6" fill="#e4e4e4" stroke="#222" stroke-width="1.5"/><path d="M1143.6,608.3 H1162.2" stroke="#222" stroke-width="1.3"/><path d="M1152.8,597.6 L1156.4,604 H1149.2Z M1152.8,621.2 L1156.4,614.8 H1149.2Z" fill="#111"/><path d="M1152,684.9 L1168,690.1 L1164,706.3 L1160.2,699.5 L1153.6,703.5 L1148.9,695.2 L1155.5,691.5Z" fill="#1f86bd" stroke="#1d4f80" stroke-width="1.7" stroke-linejoin="round"/><path d="M1152,684.9 L1168,690.1 L1164,706.3 L1160.2,699.5 L1153.6,703.5 L1148.9,695.2 L1155.5,691.5Z" fill="#1f86bd" stroke="#f1f1f1" stroke-width="0.9" stroke-linejoin="round"/></svg>
<div class="b" style="left:0.0px;top:0.0px;width:1.3px;height:850.0px;background:#8e8e8e;"></div><div class="b" style="left:1.3px;top:0.0px;width:1.3px;height:850.0px;background:#dedede;"></div><div class="b" style="left:7.0px;top:4.3px;width:299.4px;height:24.1px;background:#f2f2f2;box-shadow:inset 0 0 0 1px #c6c6c6;"></div><span class="t" style="left:31.6px;top:9.2px;font-size:10.5px;line-height:14px;color:#4a4a4a;letter-spacing:-0.376px;">BROWSER</span><div class="b" style="left:43.2px;top:34.2px;width:227.4px;height:19.4px;background:rgba(240,240,240,0.96);"></div><div class="b" style="left:68.0px;top:36.0px;width:177.8px;height:16.0px;background:#999999;"></div><span class="t" style="left:100.5px;top:37.2px;font-size:11px;line-height:14px;color:#ffffff;letter-spacing:0.328px;font-weight:bold;">Instructables Version v2</span><div class="b" style="left:61.1px;top:58.0px;width:133.8px;height:20.0px;background:rgba(240,240,240,0.96);"></div><span class="t" style="left:93.9px;top:61.3px;font-size:10.5px;line-height:14px;color:#2b2b2b;letter-spacing:0.043px;">Document Settings</span><div class="b" style="left:61.1px;top:82.0px;width:109.8px;height:20.0px;background:rgba(240,240,240,0.96);"></div><span class="t" style="left:93.9px;top:85.3px;font-size:10.5px;line-height:14px;color:#2b2b2b;letter-spacing:0.261px;">Named Views</span><div class="b" style="left:61.1px;top:106.0px;width:94.3px;height:20.0px;background:rgba(240,240,240,0.96);"></div><span class="t" style="left:119.1px;top:109.3px;font-size:10.5px;line-height:14px;color:#2b2b2b;letter-spacing:-0.182px;">Origin</span><div class="b" style="left:61.1px;top:130.0px;width:103.1px;height:20.0px;background:rgba(240,240,240,0.96);"></div><span class="t" style="left:119.1px;top:133.3px;font-size:10.5px;line-height:14px;color:#2b2b2b;letter-spacing:-0.001px;">Bodies</span><div class="b" style="left:61.1px;top:154.0px;width:114.4px;height:20.0px;background:rgba(240,240,240,0.96);"></div><span class="t" style="left:119.1px;top:157.3px;font-size:10.5px;line-height:14px;color:#2b2b2b;letter-spacing:0.101px;">Sketches</span><div class="b" style="left:1119.0px;top:124.0px;width:397.0px;height:375.2px;background:#f1f1f1;box-shadow:inset 0 0 0 1px #c9c9c9;"></div><div class="b" style="left:1119.0px;top:147.6px;width:397.0px;height:1.0px;background:#c9c9c9;"></div><span class="t" style="left:1143.8px;top:129.2px;font-size:10.5px;line-height:14px;color:#3c3c3c;letter-spacing:-0.625px;">EDIT FEATURE</span><span class="t" style="left:1131.7px;top:157.2px;font-size:10.5px;line-height:14px;color:#2b2b2b;letter-spacing:-0.255px;">Type</span><div class="b" style="left:1254.6px;top:150.8px;width:231.8px;height:26.2px;background:#ffffff;box-shadow:inset 0 0 0 1px #cfcfcf;border-radius:2px;"></div><span class="t" style="left:1277.7px;top:157.1px;font-size:10.5px;line-height:14px;color:#2b2b2b;letter-spacing:-0.314px;">Fillet</span><div class="b" style="left:1128.6px;top:184.2px;width:358.6px;height:112.0px;background:#ffffff;box-shadow:inset 0 0 0 1px #cfcfcf;border-radius:2px;"></div><div class="b" style="left:1129.6px;top:185.2px;width:356.6px;height:26.0px;background:#a9cdfa;"></div><span class="t" style="left:1134.1px;top:191.2px;font-size:10.5px;line-height:14px;color:#1f1f1f;letter-spacing:-0.096px;">16 Edges</span><div class="b" style="left:1285.4px;top:186.8px;width:56.2px;height:22.8px;background:#ffffff;box-shadow:inset 0 0 0 1px #c8c8c8;"></div><div class="b" style="left:1288.4px;top:189.6px;width:34.6px;height:14px;overflow:hidden;"><span class="t" style="left:0.0px;top:0.0px;font-size:10.5px;line-height:14px;color:#1f1f1f;letter-spacing:0.000px;letter-spacing:-0.15px;">handleEdgeFillet</span></div><span class="t" style="left:1325.9px;top:189.9px;font-size:11px;line-height:14px;color:#b9b9b9;letter-spacing:1.343px;font-style:italic;">fx</span><span class="t" style="left:1395.5px;top:191.2px;font-size:10.5px;line-height:14px;color:#1f1f1f;letter-spacing:0.129px;">Tangent (G1)</span><span class="t" style="left:1131.7px;top:309.2px;font-size:10.5px;line-height:14px;color:#2b2b2b;letter-spacing:-0.008px;">Radius Type</span><div class="b" style="left:1254.6px;top:302.7px;width:231.8px;height:26.1px;background:#ffffff;box-shadow:inset 0 0 0 1px #cfcfcf;border-radius:2px;"></div><span class="t" style="left:1277.7px;top:308.9px;font-size:10.5px;line-height:14px;color:#2b2b2b;letter-spacing:0.111px;">Constant</span><span class="t" style="left:1131.7px;top:339.2px;font-size:10.5px;line-height:14px;color:#2b2b2b;letter-spacing:0.151px;">Edges/Faces/Features</span><div class="b" style="left:1254.6px;top:332.7px;width:57.7px;height:26.4px;background:#0696d7;border-radius:2px;"></div><span class="t" style="left:1276.1px;top:339.2px;font-size:10.5px;line-height:14px;color:#ffffff;letter-spacing:0.103px;">Select</span><span class="t" style="left:1131.7px;top:369.4px;font-size:10.5px;line-height:14px;color:#2b2b2b;letter-spacing:-0.060px;">Tangent Chain</span><span class="t" style="left:1131.7px;top:399.4px;font-size:10.5px;line-height:14px;color:#2b2b2b;letter-spacing:0.175px;">Tangency Weight</span><div class="b" style="left:1255.0px;top:393.6px;width:230.8px;height:24.9px;background:#ffffff;box-shadow:inset 0 0 0 1px #c4c4c4;"></div><span class="t" style="left:1259.1px;top:398.6px;font-size:10px;line-height:14px;color:#5a3a7a;letter-spacing:0.000px;">1</span><div class="b" style="left:1120.7px;top:425.5px;width:384.3px;height:1.0px;background:#c6c6c6;"></div><span class="t" style="left:1131.7px;top:439.3px;font-size:10.5px;line-height:14px;color:#2b2b2b;letter-spacing:0.051px;">Corner Type</span><div class="b" style="left:1254.6px;top:433.0px;width:231.8px;height:26.1px;background:#ffffff;box-shadow:inset 0 0 0 1px #cfcfcf;border-radius:2px;"></div><span class="t" style="left:1277.7px;top:439.2px;font-size:10.5px;line-height:14px;color:#2b2b2b;letter-spacing:-0.103px;">Rolling Ball</span><div class="b" style="left:1119.0px;top:461.6px;width:397.0px;height:1.0px;background:#c9c9c9;"></div><div class="b" style="left:1377.0px;top:471.3px;width:59.8px;height:18.4px;background:#e6e6e6;box-shadow:inset 0 0 0 1px #b5b5b5;"></div><div class="b" style="left:1447.0px;top:471.3px;width:60.0px;height:18.4px;background:#e6e6e6;box-shadow:inset 0 0 0 1px #b5b5b5;"></div><span class="t" style="left:1397.9px;top:473.8px;font-size:11.5px;line-height:14px;color:#3a3a3a;letter-spacing:-0.216px;">OK</span><span class="t" style="left:1457.1px;top:473.8px;font-size:11.5px;line-height:14px;color:#3a3a3a;letter-spacing:0.441px;">Cancel</span><div class="b" style="left:7.3px;top:821.3px;width:299.4px;height:24.2px;background:#f2f2f2;box-shadow:inset 0 0 0 1px #cdcdcd;"></div><span class="t" style="left:31.8px;top:826.4px;font-size:10.5px;line-height:14px;color:#4a4a4a;letter-spacing:-0.736px;">COMMENTS</span><div class="b" style="left:262.0px;top:823.0px;width:71.2px;height:20.0px;background:#ffffff;box-shadow:inset 0 0 0 1px #d0d0d0;"></div><div class="b" style="left:264.6px;top:826.0px;width:64.8px;height:14.4px;background:#0a64d2;"></div><span class="t" style="left:265.0px;top:826.2px;font-size:10.5px;line-height:14px;color:#ffffff;letter-spacing:-0.250px;">ndleEdgeFillet</span><div class="b" style="left:329.4px;top:826.0px;width:1.1px;height:14.4px;background:#111;"></div><div class="b" style="left:333.2px;top:823.0px;width:23.3px;height:20.0px;background:#f5f5f5;"></div><div class="b" style="left:644.0px;top:821.8px;width:236.8px;height:24.0px;background:#f1f1f1;"></div><span class="t" style="left:1464.7px;top:827.4px;font-size:11px;line-height:14px;color:#2a2a2a;letter-spacing:-0.122px;font-weight:bold;">2 Chain</span><svg class="ic" width="1516" height="850" viewBox="0 0 1516 850"><path d="M12,17 L17,14 L17,20Z M17.6,17 L22.6,14 L22.6,20Z" fill="#1a1a1a"/><circle cx="290.5" cy="16" r="4.7" fill="#1a1a1a"/><rect x="287.6" y="15.2" width="5.8" height="1.7" fill="#fff"/><path d="M302.5,11.5V21.5" stroke="#555" stroke-width="1"/><path d="M304.5,13V20" stroke="#aaa" stroke-width="1"/><defs><linearGradient id="trg" x1="0" y1="0" x2="1" y2="1"><stop offset="0.3" stop-color="#e0e0e0"/><stop offset="1" stop-color="#555"/></linearGradient></defs><path d="M24.3,49 L34.3,38.8 L34.3,49Z" fill="url(#trg)" stroke="#111" stroke-width="1.2" stroke-linejoin="round"/><path d="M43.8,61.8 L51.3,68.0 L43.8,74.2Z" fill="#e9e9e9" stroke="#1c1c1c" stroke-width="1.5" stroke-linejoin="round"/><path d="M43.8,85.8 L51.3,92.0 L43.8,98.2Z" fill="#e9e9e9" stroke="#1c1c1c" stroke-width="1.5" stroke-linejoin="round"/><path d="M43.8,109.8 L51.3,116.0 L43.8,122.2Z" fill="#e9e9e9" stroke="#1c1c1c" stroke-width="1.5" stroke-linejoin="round"/><path d="M43.8,133.8 L51.3,140.0 L43.8,146.2Z" fill="#e9e9e9" stroke="#1c1c1c" stroke-width="1.5" stroke-linejoin="round"/><path d="M43.8,157.8 L51.3,164.0 L43.8,170.2Z" fill="#e9e9e9" stroke="#1c1c1c" stroke-width="1.5" stroke-linejoin="round"/><path d="M45.7,44.2 Q54.0,34.7 62.3,44.2 Q54.0,53.7 45.7,44.2Z" fill="#9a9a9a"/><circle cx="54.0" cy="44.2" r="2.6" fill="none" stroke="#f4f4f4" stroke-width="1.3"/><path d="M71.3,40.5 L75.5,36.7 H86.6 V47.2 L82.6,51.3 H71.3Z" fill="#f4f5f8" stroke="#2a2a2a" stroke-width="1.2" stroke-linejoin="round"/><path d="M72,41 H82.3 V50.8 H72Z" fill="#e3e5ec"/><path d="M82.6,41 L86.2,37.4 V47 L82.6,50.8Z" fill="#d4d7e0"/><circle cx="256.5" cy="44.2" r="5.9" fill="#fafafa" stroke="#222" stroke-width="1.2"/><circle cx="256.5" cy="44.2" r="2.5" fill="#222"/><path d="M79.78,66.63L79.78,69.37L77.51,69.48L76.94,70.85L78.47,72.53L76.53,74.47L74.85,72.94L73.48,73.51L73.37,75.78L70.63,75.78L70.52,73.51L69.15,72.94L67.47,74.47L65.53,72.53L67.06,70.85L66.49,69.48L64.22,69.37L64.22,66.63L66.49,66.52L67.06,65.15L65.53,63.47L67.47,61.53L69.15,63.06L70.52,62.49L70.63,60.22L73.37,60.22L73.48,62.49L74.85,63.06L76.53,61.53L78.47,63.47L76.94,65.15L77.51,66.52Z M72.0,65.3 a2.7,2.7 0 1,0 0.01,0Z" fill="#9a9a9a" fill-rule="evenodd"/><path d="M64.2,86.1 h6.2 l1.2,1.6 h8.4 v10.6 h-15.8Z" fill="#9a9a9a"/><path d="M64.2,88.7 h8" stroke="#f1f1f1" stroke-width="0.8"/><path d="M64.0,116.0 Q72.0,107.5 80.0,116.0 Q72.0,124.5 64.0,116.0Z" fill="none" stroke="#9a9a9a" stroke-width="1.1"/><circle cx="72.0" cy="116.0" r="2.6" fill="none" stroke="#9a9a9a" stroke-width="1.1"/><path d="M65.8,110.2 L77.8,121.6" stroke="#8c8c8c" stroke-width="1.1"/><path d="M89.2,110.1 h6.2 l1.2,1.6 h8.4 v10.6 h-15.8Z" fill="#9a9a9a"/><path d="M89.2,112.7 h8" stroke="#f1f1f1" stroke-width="0.8"/><path d="M63.7,140.0 Q72.0,130.5 80.3,140.0 Q72.0,149.5 63.7,140.0Z" fill="#9a9a9a"/><circle cx="72.0" cy="140.0" r="2.6" fill="none" stroke="#f4f4f4" stroke-width="1.3"/><path d="M89.2,134.1 h6.2 l1.2,1.6 h8.4 v10.6 h-15.8Z" fill="#9a9a9a"/><path d="M89.2,136.7 h8" stroke="#f1f1f1" stroke-width="0.8"/><path d="M64.0,164.0 Q72.0,155.5 80.0,164.0 Q72.0,172.5 64.0,164.0Z" fill="none" stroke="#9a9a9a" stroke-width="1.1"/><circle cx="72.0" cy="164.0" r="2.6" fill="none" stroke="#9a9a9a" stroke-width="1.1"/><path d="M65.8,158.2 L77.8,169.6" stroke="#8c8c8c" stroke-width="1.1"/><path d="M89.2,158.1 h6.2 l1.2,1.6 h8.4 v10.6 h-15.8Z" fill="#9a9a9a"/><path d="M89.2,160.7 h8" stroke="#f1f1f1" stroke-width="0.8"/><path d="M1121.5,131.5V141" stroke="#555" stroke-width="1"/><path d="M1123.4,133V140" stroke="#aaa" stroke-width="1"/><circle cx="1135.4" cy="136.2" r="4.6" fill="#1a1a1a"/><rect x="1132.5" y="135.4" width="5.8" height="1.7" fill="#fff"/><path d="M1503.8,133.2 L1508.3,136.2 L1503.8,139.2Z M1508.6,133.2 L1513.1,136.2 L1508.6,139.2Z" fill="#1a1a1a"/><path d="M1474.8,162.2 h7 l-3.5,4.2Z" fill="#1a1a1a"/><path d="M1474.8,314.2 h7 l-3.5,4.2Z" fill="#1a1a1a"/><path d="M1474.8,444.4 h7 l-3.5,4.2Z" fill="#1a1a1a"/><g transform="translate(1258.0,156.1)"><path d="M0.6,3.6 L3.4,0.7 H8.4 Q15.2,1.4 15.4,9 V12.6 L12.6,15.4 H0.6Z" fill="#dcdcdc" stroke="#3a3a3a" stroke-width="1" stroke-linejoin="round"/><path d="M12.4,10.4 L15.2,8.6 V12.5 L12.6,15.2Z" fill="#bdbdbd"/><path d="M8.2,0.6 Q15.6,1.2 15.6,9.4 L12.6,10.6 Q12.8,4.6 6.6,2.6Z" fill="#4a9cd6"/></g><g transform="translate(1269.2,190.2)"><path d="M0.6,3.6 L3.4,0.7 H8.4 Q15.2,1.4 15.4,9 V12.6 L12.6,15.4 H0.6Z" fill="#dcdcdc" stroke="#3a3a3a" stroke-width="1" stroke-linejoin="round"/><path d="M12.4,10.4 L15.2,8.6 V12.5 L12.6,15.2Z" fill="#bdbdbd"/><path d="M8.2,0.6 Q15.6,1.2 15.6,9.4 L12.6,10.6 Q12.8,4.6 6.6,2.6Z" fill="#4a9cd6"/></g><g transform="translate(1258.0,308.0)"><path d="M0.6,3.6 L3.4,0.7 H8.4 Q15.2,1.4 15.4,9 V12.6 L12.6,15.4 H0.6Z" fill="#dcdcdc" stroke="#3a3a3a" stroke-width="1" stroke-linejoin="round"/><path d="M12.4,10.4 L15.2,8.6 V12.5 L12.6,15.2Z" fill="#bdbdbd"/><path d="M8.2,0.6 Q15.6,1.2 15.6,9.4 L12.6,10.6 Q12.8,4.6 6.6,2.6Z" fill="#4a9cd6"/></g><g transform="translate(1375.6,190)"><path d="M0.8,1.8 L3.6,0.4 L0.9,6.5Z" fill="#fff" stroke="#222" stroke-width="0.9" stroke-linejoin="round"/><path d="M0.9,6.6 L0.9,15 L5.4,10.6 L5.2,6.2Z" fill="#e8e8e8" stroke="#222" stroke-width="0.9" stroke-linejoin="round"/><path d="M3.4,0.6 L7.2,0.3 L14.6,6.2 L10,10.4 L5.2,6.4 L0.9,6.6Z" fill="#4f86c0" stroke="#1b3f78" stroke-width="0.9" stroke-linejoin="round"/><path d="M5,2.4 L7,1.6 L12.6,6.2 L10,8.6Z" fill="#a9c7e6" opacity="0.75"/></g><path d="M1139.2,280.8h9.6 M1144,276v9.6" stroke="#2a2a2a" stroke-width="1.9"/><path d="M1165.9,277 l7.6,7.6 M1173.5,277 l-7.6,7.6" stroke="#2a2a2a" stroke-width="1.9"/><path d="M1263.6,339.2 L1263.6,351.6 L1266.4,349 L1268.4,353.4 L1270.3,352.5 L1268.3,348.2 L1272,348Z" fill="#2a2a2a" stroke="#e8f4fb" stroke-width="0.7" stroke-linejoin="round"/><rect x="1259.8" y="369.4" width="12.4" height="12.4" rx="2.3" fill="#e9e9e9" stroke="#2d2d2d" stroke-width="1.2"/><path d="M1262.4,375.6 L1265.2,379 L1270.2,371.6" fill="none" stroke="#1c1c1c" stroke-width="1.5" stroke-linecap="round" stroke-linejoin="round"/><g transform="translate(1257.6,438)"><path d="M1,6 H8.6 V15.4 H1Z" fill="#e4e4e4" stroke="#3a3a3a" stroke-width="0.9"/><path d="M1.4,5 Q2.6,1.4 7.4,0.8 L13.4,0.7 Q15.6,1.4 15.2,4.4 L14,5.6 H1.4Z" fill="#5aa5dc"/><path d="M9.2,5.4 Q13.4,5.4 13.6,7.4 V15 H9.2Z" fill="#3f8fce"/><path d="M15.6,5.6 V12.4" stroke="#3a3a3a" stroke-width="0.9"/></g><circle cx="1134" cy="480.8" r="5.6" fill="#111"/><rect x="1133" y="479.6" width="2.1" height="4.4" fill="#fff"/><rect x="1132.2" y="479.6" width="2" height="1" fill="#fff"/><rect x="1132.2" y="483.2" width="3.8" height="1" fill="#fff"/><circle cx="1134" cy="477.6" r="1.15" fill="#fff"/><path d="M255.2,824.5V843 M257.2,824.5V843" stroke="#bdbdbd" stroke-width="1" stroke-dasharray="1,1"/><circle cx="345.3" cy="828.3" r="1.25" fill="#777"/><circle cx="345.3" cy="833.2" r="1.25" fill="#777"/><circle cx="345.3" cy="838.1" r="1.25" fill="#777"/><path d="M647.7,833.8 A7.5,3.7 0 0 1 662.5,834.6" fill="none" stroke="#222" stroke-width="1.3"/><path d="M654.5,841.8V830.8H652.5L655.5,825.7L658.5,830.8H656.5V841.8Z" fill="#fafafa" stroke="#222" stroke-width="0.9" stroke-linejoin="round"/><path d="M662.5,834.6 A7.5,3.7 0 0 1 650.2,837.3" fill="none" stroke="#222" stroke-width="1.3"/><path d="M647.6,836.2 l4.2,-1.6 l-0.6,4.6Z" fill="#222"/><path d="M668.0,832 h6 l-3,3.6Z" fill="#222"/><path d="M682.4,831.2 L685.6,826.6 L688.2,829 L692.6,827.2 V831.2" fill="#bfc5cf" stroke="#3a4150" stroke-width="1"/><rect x="680.8" y="831.2" width="14.8" height="10.2" fill="#f4f4f4" stroke="#3a4150" stroke-width="1.3"/><rect x="684" y="834.2" width="8.4" height="4" fill="#aab2c2" stroke="#3a4150" stroke-width="0.9"/><path d="M709.8,832.4 L711.6,832.2 L712.8,834.6 V828.4 Q713.6,827.2 714.6,828.4 V826.8 Q715.6,825.6 716.6,826.8 V827.6 Q717.6,826.6 718.6,827.8 V829.4 Q719.8,828.8 720.6,830 V835 Q720.4,839.6 718.6,841.6 H712.6 Q709.2,837 707.2,834.2 Q707.8,832.6 709.8,832.4Z" fill="#eef1f5" stroke="#2e3645" stroke-width="1.1" stroke-linejoin="round"/><path d="M714.7,828.6V833.4 M716.7,827.4V833.2 M718.7,829V833.6" stroke="#2e3645" stroke-width="0.9"/><circle cx="736.5" cy="833" r="4.5" fill="#d7e6ea" stroke="#2e3645" stroke-width="1.2"/><path d="M739.9,836.5 L744.2,840.2" stroke="#2e3645" stroke-width="2.4" stroke-linecap="round"/><path d="M743.2,828.6h5 M745.7,826.2v4.8 M743.2,832.6h5" stroke="#222" stroke-width="1"/><rect x="758.8" y="826.6" width="14.6" height="14.6" fill="none" stroke="#333" stroke-width="1" stroke-dasharray="2,1.6"/><circle cx="764.8" cy="832.4" r="5.8" fill="#d7e6ea" stroke="#2e3645" stroke-width="1.2"/><path d="M769,836.8 L773.2,840.8" stroke="#2e3645" stroke-width="2.6" stroke-linecap="round"/><path d="M779.0,832 h6 l-3,3.6Z" fill="#222"/><rect x="791.4" y="826.4" width="15.4" height="12.2" rx="1.2" fill="#f4f4f4" stroke="#444" stroke-width="1.1"/><rect x="794" y="828.7" width="10.2" height="7.6" rx="0.8" fill="#a9c4e6" stroke="#1f3a75" stroke-width="1"/><path d="M796.4,839 h5.6 l1,2.2 h-7.6Z" fill="#f4f4f4" stroke="#444" stroke-width="0.9"/><path d="M809.2,832 h6 l-3,3.6Z" fill="#222"/><defs><linearGradient id="grg" x1="0" y1="0" x2="0" y2="1"><stop offset="0" stop-color="#5e5e5e"/><stop offset="1" stop-color="#8d96a8"/></linearGradient></defs><rect x="822.4" y="826.2" width="15.4" height="15.4" rx="1" fill="url(#grg)"/><path d="M823.6,827.4h1.7v1.7h-1.7ZM823.6,830.4h1.7v1.7h-1.7ZM823.6,833.4h1.7v1.7h-1.7ZM823.6,836.4h1.7v1.7h-1.7ZM823.6,839.4h1.7v1.7h-1.7ZM826.6,827.4h1.7v1.7h-1.7ZM826.6,830.4h1.7v1.7h-1.7ZM826.6,833.4h1.7v1.7h-1.7ZM826.6,836.4h1.7v1.7h-1.7ZM826.6,839.4h1.7v1.7h-1.7ZM829.6,827.4h1.7v1.7h-1.7ZM829.6,830.4h1.7v1.7h-1.7ZM829.6,833.4h1.7v1.7h-1.7ZM829.6,836.4h1.7v1.7h-1.7ZM829.6,839.4h1.7v1.7h-1.7ZM832.6,827.4h1.7v1.7h-1.7ZM832.6,830.4h1.7v1.7h-1.7ZM832.6,833.4h1.7v1.7h-1.7ZM832.6,836.4h1.7v1.7h-1.7ZM832.6,839.4h1.7v1.7h-1.7ZM835.6,827.4h1.7v1.7h-1.7ZM835.6,830.4h1.7v1.7h-1.7ZM835.6,833.4h1.7v1.7h-1.7ZM835.6,836.4h1.7v1.7h-1.7ZM835.6,839.4h1.7v1.7h-1.7Z" fill="#f6f6f6"/><path d="M840.0,832 h6 l-3,3.6Z" fill="#222"/><rect x="853" y="827.2" width="15" height="12.6" rx="1.2" fill="#1f3a75"/><rect x="854.1" y="828.3" width="5.8" height="4.6" fill="#a9c4e6"/><rect x="855.7" y="829.8" width="2.6" height="1.6" fill="#8db0dc"/><rect x="861.1" y="828.3" width="5.8" height="4.6" fill="#a9c4e6"/><rect x="862.7" y="829.8" width="2.6" height="1.6" fill="#8db0dc"/><rect x="854.1" y="834.1" width="5.8" height="4.6" fill="#a9c4e6"/><rect x="855.7" y="835.6" width="2.6" height="1.6" fill="#8db0dc"/><rect x="861.1" y="834.1" width="5.8" height="4.6" fill="#a9c4e6"/><rect x="862.7" y="835.6" width="2.6" height="1.6" fill="#8db0dc"/><path d="M871.0,832 h6 l-3,3.6Z" fill="#222"/></svg>
</body></html>
